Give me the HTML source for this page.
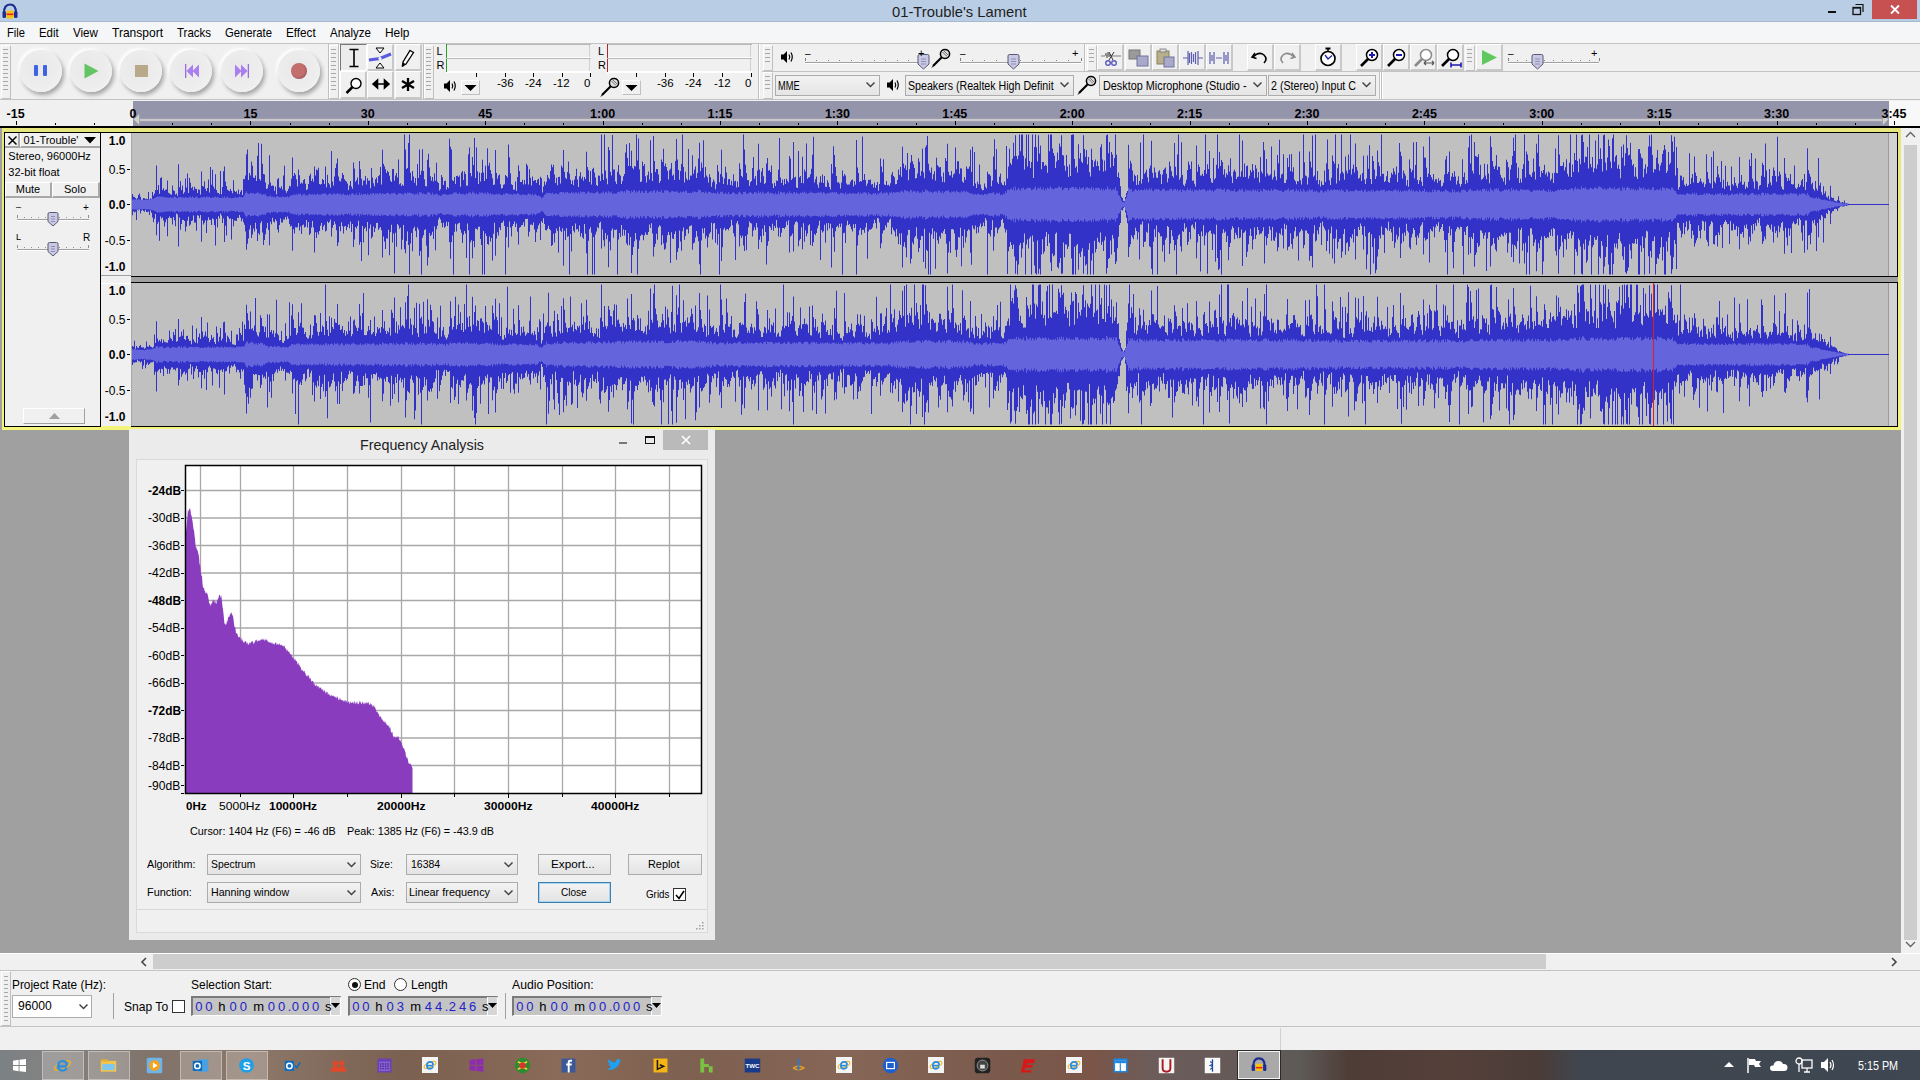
<!DOCTYPE html><html><head><meta charset="utf-8"><style>
html,body{margin:0;padding:0;width:1920px;height:1080px;overflow:hidden;background:#a0a0a0;}
body{position:relative;font-family:"Liberation Sans", sans-serif;}
.t{position:absolute;white-space:nowrap;line-height:1;}
.r{position:absolute;}
svg.r{overflow:visible}
</style></head><body>
<div class="r" style="left:0px;top:0px;width:1920px;height:22px;background:#b9cde4"></div>
<div class="r" style="left:0px;top:21px;width:1920px;height:1px;background:#a6b9cf"></div>
<div class="t" style="left:892.00px;top:4.00px;font-size:15px;color:#1e1e1e;font-weight:normal;transform:scaleX(0.9850);transform-origin:0 0;">01-Trouble's Lament</div>
<svg class="r" style="left:1px;top:2px" width="18" height="18" viewBox="0 0 18 18"><path d="M3 11 Q3 2.5 9 2.5 Q15 2.5 15 11" fill="none" stroke="#1c2c90" stroke-width="2.2"/><rect x="1.5" y="9" width="3.5" height="7" rx="1.5" fill="#1c2c90"/><rect x="13" y="9" width="3.5" height="7" rx="1.5" fill="#1c2c90"/><rect x="5.5" y="8.5" width="7" height="8" rx="1" fill="#f5c20c"/><rect x="5.5" y="11.5" width="7" height="1.6" fill="#e22"/></svg>
<div class="r" style="left:1828px;top:11px;width:8px;height:2px;background:#111"></div>
<svg class="r" style="left:1852px;top:3px" width="12" height="12" viewBox="0 0 12 12"><rect x="1" y="4.5" width="7.5" height="7" fill="none" stroke="#111" stroke-width="1.3"/><rect x="1" y="4" width="7.5" height="1.6" fill="#111"/><path d="M3.5 1.5 H11 V9" fill="none" stroke="#111" stroke-width="1.2"/></svg>
<div class="r" style="left:1872px;top:0px;width:45px;height:19px;background:#c75050"></div>
<svg class="r" style="left:1890px;top:5px" width="10" height="9" viewBox="0 0 10 9"><path d="M1 0.5 L9 8.5 M9 0.5 L1 8.5" stroke="#fff" stroke-width="1.8"/></svg>
<div class="r" style="left:0px;top:22px;width:1920px;height:21px;background:#f5f6f7"></div>
<div class="t" style="left:7.20px;top:26.30px;font-size:13px;color:#000;font-weight:normal;transform:scaleX(0.8595);transform-origin:0 0;">File</div>
<div class="t" style="left:39.00px;top:26.30px;font-size:13px;color:#000;font-weight:normal;transform:scaleX(0.8750);transform-origin:0 0;">Edit</div>
<div class="t" style="left:72.80px;top:26.30px;font-size:13px;color:#000;font-weight:normal;transform:scaleX(0.8936);transform-origin:0 0;">View</div>
<div class="t" style="left:112.00px;top:26.30px;font-size:13px;color:#000;font-weight:normal;transform:scaleX(0.9248);transform-origin:0 0;">Transport</div>
<div class="t" style="left:177.00px;top:26.30px;font-size:13px;color:#000;font-weight:normal;transform:scaleX(0.8827);transform-origin:0 0;">Tracks</div>
<div class="t" style="left:225.00px;top:26.30px;font-size:13px;color:#000;font-weight:normal;transform:scaleX(0.8672);transform-origin:0 0;">Generate</div>
<div class="t" style="left:286.00px;top:26.30px;font-size:13px;color:#000;font-weight:normal;transform:scaleX(0.8998);transform-origin:0 0;">Effect</div>
<div class="t" style="left:330.00px;top:26.30px;font-size:13px;color:#000;font-weight:normal;transform:scaleX(0.8864);transform-origin:0 0;">Analyze</div>
<div class="t" style="left:385.00px;top:26.30px;font-size:13px;color:#000;font-weight:normal;transform:scaleX(0.9162);transform-origin:0 0;">Help</div>
<div class="r" style="left:0px;top:43px;width:1920px;height:57px;background:#f0f0f0"></div>
<div class="r" style="left:0px;top:43px;width:1920px;height:1px;background:#c3c3c3"></div>
<div class="r" style="left:0px;top:99px;width:1920px;height:1px;background:#c3c3c3"></div>
<div class="r" style="left:0px;top:44px;width:329px;height:55px;background:#f0f0f0;border-right:1px solid #c0c0c0;box-sizing:border-box"></div>
<div class="r" style="left:1px;top:45px;width:10px;height:54px;background:#f0f0f0;border-left:1px solid #fff;border-top:1px solid #fff;box-sizing:border-box;border-right:1px solid #c0c0c0;border-bottom:1px solid #c0c0c0"></div>
<svg class="r" style="left:1px;top:45px" width="10" height="54" viewBox="0 0 10 54"><rect x="2" y="4" width="5" height="1" fill="#a8a8a8"/><rect x="2" y="8" width="5" height="1" fill="#a8a8a8"/><rect x="2" y="12" width="5" height="1" fill="#a8a8a8"/><rect x="2" y="16" width="5" height="1" fill="#a8a8a8"/><rect x="2" y="20" width="5" height="1" fill="#a8a8a8"/><rect x="2" y="24" width="5" height="1" fill="#a8a8a8"/><rect x="2" y="28" width="5" height="1" fill="#a8a8a8"/><rect x="2" y="32" width="5" height="1" fill="#a8a8a8"/><rect x="2" y="36" width="5" height="1" fill="#a8a8a8"/><rect x="2" y="40" width="5" height="1" fill="#a8a8a8"/><rect x="2" y="44" width="5" height="1" fill="#a8a8a8"/></svg>
<div class="r" style="left:329px;top:45px;width:10px;height:54px;background:#f0f0f0;border-left:1px solid #fff;border-top:1px solid #fff;box-sizing:border-box;border-right:1px solid #c0c0c0;border-bottom:1px solid #c0c0c0"></div>
<svg class="r" style="left:329px;top:45px" width="10" height="54" viewBox="0 0 10 54"><rect x="2" y="4" width="5" height="1" fill="#a8a8a8"/><rect x="2" y="8" width="5" height="1" fill="#a8a8a8"/><rect x="2" y="12" width="5" height="1" fill="#a8a8a8"/><rect x="2" y="16" width="5" height="1" fill="#a8a8a8"/><rect x="2" y="20" width="5" height="1" fill="#a8a8a8"/><rect x="2" y="24" width="5" height="1" fill="#a8a8a8"/><rect x="2" y="28" width="5" height="1" fill="#a8a8a8"/><rect x="2" y="32" width="5" height="1" fill="#a8a8a8"/><rect x="2" y="36" width="5" height="1" fill="#a8a8a8"/><rect x="2" y="40" width="5" height="1" fill="#a8a8a8"/><rect x="2" y="44" width="5" height="1" fill="#a8a8a8"/></svg>
<div class="r" style="left:20px;top:50px;width:42px;height:42px;border-radius:50%;background:radial-gradient(circle at 42% 42%, #e8e8e8 0%, #ededed 55%, #f4f4f4 100%);box-shadow:2px 3px 4px rgba(0,0,0,0.32), -2px -2px 3px rgba(255,255,255,0.95)"></div>
<div class="r" style="left:70px;top:50px;width:42px;height:42px;border-radius:50%;background:radial-gradient(circle at 42% 42%, #e8e8e8 0%, #ededed 55%, #f4f4f4 100%);box-shadow:2px 3px 4px rgba(0,0,0,0.32), -2px -2px 3px rgba(255,255,255,0.95)"></div>
<div class="r" style="left:120px;top:50px;width:42px;height:42px;border-radius:50%;background:radial-gradient(circle at 42% 42%, #e8e8e8 0%, #ededed 55%, #f4f4f4 100%);box-shadow:2px 3px 4px rgba(0,0,0,0.32), -2px -2px 3px rgba(255,255,255,0.95)"></div>
<div class="r" style="left:170px;top:50px;width:42px;height:42px;border-radius:50%;background:radial-gradient(circle at 42% 42%, #e8e8e8 0%, #ededed 55%, #f4f4f4 100%);box-shadow:2px 3px 4px rgba(0,0,0,0.32), -2px -2px 3px rgba(255,255,255,0.95)"></div>
<div class="r" style="left:221px;top:50px;width:42px;height:42px;border-radius:50%;background:radial-gradient(circle at 42% 42%, #e8e8e8 0%, #ededed 55%, #f4f4f4 100%);box-shadow:2px 3px 4px rgba(0,0,0,0.32), -2px -2px 3px rgba(255,255,255,0.95)"></div>
<div class="r" style="left:278px;top:50px;width:42px;height:42px;border-radius:50%;background:radial-gradient(circle at 42% 42%, #e8e8e8 0%, #ededed 55%, #f4f4f4 100%);box-shadow:2px 3px 4px rgba(0,0,0,0.32), -2px -2px 3px rgba(255,255,255,0.95)"></div>
<div class="r" style="left:34px;top:65px;width:4px;height:11px;background:#3e63e6;border-radius:1px"></div>
<div class="r" style="left:43px;top:65px;width:4px;height:11px;background:#3e63e6;border-radius:1px"></div>
<svg class="r" style="left:84px;top:63px" width="17" height="17" viewBox="0 0 17 17"><path d="M0.5 0.5 L14.5 8 L0.5 15.5 Z" fill="#62c462"/></svg>
<div class="r" style="left:135px;top:65px;width:13px;height:12px;background:#b8a98a"></div>
<svg class="r" style="left:184px;top:63px" width="16" height="16" viewBox="0 0 16 16"><rect x="1" y="1" width="1.3" height="14" fill="#9b6ce0"/><path d="M9 1.5 L2.5 8 L9 14.5Z M15 1.5 L8.5 8 L15 14.5Z" fill="#a97ef0"/></svg>
<svg class="r" style="left:234px;top:63px" width="16" height="16" viewBox="0 0 16 16"><rect x="13.7" y="1" width="1.3" height="14" fill="#9b6ce0"/><path d="M7 1.5 L13.5 8 L7 14.5Z M1 1.5 L7.5 8 L1 14.5Z" fill="#a97ef0"/></svg>
<div class="r" style="left:291px;top:63px;width:16px;height:16px;border-radius:50%;background:#c46e6e;box-shadow:inset -1px -1px 2px rgba(0,0,0,0.2)"></div>
<div class="r" style="left:338px;top:44px;width:1px;height:55px;background:#c0c0c0"></div>
<div class="r" style="left:339px;top:44px;width:1px;height:55px;background:#fff"></div>
<div class="r" style="left:340px;top:44px;width:27px;height:27px;background:#ececec;border-left:1px solid #777;border-top:1px solid #777;border-right:1px solid #fff;border-bottom:1px solid #fff;box-sizing:border-box"></div>
<div class="r" style="left:340px;top:71px;width:27px;height:28px;background:#f0f0f0;border-left:1px solid #fff;border-top:1px solid #fff;border-right:2px solid #c8c8c8;border-bottom:2px solid #c8c8c8;box-sizing:border-box"></div>
<div class="r" style="left:367px;top:44px;width:27px;height:27px;background:#f0f0f0;border-left:1px solid #fff;border-top:1px solid #fff;border-right:2px solid #c8c8c8;border-bottom:2px solid #c8c8c8;box-sizing:border-box"></div>
<div class="r" style="left:367px;top:71px;width:27px;height:28px;background:#f0f0f0;border-left:1px solid #fff;border-top:1px solid #fff;border-right:2px solid #c8c8c8;border-bottom:2px solid #c8c8c8;box-sizing:border-box"></div>
<div class="r" style="left:395px;top:44px;width:27px;height:27px;background:#f0f0f0;border-left:1px solid #fff;border-top:1px solid #fff;border-right:2px solid #c8c8c8;border-bottom:2px solid #c8c8c8;box-sizing:border-box"></div>
<div class="r" style="left:395px;top:71px;width:27px;height:28px;background:#f0f0f0;border-left:1px solid #fff;border-top:1px solid #fff;border-right:2px solid #c8c8c8;border-bottom:2px solid #c8c8c8;box-sizing:border-box"></div>
<svg class="r" style="left:346px;top:48px" width="16" height="20" viewBox="0 0 16 20"><path d="M3.5 1.5 H12.5 M8 1.5 V18.5 M3.5 18.5 H12.5" stroke="#000" stroke-width="1.6" fill="none"/></svg>
<svg class="r" style="left:368px;top:46px" width="26" height="24" viewBox="0 0 26 24"><path d="M8 2 H16 L12 7 Z M8 22 H16 L12 17Z" fill="#fff" stroke="#000" stroke-width="1"/><path d="M1 14 L12 12.5 L23 8" stroke="#5a5ae0" stroke-width="3" fill="none"/><circle cx="12" cy="12.5" r="1.5" fill="#fff"/></svg>
<svg class="r" style="left:401px;top:49px" width="14" height="18" viewBox="0 0 14 18"><path d="M9 1.5 L12.5 3.5 L5 15 L1.5 17 L2 13 Z" fill="#fff" stroke="#000" stroke-width="1.3"/><path d="M1.5 17 L3 14" stroke="#000" stroke-width="2"/></svg>
<svg class="r" style="left:345px;top:77px" width="18" height="18" viewBox="0 0 18 18"><circle cx="11" cy="6.5" r="5" fill="#fff" stroke="#000" stroke-width="1.4"/><path d="M7.5 10 L1.5 16" stroke="#000" stroke-width="2.5"/></svg>
<svg class="r" style="left:372px;top:79px" width="18" height="10" viewBox="0 0 18 10"><path d="M1 5 H17 M1 5 L5.5 1 V9 Z M17 5 L12.5 1 V9 Z" stroke="#000" stroke-width="1.6" fill="#000"/></svg>
<svg class="r" style="left:401px;top:77px" width="14" height="15" viewBox="0 0 14 15"><path d="M7 1 V14 M1 4 L13 11 M13 4 L1 11" stroke="#000" stroke-width="2.3"/></svg>
<div class="r" style="left:423px;top:44px;width:1px;height:55px;background:#c0c0c0"></div>
<div class="r" style="left:424px;top:44px;width:1px;height:55px;background:#fff"></div>
<div class="r" style="left:424px;top:45px;width:10px;height:54px;background:#f0f0f0;border-left:1px solid #fff;border-top:1px solid #fff;box-sizing:border-box;border-right:1px solid #c0c0c0;border-bottom:1px solid #c0c0c0"></div>
<svg class="r" style="left:424px;top:45px" width="10" height="54" viewBox="0 0 10 54"><rect x="2" y="4" width="5" height="1" fill="#a8a8a8"/><rect x="2" y="8" width="5" height="1" fill="#a8a8a8"/><rect x="2" y="12" width="5" height="1" fill="#a8a8a8"/><rect x="2" y="16" width="5" height="1" fill="#a8a8a8"/><rect x="2" y="20" width="5" height="1" fill="#a8a8a8"/><rect x="2" y="24" width="5" height="1" fill="#a8a8a8"/><rect x="2" y="28" width="5" height="1" fill="#a8a8a8"/><rect x="2" y="32" width="5" height="1" fill="#a8a8a8"/><rect x="2" y="36" width="5" height="1" fill="#a8a8a8"/><rect x="2" y="40" width="5" height="1" fill="#a8a8a8"/><rect x="2" y="44" width="5" height="1" fill="#a8a8a8"/></svg>
<div class="r" style="left:446px;top:45px;width:145px;height:13px;"></div>
<div class="r" style="left:446px;top:60px;width:145px;height:13px;"></div>
<div class="t" style="left:436.5px;top:45.89px;font-size:11px;color:#000;font-weight:normal;">L</div>
<div class="t" style="left:436.5px;top:59.69px;font-size:11px;color:#000;font-weight:normal;">R</div>
<div class="r" style="left:446px;top:44px;width:145px;height:1px;background:#b8b8b8"></div>
<div class="r" style="left:446px;top:57px;width:145px;height:2px;background:#fff"></div>
<div class="r" style="left:446px;top:58px;width:145px;height:1px;background:#b8b8b8"></div>
<div class="r" style="left:446px;top:71px;width:145px;height:2px;background:#fff"></div>
<div class="r" style="left:446px;top:44px;width:1px;height:14px;background:#2aa02a"></div>
<div class="r" style="left:446px;top:59px;width:1px;height:13px;background:#2aa02a"></div>
<div class="r" style="left:589px;top:45px;width:1px;height:12px;background:#d0d0d0"></div>
<div class="r" style="left:589px;top:59px;width:1px;height:12px;background:#d0d0d0"></div>
<div class="r" style="left:476px;top:73px;width:1px;height:4px;background:#000"></div>
<div class="r" style="left:505px;top:73px;width:1px;height:4px;background:#000"></div>
<div class="r" style="left:533px;top:73px;width:1px;height:4px;background:#000"></div>
<div class="r" style="left:562px;top:73px;width:1px;height:4px;background:#000"></div>
<div class="r" style="left:590px;top:73px;width:1px;height:4px;background:#000"></div>
<div class="t" style="left:497px;top:78.27px;font-size:11.5px;color:#000;font-weight:normal;">-36</div>
<div class="t" style="left:525px;top:78.27px;font-size:11.5px;color:#000;font-weight:normal;">-24</div>
<div class="t" style="left:553px;top:78.27px;font-size:11.5px;color:#000;font-weight:normal;">-12</div>
<div class="t" style="left:584px;top:78.27px;font-size:11.5px;color:#000;font-weight:normal;">0</div>
<div class="r" style="left:607px;top:45px;width:145px;height:13px;"></div>
<div class="r" style="left:607px;top:60px;width:145px;height:13px;"></div>
<div class="t" style="left:598px;top:45.89px;font-size:11px;color:#000;font-weight:normal;">L</div>
<div class="t" style="left:598px;top:59.69px;font-size:11px;color:#000;font-weight:normal;">R</div>
<div class="r" style="left:607px;top:44px;width:145px;height:1px;background:#b8b8b8"></div>
<div class="r" style="left:607px;top:57px;width:145px;height:2px;background:#fff"></div>
<div class="r" style="left:607px;top:58px;width:145px;height:1px;background:#b8b8b8"></div>
<div class="r" style="left:607px;top:71px;width:145px;height:2px;background:#fff"></div>
<div class="r" style="left:607px;top:44px;width:1px;height:14px;background:#b02a2a"></div>
<div class="r" style="left:607px;top:59px;width:1px;height:13px;background:#b02a2a"></div>
<div class="r" style="left:750px;top:45px;width:1px;height:12px;background:#d0d0d0"></div>
<div class="r" style="left:750px;top:59px;width:1px;height:12px;background:#d0d0d0"></div>
<div class="r" style="left:636px;top:73px;width:1px;height:4px;background:#000"></div>
<div class="r" style="left:665px;top:73px;width:1px;height:4px;background:#000"></div>
<div class="r" style="left:693px;top:73px;width:1px;height:4px;background:#000"></div>
<div class="r" style="left:722px;top:73px;width:1px;height:4px;background:#000"></div>
<div class="r" style="left:751px;top:73px;width:1px;height:4px;background:#000"></div>
<div class="t" style="left:657px;top:78.27px;font-size:11.5px;color:#000;font-weight:normal;">-36</div>
<div class="t" style="left:685px;top:78.27px;font-size:11.5px;color:#000;font-weight:normal;">-24</div>
<div class="t" style="left:714px;top:78.27px;font-size:11.5px;color:#000;font-weight:normal;">-12</div>
<div class="t" style="left:745px;top:78.27px;font-size:11.5px;color:#000;font-weight:normal;">0</div>
<svg class="r" style="left:443px;top:79px" width="14" height="14" viewBox="0 0 14 14"><path d="M1 4.5 H3.5 L7 1 V13 L3.5 9.5 H1 Z" fill="#000"/><path d="M9 4.5 Q10.5 7 9 9.5 M11 2.5 Q13.5 7 11 11.5" fill="none" stroke="#000" stroke-width="1.2"/></svg>
<div class="r" style="left:461px;top:80px;width:19px;height:15px;background:#f0f0f0;border-left:1px solid #fff;border-top:1px solid #fff;border-right:1px solid #c0c0c0;border-bottom:1px solid #c0c0c0;box-sizing:border-box"></div>
<svg class="r" style="left:464px;top:85px" width="13" height="6" viewBox="0 0 13 6"><path d="M0.5 0 H12.5 L6.5 6 Z" fill="#000"/></svg>
<svg class="r" style="left:600px;top:77px" width="20" height="20" viewBox="0 0 20 20"><ellipse cx="14" cy="6" rx="4.6" ry="4.4" fill="#ddd" stroke="#000" stroke-width="1.5"/><path d="M11.5 4 L16 8.5 M13 3 L17 7" stroke="#555" stroke-width="0.8"/><path d="M11 9 L2 18" stroke="#000" stroke-width="2.2"/><path d="M1 19.5 L3 17" stroke="#000" stroke-width="1"/></svg>
<div class="r" style="left:622px;top:80px;width:19px;height:15px;background:#f0f0f0;border-left:1px solid #fff;border-top:1px solid #fff;border-right:1px solid #c0c0c0;border-bottom:1px solid #c0c0c0;box-sizing:border-box"></div>
<svg class="r" style="left:625px;top:85px" width="13" height="6" viewBox="0 0 13 6"><path d="M0.5 0 H12.5 L6.5 6 Z" fill="#000"/></svg>
<div class="r" style="left:758px;top:44px;width:1px;height:55px;background:#c0c0c0"></div>
<div class="r" style="left:759px;top:44px;width:1px;height:55px;background:#fff"></div>
<div class="r" style="left:762px;top:71px;width:1158px;height:1px;background:#c3c3c3"></div>
<div class="r" style="left:763px;top:45px;width:10px;height:26px;background:#f0f0f0;border-left:1px solid #fff;border-top:1px solid #fff;box-sizing:border-box;border-right:1px solid #c0c0c0;border-bottom:1px solid #c0c0c0"></div>
<svg class="r" style="left:763px;top:45px" width="10" height="26" viewBox="0 0 10 26"><rect x="2" y="4" width="5" height="1" fill="#a8a8a8"/><rect x="2" y="8" width="5" height="1" fill="#a8a8a8"/><rect x="2" y="12" width="5" height="1" fill="#a8a8a8"/><rect x="2" y="16" width="5" height="1" fill="#a8a8a8"/></svg>
<div class="r" style="left:763px;top:72px;width:10px;height:27px;background:#f0f0f0;border-left:1px solid #fff;border-top:1px solid #fff;box-sizing:border-box;border-right:1px solid #c0c0c0;border-bottom:1px solid #c0c0c0"></div>
<svg class="r" style="left:763px;top:72px" width="10" height="27" viewBox="0 0 10 27"><rect x="2" y="4" width="5" height="1" fill="#a8a8a8"/><rect x="2" y="8" width="5" height="1" fill="#a8a8a8"/><rect x="2" y="12" width="5" height="1" fill="#a8a8a8"/><rect x="2" y="16" width="5" height="1" fill="#a8a8a8"/></svg>
<svg class="r" style="left:780px;top:50px" width="14" height="14" viewBox="0 0 14 14"><path d="M1 4.5 H3.5 L7 1 V13 L3.5 9.5 H1 Z" fill="#000"/><path d="M9 4.5 Q10.5 7 9 9.5 M11 2.5 Q13.5 7 11 11.5" fill="none" stroke="#000" stroke-width="1.2"/></svg>
<div class="r" style="left:805px;top:62px;width:115px;height:1px;background:#a0a0a0"></div>
<div class="r" style="left:805px;top:63px;width:115px;height:1px;background:#fff"></div>
<div class="r" style="left:805px;top:58px;width:1px;height:3px;background:#808080"></div>
<div class="r" style="left:816px;top:60px;width:1px;height:1px;background:#808080"></div>
<div class="r" style="left:828px;top:60px;width:1px;height:1px;background:#808080"></div>
<div class="r" style="left:839px;top:60px;width:1px;height:1px;background:#808080"></div>
<div class="r" style="left:851px;top:60px;width:1px;height:1px;background:#808080"></div>
<div class="r" style="left:862px;top:60px;width:1px;height:1px;background:#808080"></div>
<div class="r" style="left:874px;top:60px;width:1px;height:1px;background:#808080"></div>
<div class="r" style="left:885px;top:60px;width:1px;height:1px;background:#808080"></div>
<div class="r" style="left:897px;top:60px;width:1px;height:1px;background:#808080"></div>
<div class="r" style="left:908px;top:60px;width:1px;height:1px;background:#808080"></div>
<div class="r" style="left:920px;top:58px;width:1px;height:3px;background:#808080"></div>
<svg class="r" style="left:917px;top:54px" width="13" height="16" viewBox="0 0 13 16"><path d="M1 2 Q1 0.5 2.5 0.5 H10.5 Q12 0.5 12 2 V10 L6.5 15 L1 10 Z" fill="#c9c9e6" stroke="#585870" stroke-width="1"/><path d="M4 5 H9 M4 7.5 H9 M4 10 H9" stroke="#8080a0" stroke-width="0.8"/></svg>
<div class="t" style="left:805px;top:48.53px;font-size:10px;color:#000;font-weight:normal;">–</div>
<div class="t" style="left:918px;top:47.69px;font-size:11px;color:#000;font-weight:normal;">+</div>
<svg class="r" style="left:931px;top:48px" width="20" height="20" viewBox="0 0 20 20"><ellipse cx="14" cy="6" rx="4.6" ry="4.4" fill="#ddd" stroke="#000" stroke-width="1.5"/><path d="M11.5 4 L16 8.5 M13 3 L17 7" stroke="#555" stroke-width="0.8"/><path d="M11 9 L2 18" stroke="#000" stroke-width="2.2"/><path d="M1 19.5 L3 17" stroke="#000" stroke-width="1"/></svg>
<div class="r" style="left:960px;top:62px;width:121px;height:1px;background:#a0a0a0"></div>
<div class="r" style="left:960px;top:63px;width:121px;height:1px;background:#fff"></div>
<div class="r" style="left:960px;top:58px;width:1px;height:3px;background:#808080"></div>
<div class="r" style="left:972px;top:60px;width:1px;height:1px;background:#808080"></div>
<div class="r" style="left:984px;top:60px;width:1px;height:1px;background:#808080"></div>
<div class="r" style="left:996px;top:60px;width:1px;height:1px;background:#808080"></div>
<div class="r" style="left:1008px;top:60px;width:1px;height:1px;background:#808080"></div>
<div class="r" style="left:1020px;top:60px;width:1px;height:1px;background:#808080"></div>
<div class="r" style="left:1032px;top:60px;width:1px;height:1px;background:#808080"></div>
<div class="r" style="left:1044px;top:60px;width:1px;height:1px;background:#808080"></div>
<div class="r" style="left:1056px;top:60px;width:1px;height:1px;background:#808080"></div>
<div class="r" style="left:1068px;top:60px;width:1px;height:1px;background:#808080"></div>
<div class="r" style="left:1081px;top:58px;width:1px;height:3px;background:#808080"></div>
<svg class="r" style="left:1007px;top:54px" width="13" height="16" viewBox="0 0 13 16"><path d="M1 2 Q1 0.5 2.5 0.5 H10.5 Q12 0.5 12 2 V10 L6.5 15 L1 10 Z" fill="#c9c9e6" stroke="#585870" stroke-width="1"/><path d="M4 5 H9 M4 7.5 H9 M4 10 H9" stroke="#8080a0" stroke-width="0.8"/></svg>
<div class="t" style="left:960px;top:48.53px;font-size:10px;color:#000;font-weight:normal;">–</div>
<div class="t" style="left:1072px;top:47.69px;font-size:11px;color:#000;font-weight:normal;">+</div>
<div class="r" style="left:1084px;top:44px;width:1px;height:27px;background:#c0c0c0"></div>
<div class="r" style="left:1085px;top:44px;width:1px;height:27px;background:#fff"></div>
<div class="r" style="left:775px;top:75px;width:105px;height:21px;background:linear-gradient(#f2f2f2,#e5e5e5);border:1px solid #acacac;box-sizing:border-box"></div>
<div class="t" style="left:777.70px;top:80.42px;font-size:12.5px;color:#000;font-weight:normal;transform:scaleX(0.7407);transform-origin:0 0;">MME</div>
<svg class="r" style="left:866px;top:82px" width="9" height="6" viewBox="0 0 9 6"><path d="M0.5 0.5 L4.5 4.5 L8.5 0.5" fill="none" stroke="#444" stroke-width="1.5"/></svg>
<svg class="r" style="left:886px;top:78px" width="14" height="14" viewBox="0 0 14 14"><path d="M1 4.5 H3.5 L7 1 V13 L3.5 9.5 H1 Z" fill="#000"/><path d="M9 4.5 Q10.5 7 9 9.5 M11 2.5 Q13.5 7 11 11.5" fill="none" stroke="#000" stroke-width="1.2"/></svg>
<div class="r" style="left:905px;top:75px;width:169px;height:21px;background:linear-gradient(#f2f2f2,#e5e5e5);border:1px solid #acacac;box-sizing:border-box"></div>
<div class="t" style="left:908.40px;top:80.42px;font-size:12.5px;color:#000;font-weight:normal;transform:scaleX(0.8519);transform-origin:0 0;">Speakers (Realtek High Definit</div>
<svg class="r" style="left:1060px;top:82px" width="9" height="6" viewBox="0 0 9 6"><path d="M0.5 0.5 L4.5 4.5 L8.5 0.5" fill="none" stroke="#444" stroke-width="1.5"/></svg>
<svg class="r" style="left:1077px;top:75px" width="20" height="20" viewBox="0 0 20 20"><ellipse cx="14" cy="6" rx="4.6" ry="4.4" fill="#ddd" stroke="#000" stroke-width="1.5"/><path d="M11.5 4 L16 8.5 M13 3 L17 7" stroke="#555" stroke-width="0.8"/><path d="M11 9 L2 18" stroke="#000" stroke-width="2.2"/><path d="M1 19.5 L3 17" stroke="#000" stroke-width="1"/></svg>
<div class="r" style="left:1099px;top:75px;width:168px;height:21px;background:linear-gradient(#f2f2f2,#e5e5e5);border:1px solid #acacac;box-sizing:border-box"></div>
<div class="t" style="left:1102.50px;top:80.42px;font-size:12.5px;color:#000;font-weight:normal;transform:scaleX(0.8678);transform-origin:0 0;">Desktop Microphone (Studio -</div>
<svg class="r" style="left:1253px;top:82px" width="9" height="6" viewBox="0 0 9 6"><path d="M0.5 0.5 L4.5 4.5 L8.5 0.5" fill="none" stroke="#444" stroke-width="1.5"/></svg>
<div class="r" style="left:1268px;top:75px;width:108px;height:21px;background:linear-gradient(#f2f2f2,#e5e5e5);border:1px solid #acacac;box-sizing:border-box"></div>
<div class="t" style="left:1271.00px;top:80.42px;font-size:12.5px;color:#000;font-weight:normal;transform:scaleX(0.8556);transform-origin:0 0;">2 (Stereo) Input C</div>
<svg class="r" style="left:1362px;top:82px" width="9" height="6" viewBox="0 0 9 6"><path d="M0.5 0.5 L4.5 4.5 L8.5 0.5" fill="none" stroke="#444" stroke-width="1.5"/></svg>
<div class="r" style="left:1379px;top:72px;width:1px;height:27px;background:#c0c0c0"></div>
<div class="r" style="left:1380px;top:72px;width:1px;height:27px;background:#fff"></div>
<div class="r" style="left:1381px;top:72px;width:1px;height:27px;background:#c0c0c0"></div>
<div class="r" style="left:1382px;top:72px;width:1px;height:27px;background:#fff"></div>
<div class="r" style="left:1087px;top:45px;width:10px;height:26px;background:#f0f0f0;border-left:1px solid #fff;border-top:1px solid #fff;box-sizing:border-box;border-right:1px solid #c0c0c0;border-bottom:1px solid #c0c0c0"></div>
<svg class="r" style="left:1087px;top:45px" width="10" height="26" viewBox="0 0 10 26"><rect x="2" y="4" width="5" height="1" fill="#a8a8a8"/><rect x="2" y="8" width="5" height="1" fill="#a8a8a8"/><rect x="2" y="12" width="5" height="1" fill="#a8a8a8"/><rect x="2" y="16" width="5" height="1" fill="#a8a8a8"/></svg>
<div class="r" style="left:1097px;top:44px;width:27px;height:27px;background:#f0f0f0;border-left:1px solid #fff;border-top:1px solid #fff;border-right:2px solid #c8c8c8;border-bottom:2px solid #c8c8c8;box-sizing:border-box"></div>
<div class="r" style="left:1125px;top:44px;width:27px;height:27px;background:#f0f0f0;border-left:1px solid #fff;border-top:1px solid #fff;border-right:2px solid #c8c8c8;border-bottom:2px solid #c8c8c8;box-sizing:border-box"></div>
<div class="r" style="left:1152px;top:44px;width:27px;height:27px;background:#f0f0f0;border-left:1px solid #fff;border-top:1px solid #fff;border-right:2px solid #c8c8c8;border-bottom:2px solid #c8c8c8;box-sizing:border-box"></div>
<div class="r" style="left:1179px;top:44px;width:27px;height:27px;background:#f0f0f0;border-left:1px solid #fff;border-top:1px solid #fff;border-right:2px solid #c8c8c8;border-bottom:2px solid #c8c8c8;box-sizing:border-box"></div>
<div class="r" style="left:1206px;top:44px;width:27px;height:27px;background:#f0f0f0;border-left:1px solid #fff;border-top:1px solid #fff;border-right:2px solid #c8c8c8;border-bottom:2px solid #c8c8c8;box-sizing:border-box"></div>
<svg class="r" style="left:1100px;top:47px" width="22" height="22" viewBox="0 0 22 22"><path d="M1 9 H5 L6 6 L7 11 L8 5 L9 10 L10 7 L11 9 H21" fill="none" stroke="#707070" stroke-width="0.9"/><path d="M9 13 L14 5 M13 13 L9 5" stroke="#333" stroke-width="1"/><circle cx="8" cy="16" r="2.3" fill="none" stroke="#5c5cc0" stroke-width="1.4"/><circle cx="14" cy="16" r="2.3" fill="none" stroke="#5c5cc0" stroke-width="1.4"/></svg>
<svg class="r" style="left:1128px;top:48px" width="22" height="20" viewBox="0 0 22 20"><rect x="1" y="2" width="11" height="9" fill="#9a9a9a" stroke="#777" stroke-width="1"/><rect x="9" y="8" width="11" height="10" fill="#a9a9c9" stroke="#7070a0" stroke-width="1"/></svg>
<svg class="r" style="left:1155px;top:47px" width="22" height="22" viewBox="0 0 22 22"><rect x="2" y="4" width="12" height="13" fill="#b8b08a" stroke="#888060" stroke-width="1"/><rect x="5" y="2" width="6" height="3" fill="#ddd" stroke="#777" stroke-width="0.8"/><rect x="9" y="10" width="10" height="10" fill="#a9a9c9" stroke="#7070a0" stroke-width="1"/></svg>
<svg class="r" style="left:1182px;top:49px" width="22" height="18" viewBox="0 0 22 18"><path d="M1 9 H6 M16 9 H21" stroke="#5c5cb0" stroke-width="1.2"/><path d="M6 2 V16 M16 2 V16 M7.5 4 V14 M9.5 3 V15 M11.5 5 V13 M13.5 3 V15" stroke="#5c5cb0" stroke-width="1.2"/></svg>
<svg class="r" style="left:1208px;top:49px" width="22" height="18" viewBox="0 0 22 18"><path d="M2 3 V15 M4 6 V12 M6 3 V15 M8 9 H14 M16 3 V15 M18 6 V12 M20 3 V15" stroke="#5c5cb0" stroke-width="1.2"/></svg>
<div class="r" style="left:1247px;top:44px;width:27px;height:27px;background:#f0f0f0;border-left:1px solid #fff;border-top:1px solid #fff;border-right:2px solid #c8c8c8;border-bottom:2px solid #c8c8c8;box-sizing:border-box"></div>
<div class="r" style="left:1274px;top:44px;width:27px;height:27px;background:#f0f0f0;border-left:1px solid #fff;border-top:1px solid #fff;border-right:2px solid #c8c8c8;border-bottom:2px solid #c8c8c8;box-sizing:border-box"></div>
<svg class="r" style="left:1251px;top:50px" width="18" height="15" viewBox="0 0 18 15"><path d="M4 3 L1 7 L5.5 8.5" fill="none" stroke="#000" stroke-width="1.5"/><path d="M2 7 Q8 1 13 5 Q17 9 13 13" fill="none" stroke="#000" stroke-width="1.6"/></svg>
<svg class="r" style="left:1278px;top:50px" width="18" height="15" viewBox="0 0 18 15"><path d="M14 3 L17 7 L12.5 8.5" fill="none" stroke="#8a8a8a" stroke-width="1.5"/><path d="M16 7 Q10 1 5 5 Q1 9 5 13" fill="none" stroke="#8a8a8a" stroke-width="1.6"/></svg>
<div class="r" style="left:1315px;top:44px;width:27px;height:27px;background:#f0f0f0;border-left:1px solid #fff;border-top:1px solid #fff;border-right:2px solid #c8c8c8;border-bottom:2px solid #c8c8c8;box-sizing:border-box"></div>
<svg class="r" style="left:1318px;top:46px" width="20" height="22" viewBox="0 0 20 22"><circle cx="10" cy="12.5" r="7" fill="#fff" stroke="#000" stroke-width="1.7"/><rect x="7.5" y="1.5" width="5" height="2" fill="#000"/><path d="M10 3 V5.5" stroke="#000" stroke-width="1.5"/><path d="M7 9 L10 13 L14 9.5" stroke="#2020b0" stroke-width="1.3" fill="none"/></svg>
<div class="r" style="left:1356px;top:44px;width:27px;height:27px;background:#f0f0f0;border-left:1px solid #fff;border-top:1px solid #fff;border-right:2px solid #c8c8c8;border-bottom:2px solid #c8c8c8;box-sizing:border-box"></div>
<div class="r" style="left:1383px;top:44px;width:27px;height:27px;background:#f0f0f0;border-left:1px solid #fff;border-top:1px solid #fff;border-right:2px solid #c8c8c8;border-bottom:2px solid #c8c8c8;box-sizing:border-box"></div>
<div class="r" style="left:1410px;top:44px;width:27px;height:27px;background:#f0f0f0;border-left:1px solid #fff;border-top:1px solid #fff;border-right:2px solid #c8c8c8;border-bottom:2px solid #c8c8c8;box-sizing:border-box"></div>
<div class="r" style="left:1437px;top:44px;width:27px;height:27px;background:#f0f0f0;border-left:1px solid #fff;border-top:1px solid #fff;border-right:2px solid #c8c8c8;border-bottom:2px solid #c8c8c8;box-sizing:border-box"></div>
<svg class="r" style="left:1359px;top:47px" width="22" height="22" viewBox="0 0 22 22"><circle cx="13" cy="8" r="5.5" fill="#fff" stroke="#000" stroke-width="1.5"/><path d="M9 12 L2 19" stroke="#000" stroke-width="2.6"/><path d="M10 8 H16 M13 5 V11" stroke="#1a1ab0" stroke-width="2"/></svg>
<svg class="r" style="left:1386px;top:47px" width="22" height="22" viewBox="0 0 22 22"><circle cx="13" cy="8" r="5.5" fill="#fff" stroke="#000" stroke-width="1.5"/><path d="M9 12 L2 19" stroke="#000" stroke-width="2.6"/><path d="M10 8 H16" stroke="#1a1ab0" stroke-width="2"/></svg>
<svg class="r" style="left:1413px;top:47px" width="22" height="22" viewBox="0 0 22 22"><circle cx="13" cy="8" r="5.5" fill="#fff" stroke="#8a8a8a" stroke-width="1.5"/><path d="M9 12 L2 19" stroke="#8a8a8a" stroke-width="2.6"/><path d="M11 16 H21 M11 16 L13 14 M11 16 L13 18 M21 16 L19 14 M21 16 L19 18" stroke="#555" stroke-width="1.2" fill="none"/></svg>
<svg class="r" style="left:1440px;top:47px" width="22" height="22" viewBox="0 0 22 22"><circle cx="13" cy="8" r="5.5" fill="#fff" stroke="#000" stroke-width="1.5"/><path d="M9 12 L2 19" stroke="#000" stroke-width="2.6"/><path d="M11 18 H21 M11 15.5 V20.5 M21 15.5 V20.5" stroke="#1a1ab0" stroke-width="1.6"/></svg>
<div class="r" style="left:1465px;top:45px;width:10px;height:26px;background:#f0f0f0;border-left:1px solid #fff;border-top:1px solid #fff;box-sizing:border-box;border-right:1px solid #c0c0c0;border-bottom:1px solid #c0c0c0"></div>
<svg class="r" style="left:1465px;top:45px" width="10" height="26" viewBox="0 0 10 26"><rect x="2" y="4" width="5" height="1" fill="#a8a8a8"/><rect x="2" y="8" width="5" height="1" fill="#a8a8a8"/><rect x="2" y="12" width="5" height="1" fill="#a8a8a8"/><rect x="2" y="16" width="5" height="1" fill="#a8a8a8"/></svg>
<div class="r" style="left:1476px;top:44px;width:27px;height:27px;background:#f0f0f0;border-left:1px solid #fff;border-top:1px solid #fff;border-right:2px solid #c8c8c8;border-bottom:2px solid #c8c8c8;box-sizing:border-box"></div>
<svg class="r" style="left:1481px;top:49px" width="17" height="17" viewBox="0 0 17 17"><path d="M1 1 L16 8.5 L1 16 Z" fill="#5fc95f"/></svg>
<div class="r" style="left:1508px;top:62px;width:91px;height:1px;background:#a0a0a0"></div>
<div class="r" style="left:1508px;top:63px;width:91px;height:1px;background:#fff"></div>
<div class="r" style="left:1508px;top:58px;width:1px;height:3px;background:#808080"></div>
<div class="r" style="left:1517px;top:60px;width:1px;height:1px;background:#808080"></div>
<div class="r" style="left:1526px;top:60px;width:1px;height:1px;background:#808080"></div>
<div class="r" style="left:1535px;top:60px;width:1px;height:1px;background:#808080"></div>
<div class="r" style="left:1544px;top:60px;width:1px;height:1px;background:#808080"></div>
<div class="r" style="left:1553px;top:60px;width:1px;height:1px;background:#808080"></div>
<div class="r" style="left:1562px;top:60px;width:1px;height:1px;background:#808080"></div>
<div class="r" style="left:1571px;top:60px;width:1px;height:1px;background:#808080"></div>
<div class="r" style="left:1580px;top:60px;width:1px;height:1px;background:#808080"></div>
<div class="r" style="left:1589px;top:60px;width:1px;height:1px;background:#808080"></div>
<div class="r" style="left:1599px;top:58px;width:1px;height:3px;background:#808080"></div>
<svg class="r" style="left:1531px;top:54px" width="13" height="16" viewBox="0 0 13 16"><path d="M1 2 Q1 0.5 2.5 0.5 H10.5 Q12 0.5 12 2 V10 L6.5 15 L1 10 Z" fill="#c9c9e6" stroke="#585870" stroke-width="1"/><path d="M4 5 H9 M4 7.5 H9 M4 10 H9" stroke="#8080a0" stroke-width="0.8"/></svg>
<div class="t" style="left:1508px;top:48.53px;font-size:10px;color:#000;font-weight:normal;">–</div>
<div class="t" style="left:1591px;top:47.69px;font-size:11px;color:#000;font-weight:normal;">+</div>
<div class="r" style="left:0px;top:100px;width:1920px;height:27px;background:#f0f0f0"></div>
<div class="r" style="left:133px;top:101px;width:1756px;height:26px;background:#9494aa"></div>
<div class="r" style="left:1889px;top:101px;width:31px;height:26px;background:#f8f8f8"></div>
<div class="r" style="left:139px;top:119px;width:1745px;height:2px;background:#c9c9cc;box-shadow:0 -0.5px 0 #a6a6b0, 0 0.5px 0 #a6a6b0"></div>
<svg class="r" style="left:133px;top:113px" width="7" height="13" viewBox="0 0 7 13"><path d="M6.5 0.5 V12.5 L0.5 6.5 Z" fill="#d0d0d0" stroke="#a0a0a0" stroke-width="0.8"/></svg>
<svg class="r" style="left:1882px;top:113px" width="7" height="13" viewBox="0 0 7 13"><path d="M0.5 0.5 V12.5 L6.5 6.5 Z" fill="#d0d0d0" stroke="#a0a0a0" stroke-width="0.8"/></svg>
<div class="t" style="left:-284.4px;width:600px;text-align:center;top:108.42px;font-size:12.5px;color:#000;font-weight:bold;">-15</div>
<div class="r" style="left:16px;top:121px;width:1px;height:4px;background:#000"></div>
<div class="t" style="left:-167.0px;width:600px;text-align:center;top:108.42px;font-size:12.5px;color:#000;font-weight:bold;">0</div>
<div class="t" style="left:-49.599999999999994px;width:600px;text-align:center;top:108.42px;font-size:12.5px;color:#000;font-weight:bold;">15</div>
<div class="r" style="left:250px;top:121px;width:1px;height:4px;background:#000"></div>
<div class="t" style="left:67.80000000000001px;width:600px;text-align:center;top:108.42px;font-size:12.5px;color:#000;font-weight:bold;">30</div>
<div class="r" style="left:368px;top:121px;width:1px;height:4px;background:#000"></div>
<div class="t" style="left:185.20000000000005px;width:600px;text-align:center;top:108.42px;font-size:12.5px;color:#000;font-weight:bold;">45</div>
<div class="r" style="left:485px;top:121px;width:1px;height:4px;background:#000"></div>
<div class="t" style="left:302.6px;width:600px;text-align:center;top:108.42px;font-size:12.5px;color:#000;font-weight:bold;">1:00</div>
<div class="r" style="left:603px;top:121px;width:1px;height:4px;background:#000"></div>
<div class="t" style="left:420.0px;width:600px;text-align:center;top:108.42px;font-size:12.5px;color:#000;font-weight:bold;">1:15</div>
<div class="r" style="left:720px;top:121px;width:1px;height:4px;background:#000"></div>
<div class="t" style="left:537.4000000000001px;width:600px;text-align:center;top:108.42px;font-size:12.5px;color:#000;font-weight:bold;">1:30</div>
<div class="r" style="left:837px;top:121px;width:1px;height:4px;background:#000"></div>
<div class="t" style="left:654.8000000000001px;width:600px;text-align:center;top:108.42px;font-size:12.5px;color:#000;font-weight:bold;">1:45</div>
<div class="r" style="left:955px;top:121px;width:1px;height:4px;background:#000"></div>
<div class="t" style="left:772.2px;width:600px;text-align:center;top:108.42px;font-size:12.5px;color:#000;font-weight:bold;">2:00</div>
<div class="r" style="left:1072px;top:121px;width:1px;height:4px;background:#000"></div>
<div class="t" style="left:889.6000000000001px;width:600px;text-align:center;top:108.42px;font-size:12.5px;color:#000;font-weight:bold;">2:15</div>
<div class="r" style="left:1190px;top:121px;width:1px;height:4px;background:#000"></div>
<div class="t" style="left:1007.0px;width:600px;text-align:center;top:108.42px;font-size:12.5px;color:#000;font-weight:bold;">2:30</div>
<div class="r" style="left:1307px;top:121px;width:1px;height:4px;background:#000"></div>
<div class="t" style="left:1124.4px;width:600px;text-align:center;top:108.42px;font-size:12.5px;color:#000;font-weight:bold;">2:45</div>
<div class="r" style="left:1424px;top:121px;width:1px;height:4px;background:#000"></div>
<div class="t" style="left:1241.8000000000002px;width:600px;text-align:center;top:108.42px;font-size:12.5px;color:#000;font-weight:bold;">3:00</div>
<div class="r" style="left:1542px;top:121px;width:1px;height:4px;background:#000"></div>
<div class="t" style="left:1359.2px;width:600px;text-align:center;top:108.42px;font-size:12.5px;color:#000;font-weight:bold;">3:15</div>
<div class="r" style="left:1659px;top:121px;width:1px;height:4px;background:#000"></div>
<div class="t" style="left:1476.6000000000001px;width:600px;text-align:center;top:108.42px;font-size:12.5px;color:#000;font-weight:bold;">3:30</div>
<div class="r" style="left:1777px;top:121px;width:1px;height:4px;background:#000"></div>
<div class="t" style="left:1594.0px;width:600px;text-align:center;top:108.42px;font-size:12.5px;color:#000;font-weight:bold;">3:45</div>
<div class="r" style="left:1894px;top:121px;width:1px;height:4px;background:#000"></div>
<div class="r" style="left:55px;top:123px;width:1px;height:2px;background:#000"></div>
<div class="r" style="left:94px;top:123px;width:1px;height:2px;background:#000"></div>
<div class="r" style="left:172px;top:123px;width:1px;height:2px;background:#000"></div>
<div class="r" style="left:211px;top:123px;width:1px;height:2px;background:#000"></div>
<div class="r" style="left:290px;top:123px;width:1px;height:2px;background:#000"></div>
<div class="r" style="left:329px;top:123px;width:1px;height:2px;background:#000"></div>
<div class="r" style="left:407px;top:123px;width:1px;height:2px;background:#000"></div>
<div class="r" style="left:446px;top:123px;width:1px;height:2px;background:#000"></div>
<div class="r" style="left:524px;top:123px;width:1px;height:2px;background:#000"></div>
<div class="r" style="left:563px;top:123px;width:1px;height:2px;background:#000"></div>
<div class="r" style="left:642px;top:123px;width:1px;height:2px;background:#000"></div>
<div class="r" style="left:681px;top:123px;width:1px;height:2px;background:#000"></div>
<div class="r" style="left:759px;top:123px;width:1px;height:2px;background:#000"></div>
<div class="r" style="left:798px;top:123px;width:1px;height:2px;background:#000"></div>
<div class="r" style="left:877px;top:123px;width:1px;height:2px;background:#000"></div>
<div class="r" style="left:916px;top:123px;width:1px;height:2px;background:#000"></div>
<div class="r" style="left:994px;top:123px;width:1px;height:2px;background:#000"></div>
<div class="r" style="left:1033px;top:123px;width:1px;height:2px;background:#000"></div>
<div class="r" style="left:1111px;top:123px;width:1px;height:2px;background:#000"></div>
<div class="r" style="left:1150px;top:123px;width:1px;height:2px;background:#000"></div>
<div class="r" style="left:1229px;top:123px;width:1px;height:2px;background:#000"></div>
<div class="r" style="left:1268px;top:123px;width:1px;height:2px;background:#000"></div>
<div class="r" style="left:1346px;top:123px;width:1px;height:2px;background:#000"></div>
<div class="r" style="left:1385px;top:123px;width:1px;height:2px;background:#000"></div>
<div class="r" style="left:1464px;top:123px;width:1px;height:2px;background:#000"></div>
<div class="r" style="left:1503px;top:123px;width:1px;height:2px;background:#000"></div>
<div class="r" style="left:1581px;top:123px;width:1px;height:2px;background:#000"></div>
<div class="r" style="left:1620px;top:123px;width:1px;height:2px;background:#000"></div>
<div class="r" style="left:1698px;top:123px;width:1px;height:2px;background:#000"></div>
<div class="r" style="left:1737px;top:123px;width:1px;height:2px;background:#000"></div>
<div class="r" style="left:1816px;top:123px;width:1px;height:2px;background:#000"></div>
<div class="r" style="left:1855px;top:123px;width:1px;height:2px;background:#000"></div>
<div class="r" style="left:0px;top:126px;width:1920px;height:2px;background:#000"></div>
<div class="r" style="left:0px;top:128px;width:1920px;height:825px;background:#a0a0a0"></div>
<div class="r" style="left:2px;top:128px;width:1899px;height:302px;background:linear-gradient(#e6e67e,#f4f47a)"></div>
<div class="r" style="left:4px;top:132px;width:97px;height:295px;background:#f0f0f0;border:1px solid #000;border-right:none;box-sizing:border-box"></div>
<div class="r" style="left:100px;top:132px;width:1px;height:295px;background:#000"></div>
<div class="r" style="left:5px;top:133px;width:15px;height:15px;background:#f0f0f0;border-right:2px solid #a8a8a8;border-bottom:2px solid #a8a8a8;box-sizing:border-box;"></div>
<svg class="r" style="left:8px;top:136px" width="9" height="9" viewBox="0 0 9 9"><path d="M0.5 0.5 L8.5 8.5 M8.5 0.5 L0.5 8.5" stroke="#000" stroke-width="1.5"/></svg>
<div class="r" style="left:20px;top:133px;width:80px;height:15px;background:#f0f0f0;border-bottom:2px solid #a8a8a8;border-left:1px solid #fff;box-sizing:border-box"></div>
<div class="t" style="left:23.5px;top:135.49px;font-size:11px;color:#000;font-weight:normal;">01-Trouble'</div>
<svg class="r" style="left:84px;top:137px" width="12" height="7" viewBox="0 0 12 7"><path d="M0 0 H12 L6 6.5 Z" fill="#000"/></svg>
<div class="t" style="left:8.3px;top:151.49px;font-size:11px;color:#000;font-weight:normal;">Stereo, 96000Hz</div>
<div class="t" style="left:8.3px;top:167.39px;font-size:11px;color:#000;font-weight:normal;">32-bit float</div>
<div class="r" style="left:5px;top:182px;width:47px;height:16px;background:#f0f0f0;border-top:1px solid #fff;border-left:1px solid #fff;border-right:2px solid #a8a8a8;border-bottom:2px solid #a8a8a8;box-sizing:border-box"></div>
<div class="r" style="left:52px;top:182px;width:48px;height:16px;background:#f0f0f0;border-top:1px solid #fff;border-left:1px solid #fff;border-right:2px solid #a8a8a8;border-bottom:2px solid #a8a8a8;box-sizing:border-box"></div>
<div class="t" style="left:-272px;width:600px;text-align:center;top:184.09px;font-size:11px;color:#000;font-weight:normal;">Mute</div>
<div class="t" style="left:-225px;width:600px;text-align:center;top:184.09px;font-size:11px;color:#000;font-weight:normal;">Solo</div>
<div class="r" style="left:17px;top:219px;width:72px;height:1px;background:#a0a0a0"></div>
<div class="r" style="left:17px;top:220px;width:72px;height:1px;background:#fff"></div>
<div class="r" style="left:17px;top:215px;width:1px;height:3px;background:#909090"></div>
<div class="r" style="left:24px;top:217px;width:1px;height:1px;background:#909090"></div>
<div class="r" style="left:31px;top:217px;width:1px;height:1px;background:#909090"></div>
<div class="r" style="left:38px;top:217px;width:1px;height:1px;background:#909090"></div>
<div class="r" style="left:45px;top:217px;width:1px;height:1px;background:#909090"></div>
<div class="r" style="left:52px;top:217px;width:1px;height:1px;background:#909090"></div>
<div class="r" style="left:59px;top:217px;width:1px;height:1px;background:#909090"></div>
<div class="r" style="left:66px;top:217px;width:1px;height:1px;background:#909090"></div>
<div class="r" style="left:73px;top:217px;width:1px;height:1px;background:#909090"></div>
<div class="r" style="left:80px;top:217px;width:1px;height:1px;background:#909090"></div>
<div class="r" style="left:88px;top:215px;width:1px;height:3px;background:#909090"></div>
<svg class="r" style="left:47px;top:212px" width="12" height="15" viewBox="0 0 12 15"><path d="M1 2 Q1 0.5 2.5 0.5 H9.5 Q11 0.5 11 2 V9.5 L6 14 L1 9.5 Z" fill="#c9c9e6" stroke="#585870" stroke-width="1"/><path d="M4 4.5 H8 M4 7 H8 M4 9.5 H8" stroke="#8080a0" stroke-width="0.8"/></svg>
<div class="t" style="left:16px;top:203.38px;font-size:9px;color:#000;font-weight:normal;">–</div>
<div class="t" style="left:83px;top:202.53px;font-size:10px;color:#000;font-weight:normal;">+</div>
<div class="r" style="left:17px;top:249px;width:72px;height:1px;background:#a0a0a0"></div>
<div class="r" style="left:17px;top:250px;width:72px;height:1px;background:#fff"></div>
<div class="r" style="left:17px;top:245px;width:1px;height:3px;background:#909090"></div>
<div class="r" style="left:24px;top:247px;width:1px;height:1px;background:#909090"></div>
<div class="r" style="left:31px;top:247px;width:1px;height:1px;background:#909090"></div>
<div class="r" style="left:38px;top:247px;width:1px;height:1px;background:#909090"></div>
<div class="r" style="left:45px;top:247px;width:1px;height:1px;background:#909090"></div>
<div class="r" style="left:52px;top:247px;width:1px;height:1px;background:#909090"></div>
<div class="r" style="left:59px;top:247px;width:1px;height:1px;background:#909090"></div>
<div class="r" style="left:66px;top:247px;width:1px;height:1px;background:#909090"></div>
<div class="r" style="left:73px;top:247px;width:1px;height:1px;background:#909090"></div>
<div class="r" style="left:80px;top:247px;width:1px;height:1px;background:#909090"></div>
<div class="r" style="left:88px;top:245px;width:1px;height:3px;background:#909090"></div>
<svg class="r" style="left:47px;top:242px" width="12" height="15" viewBox="0 0 12 15"><path d="M1 2 Q1 0.5 2.5 0.5 H9.5 Q11 0.5 11 2 V9.5 L6 14 L1 9.5 Z" fill="#c9c9e6" stroke="#585870" stroke-width="1"/><path d="M4 4.5 H8 M4 7 H8 M4 9.5 H8" stroke="#8080a0" stroke-width="0.8"/></svg>
<div class="t" style="left:16px;top:233.38px;font-size:9px;color:#000;font-weight:normal;">L</div>
<div class="t" style="left:83px;top:232.53px;font-size:10px;color:#000;font-weight:normal;">R</div>
<div class="r" style="left:23px;top:408px;width:62px;height:16px;background:#f0f0f0;border-top:1px solid #fff;border-left:1px solid #fff;border-right:1px solid #a0a0a0;border-bottom:1px solid #a0a0a0;box-sizing:border-box"></div>
<svg class="r" style="left:49px;top:413px" width="11" height="6" viewBox="0 0 11 6"><path d="M0 6 H11 L5.5 0 Z" fill="#a0a0a0"/></svg>
<div class="r" style="left:101px;top:133px;width:30px;height:143px;background:#f0f0f0"></div>
<div class="t" style="left:-474.5px;width:600px;text-align:right;top:134.64px;font-size:12px;color:#000;font-weight:bold;">1.0</div>
<div class="t" style="left:-474.5px;width:600px;text-align:right;top:163.64px;font-size:12px;color:#000;font-weight:normal;">0.5</div>
<div class="r" style="left:127px;top:169px;width:3px;height:1px;background:#000"></div>
<div class="t" style="left:-474.5px;width:600px;text-align:right;top:198.84px;font-size:12px;color:#000;font-weight:bold;">0.0</div>
<div class="r" style="left:127px;top:204px;width:3px;height:1px;background:#000"></div>
<div class="t" style="left:-474.5px;width:600px;text-align:right;top:234.84px;font-size:12px;color:#000;font-weight:normal;">-0.5</div>
<div class="r" style="left:127px;top:240px;width:3px;height:1px;background:#000"></div>
<div class="t" style="left:-474.5px;width:600px;text-align:right;top:261.44px;font-size:12px;color:#000;font-weight:bold;">-1.0</div>
<div class="r" style="left:101px;top:283px;width:30px;height:143px;background:#f0f0f0"></div>
<div class="t" style="left:-474.5px;width:600px;text-align:right;top:284.64px;font-size:12px;color:#000;font-weight:bold;">1.0</div>
<div class="t" style="left:-474.5px;width:600px;text-align:right;top:313.64px;font-size:12px;color:#000;font-weight:normal;">0.5</div>
<div class="r" style="left:127px;top:319px;width:3px;height:1px;background:#000"></div>
<div class="t" style="left:-474.5px;width:600px;text-align:right;top:348.84px;font-size:12px;color:#000;font-weight:bold;">0.0</div>
<div class="r" style="left:127px;top:354px;width:3px;height:1px;background:#000"></div>
<div class="t" style="left:-474.5px;width:600px;text-align:right;top:384.84px;font-size:12px;color:#000;font-weight:normal;">-0.5</div>
<div class="r" style="left:127px;top:390px;width:3px;height:1px;background:#000"></div>
<div class="t" style="left:-474.5px;width:600px;text-align:right;top:411.44px;font-size:12px;color:#000;font-weight:bold;">-1.0</div>
<div class="r" style="left:101px;top:275px;width:30px;height:1px;background:#a0a0a0"></div>
<div class="r" style="left:101px;top:276px;width:30px;height:7px;background:#f0f0f0"></div>
<div class="r" style="left:101px;top:283px;width:30px;height:1px;background:#fff"></div>
<div class="r" style="left:131px;top:133px;width:1767px;height:143px;background:#c0c0c0"></div>
<div class="r" style="left:131px;top:133px;width:1px;height:143px;background:#a8a8a8"></div>
<div class="r" style="left:1888px;top:133px;width:1px;height:143px;background:#9a9a9a"></div>
<div class="r" style="left:1889px;top:133px;width:8px;height:143px;background:#d2d2d2"></div>
<div class="r" style="left:1897px;top:133px;width:1px;height:143px;background:#000"></div>
<div class="r" style="left:131px;top:283px;width:1767px;height:143px;background:#c0c0c0"></div>
<div class="r" style="left:131px;top:283px;width:1px;height:143px;background:#a8a8a8"></div>
<div class="r" style="left:1888px;top:283px;width:1px;height:143px;background:#9a9a9a"></div>
<div class="r" style="left:1889px;top:283px;width:8px;height:143px;background:#d2d2d2"></div>
<div class="r" style="left:1897px;top:283px;width:1px;height:143px;background:#000"></div>
<div class="r" style="left:131px;top:276px;width:1767px;height:1px;background:#000"></div>
<div class="r" style="left:131px;top:277px;width:1767px;height:5px;background:#a0a0a0"></div>
<div class="r" style="left:131px;top:282px;width:1767px;height:1px;background:#000"></div>
<div class="r" style="left:131px;top:426px;width:1767px;height:1px;background:#000"></div>
<div class="r" style="left:4px;top:132px;width:1894px;height:1px;background:#000"></div>
<svg class="r" style="left:0px;top:0px" width="1920" height="1080" viewBox="0 0 1920 1080"><path d="M132 194.0 133 194.0 133 196.5 134 196.5 134 197.0 135 197.0 135 197.9 136 197.9 136 199.5 137 199.5 137 198.1 138 198.1 138 194.9 139 194.9 139 193.5 140 193.5 140 196.7 141 196.7 141 200.1 142 200.1 142 199.7 143 199.7 143 198.0 144 198.0 144 198.3 145 198.3 145 198.9 146 198.9 146 198.7 147 198.7 147 199.1 148 199.1 148 192.0 149 192.0 149 199.8 150 199.8 150 198.6 151 198.6 151 198.8 152 198.8 152 191.9 153 191.9 153 195.4 154 195.4 154 193.4 155 193.4 155 190.0 156 190.0 156 165.5 157 165.5 157 190.0 158 190.0 158 184.9 159 184.9 159 193.7 160 193.7 160 177.9 161 177.9 161 177.2 162 177.2 162 190.0 163 190.0 163 188.3 164 188.3 164 190.8 165 190.8 165 189.7 166 189.7 166 189.6 167 189.6 167 180.6 168 180.6 168 192.7 169 192.7 169 193.4 170 193.4 170 194.3 171 194.3 171 194.8 172 194.8 172 185.4 173 185.4 173 190.3 174 190.3 174 191.1 175 191.1 175 194.6 176 194.6 176 193.6 177 193.6 177 195.7 178 195.7 178 164.3 179 164.3 179 187.3 180 187.3 180 181.1 181 181.1 181 189.9 182 189.9 182 185.6 183 185.6 183 193.8 184 193.8 184 192.3 185 192.3 185 178.4 186 178.4 186 187.6 187 187.6 187 173.6 188 173.6 188 193.0 189 193.0 189 177.9 190 177.9 190 182.7 191 182.7 191 187.9 192 187.9 192 186.8 193 186.8 193 190.2 194 190.2 194 186.8 195 186.8 195 188.8 196 188.8 196 188.9 197 188.9 197 192.9 198 192.9 198 189.4 199 189.4 199 189.8 200 189.8 200 194.5 201 194.5 201 171.4 202 171.4 202 186.0 203 186.0 203 186.4 204 186.4 204 181.3 205 181.3 205 188.7 206 188.7 206 191.1 207 191.1 207 188.0 208 188.0 208 179.4 209 179.4 209 192.6 210 192.6 210 167.0 211 167.0 211 184.8 212 184.8 212 169.8 213 169.8 213 186.4 214 186.4 214 188.7 215 188.7 215 174.2 216 174.2 216 190.0 217 190.0 217 192.8 218 192.8 218 193.1 219 193.1 219 194.3 220 194.3 220 170.9 221 170.9 221 194.2 222 194.2 222 187.1 223 187.1 223 171.2 224 171.2 224 166.5 225 166.5 225 181.5 226 181.5 226 186.1 227 186.1 227 189.8 228 189.8 228 190.6 229 190.6 229 191.2 230 191.2 230 189.0 231 189.0 231 191.0 232 191.0 232 193.2 233 193.2 233 180.2 234 180.2 234 190.7 235 190.7 235 191.9 236 191.9 236 191.3 237 191.3 237 193.7 238 193.7 238 189.6 239 189.6 239 194.3 240 194.3 240 191.7 241 191.7 241 190.0 242 190.0 242 195.1 243 195.1 243 179.0 244 179.0 244 179.2 245 179.2 245 175.5 246 175.5 246 154.3 247 154.3 247 149.4 248 149.4 248 180.0 249 180.0 249 173.0 250 173.0 250 175.6 251 175.6 251 161.6 252 161.6 252 165.8 253 165.8 253 177.4 254 177.4 254 177.9 255 177.9 255 175.6 256 175.6 256 180.9 257 180.9 257 155.8 258 155.8 258 143.1 259 143.1 259 178.9 260 178.9 260 180.6 261 180.6 261 143.8 262 143.8 262 163.8 263 163.8 263 174.0 264 174.0 264 174.4 265 174.4 265 182.5 266 182.5 266 189.1 267 189.1 267 188.2 268 188.2 268 184.6 269 184.6 269 155.3 270 155.3 270 182.4 271 182.4 271 186.1 272 186.1 272 185.4 273 185.4 273 185.8 274 185.8 274 190.7 275 190.7 275 186.4 276 186.4 276 194.2 277 194.2 277 179.2 278 179.2 278 177.9 279 177.9 279 187.4 280 187.4 280 188.2 281 188.2 281 186.2 282 186.2 282 189.4 283 189.4 283 175.6 284 175.6 284 165.8 285 165.8 285 190.6 286 190.6 286 192.8 287 192.8 287 191.0 288 191.0 288 188.7 289 188.7 289 185.7 290 185.7 290 186.6 291 186.6 291 178.8 292 178.8 292 157.4 293 157.4 293 176.0 294 176.0 294 173.1 295 173.1 295 174.7 296 174.7 296 179.2 297 179.2 297 186.5 298 186.5 298 169.5 299 169.5 299 175.2 300 175.2 300 183.8 301 183.8 301 182.4 302 182.4 302 183.6 303 183.6 303 180.0 304 180.0 304 179.1 305 179.1 305 183.8 306 183.8 306 190.0 307 190.0 307 189.3 308 189.3 308 183.9 309 183.9 309 175.8 310 175.8 310 173.8 311 173.8 311 181.1 312 181.1 312 178.7 313 178.7 313 181.7 314 181.7 314 166.4 315 166.4 315 175.6 316 175.6 316 169.6 317 169.6 317 170.2 318 170.2 318 167.7 319 167.7 319 184.0 320 184.0 320 184.4 321 184.4 321 183.9 322 183.9 322 178.9 323 178.9 323 179.9 324 179.9 324 184.0 325 184.0 325 166.5 326 166.5 326 187.3 327 187.3 327 174.8 328 174.8 328 183.1 329 183.1 329 184.4 330 184.4 330 187.8 331 187.8 331 151.1 332 151.1 332 181.6 333 181.6 333 185.6 334 185.6 334 176.5 335 176.5 335 168.0 336 168.0 336 163.5 337 163.5 337 158.4 338 158.4 338 176.4 339 176.4 339 180.7 340 180.7 340 181.4 341 181.4 341 178.5 342 178.5 342 173.0 343 173.0 343 174.9 344 174.9 344 179.3 345 179.3 345 180.8 346 180.8 346 181.5 347 181.5 347 183.4 348 183.4 348 190.0 349 190.0 349 185.6 350 185.6 350 181.0 351 181.0 351 186.6 352 186.6 352 188.7 353 188.7 353 162.5 354 162.5 354 168.6 355 168.6 355 181.8 356 181.8 356 180.3 357 180.3 357 177.4 358 177.4 358 184.5 359 184.5 359 161.0 360 161.0 360 169.3 361 169.3 361 178.7 362 178.7 362 185.4 363 185.4 363 180.4 364 180.4 364 180.5 365 180.5 365 175.9 366 175.9 366 184.4 367 184.4 367 178.2 368 178.2 368 180.8 369 180.8 369 180.6 370 180.6 370 188.3 371 188.3 371 168.1 372 168.1 372 177.6 373 177.6 373 183.3 374 183.3 374 186.3 375 186.3 375 179.3 376 179.3 376 177.6 377 177.6 377 183.1 378 183.1 378 176.0 379 176.0 379 175.0 380 175.0 380 167.0 381 167.0 381 184.6 382 184.6 382 149.7 383 149.7 383 163.7 384 163.7 384 166.3 385 166.3 385 169.3 386 169.3 386 173.0 387 173.0 387 170.8 388 170.8 388 171.9 389 171.9 389 175.8 390 175.8 390 180.8 391 180.8 391 182.0 392 182.0 392 168.9 393 168.9 393 168.9 394 168.9 394 180.8 395 180.8 395 175.5 396 175.5 396 173.1 397 173.1 397 177.5 398 177.5 398 159.5 399 159.5 399 184.2 400 184.2 400 183.3 401 183.3 401 186.0 402 186.0 402 184.5 403 184.5 403 185.7 404 185.7 404 134.6 405 134.6 405 149.5 406 149.5 406 168.9 407 168.9 407 167.9 408 167.9 408 143.1 409 143.1 409 134.6 410 134.6 410 172.8 411 172.8 411 180.6 412 180.6 412 171.1 413 171.1 413 176.6 414 176.6 414 182.8 415 182.8 415 178.0 416 178.0 416 185.4 417 185.4 417 164.0 418 164.0 418 178.1 419 178.1 419 149.5 420 149.5 420 174.8 421 174.8 421 170.7 422 170.7 422 149.2 423 149.2 423 171.1 424 171.1 424 179.3 425 179.3 425 185.9 426 185.9 426 186.6 427 186.6 427 159.8 428 159.8 428 153.8 429 153.8 429 167.4 430 167.4 430 176.3 431 176.3 431 180.8 432 180.8 432 176.9 433 176.9 433 181.4 434 181.4 434 173.3 435 173.3 435 180.7 436 180.7 436 162.7 437 162.7 437 181.7 438 181.7 438 183.0 439 183.0 439 190.4 440 190.4 440 189.2 441 189.2 441 175.1 442 175.1 442 177.3 443 177.3 443 185.0 444 185.0 444 181.1 445 181.1 445 180.7 446 180.7 446 189.4 447 189.4 447 186.9 448 186.9 448 188.2 449 188.2 449 138.7 450 138.7 450 146.7 451 146.7 451 149.6 452 149.6 452 180.3 453 180.3 453 181.1 454 181.1 454 177.0 455 177.0 455 184.0 456 184.0 456 176.0 457 176.0 457 175.7 458 175.7 458 176.9 459 176.9 459 175.6 460 175.6 460 186.7 461 186.7 461 172.6 462 172.6 462 170.9 463 170.9 463 180.0 464 180.0 464 171.6 465 171.6 465 174.0 466 174.0 466 185.5 467 185.5 467 185.8 468 185.8 468 154.3 469 154.3 469 147.4 470 147.4 470 173.0 471 173.0 471 176.3 472 176.3 472 157.0 473 157.0 473 164.9 474 164.9 474 138.1 475 138.1 475 178.0 476 178.0 476 147.6 477 147.6 477 171.2 478 171.2 478 184.0 479 184.0 479 172.6 480 172.6 480 181.4 481 181.4 481 173.0 482 173.0 482 159.7 483 159.7 483 172.4 484 172.4 484 181.0 485 181.0 485 165.8 486 165.8 486 179.0 487 179.0 487 148.3 488 148.3 488 165.7 489 165.7 489 162.7 490 162.7 490 170.1 491 170.1 491 173.7 492 173.7 492 178.3 493 178.3 493 185.1 494 185.1 494 184.5 495 184.5 495 150.1 496 150.1 496 173.1 497 173.1 497 178.7 498 178.7 498 175.6 499 175.6 499 174.4 500 174.4 500 184.2 501 184.2 501 188.4 502 188.4 502 188.0 503 188.0 503 184.8 504 184.8 504 184.3 505 184.3 505 175.0 506 175.0 506 176.0 507 176.0 507 177.6 508 177.6 508 144.6 509 144.6 509 157.3 510 157.3 510 173.3 511 173.3 511 184.3 512 184.3 512 185.1 513 185.1 513 189.7 514 189.7 514 189.4 515 189.4 515 181.6 516 181.6 516 190.8 517 190.8 517 177.1 518 177.1 518 165.2 519 165.2 519 170.9 520 170.9 520 182.1 521 182.1 521 181.9 522 181.9 522 179.8 523 179.8 523 184.5 524 184.5 524 180.1 525 180.1 525 184.3 526 184.3 526 163.7 527 163.7 527 165.6 528 165.6 528 184.5 529 184.5 529 169.2 530 169.2 530 177.7 531 177.7 531 185.5 532 185.5 532 176.5 533 176.5 533 180.9 534 180.9 534 180.2 535 180.2 535 179.9 536 179.9 536 183.0 537 183.0 537 179.8 538 179.8 538 178.7 539 178.7 539 185.0 540 185.0 540 176.8 541 176.8 541 178.2 542 178.2 542 192.6 543 192.6 543 186.6 544 186.6 544 181.4 545 181.4 545 184.8 546 184.8 546 181.8 547 181.8 547 174.9 548 174.9 548 177.7 549 177.7 549 179.2 550 179.2 550 171.1 551 171.1 551 164.4 552 164.4 552 167.2 553 167.2 553 164.7 554 164.7 554 174.4 555 174.4 555 183.0 556 183.0 556 177.8 557 177.8 557 185.3 558 185.3 558 176.9 559 176.9 559 176.7 560 176.7 560 183.5 561 183.5 561 165.5 562 165.5 562 167.6 563 167.6 563 150.1 564 150.1 564 171.7 565 171.7 565 177.8 566 177.8 566 178.9 567 178.9 567 172.1 568 172.1 568 161.4 569 161.4 569 173.7 570 173.7 570 179.8 571 179.8 571 184.0 572 184.0 572 180.6 573 180.6 573 185.2 574 185.2 574 179.6 575 179.6 575 176.0 576 176.0 576 168.7 577 168.7 577 179.4 578 179.4 578 187.0 579 187.0 579 176.2 580 176.2 580 172.3 581 172.3 581 178.7 582 178.7 582 176.7 583 176.7 583 180.8 584 180.8 584 177.0 585 177.0 585 179.0 586 179.0 586 151.7 587 151.7 587 167.0 588 167.0 588 170.2 589 170.2 589 182.1 590 182.1 590 170.9 591 170.9 591 184.6 592 184.6 592 169.0 593 169.0 593 167.7 594 167.7 594 172.6 595 172.6 595 177.4 596 177.4 596 185.0 597 185.0 597 185.9 598 185.9 598 175.5 599 175.5 599 175.7 600 175.7 600 181.0 601 181.0 601 134.6 602 134.6 602 173.7 603 173.7 603 179.9 604 179.9 604 134.6 605 134.6 605 170.5 606 170.5 606 178.4 607 178.4 607 184.2 608 184.2 608 146.9 609 146.9 609 150.2 610 150.2 610 171.8 611 171.8 611 175.5 612 175.5 612 134.9 613 134.9 613 169.4 614 169.4 614 169.5 615 169.5 615 181.4 616 181.4 616 183.9 617 183.9 617 171.8 618 171.8 618 165.1 619 165.1 619 174.3 620 174.3 620 175.7 621 175.7 621 184.1 622 184.1 622 181.1 623 181.1 623 176.2 624 176.2 624 174.1 625 174.1 625 152.4 626 152.4 626 144.2 627 144.2 627 157.9 628 157.9 628 165.9 629 165.9 629 142.9 630 142.9 630 166.1 631 166.1 631 150.8 632 150.8 632 167.8 633 167.8 633 169.3 634 169.3 634 166.0 635 166.0 635 166.6 636 166.6 636 134.6 637 134.6 637 160.4 638 160.4 638 138.5 639 138.5 639 169.5 640 169.5 640 181.9 641 181.9 641 181.6 642 181.6 642 161.4 643 161.4 643 166.0 644 166.0 644 164.0 645 164.0 645 176.2 646 176.2 646 182.4 647 182.4 647 175.2 648 175.2 648 171.6 649 171.6 649 179.6 650 179.6 650 140.2 651 140.2 651 173.0 652 173.0 652 181.0 653 181.0 653 135.9 654 135.9 654 160.9 655 160.9 655 171.9 656 171.9 656 169.1 657 169.1 657 169.1 658 169.1 658 174.5 659 174.5 659 182.9 660 182.9 660 181.0 661 181.0 661 159.6 662 159.6 662 161.9 663 161.9 663 148.8 664 148.8 664 166.2 665 166.2 665 163.5 666 163.5 666 167.1 667 167.1 667 170.8 668 170.8 668 179.5 669 179.5 669 170.2 670 170.2 670 168.7 671 168.7 671 163.1 672 163.1 672 175.7 673 175.7 673 174.5 674 174.5 674 179.9 675 179.9 675 160.9 676 160.9 676 139.0 677 139.0 677 159.4 678 159.4 678 170.1 679 170.1 679 179.7 680 179.7 680 171.0 681 171.0 681 164.1 682 164.1 682 134.6 683 134.6 683 166.9 684 166.9 684 182.4 685 182.4 685 171.7 686 171.7 686 178.5 687 178.5 687 180.2 688 180.2 688 149.0 689 149.0 689 179.8 690 179.8 690 175.5 691 175.5 691 175.8 692 175.8 692 155.2 693 155.2 693 173.7 694 173.7 694 169.6 695 169.6 695 166.6 696 166.6 696 177.9 697 177.9 697 173.1 698 173.1 698 158.6 699 158.6 699 142.8 700 142.8 700 171.2 701 171.2 701 162.4 702 162.4 702 167.7 703 167.7 703 140.3 704 140.3 704 177.4 705 177.4 705 167.1 706 167.1 706 175.4 707 175.4 707 177.2 708 177.2 708 182.4 709 182.4 709 174.2 710 174.2 710 177.2 711 177.2 711 186.8 712 186.8 712 182.3 713 182.3 713 179.6 714 179.6 714 181.6 715 181.6 715 189.2 716 189.2 716 184.3 717 184.3 717 165.0 718 165.0 718 171.4 719 171.4 719 182.2 720 182.2 720 174.1 721 174.1 721 149.7 722 149.7 722 176.8 723 176.8 723 184.1 724 184.1 724 178.5 725 178.5 725 166.7 726 166.7 726 172.5 727 172.5 727 184.7 728 184.7 728 179.2 729 179.2 729 178.9 730 178.9 730 185.0 731 185.0 731 180.8 732 180.8 732 185.6 733 185.6 733 174.3 734 174.3 734 181.4 735 181.4 735 180.8 736 180.8 736 187.4 737 187.4 737 181.5 738 181.5 738 187.0 739 187.0 739 163.2 740 163.2 740 169.1 741 169.1 741 175.9 742 175.9 742 177.2 743 177.2 743 134.6 744 134.6 744 149.4 745 149.4 745 164.7 746 164.7 746 173.0 747 173.0 747 180.1 748 180.1 748 180.3 749 180.3 749 186.0 750 186.0 750 182.3 751 182.3 751 181.1 752 181.1 752 168.1 753 168.1 753 156.9 754 156.9 754 178.8 755 178.8 755 175.9 756 175.9 756 185.2 757 185.2 757 170.4 758 170.4 758 143.7 759 143.7 759 169.6 760 169.6 760 182.4 761 182.4 761 171.5 762 171.5 762 168.1 763 168.1 763 176.3 764 176.3 764 183.9 765 183.9 765 183.0 766 183.0 766 163.4 767 163.4 767 158.1 768 158.1 768 170.8 769 170.8 769 170.1 770 170.1 770 171.9 771 171.9 771 165.5 772 165.5 772 183.6 773 183.6 773 188.1 774 188.1 774 183.1 775 183.1 775 186.1 776 186.1 776 180.4 777 180.4 777 181.0 778 181.0 778 169.8 779 169.8 779 137.9 780 137.9 780 177.5 781 177.5 781 183.0 782 183.0 782 179.6 783 179.6 783 185.2 784 185.2 784 179.1 785 179.1 785 184.1 786 184.1 786 178.7 787 178.7 787 180.7 788 180.7 788 182.6 789 182.6 789 156.1 790 156.1 790 158.5 791 158.5 791 180.1 792 180.1 792 178.6 793 178.6 793 141.9 794 141.9 794 177.5 795 177.5 795 176.7 796 176.7 796 187.5 797 187.5 797 187.9 798 187.9 798 151.1 799 151.1 799 177.3 800 177.3 800 176.0 801 176.0 801 182.9 802 182.9 802 156.8 803 156.8 803 183.2 804 183.2 804 169.5 805 169.5 805 171.5 806 171.5 806 143.5 807 143.5 807 178.7 808 178.7 808 177.4 809 177.4 809 177.1 810 177.1 810 174.2 811 174.2 811 168.7 812 168.7 812 154.7 813 154.7 813 136.8 814 136.8 814 182.6 815 182.6 815 179.2 816 179.2 816 176.4 817 176.4 817 184.4 818 184.4 818 187.8 819 187.8 819 182.4 820 182.4 820 176.3 821 176.3 821 182.5 822 182.5 822 174.5 823 174.5 823 183.0 824 183.0 824 176.0 825 176.0 825 186.8 826 186.8 826 187.1 827 187.1 827 180.2 828 180.2 828 182.8 829 182.8 829 187.0 830 187.0 830 189.5 831 189.5 831 164.1 832 164.1 832 173.5 833 173.5 833 146.3 834 146.3 834 155.1 835 155.1 835 166.9 836 166.9 836 175.9 837 175.9 837 182.5 838 182.5 838 182.0 839 182.0 839 183.4 840 183.4 840 188.4 841 188.4 841 182.6 842 182.6 842 170.6 843 170.6 843 176.2 844 176.2 844 174.0 845 174.0 845 175.4 846 175.4 846 183.5 847 183.5 847 184.7 848 184.7 848 184.4 849 184.4 849 184.6 850 184.6 850 181.7 851 181.7 851 180.0 852 180.0 852 179.5 853 179.5 853 186.6 854 186.6 854 181.2 855 181.2 855 184.7 856 184.7 856 139.9 857 139.9 857 167.4 858 167.4 858 172.9 859 172.9 859 182.0 860 182.0 860 181.1 861 181.1 861 181.6 862 181.6 862 136.5 863 136.5 863 180.0 864 180.0 864 174.0 865 174.0 865 179.9 866 179.9 866 185.7 867 185.7 867 183.5 868 183.5 868 179.7 869 179.7 869 180.0 870 180.0 870 179.6 871 179.6 871 184.6 872 184.6 872 184.0 873 184.0 873 187.4 874 187.4 874 182.6 875 182.6 875 187.8 876 187.8 876 184.9 877 184.9 877 181.9 878 181.9 878 190.7 879 190.7 879 184.1 880 184.1 880 158.6 881 158.6 881 166.5 882 166.5 882 172.3 883 172.3 883 159.3 884 159.3 884 184.4 885 184.4 885 184.9 886 184.9 886 181.1 887 181.1 887 185.2 888 185.2 888 184.7 889 184.7 889 185.9 890 185.9 890 183.2 891 183.2 891 174.5 892 174.5 892 172.1 893 172.1 893 176.1 894 176.1 894 177.2 895 177.2 895 184.3 896 184.3 896 184.1 897 184.1 897 179.9 898 179.9 898 169.5 899 169.5 899 174.9 900 174.9 900 167.1 901 167.1 901 176.7 902 176.7 902 146.7 903 146.7 903 163.4 904 163.4 904 168.3 905 168.3 905 165.3 906 165.3 906 170.1 907 170.1 907 153.0 908 153.0 908 180.3 909 180.3 909 169.3 910 169.3 910 162.4 911 162.4 911 154.9 912 154.9 912 161.2 913 161.2 913 164.3 914 164.3 914 167.9 915 167.9 915 178.6 916 178.6 916 178.0 917 178.0 917 173.5 918 173.5 918 158.2 919 158.2 919 161.8 920 161.8 920 175.8 921 175.8 921 171.1 922 171.1 922 148.8 923 148.8 923 172.2 924 172.2 924 178.3 925 178.3 925 147.2 926 147.2 926 145.2 927 145.2 927 136.1 928 136.1 928 163.7 929 163.7 929 170.4 930 170.4 930 172.7 931 172.7 931 167.6 932 167.6 932 179.2 933 179.2 933 174.3 934 174.3 934 171.3 935 171.3 935 180.4 936 180.4 936 157.7 937 157.7 937 165.2 938 165.2 938 166.4 939 166.4 939 167.5 940 167.5 940 166.9 941 166.9 941 176.6 942 176.6 942 182.0 943 182.0 943 172.4 944 172.4 944 182.2 945 182.2 945 157.9 946 157.9 946 161.0 947 161.0 947 143.7 948 143.7 948 171.7 949 171.7 949 175.3 950 175.3 950 175.5 951 175.5 951 171.0 952 171.0 952 177.6 953 177.6 953 174.6 954 174.6 954 173.3 955 173.3 955 147.4 956 147.4 956 169.3 957 169.3 957 161.2 958 161.2 958 161.2 959 161.2 959 173.7 960 173.7 960 168.2 961 168.2 961 168.6 962 168.6 962 181.5 963 181.5 963 182.8 964 182.8 964 176.9 965 176.9 965 179.8 966 179.8 966 166.4 967 166.4 967 168.8 968 168.8 968 168.7 969 168.7 969 166.6 970 166.6 970 149.7 971 149.7 971 171.9 972 171.9 972 146.7 973 146.7 973 186.0 974 186.0 974 152.0 975 152.0 975 183.6 976 183.6 976 188.1 977 188.1 977 181.8 978 181.8 978 184.3 979 184.3 979 164.4 980 164.4 980 184.4 981 184.4 981 188.7 982 188.7 982 190.3 983 190.3 983 189.9 984 189.9 984 183.4 985 183.4 985 186.8 986 186.8 986 188.4 987 188.4 987 171.7 988 171.7 988 174.2 989 174.2 989 174.3 990 174.3 990 175.7 991 175.7 991 186.3 992 186.3 992 180.5 993 180.5 993 156.6 994 156.6 994 139.3 995 139.3 995 169.6 996 169.6 996 148.9 997 148.9 997 182.3 998 182.3 998 184.0 999 184.0 999 176.7 1000 176.7 1000 173.6 1001 173.6 1001 182.7 1002 182.7 1002 184.8 1003 184.8 1003 185.2 1004 185.2 1004 181.6 1005 181.6 1005 185.3 1006 185.3 1006 145.9 1007 145.9 1007 178.5 1008 178.5 1008 166.6 1009 166.6 1009 148.7 1010 148.7 1010 163.1 1011 163.1 1011 164.7 1012 164.7 1012 158.8 1013 158.8 1013 142.7 1014 142.7 1014 156.0 1015 156.0 1015 135.3 1016 135.3 1016 156.0 1017 156.0 1017 159.2 1018 159.2 1018 155.6 1019 155.6 1019 134.6 1020 134.6 1020 151.2 1021 151.2 1021 134.6 1022 134.6 1022 134.6 1023 134.6 1023 155.8 1024 155.8 1024 169.5 1025 169.5 1025 158.2 1026 158.2 1026 134.6 1027 134.6 1027 166.5 1028 166.5 1028 134.6 1029 134.6 1029 160.9 1030 160.9 1030 168.0 1031 168.0 1031 162.0 1032 162.0 1032 134.6 1033 134.6 1033 177.9 1034 177.9 1034 147.1 1035 147.1 1035 134.6 1036 134.6 1036 147.2 1037 147.2 1037 161.6 1038 161.6 1038 135.3 1039 135.3 1039 153.6 1040 153.6 1040 145.6 1041 145.6 1041 169.3 1042 169.3 1042 161.9 1043 161.9 1043 162.1 1044 162.1 1044 165.9 1045 165.9 1045 164.8 1046 164.8 1046 165.8 1047 165.8 1047 172.7 1048 172.7 1048 134.6 1049 134.6 1049 151.2 1050 151.2 1050 134.6 1051 134.6 1051 134.6 1052 134.6 1052 148.6 1053 148.6 1053 153.1 1054 153.1 1054 155.8 1055 155.8 1055 168.0 1056 168.0 1056 161.4 1057 161.4 1057 152.5 1058 152.5 1058 159.9 1059 159.9 1059 143.4 1060 143.4 1060 146.7 1061 146.7 1061 135.3 1062 135.3 1062 154.9 1063 154.9 1063 155.5 1064 155.5 1064 165.4 1065 165.4 1065 170.8 1066 170.8 1066 155.0 1067 155.0 1067 166.5 1068 166.5 1068 177.0 1069 177.0 1069 164.6 1070 164.6 1070 176.0 1071 176.0 1071 135.0 1072 135.0 1072 134.6 1073 134.6 1073 134.6 1074 134.6 1074 159.0 1075 159.0 1075 167.8 1076 167.8 1076 166.2 1077 166.2 1077 172.6 1078 172.6 1078 144.2 1079 144.2 1079 158.5 1080 158.5 1080 153.0 1081 153.0 1081 161.6 1082 161.6 1082 163.1 1083 163.1 1083 135.3 1084 135.3 1084 149.1 1085 149.1 1085 156.7 1086 156.7 1086 149.9 1087 149.9 1087 164.5 1088 164.5 1088 157.1 1089 157.1 1089 172.3 1090 172.3 1090 176.4 1091 176.4 1091 148.8 1092 148.8 1092 159.9 1093 159.9 1093 167.0 1094 167.0 1094 161.6 1095 161.6 1095 159.4 1096 159.4 1096 165.9 1097 165.9 1097 161.3 1098 161.3 1098 166.0 1099 166.0 1099 170.5 1100 170.5 1100 147.2 1101 147.2 1101 144.3 1102 144.3 1102 159.6 1103 159.6 1103 171.4 1104 171.4 1104 160.4 1105 160.4 1105 170.8 1106 170.8 1106 135.3 1107 135.3 1107 134.6 1108 134.6 1108 153.3 1109 153.3 1109 141.9 1110 141.9 1110 167.6 1111 167.6 1111 152.0 1112 152.0 1112 154.6 1113 154.6 1113 166.0 1114 166.0 1114 157.9 1115 157.9 1115 134.6 1116 134.6 1116 154.7 1117 154.7 1117 177.1 1118 177.1 1118 172.4 1119 172.4 1119 178.1 1120 178.1 1120 186.2 1121 186.2 1121 196.8 1122 196.8 1122 198.0 1123 198.0 1123 200.8 1124 200.8 1124 201.2 1125 201.2 1125 197.1 1126 197.1 1126 193.0 1127 193.0 1127 190.9 1128 190.9 1128 144.8 1129 144.8 1129 168.6 1130 168.6 1130 160.8 1131 160.8 1131 163.4 1132 163.4 1132 170.6 1133 170.6 1133 181.2 1134 181.2 1134 174.6 1135 174.6 1135 175.9 1136 175.9 1136 185.1 1137 185.1 1137 175.1 1138 175.1 1138 184.7 1139 184.7 1139 180.9 1140 180.9 1140 142.4 1141 142.4 1141 183.4 1142 183.4 1142 179.1 1143 179.1 1143 134.6 1144 134.6 1144 173.8 1145 173.8 1145 172.2 1146 172.2 1146 169.7 1147 169.7 1147 177.3 1148 177.3 1148 182.2 1149 182.2 1149 168.4 1150 168.4 1150 165.4 1151 165.4 1151 140.8 1152 140.8 1152 172.7 1153 172.7 1153 177.7 1154 177.7 1154 167.6 1155 167.6 1155 172.4 1156 172.4 1156 177.6 1157 177.6 1157 178.0 1158 178.0 1158 171.4 1159 171.4 1159 170.3 1160 170.3 1160 174.3 1161 174.3 1161 183.9 1162 183.9 1162 174.5 1163 174.5 1163 170.1 1164 170.1 1164 168.8 1165 168.8 1165 167.5 1166 167.5 1166 173.7 1167 173.7 1167 182.2 1168 182.2 1168 178.2 1169 178.2 1169 161.6 1170 161.6 1170 166.3 1171 166.3 1171 171.3 1172 171.3 1172 176.1 1173 176.1 1173 177.5 1174 177.5 1174 142.9 1175 142.9 1175 166.8 1176 166.8 1176 175.2 1177 175.2 1177 154.6 1178 154.6 1178 134.6 1179 134.6 1179 179.8 1180 179.8 1180 177.6 1181 177.6 1181 142.2 1182 142.2 1182 175.1 1183 175.1 1183 184.8 1184 184.8 1184 186.2 1185 186.2 1185 183.5 1186 183.5 1186 179.8 1187 179.8 1187 170.0 1188 170.0 1188 161.4 1189 161.4 1189 164.8 1190 164.8 1190 169.1 1191 169.1 1191 161.6 1192 161.6 1192 180.7 1193 180.7 1193 180.4 1194 180.4 1194 183.8 1195 183.8 1195 186.5 1196 186.5 1196 145.6 1197 145.6 1197 171.7 1198 171.7 1198 164.4 1199 164.4 1199 167.1 1200 167.1 1200 175.5 1201 175.5 1201 175.6 1202 175.6 1202 173.7 1203 173.7 1203 176.1 1204 176.1 1204 170.0 1205 170.0 1205 134.6 1206 134.6 1206 173.7 1207 173.7 1207 164.2 1208 164.2 1208 169.0 1209 169.0 1209 151.0 1210 151.0 1210 178.2 1211 178.2 1211 182.3 1212 182.3 1212 182.9 1213 182.9 1213 157.9 1214 157.9 1214 179.6 1215 179.6 1215 178.0 1216 178.0 1216 164.7 1217 164.7 1217 134.6 1218 134.6 1218 168.6 1219 168.6 1219 151.9 1220 151.9 1220 166.0 1221 166.0 1221 159.9 1222 159.9 1222 161.9 1223 161.9 1223 174.5 1224 174.5 1224 169.2 1225 169.2 1225 177.6 1226 177.6 1226 173.3 1227 173.3 1227 175.0 1228 175.0 1228 165.3 1229 165.3 1229 171.4 1230 171.4 1230 158.2 1231 158.2 1231 176.6 1232 176.6 1232 183.1 1233 183.1 1233 171.4 1234 171.4 1234 169.5 1235 169.5 1235 171.8 1236 171.8 1236 179.0 1237 179.0 1237 176.9 1238 176.9 1238 176.4 1239 176.4 1239 134.6 1240 134.6 1240 176.8 1241 176.8 1241 171.3 1242 171.3 1242 140.4 1243 140.4 1243 177.0 1244 177.0 1244 163.6 1245 163.6 1245 177.0 1246 177.0 1246 166.3 1247 166.3 1247 165.4 1248 165.4 1248 178.4 1249 178.4 1249 175.8 1250 175.8 1250 170.0 1251 170.0 1251 172.2 1252 172.2 1252 164.1 1253 164.1 1253 170.6 1254 170.6 1254 178.3 1255 178.3 1255 165.0 1256 165.0 1256 168.4 1257 168.4 1257 177.6 1258 177.6 1258 171.9 1259 171.9 1259 182.5 1260 182.5 1260 157.1 1261 157.1 1261 171.4 1262 171.4 1262 173.4 1263 173.4 1263 142.1 1264 142.1 1264 150.2 1265 150.2 1265 176.6 1266 176.6 1266 159.1 1267 159.1 1267 173.5 1268 173.5 1268 175.4 1269 175.4 1269 175.6 1270 175.6 1270 174.2 1271 174.2 1271 146.6 1272 146.6 1272 179.5 1273 179.5 1273 177.2 1274 177.2 1274 170.3 1275 170.3 1275 176.5 1276 176.5 1276 180.3 1277 180.3 1277 154.9 1278 154.9 1278 163.3 1279 163.3 1279 139.8 1280 139.8 1280 178.3 1281 178.3 1281 174.5 1282 174.5 1282 173.7 1283 173.7 1283 154.3 1284 154.3 1284 182.9 1285 182.9 1285 182.9 1286 182.9 1286 179.7 1287 179.7 1287 157.9 1288 157.9 1288 166.9 1289 166.9 1289 154.5 1290 154.5 1290 171.2 1291 171.2 1291 154.1 1292 154.1 1292 171.7 1293 171.7 1293 167.2 1294 167.2 1294 179.7 1295 179.7 1295 181.3 1296 181.3 1296 184.3 1297 184.3 1297 181.0 1298 181.0 1298 181.6 1299 181.6 1299 151.6 1300 151.6 1300 180.3 1301 180.3 1301 184.6 1302 184.6 1302 178.3 1303 178.3 1303 134.6 1304 134.6 1304 162.3 1305 162.3 1305 175.4 1306 175.4 1306 176.3 1307 176.3 1307 184.5 1308 184.5 1308 177.4 1309 177.4 1309 151.5 1310 151.5 1310 161.5 1311 161.5 1311 167.5 1312 167.5 1312 135.6 1313 135.6 1313 176.7 1314 176.7 1314 175.5 1315 175.5 1315 134.6 1316 134.6 1316 180.3 1317 180.3 1317 171.1 1318 171.1 1318 184.2 1319 184.2 1319 180.1 1320 180.1 1320 186.4 1321 186.4 1321 181.3 1322 181.3 1322 184.7 1323 184.7 1323 185.1 1324 185.1 1324 170.4 1325 170.4 1325 182.1 1326 182.1 1326 163.3 1327 163.3 1327 139.4 1328 139.4 1328 169.3 1329 169.3 1329 180.2 1330 180.2 1330 184.9 1331 184.9 1331 177.8 1332 177.8 1332 155.6 1333 155.6 1333 161.2 1334 161.2 1334 163.4 1335 163.4 1335 134.6 1336 134.6 1336 183.5 1337 183.5 1337 168.2 1338 168.2 1338 164.0 1339 164.0 1339 180.7 1340 180.7 1340 173.6 1341 173.6 1341 134.6 1342 134.6 1342 171.8 1343 171.8 1343 173.5 1344 173.5 1344 179.7 1345 179.7 1345 156.5 1346 156.5 1346 170.5 1347 170.5 1347 173.3 1348 173.3 1348 154.5 1349 154.5 1349 169.7 1350 169.7 1350 134.6 1351 134.6 1351 174.4 1352 174.4 1352 168.8 1353 168.8 1353 164.6 1354 164.6 1354 172.5 1355 172.5 1355 143.5 1356 143.5 1356 167.1 1357 167.1 1357 170.5 1358 170.5 1358 178.8 1359 178.8 1359 177.8 1360 177.8 1360 174.8 1361 174.8 1361 181.0 1362 181.0 1362 173.0 1363 173.0 1363 155.8 1364 155.8 1364 179.5 1365 179.5 1365 183.9 1366 183.9 1366 178.6 1367 178.6 1367 155.4 1368 155.4 1368 168.7 1369 168.7 1369 145.2 1370 145.2 1370 179.0 1371 179.0 1371 184.0 1372 184.0 1372 156.1 1373 156.1 1373 161.0 1374 161.0 1374 169.5 1375 169.5 1375 178.9 1376 178.9 1376 176.2 1377 176.2 1377 150.5 1378 150.5 1378 162.2 1379 162.2 1379 166.3 1380 166.3 1380 176.3 1381 176.3 1381 134.6 1382 134.6 1382 174.1 1383 174.1 1383 173.7 1384 173.7 1384 182.1 1385 182.1 1385 180.9 1386 180.9 1386 176.3 1387 176.3 1387 170.9 1388 170.9 1388 181.9 1389 181.9 1389 182.8 1390 182.8 1390 177.7 1391 177.7 1391 172.7 1392 172.7 1392 174.5 1393 174.5 1393 168.3 1394 168.3 1394 171.4 1395 171.4 1395 174.6 1396 174.6 1396 166.6 1397 166.6 1397 182.1 1398 182.1 1398 172.7 1399 172.7 1399 143.1 1400 143.1 1400 151.7 1401 151.7 1401 155.9 1402 155.9 1402 178.5 1403 178.5 1403 170.6 1404 170.6 1404 173.3 1405 173.3 1405 175.4 1406 175.4 1406 185.4 1407 185.4 1407 179.9 1408 179.9 1408 186.7 1409 186.7 1409 159.4 1410 159.4 1410 168.4 1411 168.4 1411 172.3 1412 172.3 1412 170.0 1413 170.0 1413 142.2 1414 142.2 1414 178.3 1415 178.3 1415 164.9 1416 164.9 1416 141.9 1417 141.9 1417 180.0 1418 180.0 1418 183.9 1419 183.9 1419 180.3 1420 180.3 1420 177.1 1421 177.1 1421 181.7 1422 181.7 1422 186.1 1423 186.1 1423 146.6 1424 146.6 1424 157.6 1425 157.6 1425 157.7 1426 157.7 1426 167.7 1427 167.7 1427 177.1 1428 177.1 1428 173.6 1429 173.6 1429 136.5 1430 136.5 1430 175.1 1431 175.1 1431 177.2 1432 177.2 1432 179.5 1433 179.5 1433 174.1 1434 174.1 1434 181.6 1435 181.6 1435 179.3 1436 179.3 1436 179.3 1437 179.3 1437 183.1 1438 183.1 1438 178.2 1439 178.2 1439 181.0 1440 181.0 1440 179.9 1441 179.9 1441 186.4 1442 186.4 1442 185.8 1443 185.8 1443 182.7 1444 182.7 1444 174.4 1445 174.4 1445 159.5 1446 159.5 1446 156.1 1447 156.1 1447 173.9 1448 173.9 1448 172.1 1449 172.1 1449 151.5 1450 151.5 1450 180.5 1451 180.5 1451 176.5 1452 176.5 1452 173.0 1453 173.0 1453 177.1 1454 177.1 1454 171.2 1455 171.2 1455 176.6 1456 176.6 1456 184.5 1457 184.5 1457 180.7 1458 180.7 1458 176.3 1459 176.3 1459 183.7 1460 183.7 1460 186.5 1461 186.5 1461 183.9 1462 183.9 1462 159.2 1463 159.2 1463 177.1 1464 177.1 1464 172.6 1465 172.6 1465 184.0 1466 184.0 1466 179.9 1467 179.9 1467 182.7 1468 182.7 1468 147.6 1469 147.6 1469 135.7 1470 135.7 1470 163.6 1471 163.6 1471 134.6 1472 134.6 1472 170.7 1473 170.7 1473 173.4 1474 173.4 1474 141.9 1475 141.9 1475 156.1 1476 156.1 1476 156.6 1477 156.6 1477 157.0 1478 157.0 1478 154.2 1479 154.2 1479 174.7 1480 174.7 1480 164.8 1481 164.8 1481 179.8 1482 179.8 1482 179.1 1483 179.1 1483 177.4 1484 177.4 1484 163.7 1485 163.7 1485 175.6 1486 175.6 1486 179.2 1487 179.2 1487 164.2 1488 164.2 1488 173.6 1489 173.6 1489 183.3 1490 183.3 1490 136.2 1491 136.2 1491 147.1 1492 147.1 1492 160.9 1493 160.9 1493 166.4 1494 166.4 1494 169.1 1495 169.1 1495 165.7 1496 165.7 1496 155.1 1497 155.1 1497 169.9 1498 169.9 1498 166.5 1499 166.5 1499 166.9 1500 166.9 1500 174.8 1501 174.8 1501 177.5 1502 177.5 1502 178.6 1503 178.6 1503 181.5 1504 181.5 1504 177.6 1505 177.6 1505 184.8 1506 184.8 1506 159.8 1507 159.8 1507 161.9 1508 161.9 1508 167.2 1509 167.2 1509 180.2 1510 180.2 1510 169.5 1511 169.5 1511 164.9 1512 164.9 1512 156.0 1513 156.0 1513 137.8 1514 137.8 1514 151.0 1515 151.0 1515 134.6 1516 134.6 1516 163.0 1517 163.0 1517 178.1 1518 178.1 1518 167.5 1519 167.5 1519 182.9 1520 182.9 1520 178.8 1521 178.8 1521 182.6 1522 182.6 1522 168.9 1523 168.9 1523 164.3 1524 164.3 1524 134.6 1525 134.6 1525 177.4 1526 177.4 1526 151.6 1527 151.6 1527 154.6 1528 154.6 1528 160.7 1529 160.7 1529 174.2 1530 174.2 1530 175.2 1531 175.2 1531 176.9 1532 176.9 1532 172.5 1533 172.5 1533 158.5 1534 158.5 1534 171.4 1535 171.4 1535 179.5 1536 179.5 1536 143.7 1537 143.7 1537 152.8 1538 152.8 1538 134.6 1539 134.6 1539 166.6 1540 166.6 1540 177.1 1541 177.1 1541 170.9 1542 170.9 1542 173.0 1543 173.0 1543 170.0 1544 170.0 1544 164.8 1545 164.8 1545 174.4 1546 174.4 1546 172.5 1547 172.5 1547 176.5 1548 176.5 1548 171.4 1549 171.4 1549 172.8 1550 172.8 1550 180.6 1551 180.6 1551 178.8 1552 178.8 1552 173.2 1553 173.2 1553 183.1 1554 183.1 1554 172.8 1555 172.8 1555 148.5 1556 148.5 1556 173.0 1557 173.0 1557 173.3 1558 173.3 1558 135.3 1559 135.3 1559 154.6 1560 154.6 1560 165.9 1561 165.9 1561 166.0 1562 166.0 1562 165.7 1563 165.7 1563 162.2 1564 162.2 1564 170.6 1565 170.6 1565 167.3 1566 167.3 1566 159.2 1567 159.2 1567 173.7 1568 173.7 1568 176.4 1569 176.4 1569 162.8 1570 162.8 1570 134.6 1571 134.6 1571 177.1 1572 177.1 1572 164.6 1573 164.6 1573 172.1 1574 172.1 1574 153.0 1575 153.0 1575 159.9 1576 159.9 1576 134.6 1577 134.6 1577 161.1 1578 161.1 1578 172.3 1579 172.3 1579 158.8 1580 158.8 1580 164.2 1581 164.2 1581 135.3 1582 135.3 1582 134.6 1583 134.6 1583 141.9 1584 141.9 1584 162.6 1585 162.6 1585 156.6 1586 156.6 1586 157.1 1587 157.1 1587 147.1 1588 147.1 1588 168.5 1589 168.5 1589 134.6 1590 134.6 1590 164.1 1591 164.1 1591 167.3 1592 167.3 1592 157.1 1593 157.1 1593 172.2 1594 172.2 1594 168.3 1595 168.3 1595 140.5 1596 140.5 1596 168.8 1597 168.8 1597 164.4 1598 164.4 1598 134.6 1599 134.6 1599 159.0 1600 159.0 1600 148.2 1601 148.2 1601 158.9 1602 158.9 1602 171.6 1603 171.6 1603 135.3 1604 135.3 1604 134.6 1605 134.6 1605 162.6 1606 162.6 1606 170.3 1607 170.3 1607 157.5 1608 157.5 1608 139.6 1609 139.6 1609 146.1 1610 146.1 1610 161.4 1611 161.4 1611 168.3 1612 168.3 1612 138.3 1613 138.3 1613 134.6 1614 134.6 1614 161.8 1615 161.8 1615 156.5 1616 156.5 1616 155.1 1617 155.1 1617 168.5 1618 168.5 1618 164.7 1619 164.7 1619 168.9 1620 168.9 1620 178.3 1621 178.3 1621 146.5 1622 146.5 1622 157.7 1623 157.7 1623 144.6 1624 144.6 1624 165.7 1625 165.7 1625 153.2 1626 153.2 1626 135.3 1627 135.3 1627 148.0 1628 148.0 1628 155.5 1629 155.5 1629 154.8 1630 154.8 1630 142.7 1631 142.7 1631 159.4 1632 159.4 1632 165.4 1633 165.4 1633 164.1 1634 164.1 1634 176.5 1635 176.5 1635 167.2 1636 167.2 1636 176.7 1637 176.7 1637 178.9 1638 178.9 1638 149.2 1639 149.2 1639 149.0 1640 149.0 1640 153.6 1641 153.6 1641 157.6 1642 157.6 1642 158.4 1643 158.4 1643 177.3 1644 177.3 1644 168.8 1645 168.8 1645 164.3 1646 164.3 1646 173.4 1647 173.4 1647 166.7 1648 166.7 1648 146.6 1649 146.6 1649 135.3 1650 135.3 1650 146.6 1651 146.6 1651 134.6 1652 134.6 1652 155.0 1653 155.0 1653 172.5 1654 172.5 1654 169.0 1655 169.0 1655 169.5 1656 169.5 1656 157.7 1657 157.7 1657 149.9 1658 149.9 1658 163.8 1659 163.8 1659 170.8 1660 170.8 1660 165.5 1661 165.5 1661 162.6 1662 162.6 1662 154.1 1663 154.1 1663 150.2 1664 150.2 1664 145.1 1665 145.1 1665 149.5 1666 149.5 1666 173.0 1667 173.0 1667 170.8 1668 170.8 1668 152.0 1669 152.0 1669 164.4 1670 164.4 1670 162.8 1671 162.8 1671 135.3 1672 135.3 1672 141.6 1673 141.6 1673 151.7 1674 151.7 1674 136.7 1675 136.7 1675 175.6 1676 175.6 1676 147.1 1677 147.1 1677 168.1 1678 168.1 1678 189.4 1679 189.4 1679 186.9 1680 186.9 1680 175.6 1681 175.6 1681 175.7 1682 175.7 1682 180.2 1683 180.2 1683 177.3 1684 177.3 1684 184.7 1685 184.7 1685 186.3 1686 186.3 1686 183.7 1687 183.7 1687 186.0 1688 186.0 1688 185.3 1689 185.3 1689 153.3 1690 153.3 1690 184.0 1691 184.0 1691 178.0 1692 178.0 1692 173.9 1693 173.9 1693 182.6 1694 182.6 1694 156.6 1695 156.6 1695 172.6 1696 172.6 1696 176.0 1697 176.0 1697 183.0 1698 183.0 1698 182.9 1699 182.9 1699 181.6 1700 181.6 1700 178.6 1701 178.6 1701 181.6 1702 181.6 1702 183.6 1703 183.6 1703 182.3 1704 182.3 1704 187.1 1705 187.1 1705 184.3 1706 184.3 1706 154.3 1707 154.3 1707 171.9 1708 171.9 1708 178.8 1709 178.8 1709 182.7 1710 182.7 1710 183.4 1711 183.4 1711 157.0 1712 157.0 1712 188.2 1713 188.2 1713 151.2 1714 151.2 1714 181.4 1715 181.4 1715 183.3 1716 183.3 1716 177.3 1717 177.3 1717 165.9 1718 165.9 1718 174.2 1719 174.2 1719 177.6 1720 177.6 1720 182.1 1721 182.1 1721 161.0 1722 161.0 1722 187.8 1723 187.8 1723 179.7 1724 179.7 1724 189.1 1725 189.1 1725 165.8 1726 165.8 1726 186.2 1727 186.2 1727 181.7 1728 181.7 1728 185.4 1729 185.4 1729 185.5 1730 185.5 1730 190.5 1731 190.5 1731 166.4 1732 166.4 1732 184.2 1733 184.2 1733 185.4 1734 185.4 1734 177.2 1735 177.2 1735 183.1 1736 183.1 1736 185.8 1737 185.8 1737 187.9 1738 187.9 1738 183.5 1739 183.5 1739 157.0 1740 157.0 1740 181.8 1741 181.8 1741 175.0 1742 175.0 1742 184.7 1743 184.7 1743 184.6 1744 184.6 1744 181.8 1745 181.8 1745 189.0 1746 189.0 1746 186.4 1747 186.4 1747 187.7 1748 187.7 1748 181.7 1749 181.7 1749 159.5 1750 159.5 1750 166.0 1751 166.0 1751 153.0 1752 153.0 1752 178.7 1753 178.7 1753 181.4 1754 181.4 1754 188.5 1755 188.5 1755 158.4 1756 158.4 1756 180.8 1757 180.8 1757 181.7 1758 181.7 1758 189.4 1759 189.4 1759 185.8 1760 185.8 1760 185.0 1761 185.0 1761 175.8 1762 175.8 1762 162.7 1763 162.7 1763 164.9 1764 164.9 1764 177.1 1765 177.1 1765 143.4 1766 143.4 1766 170.5 1767 170.5 1767 187.3 1768 187.3 1768 183.8 1769 183.8 1769 169.0 1770 169.0 1770 182.3 1771 182.3 1771 185.3 1772 185.3 1772 176.1 1773 176.1 1773 167.4 1774 167.4 1774 170.5 1775 170.5 1775 176.0 1776 176.0 1776 181.7 1777 181.7 1777 136.8 1778 136.8 1778 176.3 1779 176.3 1779 171.6 1780 171.6 1780 174.5 1781 174.5 1781 186.6 1782 186.6 1782 188.9 1783 188.9 1783 189.8 1784 189.8 1784 158.0 1785 158.0 1785 173.5 1786 173.5 1786 177.5 1787 177.5 1787 181.0 1788 181.0 1788 178.0 1789 178.0 1789 180.6 1790 180.6 1790 174.0 1791 174.0 1791 184.0 1792 184.0 1792 184.6 1793 184.6 1793 184.2 1794 184.2 1794 165.6 1795 165.6 1795 187.7 1796 187.7 1796 188.9 1797 188.9 1797 187.4 1798 187.4 1798 183.7 1799 183.7 1799 187.0 1800 187.0 1800 185.3 1801 185.3 1801 180.6 1802 180.6 1802 178.9 1803 178.9 1803 186.7 1804 186.7 1804 173.9 1805 173.9 1805 190.0 1806 190.0 1806 182.0 1807 182.0 1807 148.2 1808 148.2 1808 170.2 1809 170.2 1809 173.8 1810 173.8 1810 176.7 1811 176.7 1811 184.2 1812 184.2 1812 182.5 1813 182.5 1813 188.9 1814 188.9 1814 190.7 1815 190.7 1815 180.9 1816 180.9 1816 188.6 1817 188.6 1817 190.4 1818 190.4 1818 157.9 1819 157.9 1819 185.4 1820 185.4 1820 182.7 1821 182.7 1821 192.2 1822 192.2 1822 195.1 1823 195.1 1823 186.3 1824 186.3 1824 193.5 1825 193.5 1825 191.2 1826 191.2 1826 196.8 1827 196.8 1827 197.7 1828 197.7 1828 195.8 1829 195.8 1829 199.6 1830 199.6 1830 185.8 1831 185.8 1831 197.2 1832 197.2 1832 198.0 1833 198.0 1833 197.7 1834 197.7 1834 200.4 1835 200.4 1835 201.0 1836 201.0 1836 201.4 1837 201.4 1837 200.0 1838 200.0 1838 196.3 1839 196.3 1839 200.8 1840 200.8 1840 202.4 1841 202.4 1841 202.4 1842 202.4 1842 202.1 1843 202.1 1843 202.7 1844 202.7 1844 200.4 1845 200.4 1845 203.3 1846 203.3 1846 203.3 1847 203.3 1847 203.4 1848 203.4 1848 203.7 1849 203.7 1849 203.9 1850 203.9 1850 203.9 1851 203.9 1851 203.9 1852 203.9 1852 203.9 1853 203.9 1853 203.9 1854 203.9 1854 203.9 1855 203.9 1855 203.9 1856 203.9 1856 203.9 1857 203.9 1857 203.9 1858 203.9 1858 203.9 1859 203.9 1859 203.9 1860 203.9 1860 203.9 1861 203.9 1861 203.9 1862 203.9 1862 203.9 1863 203.9 1863 203.9 1864 203.9 1864 203.9 1865 203.9 1865 203.9 1866 203.9 1866 203.9 1867 203.9 1867 203.9 1868 203.9 1868 203.9 1869 203.9 1869 203.9 1870 203.9 1870 203.9 1871 203.9 1871 203.9 1872 203.9 1872 203.9 1873 203.9 1873 203.9 1874 203.9 1874 203.9 1875 203.9 1875 203.9 1876 203.9 1876 203.9 1877 203.9 1877 203.9 1878 203.9 1878 203.9 1879 203.9 1879 203.9 1880 203.9 1880 203.9 1881 203.9 1881 203.9 1882 203.9 1882 203.9 1883 203.9 1883 203.9 1884 203.9 1884 203.9 1885 203.9 1885 203.9 1886 203.9 1886 203.9 1887 203.9 1887 203.9 1888 203.9 1888 203.9 1889 203.9 1889 205.1 1888 205.1 1888 205.1 1887 205.1 1887 205.1 1886 205.1 1886 205.1 1885 205.1 1885 205.1 1884 205.1 1884 205.1 1883 205.1 1883 205.1 1882 205.1 1882 205.1 1881 205.1 1881 205.1 1880 205.1 1880 205.1 1879 205.1 1879 205.1 1878 205.1 1878 205.1 1877 205.1 1877 205.1 1876 205.1 1876 205.1 1875 205.1 1875 205.1 1874 205.1 1874 205.1 1873 205.1 1873 205.1 1872 205.1 1872 205.1 1871 205.1 1871 205.1 1870 205.1 1870 205.1 1869 205.1 1869 205.1 1868 205.1 1868 205.1 1867 205.1 1867 205.1 1866 205.1 1866 205.1 1865 205.1 1865 205.1 1864 205.1 1864 205.1 1863 205.1 1863 205.1 1862 205.1 1862 205.1 1861 205.1 1861 205.1 1860 205.1 1860 205.1 1859 205.1 1859 205.1 1858 205.1 1858 205.1 1857 205.1 1857 205.1 1856 205.1 1856 205.1 1855 205.1 1855 205.1 1854 205.1 1854 205.1 1853 205.1 1853 205.1 1852 205.1 1852 205.1 1851 205.1 1851 205.1 1850 205.1 1850 205.1 1849 205.1 1849 205.3 1848 205.3 1848 205.4 1847 205.4 1847 206.0 1846 206.0 1846 205.5 1845 205.5 1845 206.2 1844 206.2 1844 206.6 1843 206.6 1843 206.4 1842 206.4 1842 206.3 1841 206.3 1841 206.6 1840 206.6 1840 207.6 1839 207.6 1839 208.3 1838 208.3 1838 211.0 1837 211.0 1837 209.1 1836 209.1 1836 208.8 1835 208.8 1835 208.9 1834 208.9 1834 211.0 1833 211.0 1833 211.3 1832 211.3 1832 213.2 1831 213.2 1831 224.1 1830 224.1 1830 210.9 1829 210.9 1829 210.1 1828 210.1 1828 214.0 1827 214.0 1827 212.9 1826 212.9 1826 218.3 1825 218.3 1825 218.3 1824 218.3 1824 242.5 1823 242.5 1823 216.6 1822 216.6 1822 214.9 1821 214.9 1821 220.2 1820 220.2 1820 218.9 1819 218.9 1819 237.3 1818 237.3 1818 222.9 1817 222.9 1817 251.1 1816 251.1 1816 225.5 1815 225.5 1815 219.7 1814 219.7 1814 223.2 1813 223.2 1813 220.7 1812 220.7 1812 232.7 1811 232.7 1811 244.3 1810 244.3 1810 234.9 1809 234.9 1809 235.6 1808 235.6 1808 249.8 1807 249.8 1807 220.5 1806 220.5 1806 220.4 1805 220.4 1805 252.7 1804 252.7 1804 225.4 1803 225.4 1803 240.8 1802 240.8 1802 232.5 1801 232.5 1801 220.0 1800 220.0 1800 218.1 1799 218.1 1799 225.3 1798 225.3 1798 219.0 1797 219.0 1797 223.2 1796 223.2 1796 224.2 1795 224.2 1795 223.8 1794 223.8 1794 221.4 1793 221.4 1793 223.5 1792 223.5 1792 253.1 1791 253.1 1791 228.5 1790 228.5 1790 235.8 1789 235.8 1789 228.2 1788 228.2 1788 245.5 1787 245.5 1787 237.5 1786 237.5 1786 227.8 1785 227.8 1785 253.7 1784 253.7 1784 230.8 1783 230.8 1783 221.8 1782 221.8 1782 222.9 1781 222.9 1781 227.6 1780 227.6 1780 232.2 1779 232.2 1779 225.7 1778 225.7 1778 237.5 1777 237.5 1777 230.8 1776 230.8 1776 232.9 1775 232.9 1775 226.5 1774 226.5 1774 242.5 1773 242.5 1773 231.7 1772 231.7 1772 224.5 1771 224.5 1771 229.6 1770 229.6 1770 227.5 1769 227.5 1769 224.9 1768 224.9 1768 224.5 1767 224.5 1767 225.9 1766 225.9 1766 239.2 1765 239.2 1765 236.4 1764 236.4 1764 241.3 1763 241.3 1763 244.1 1762 244.1 1762 231.5 1761 231.5 1761 225.7 1760 225.7 1760 218.1 1759 218.1 1759 222.8 1758 222.8 1758 219.8 1757 219.8 1757 226.0 1756 226.0 1756 223.2 1755 223.2 1755 230.6 1754 230.6 1754 223.9 1753 223.9 1753 233.7 1752 233.7 1752 225.6 1751 225.6 1751 241.5 1750 241.5 1750 236.7 1749 236.7 1749 244.6 1748 244.6 1748 229.1 1747 229.1 1747 224.6 1746 224.6 1746 228.1 1745 228.1 1745 225.5 1744 225.5 1744 237.5 1743 237.5 1743 231.9 1742 231.9 1742 234.1 1741 234.1 1741 233.7 1740 233.7 1740 249.2 1739 249.2 1739 227.3 1738 227.3 1738 236.3 1737 236.3 1737 226.1 1736 226.1 1736 229.7 1735 229.7 1735 229.8 1734 229.8 1734 223.8 1733 223.8 1733 230.5 1732 230.5 1732 230.6 1731 230.6 1731 221.3 1730 221.3 1730 244.1 1729 244.1 1729 224.0 1728 224.0 1728 224.2 1727 224.2 1727 222.0 1726 222.0 1726 220.2 1725 220.2 1725 221.9 1724 221.9 1724 224.1 1723 224.1 1723 248.0 1722 248.0 1722 227.2 1721 227.2 1721 224.9 1720 224.9 1720 234.9 1719 234.9 1719 232.5 1718 232.5 1718 246.4 1717 246.4 1717 235.1 1716 235.1 1716 235.8 1715 235.8 1715 244.5 1714 244.5 1714 244.0 1713 244.0 1713 222.5 1712 222.5 1712 221.2 1711 221.2 1711 224.3 1710 224.3 1710 226.2 1709 226.2 1709 246.3 1708 246.3 1708 242.0 1707 242.0 1707 239.8 1706 239.8 1706 221.7 1705 221.7 1705 230.8 1704 230.8 1704 221.4 1703 221.4 1703 220.7 1702 220.7 1702 229.8 1701 229.8 1701 238.5 1700 238.5 1700 231.1 1699 231.1 1699 225.4 1698 225.4 1698 238.0 1697 238.0 1697 240.2 1696 240.2 1696 243.2 1695 243.2 1695 246.5 1694 246.5 1694 234.9 1693 234.9 1693 230.8 1692 230.8 1692 238.4 1691 238.4 1691 224.0 1690 224.0 1690 220.8 1689 220.8 1689 229.3 1688 229.3 1688 230.7 1687 230.7 1687 221.4 1686 221.4 1686 227.1 1685 227.1 1685 234.3 1684 234.3 1684 223.0 1683 223.0 1683 233.8 1682 233.8 1682 237.5 1681 237.5 1681 230.5 1680 230.5 1680 227.8 1679 227.8 1679 223.0 1678 223.0 1678 222.8 1677 222.8 1677 269.1 1676 269.1 1676 244.0 1675 244.0 1675 240.0 1674 240.0 1674 257.2 1673 257.2 1673 269.2 1672 269.2 1672 273.7 1671 273.7 1671 255.6 1670 255.6 1670 232.0 1669 232.0 1669 237.2 1668 237.2 1668 251.4 1667 251.4 1667 241.4 1666 241.4 1666 274.4 1665 274.4 1665 274.4 1664 274.4 1664 246.9 1663 246.9 1663 260.6 1662 260.6 1662 237.1 1661 237.1 1661 247.6 1660 247.6 1660 254.1 1659 254.1 1659 258.9 1658 258.9 1658 257.7 1657 257.7 1657 264.0 1656 264.0 1656 274.4 1655 274.4 1655 236.5 1654 236.5 1654 241.0 1653 241.0 1653 241.2 1652 241.2 1652 257.5 1651 257.5 1651 251.0 1650 251.0 1650 273.7 1649 273.7 1649 256.2 1648 256.2 1648 231.4 1647 231.4 1647 230.8 1646 230.8 1646 237.8 1645 237.8 1645 274.4 1644 274.4 1644 248.0 1643 248.0 1643 236.4 1642 236.4 1642 251.8 1641 251.8 1641 245.6 1640 245.6 1640 274.4 1639 274.4 1639 274.4 1638 274.4 1638 238.7 1637 238.7 1637 243.9 1636 243.9 1636 238.9 1635 238.9 1635 243.2 1634 243.2 1634 243.7 1633 243.7 1633 243.3 1632 243.3 1632 258.8 1631 258.8 1631 250.3 1630 250.3 1630 244.2 1629 244.2 1629 267.5 1628 267.5 1628 270.9 1627 270.9 1627 273.7 1626 273.7 1626 272.2 1625 272.2 1625 246.7 1624 246.7 1624 259.7 1623 259.7 1623 256.3 1622 256.3 1622 243.6 1621 243.6 1621 241.3 1620 241.3 1620 232.9 1619 232.9 1619 238.9 1618 238.9 1618 248.7 1617 248.7 1617 243.4 1616 243.4 1616 247.4 1615 247.4 1615 243.5 1614 243.5 1614 264.0 1613 264.0 1613 274.4 1612 274.4 1612 253.0 1611 253.0 1611 274.4 1610 274.4 1610 274.4 1609 274.4 1609 264.6 1608 264.6 1608 234.9 1607 234.9 1607 246.9 1606 246.9 1606 257.0 1605 257.0 1605 266.5 1604 266.5 1604 273.7 1603 273.7 1603 245.7 1602 245.7 1602 241.0 1601 241.0 1601 258.2 1600 258.2 1600 256.6 1599 256.6 1599 274.4 1598 274.4 1598 236.0 1597 236.0 1597 239.8 1596 239.8 1596 239.8 1595 239.8 1595 237.2 1594 237.2 1594 245.0 1593 245.0 1593 247.2 1592 247.2 1592 274.4 1591 274.4 1591 234.9 1590 234.9 1590 240.8 1589 240.8 1589 245.4 1588 245.4 1588 260.5 1587 260.5 1587 262.8 1586 262.8 1586 239.5 1585 239.5 1585 249.4 1584 249.4 1584 243.8 1583 243.8 1583 274.4 1582 274.4 1582 273.7 1581 273.7 1581 246.5 1580 246.5 1580 240.3 1579 240.3 1579 238.6 1578 238.6 1578 255.8 1577 255.8 1577 251.7 1576 251.7 1576 248.9 1575 248.9 1575 274.4 1574 274.4 1574 231.7 1573 231.7 1573 235.3 1572 235.3 1572 238.6 1571 238.6 1571 231.0 1570 231.0 1570 233.0 1569 233.0 1569 238.8 1568 238.8 1568 233.6 1567 233.6 1567 249.5 1566 249.5 1566 239.4 1565 239.4 1565 239.0 1564 239.0 1564 257.2 1563 257.2 1563 242.3 1562 242.3 1562 235.5 1561 235.5 1561 246.5 1560 246.5 1560 249.3 1559 249.3 1559 273.7 1558 273.7 1558 235.2 1557 235.2 1557 255.5 1556 255.5 1556 251.0 1555 251.0 1555 229.1 1554 229.1 1554 227.9 1553 227.9 1553 236.2 1552 236.2 1552 229.2 1551 229.2 1551 235.8 1550 235.8 1550 232.3 1549 232.3 1549 237.8 1548 237.8 1548 236.9 1547 236.9 1547 238.2 1546 238.2 1546 237.9 1545 237.9 1545 236.1 1544 236.1 1544 261.5 1543 261.5 1543 274.4 1542 274.4 1542 236.4 1541 236.4 1541 239.9 1540 239.9 1540 248.3 1539 248.3 1539 243.3 1538 243.3 1538 251.7 1537 251.7 1537 271.2 1536 271.2 1536 239.6 1535 239.6 1535 242.5 1534 242.5 1534 245.9 1533 245.9 1533 234.4 1532 234.4 1532 228.5 1531 228.5 1531 228.2 1530 228.2 1530 274.4 1529 274.4 1529 235.7 1528 235.7 1528 252.6 1527 252.6 1527 274.4 1526 274.4 1526 242.8 1525 242.8 1525 263.6 1524 263.6 1524 243.4 1523 243.4 1523 250.7 1522 250.7 1522 227.8 1521 227.8 1521 230.1 1520 230.1 1520 263.6 1519 263.6 1519 228.6 1518 228.6 1518 241.3 1517 241.3 1517 249.1 1516 249.1 1516 246.5 1515 246.5 1515 244.9 1514 244.9 1514 262.1 1513 262.1 1513 244.5 1512 244.5 1512 256.9 1511 256.9 1511 232.8 1510 232.8 1510 232.6 1509 232.6 1509 243.3 1508 243.3 1508 252.5 1507 252.5 1507 232.9 1506 232.9 1506 234.7 1505 234.7 1505 232.5 1504 232.5 1504 236.5 1503 236.5 1503 235.6 1502 235.6 1502 234.1 1501 234.1 1501 236.7 1500 236.7 1500 236.1 1499 236.1 1499 239.9 1498 239.9 1498 237.5 1497 237.5 1497 251.6 1496 251.6 1496 249.4 1495 249.4 1495 243.4 1494 243.4 1494 238.1 1493 238.1 1493 244.5 1492 244.5 1492 246.0 1491 246.0 1491 266.4 1490 266.4 1490 232.0 1489 232.0 1489 232.4 1488 232.4 1488 238.5 1487 238.5 1487 270.9 1486 270.9 1486 232.5 1485 232.5 1485 235.5 1484 235.5 1484 238.8 1483 238.8 1483 233.0 1482 233.0 1482 230.7 1481 230.7 1481 230.3 1480 230.3 1480 245.4 1479 245.4 1479 247.1 1478 247.1 1478 243.1 1477 243.1 1477 252.6 1476 252.6 1476 254.9 1475 254.9 1475 266.8 1474 266.8 1474 232.9 1473 232.9 1473 239.1 1472 239.1 1472 236.9 1471 236.9 1471 253.3 1470 253.3 1470 237.2 1469 237.2 1469 254.7 1468 254.7 1468 226.1 1467 226.1 1467 227.0 1466 227.0 1466 234.9 1465 234.9 1465 231.7 1464 231.7 1464 274.4 1463 274.4 1463 245.9 1462 245.9 1462 227.0 1461 227.0 1461 226.8 1460 226.8 1460 229.6 1459 229.6 1459 227.5 1458 227.5 1458 227.1 1457 227.1 1457 229.0 1456 229.0 1456 231.6 1455 231.6 1455 242.0 1454 242.0 1454 268.3 1453 268.3 1453 252.1 1452 252.1 1452 229.0 1451 229.0 1451 235.4 1450 235.4 1450 226.3 1449 226.3 1449 232.9 1448 232.9 1448 274.4 1447 274.4 1447 239.9 1446 239.9 1446 252.2 1445 252.2 1445 240.1 1444 240.1 1444 230.9 1443 230.9 1443 223.9 1442 223.9 1442 226.9 1441 226.9 1441 228.9 1440 228.9 1440 231.8 1439 231.8 1439 222.2 1438 222.2 1438 225.9 1437 225.9 1437 224.2 1436 224.2 1436 227.2 1435 227.2 1435 237.3 1434 237.3 1434 226.4 1433 226.4 1433 231.6 1432 231.6 1432 230.8 1431 230.8 1431 229.1 1430 229.1 1430 262.4 1429 262.4 1429 232.6 1428 232.6 1428 239.1 1427 239.1 1427 239.5 1426 239.5 1426 240.5 1425 240.5 1425 237.7 1424 237.7 1424 254.6 1423 254.6 1423 222.3 1422 222.3 1422 224.7 1421 224.7 1421 226.5 1420 226.5 1420 233.3 1419 233.3 1419 237.8 1418 237.8 1418 235.5 1417 235.5 1417 245.0 1416 245.0 1416 237.2 1415 237.2 1415 230.0 1414 230.0 1414 228.1 1413 228.1 1413 233.8 1412 233.8 1412 237.4 1411 237.4 1411 249.3 1410 249.3 1410 247.5 1409 247.5 1409 232.6 1408 232.6 1408 230.8 1407 230.8 1407 223.8 1406 223.8 1406 235.7 1405 235.7 1405 232.4 1404 232.4 1404 241.6 1403 241.6 1403 233.5 1402 233.5 1402 243.5 1401 243.5 1401 257.9 1400 257.9 1400 227.6 1399 227.6 1399 236.6 1398 236.6 1398 239.4 1397 239.4 1397 234.8 1396 234.8 1396 242.6 1395 242.6 1395 247.7 1394 247.7 1394 226.7 1393 226.7 1393 240.9 1392 240.9 1392 232.6 1391 232.6 1391 229.0 1390 229.0 1390 230.9 1389 230.9 1389 221.7 1388 221.7 1388 230.6 1387 230.6 1387 228.5 1386 228.5 1386 227.8 1385 227.8 1385 253.0 1384 253.0 1384 234.9 1383 234.9 1383 234.5 1382 234.5 1382 226.4 1381 226.4 1381 238.6 1380 238.6 1380 235.5 1379 235.5 1379 249.3 1378 249.3 1378 256.5 1377 256.5 1377 269.8 1376 269.8 1376 273.3 1375 273.3 1375 238.2 1374 238.2 1374 263.6 1373 263.6 1373 247.0 1372 247.0 1372 234.3 1371 234.3 1371 274.4 1370 274.4 1370 231.9 1369 231.9 1369 232.9 1368 232.9 1368 254.5 1367 254.5 1367 269.2 1366 269.2 1366 236.5 1365 236.5 1365 226.6 1364 226.6 1364 249.5 1363 249.5 1363 234.7 1362 234.7 1362 226.1 1361 226.1 1361 223.6 1360 223.6 1360 230.1 1359 230.1 1359 226.9 1358 226.9 1358 236.2 1357 236.2 1357 235.9 1356 235.9 1356 259.5 1355 259.5 1355 229.0 1354 229.0 1354 242.5 1353 242.5 1353 234.2 1352 234.2 1352 238.4 1351 238.4 1351 237.0 1350 237.0 1350 246.7 1349 246.7 1349 250.9 1348 250.9 1348 242.3 1347 242.3 1347 243.2 1346 243.2 1346 254.7 1345 254.7 1345 229.0 1344 229.0 1344 234.0 1343 234.0 1343 251.4 1342 251.4 1342 257.7 1341 257.7 1341 238.6 1340 238.6 1340 238.9 1339 238.9 1339 241.9 1338 241.9 1338 248.8 1337 248.8 1337 229.6 1336 229.6 1336 238.6 1335 238.6 1335 263.5 1334 263.5 1334 238.8 1333 238.8 1333 258.5 1332 258.5 1332 226.4 1331 226.4 1331 233.2 1330 233.2 1330 253.7 1329 253.7 1329 229.6 1328 229.6 1328 241.0 1327 241.0 1327 250.9 1326 250.9 1326 230.6 1325 230.6 1325 228.4 1324 228.4 1324 226.2 1323 226.2 1323 221.6 1322 221.6 1322 245.1 1321 245.1 1321 222.9 1320 222.9 1320 227.1 1319 227.1 1319 234.3 1318 234.3 1318 230.5 1317 230.5 1317 240.4 1316 240.4 1316 241.4 1315 241.4 1315 225.2 1314 225.2 1314 233.5 1313 233.5 1313 267.4 1312 267.4 1312 256.1 1311 256.1 1311 256.1 1310 256.1 1310 260.8 1309 260.8 1309 234.1 1308 234.1 1308 233.1 1307 233.1 1307 230.5 1306 230.5 1306 230.6 1305 230.6 1305 245.0 1304 245.0 1304 248.2 1303 248.2 1303 230.8 1302 230.8 1302 229.0 1301 229.0 1301 231.2 1300 231.2 1300 232.4 1299 232.4 1299 260.6 1298 260.6 1298 235.8 1297 235.8 1297 236.7 1296 236.7 1296 226.9 1295 226.9 1295 231.3 1294 231.3 1294 238.8 1293 238.8 1293 248.7 1292 248.7 1292 244.1 1291 244.1 1291 233.2 1290 233.2 1290 246.3 1289 246.3 1289 246.9 1288 246.9 1288 250.3 1287 250.3 1287 225.1 1286 225.1 1286 229.1 1285 229.1 1285 223.8 1284 223.8 1284 248.4 1283 248.4 1283 235.4 1282 235.4 1282 228.6 1281 228.6 1281 234.5 1280 234.5 1280 233.3 1279 233.3 1279 247.2 1278 247.2 1278 251.3 1277 251.3 1277 232.6 1276 232.6 1276 237.6 1275 237.6 1275 240.9 1274 240.9 1274 240.3 1273 240.3 1273 227.0 1272 227.0 1272 240.7 1271 240.7 1271 229.9 1270 229.9 1270 226.2 1269 226.2 1269 234.0 1268 234.0 1268 237.9 1267 237.9 1267 245.2 1266 245.2 1266 236.2 1265 236.2 1265 263.5 1264 263.5 1264 227.2 1263 227.2 1263 231.3 1262 231.3 1262 233.6 1261 233.6 1261 233.6 1260 233.6 1260 234.5 1259 234.5 1259 229.9 1258 229.9 1258 227.1 1257 227.1 1257 234.9 1256 234.9 1256 239.1 1255 239.1 1255 227.6 1254 227.6 1254 239.5 1253 239.5 1253 249.3 1252 249.3 1252 236.0 1251 236.0 1251 228.7 1250 228.7 1250 235.8 1249 235.8 1249 244.2 1248 244.2 1248 251.8 1247 251.8 1247 257.0 1246 257.0 1246 230.6 1245 230.6 1245 232.2 1244 232.2 1244 233.0 1243 233.0 1243 265.9 1242 265.9 1242 229.6 1241 229.6 1241 237.5 1240 237.5 1240 238.3 1239 238.3 1239 227.2 1238 227.2 1238 238.3 1237 238.3 1237 234.9 1236 234.9 1236 232.8 1235 232.8 1235 239.3 1234 239.3 1234 228.1 1233 228.1 1233 226.3 1232 226.3 1232 229.6 1231 229.6 1231 243.0 1230 243.0 1230 246.9 1229 246.9 1229 260.2 1228 260.2 1228 235.9 1227 235.9 1227 242.1 1226 242.1 1226 231.4 1225 231.4 1225 232.8 1224 232.8 1224 229.3 1223 229.3 1223 233.2 1222 233.2 1222 274.4 1221 274.4 1221 249.9 1220 249.9 1220 268.8 1219 268.8 1219 270.1 1218 270.1 1218 257.9 1217 257.9 1217 224.8 1216 224.8 1216 261.8 1215 261.8 1215 234.5 1214 234.5 1214 233.5 1213 233.5 1213 250.0 1212 250.0 1212 233.7 1211 233.7 1211 230.6 1210 230.6 1210 231.0 1209 231.0 1209 232.2 1208 232.2 1208 273.7 1207 273.7 1207 232.7 1206 232.7 1206 235.4 1205 235.4 1205 245.3 1204 245.3 1204 225.3 1203 225.3 1203 236.2 1202 236.2 1202 231.5 1201 231.5 1201 271.4 1200 271.4 1200 235.9 1199 235.9 1199 234.0 1198 234.0 1198 242.3 1197 242.3 1197 258.2 1196 258.2 1196 222.0 1195 222.0 1195 229.2 1194 229.2 1194 227.4 1193 227.4 1193 224.4 1192 224.4 1192 225.5 1191 225.5 1191 239.2 1190 239.2 1190 232.1 1189 232.1 1189 241.8 1188 241.8 1188 245.1 1187 245.1 1187 227.2 1186 227.2 1186 228.7 1185 228.7 1185 223.3 1184 223.3 1184 231.9 1183 231.9 1183 231.0 1182 231.0 1182 251.5 1181 251.5 1181 246.2 1180 246.2 1180 234.2 1179 234.2 1179 235.6 1178 235.6 1178 239.2 1177 239.2 1177 274.4 1176 274.4 1176 244.9 1175 244.9 1175 250.6 1174 250.6 1174 239.9 1173 239.9 1173 236.2 1172 236.2 1172 229.9 1171 229.9 1171 243.5 1170 243.5 1170 254.0 1169 254.0 1169 226.9 1168 226.9 1168 226.0 1167 226.0 1167 237.8 1166 237.8 1166 239.7 1165 239.7 1165 261.7 1164 261.7 1164 244.9 1163 244.9 1163 251.4 1162 251.4 1162 236.3 1161 236.3 1161 236.6 1160 236.6 1160 233.3 1159 233.3 1159 232.0 1158 232.0 1158 274.4 1157 274.4 1157 225.6 1156 225.6 1156 237.1 1155 237.1 1155 229.3 1154 229.3 1154 241.8 1153 241.8 1153 274.4 1152 274.4 1152 268.8 1151 268.8 1151 247.3 1150 247.3 1150 246.3 1149 246.3 1149 223.5 1148 223.5 1148 232.7 1147 232.7 1147 231.7 1146 231.7 1146 241.6 1145 241.6 1145 241.9 1144 241.9 1144 247.1 1143 247.1 1143 221.4 1142 221.4 1142 224.6 1141 224.6 1141 224.4 1140 224.4 1140 259.6 1139 259.6 1139 232.3 1138 232.3 1138 239.4 1137 239.4 1137 230.9 1136 230.9 1136 227.8 1135 227.8 1135 234.9 1134 234.9 1134 239.2 1133 239.2 1133 237.4 1132 237.4 1132 235.3 1131 235.3 1131 244.2 1130 244.2 1130 246.9 1129 246.9 1129 256.9 1128 256.9 1128 223.2 1127 223.2 1127 217.7 1126 217.7 1126 212.6 1125 212.6 1125 207.1 1124 207.1 1124 208.3 1123 208.3 1123 210.6 1122 210.6 1122 210.0 1121 210.0 1121 223.0 1120 223.0 1120 225.1 1119 225.1 1119 236.8 1118 236.8 1118 248.2 1117 248.2 1117 261.6 1116 261.6 1116 264.1 1115 264.1 1115 251.9 1114 251.9 1114 238.6 1113 238.6 1113 234.9 1112 234.9 1112 254.5 1111 254.5 1111 240.4 1110 240.4 1110 258.1 1109 258.1 1109 259.1 1108 259.1 1108 268.1 1107 268.1 1107 273.7 1106 273.7 1106 236.5 1105 236.5 1105 240.6 1104 240.6 1104 251.1 1103 251.1 1103 241.8 1102 241.8 1102 244.9 1101 244.9 1101 232.6 1100 232.6 1100 242.7 1099 242.7 1099 241.8 1098 241.8 1098 237.7 1097 237.7 1097 249.1 1096 249.1 1096 252.5 1095 252.5 1095 240.7 1094 240.7 1094 274.4 1093 274.4 1093 253.6 1092 253.6 1092 260.6 1091 260.6 1091 274.4 1090 274.4 1090 243.2 1089 243.2 1089 249.8 1088 249.8 1088 274.4 1087 274.4 1087 264.2 1086 264.2 1086 265.6 1085 265.6 1085 256.2 1084 256.2 1084 273.7 1083 273.7 1083 248.2 1082 248.2 1082 251.4 1081 251.4 1081 257.1 1080 257.1 1080 253.6 1079 253.6 1079 269.7 1078 269.7 1078 243.9 1077 243.9 1077 245.4 1076 245.4 1076 274.4 1075 274.4 1075 246.8 1074 246.8 1074 274.4 1073 274.4 1073 274.4 1072 274.4 1072 258.5 1071 258.5 1071 234.0 1070 234.0 1070 233.5 1069 233.5 1069 246.6 1068 246.6 1068 249.0 1067 249.0 1067 244.6 1066 244.6 1066 244.5 1065 244.5 1065 257.2 1064 257.2 1064 242.6 1063 242.6 1063 273.4 1062 273.4 1062 273.7 1061 273.7 1061 257.9 1060 257.9 1060 262.7 1059 262.7 1059 268.5 1058 268.5 1058 267.0 1057 267.0 1057 232.6 1056 232.6 1056 233.8 1055 233.8 1055 255.3 1054 255.3 1054 256.2 1053 256.2 1053 253.4 1052 253.4 1052 271.0 1051 271.0 1051 262.4 1050 262.4 1050 242.9 1049 242.9 1049 234.2 1048 234.2 1048 245.9 1047 245.9 1047 232.1 1046 232.1 1046 236.8 1045 236.8 1045 251.4 1044 251.4 1044 253.7 1043 253.7 1043 239.3 1042 239.3 1042 254.4 1041 254.4 1041 274.4 1040 274.4 1040 268.7 1039 268.7 1039 273.7 1038 273.7 1038 240.5 1037 240.5 1037 274.4 1036 274.4 1036 273.3 1035 273.3 1035 265.4 1034 265.4 1034 241.7 1033 241.7 1033 235.6 1032 235.6 1032 274.4 1031 274.4 1031 236.4 1030 236.4 1030 238.2 1029 238.2 1029 248.5 1028 248.5 1028 239.4 1027 239.4 1027 244.6 1026 244.6 1026 274.4 1025 274.4 1025 233.6 1024 233.6 1024 242.4 1023 242.4 1023 248.4 1022 248.4 1022 257.4 1021 257.4 1021 243.1 1020 243.1 1020 245.3 1019 245.3 1019 264.5 1018 264.5 1018 274.4 1017 274.4 1017 260.8 1016 260.8 1016 273.7 1015 273.7 1015 256.6 1014 256.6 1014 244.5 1013 244.5 1013 249.0 1012 249.0 1012 245.0 1011 245.0 1011 241.9 1010 241.9 1010 246.7 1009 246.7 1009 251.2 1008 251.2 1008 274.1 1007 274.1 1007 229.8 1006 229.8 1006 232.4 1005 232.4 1005 228.4 1004 228.4 1004 223.0 1003 223.0 1003 218.7 1002 218.7 1002 219.9 1001 219.9 1001 226.6 1000 226.6 1000 227.7 999 227.7 999 229.6 998 229.6 998 233.2 997 233.2 997 227.6 996 227.6 996 227.5 995 227.5 995 236.4 994 236.4 994 250.7 993 250.7 993 220.2 992 220.2 992 229.9 991 229.9 991 236.4 990 236.4 990 233.9 989 233.9 989 233.2 988 233.2 988 274.4 987 274.4 987 220.2 986 220.2 986 218.0 985 218.0 985 226.2 984 226.2 984 222.4 983 222.4 983 226.1 982 226.1 982 227.2 981 227.2 981 223.4 980 223.4 980 226.2 979 226.2 979 232.8 978 232.8 978 227.3 977 227.3 977 233.5 976 233.5 976 225.6 975 225.6 975 229.4 974 229.4 974 228.4 973 228.4 973 225.4 972 225.4 972 264.7 971 264.7 971 252.7 970 252.7 970 230.2 969 230.2 969 229.2 968 229.2 968 231.1 967 231.1 967 237.3 966 237.3 966 242.6 965 242.6 965 229.6 964 229.6 964 247.7 963 247.7 963 236.1 962 236.1 962 266.2 961 266.2 961 227.7 960 227.7 960 237.4 959 237.4 959 236.9 958 236.9 958 249.5 957 249.5 957 257.1 956 257.1 956 250.1 955 250.1 955 233.5 954 233.5 954 229.8 953 229.8 953 229.1 952 229.1 952 229.2 951 229.2 951 252.9 950 252.9 950 241.5 949 241.5 949 252.6 948 252.6 948 273.4 947 273.4 947 243.8 946 243.8 946 234.0 945 234.0 945 228.9 944 228.9 944 231.3 943 231.3 943 233.5 942 233.5 942 232.7 941 232.7 941 238.4 940 238.4 940 236.2 939 236.2 939 243.8 938 243.8 938 240.3 937 240.3 937 232.6 936 232.6 936 268.8 935 268.8 935 231.2 934 231.2 934 238.8 933 238.8 933 228.3 932 228.3 932 234.5 931 234.5 931 274.4 930 274.4 930 232.8 929 232.8 929 274.4 928 274.4 928 251.1 927 251.1 927 249.7 926 249.7 926 268.6 925 268.6 925 228.7 924 228.7 924 261.9 923 261.9 923 236.2 922 236.2 922 235.7 921 235.7 921 240.0 920 240.0 920 248.0 919 248.0 919 252.1 918 252.1 918 238.7 917 238.7 917 227.2 916 227.2 916 236.1 915 236.1 915 237.8 914 237.8 914 244.4 913 244.4 913 242.6 912 242.6 912 258.7 911 258.7 911 263.4 910 263.4 910 229.7 909 229.7 909 230.0 908 230.0 908 235.2 907 235.2 907 257.2 906 257.2 906 247.5 905 247.5 905 242.2 904 242.2 904 246.5 903 246.5 903 267.5 902 267.5 902 233.3 901 233.3 901 244.7 900 244.7 900 233.5 899 233.5 899 243.9 898 243.9 898 236.4 897 236.4 897 229.0 896 229.0 896 236.5 895 236.5 895 231.6 894 231.6 894 230.0 893 230.0 893 227.5 892 227.5 892 234.2 891 234.2 891 218.5 890 218.5 890 219.8 889 219.8 889 222.4 888 222.4 888 222.4 887 222.4 887 227.5 886 227.5 886 225.4 885 225.4 885 230.1 884 230.1 884 230.5 883 230.5 883 233.5 882 233.5 882 243.2 881 243.2 881 248.3 880 248.3 880 222.5 879 222.5 879 218.5 878 218.5 878 218.1 877 218.1 877 228.6 876 228.6 876 223.0 875 223.0 875 219.7 874 219.7 874 223.4 873 223.4 873 227.4 872 227.4 872 229.0 871 229.0 871 229.7 870 229.7 870 229.5 869 229.5 869 231.5 868 231.5 868 258.7 867 258.7 867 223.0 866 223.0 866 227.5 865 227.5 865 232.7 864 232.7 864 229.8 863 229.8 863 229.9 862 229.9 862 234.7 861 234.7 861 228.0 860 228.0 860 230.2 859 230.2 859 235.2 858 235.2 858 245.6 857 245.6 857 274.4 856 274.4 856 224.0 855 224.0 855 227.9 854 227.9 854 224.3 853 224.3 853 231.5 852 231.5 852 229.2 851 229.2 851 226.5 850 226.5 850 223.9 849 223.9 849 225.1 848 225.1 848 220.8 847 220.8 847 225.6 846 225.6 846 243.1 845 243.1 845 232.7 844 232.7 844 233.2 843 233.2 843 274.4 842 274.4 842 223.6 841 223.6 841 227.1 840 227.1 840 223.8 839 223.8 839 227.6 838 227.6 838 225.7 837 225.7 837 226.9 836 226.9 836 231.2 835 231.2 835 251.8 834 251.8 834 237.1 833 237.1 833 228.3 832 228.3 832 267.4 831 267.4 831 223.7 830 223.7 830 228.4 829 228.4 829 223.0 828 223.0 828 230.4 827 230.4 827 223.3 826 223.3 826 242.8 825 242.8 825 224.7 824 224.7 824 231.3 823 231.3 823 232.5 822 232.5 822 230.0 821 230.0 821 260.1 820 260.1 820 220.7 819 220.7 819 225.5 818 225.5 818 228.2 817 228.2 817 233.1 816 233.1 816 235.3 815 235.3 815 233.9 814 233.9 814 242.2 813 242.2 813 245.9 812 245.9 812 230.8 811 230.8 811 244.9 810 244.9 810 224.3 809 224.3 809 225.5 808 225.5 808 233.6 807 233.6 807 236.3 806 236.3 806 230.4 805 230.4 805 241.7 804 241.7 804 223.3 803 223.3 803 249.3 802 249.3 802 227.2 801 227.2 801 239.0 800 239.0 800 240.6 799 240.6 799 246.3 798 246.3 798 222.4 797 222.4 797 221.2 796 221.2 796 222.0 795 222.0 795 224.4 794 224.4 794 251.4 793 251.4 793 233.6 792 233.6 792 235.4 791 235.4 791 236.6 790 236.6 790 252.6 789 252.6 789 220.2 788 220.2 788 224.9 787 224.9 787 221.6 786 221.6 786 227.1 785 227.1 785 228.7 784 228.7 784 227.9 783 227.9 783 228.0 782 228.0 782 232.7 781 232.7 781 237.1 780 237.1 780 227.8 779 227.8 779 236.5 778 236.5 778 227.4 777 227.4 777 220.1 776 220.1 776 228.0 775 228.0 775 226.0 774 226.0 774 230.8 773 230.8 773 223.7 772 223.7 772 229.9 771 229.9 771 227.5 770 227.5 770 225.9 769 225.9 769 241.2 768 241.2 768 245.8 767 245.8 767 264.6 766 264.6 766 232.0 765 232.0 765 225.2 764 225.2 764 235.7 763 235.7 763 228.8 762 228.8 762 242.3 761 242.3 761 236.2 760 236.2 760 239.7 759 239.7 759 248.9 758 248.9 758 227.6 757 227.6 757 222.9 756 222.9 756 230.1 755 230.1 755 227.3 754 227.3 754 230.4 753 230.4 753 236.5 752 236.5 752 223.4 751 223.4 751 222.9 750 222.9 750 221.6 749 221.6 749 227.2 748 227.2 748 234.6 747 234.6 747 250.2 746 250.2 746 236.0 745 236.0 745 251.1 744 251.1 744 245.6 743 245.6 743 235.7 742 235.7 742 238.0 741 238.0 741 235.6 740 235.6 740 246.5 739 246.5 739 224.6 738 224.6 738 221.1 737 221.1 737 223.3 736 223.3 736 260.0 735 260.0 735 236.4 734 236.4 734 233.3 733 233.3 733 225.2 732 225.2 732 219.8 731 219.8 731 226.5 730 226.5 730 228.1 729 228.1 729 230.3 728 230.3 728 229.1 727 229.1 727 229.4 726 229.4 726 230.5 725 230.5 725 227.8 724 227.8 724 229.6 723 229.6 723 247.2 722 247.2 722 260.9 721 260.9 721 228.2 720 228.2 720 274.4 719 274.4 719 234.0 718 234.0 718 244.8 717 244.8 717 229.0 716 229.0 716 242.8 715 242.8 715 222.9 714 222.9 714 223.5 713 223.5 713 239.5 712 239.5 712 222.8 711 222.8 711 232.3 710 232.3 710 233.8 709 233.8 709 237.2 708 237.2 708 247.4 707 247.4 707 235.7 706 235.7 706 238.4 705 238.4 705 228.0 704 228.0 704 233.2 703 233.2 703 228.6 702 228.6 702 240.5 701 240.5 701 274.4 700 274.4 700 264.3 699 264.3 699 241.3 698 241.3 698 236.5 697 236.5 697 230.9 696 230.9 696 237.4 695 237.4 695 242.4 694 242.4 694 243.5 693 243.5 693 249.8 692 249.8 692 225.2 691 225.2 691 225.8 690 225.8 690 226.3 689 226.3 689 233.4 688 233.4 688 229.3 687 229.3 687 229.4 686 229.4 686 236.1 685 236.1 685 239.7 684 239.7 684 227.6 683 227.6 683 231.3 682 231.3 682 250.7 681 250.7 681 241.5 680 241.5 680 230.4 679 230.4 679 248.2 678 248.2 678 252.0 677 252.0 677 259.8 676 259.8 676 231.2 675 231.2 675 234.0 674 234.0 674 239.1 673 239.1 673 238.6 672 238.6 672 232.2 671 232.2 671 263.1 670 263.1 670 235.1 669 235.1 669 232.1 668 232.1 668 235.2 667 235.2 667 242.6 666 242.6 666 248.8 665 248.8 665 249.8 664 249.8 664 243.6 663 243.6 663 235.3 662 235.3 662 245.1 661 245.1 661 226.3 660 226.3 660 225.2 659 225.2 659 227.2 658 227.2 658 239.8 657 239.8 657 233.8 656 233.8 656 243.7 655 243.7 655 247.1 654 247.1 654 256.4 653 256.4 653 233.5 652 233.5 652 223.2 651 223.2 651 228.0 650 228.0 650 224.5 649 224.5 649 232.0 648 232.0 648 234.7 647 234.7 647 234.7 646 234.7 646 232.6 645 232.6 645 235.2 644 235.2 644 240.3 643 240.3 643 235.1 642 235.1 642 234.6 641 234.6 641 236.1 640 236.1 640 240.5 639 240.5 639 248.8 638 248.8 638 274.4 637 274.4 637 239.5 636 239.5 636 233.0 635 233.0 635 241.3 634 241.3 634 247.0 633 247.0 633 255.0 632 255.0 632 272.9 631 272.9 631 237.0 630 237.0 630 245.3 629 245.3 629 233.0 628 233.0 628 245.3 627 245.3 627 243.6 626 243.6 626 230.0 625 230.0 625 235.4 624 235.4 624 229.6 623 229.6 623 235.8 622 235.8 622 225.1 621 225.1 621 237.1 620 237.1 620 233.0 619 233.0 619 239.4 618 239.4 618 274.4 617 274.4 617 229.4 616 229.4 616 230.1 615 230.1 615 229.8 614 229.8 614 237.8 613 237.8 613 228.6 612 228.6 612 230.4 611 230.4 611 250.2 610 250.2 610 241.7 609 241.7 609 267.2 608 267.2 608 235.3 607 235.3 607 239.2 606 239.2 606 233.1 605 233.1 605 246.4 604 246.4 604 240.3 603 240.3 603 229.6 602 229.6 602 248.6 601 248.6 601 221.7 600 221.7 600 222.9 599 222.9 599 228.3 598 228.3 598 227.2 597 227.2 597 231.4 596 231.4 596 234.4 595 234.4 595 274.4 594 274.4 594 237.1 593 237.1 593 274.4 592 274.4 592 232.8 591 232.8 591 227.3 590 227.3 590 229.2 589 229.2 589 240.8 588 240.8 588 274.4 587 274.4 587 253.2 586 253.2 586 233.7 585 233.7 585 223.9 584 223.9 584 238.7 583 238.7 583 237.6 582 237.6 582 232.9 581 232.9 581 236.6 580 236.6 580 225.6 579 225.6 579 231.5 578 231.5 578 228.9 577 228.9 577 229.4 576 229.4 576 223.6 575 223.6 575 232.6 574 232.6 574 230.8 573 230.8 573 226.1 572 226.1 572 251.5 571 251.5 571 234.0 570 234.0 570 274.4 569 274.4 569 236.3 568 236.3 568 236.7 567 236.7 567 228.3 566 228.3 566 240.0 565 240.0 565 230.8 564 230.8 564 265.7 563 265.7 563 228.3 562 228.3 562 231.9 561 231.9 561 230.8 560 230.8 560 226.7 559 226.7 559 252.6 558 252.6 558 231.1 557 231.1 557 228.6 556 228.6 556 233.0 555 233.0 555 242.5 554 242.5 554 233.8 553 233.8 553 245.0 552 245.0 552 246.0 551 246.0 551 230.3 550 230.3 550 229.0 549 229.0 549 225.8 548 225.8 548 228.7 547 228.7 547 230.4 546 230.4 546 230.1 545 230.1 545 224.0 544 224.0 544 218.2 543 218.2 543 222.8 542 222.8 542 221.2 541 221.2 541 240.1 540 240.1 540 223.6 539 223.6 539 225.5 538 225.5 538 229.0 537 229.0 537 232.3 536 232.3 536 242.1 535 242.1 535 229.5 534 229.5 534 222.4 533 222.4 533 225.3 532 225.3 532 224.5 531 224.5 531 224.8 530 224.8 530 231.8 529 231.8 529 236.6 528 236.6 528 218.8 527 218.8 527 218.9 526 218.9 526 219.1 525 219.1 525 226.4 524 226.4 524 222.3 523 222.3 523 225.0 522 225.0 522 225.2 521 225.2 521 227.1 520 227.1 520 227.7 519 227.7 519 244.4 518 244.4 518 231.7 517 231.7 517 223.6 516 223.6 516 226.9 515 226.9 515 221.5 514 221.5 514 224.0 513 224.0 513 225.9 512 225.9 512 236.6 511 236.6 511 227.4 510 227.4 510 221.6 509 221.6 509 247.5 508 247.5 508 226.9 507 226.9 507 237.2 506 237.2 506 274.4 505 274.4 505 225.9 504 225.9 504 220.7 503 220.7 503 222.5 502 222.5 502 223.1 501 223.1 501 229.9 500 229.9 500 227.4 499 227.4 499 235.6 498 235.6 498 232.3 497 232.3 497 238.4 496 238.4 496 255.7 495 255.7 495 222.7 494 222.7 494 233.8 493 233.8 493 260.4 492 260.4 492 238.0 491 238.0 491 241.4 490 241.4 490 236.6 489 236.6 489 244.8 488 244.8 488 244.0 487 244.0 487 235.9 486 235.9 486 233.5 485 233.5 485 274.4 484 274.4 484 231.0 483 231.0 483 274.4 482 274.4 482 245.1 481 245.1 481 239.0 480 239.0 480 226.7 479 226.7 479 226.7 478 226.7 478 229.8 477 229.8 477 229.0 476 229.0 476 228.5 475 228.5 475 247.2 474 247.2 474 241.0 473 241.0 473 258.3 472 258.3 472 240.2 471 240.2 471 242.2 470 242.2 470 274.4 469 274.4 469 230.3 468 230.3 468 223.6 467 223.6 467 257.9 466 257.9 466 233.6 465 233.6 465 231.0 464 231.0 464 234.7 463 234.7 463 243.1 462 243.1 462 232.7 461 232.7 461 229.4 460 229.4 460 222.8 459 222.8 459 223.3 458 223.3 458 224.3 457 224.3 457 231.4 456 231.4 456 223.7 455 223.7 455 231.7 454 231.7 454 274.4 453 274.4 453 235.5 452 235.5 452 241.9 451 241.9 451 258.7 450 258.7 450 242.2 449 242.2 449 222.0 448 222.0 448 226.0 447 226.0 447 221.8 446 221.8 446 226.4 445 226.4 445 227.8 444 227.8 444 222.8 443 222.8 443 227.3 442 227.3 442 223.1 441 223.1 441 219.5 440 219.5 440 217.5 439 217.5 439 219.4 438 219.4 438 225.7 437 225.7 437 229.3 436 229.3 436 250.3 435 250.3 435 226.4 434 226.4 434 239.0 433 239.0 433 231.8 432 231.8 432 234.7 431 234.7 431 236.1 430 236.1 430 233.1 429 233.1 429 257.3 428 257.3 428 265.6 427 265.6 427 245.7 426 245.7 426 229.2 425 229.2 425 230.1 424 230.1 424 235.3 423 235.3 423 237.7 422 237.7 422 274.4 421 274.4 421 251.0 420 251.0 420 255.8 419 255.8 419 229.5 418 229.5 418 227.4 417 227.4 417 237.2 416 237.2 416 231.1 415 231.1 415 226.8 414 226.8 414 228.5 413 228.5 413 251.2 412 251.2 412 233.0 411 233.0 411 243.6 410 243.6 410 274.4 409 274.4 409 244.9 408 244.9 408 231.6 407 231.6 407 240.9 406 240.9 406 253.2 405 253.2 405 249.2 404 249.2 404 224.9 403 224.9 403 239.7 402 239.7 402 249.4 401 249.4 401 227.6 400 227.6 400 228.8 399 228.8 399 225.6 398 225.6 398 223.9 397 223.9 397 246.8 396 246.8 396 232.7 395 232.7 395 273.6 394 273.6 394 233.4 393 233.4 393 242.6 392 242.6 392 224.7 391 224.7 391 232.0 390 232.0 390 255.2 389 255.2 389 229.8 388 229.8 388 238.7 387 238.7 387 238.3 386 238.3 386 249.1 385 249.1 385 241.5 384 241.5 384 236.4 383 236.4 383 257.5 382 257.5 382 230.3 381 230.3 381 226.9 380 226.9 380 228.2 379 228.2 379 230.0 378 230.0 378 222.8 377 222.8 377 222.9 376 222.9 376 228.3 375 228.3 375 231.9 374 231.9 374 226.4 373 226.4 373 236.7 372 236.7 372 238.5 371 238.5 371 224.6 370 224.6 370 228.5 369 228.5 369 255.3 368 255.3 368 222.0 367 222.0 367 231.3 366 231.3 366 227.3 365 227.3 365 228.7 364 228.7 364 242.4 363 242.4 363 226.0 362 226.0 362 261.1 361 261.1 361 242.0 360 242.0 360 244.8 359 244.8 359 220.7 358 220.7 358 225.9 357 225.9 357 228.4 356 228.4 356 226.9 355 226.9 355 239.5 354 239.5 354 246.9 353 246.9 353 223.9 352 223.9 352 231.9 351 231.9 351 221.4 350 221.4 350 228.3 349 228.3 349 224.3 348 224.3 348 227.1 347 227.1 347 230.3 346 230.3 346 225.9 345 225.9 345 226.4 344 226.4 344 233.6 343 233.6 343 226.2 342 226.2 342 222.2 341 222.2 341 231.3 340 231.3 340 226.2 339 226.2 339 242.4 338 242.4 338 246.1 337 246.1 337 230.3 336 230.3 336 224.2 335 224.2 335 221.6 334 221.6 334 225.0 333 225.0 333 227.7 332 227.7 332 236.5 331 236.5 331 219.4 330 219.4 330 221.7 329 221.7 329 222.9 328 222.9 328 221.6 327 221.6 327 230.5 326 230.5 326 231.6 325 231.6 325 224.8 324 224.8 324 226.6 323 226.6 323 229.9 322 229.9 322 223.1 321 223.1 321 225.7 320 225.7 320 230.9 319 230.9 319 234.5 318 234.5 318 232.3 317 232.3 317 238.0 316 238.0 316 232.2 315 232.2 315 252.5 314 252.5 314 227.5 313 227.5 313 220.9 312 220.9 312 227.4 311 227.4 311 233.4 310 233.4 310 235.1 309 235.1 309 222.1 308 222.1 308 227.5 307 227.5 307 219.9 306 219.9 306 226.7 305 226.7 305 227.4 304 227.4 304 224.6 303 224.6 303 225.3 302 225.3 302 234.1 301 234.1 301 226.6 300 226.6 300 230.5 299 230.5 299 223.1 298 223.1 298 227.3 297 227.3 297 227.4 296 227.4 296 227.3 295 227.3 295 233.4 294 233.4 294 229.2 293 229.2 293 250.8 292 250.8 292 225.8 291 225.8 291 226.6 290 226.6 290 224.1 289 224.1 289 218.8 288 218.8 288 216.5 287 216.5 287 219.4 286 219.4 286 217.0 285 217.0 285 219.4 284 219.4 284 219.6 283 219.6 283 222.5 282 222.5 282 222.6 281 222.6 281 218.6 280 218.6 280 224.9 279 224.9 279 232.6 278 232.6 278 229.5 277 229.5 277 220.9 276 220.9 276 219.2 275 219.2 275 222.6 274 222.6 274 221.6 273 221.6 273 217.7 272 217.7 272 224.3 271 224.3 271 221.7 270 221.7 270 245.3 269 245.3 269 229.9 268 229.9 268 222.9 267 222.9 267 228.2 266 228.2 266 234.2 265 234.2 265 240.1 264 240.1 264 244.9 263 244.9 263 232.5 262 232.5 262 221.2 261 221.2 261 223.2 260 223.2 260 234.7 259 234.7 259 233.3 258 233.3 258 241.0 257 241.0 257 229.1 256 229.1 256 222.7 255 222.7 255 231.4 254 231.4 254 228.6 253 228.6 253 234.4 252 234.4 252 238.1 251 238.1 251 225.3 250 225.3 250 229.5 249 229.5 249 238.5 248 238.5 248 243.7 247 243.7 247 249.8 246 249.8 246 231.4 245 231.4 245 224.8 244 224.8 244 222.2 243 222.2 243 218.8 242 218.8 242 221.2 241 221.2 241 217.5 240 217.5 240 215.1 239 215.1 239 217.9 238 217.9 238 217.8 237 217.8 237 221.0 236 221.0 236 220.8 235 220.8 235 220.5 234 220.5 234 226.2 233 226.2 233 219.0 232 219.0 232 239.6 231 239.6 231 218.5 230 218.5 230 218.9 229 218.9 229 217.2 228 217.2 228 215.9 227 215.9 227 235.5 226 235.5 226 225.7 225 225.7 225 242.0 224 242.0 224 218.5 223 218.5 223 222.9 222 222.9 222 215.4 221 215.4 221 213.5 220 213.5 220 218.4 219 218.4 219 216.2 218 216.2 218 227.6 217 227.6 217 219.1 216 219.1 216 245.4 215 245.4 215 225.2 214 225.2 214 219.3 213 219.3 213 218.3 212 218.3 212 225.0 211 225.0 211 220.1 210 220.1 210 219.7 209 219.7 209 217.3 208 217.3 208 220.4 207 220.4 207 233.0 206 233.0 206 220.3 205 220.3 205 222.7 204 222.7 204 224.5 203 224.5 203 220.4 202 220.4 202 241.8 201 241.8 201 215.1 200 215.1 200 218.3 199 218.3 199 215.8 198 215.8 198 215.2 197 215.2 197 230.7 196 230.7 196 222.4 195 222.4 195 222.8 194 222.8 194 215.5 193 215.5 193 220.4 192 220.4 192 221.1 191 221.1 191 224.5 190 224.5 190 225.8 189 225.8 189 216.8 188 216.8 188 220.8 187 220.8 187 226.5 186 226.5 186 231.5 185 231.5 185 221.1 184 221.1 184 219.9 183 219.9 183 219.8 182 219.8 182 224.0 181 224.0 181 229.7 180 229.7 180 217.5 179 217.5 179 246.6 178 246.6 178 214.6 177 214.6 177 213.6 176 213.6 176 226.3 175 226.3 175 220.3 174 220.3 174 217.0 173 217.0 173 224.4 172 224.4 172 218.3 171 218.3 171 218.0 170 218.0 170 216.6 169 216.6 169 217.9 168 217.9 168 236.3 167 236.3 167 219.2 166 219.2 166 222.3 165 222.3 165 226.5 164 226.5 164 220.5 163 220.5 163 217.6 162 217.6 162 218.5 161 218.5 161 216.5 160 216.5 160 240.8 159 240.8 159 221.8 158 221.8 158 223.7 157 223.7 157 235.2 156 235.2 156 214.1 155 214.1 155 218.7 154 218.7 154 222.3 153 222.3 153 217.4 152 217.4 152 212.7 151 212.7 151 210.5 150 210.5 150 214.9 149 214.9 149 211.6 148 211.6 148 212.0 147 212.0 147 212.1 146 212.1 146 210.0 145 210.0 145 211.7 144 211.7 144 210.9 143 210.9 143 209.7 142 209.7 142 210.8 141 210.8 141 213.5 140 213.5 140 208.9 139 208.9 139 210.6 138 210.6 138 209.8 137 209.8 137 219.9 136 219.9 136 211.8 135 211.8 135 212.4 134 212.4 134 211.3 133 211.3 133 215.3 132 215.3Z" fill="#3232c8"/><path d="M132 199.7 133 199.7 133 199.5 134 199.5 134 199.4 135 199.4 135 199.4 136 199.4 136 199.2 137 199.2 137 199.8 138 199.8 138 199.1 139 199.1 139 199.5 140 199.5 140 199.9 141 199.9 141 199.7 142 199.7 142 199.8 143 199.8 143 200.0 144 200.0 144 199.9 145 199.9 145 199.6 146 199.6 146 199.8 147 199.8 147 199.4 148 199.4 148 199.8 149 199.8 149 199.5 150 199.5 150 199.5 151 199.5 151 198.9 152 198.9 152 198.8 153 198.8 153 198.7 154 198.7 154 198.1 155 198.1 155 197.8 156 197.8 156 197.1 157 197.1 157 196.2 158 196.2 158 197.1 159 197.1 159 196.5 160 196.5 160 196.5 161 196.5 161 197.1 162 197.1 162 196.8 163 196.8 163 196.7 164 196.7 164 197.5 165 197.5 165 197.3 166 197.3 166 197.6 167 197.6 167 197.4 168 197.4 168 197.4 169 197.4 169 197.9 170 197.9 170 197.1 171 197.1 171 198.0 172 198.0 172 197.6 173 197.6 173 197.5 174 197.5 174 196.6 175 196.6 175 197.1 176 197.1 176 198.1 177 198.1 177 198.1 178 198.1 178 196.7 179 196.7 179 197.2 180 197.2 180 197.0 181 197.0 181 197.6 182 197.6 182 197.8 183 197.8 183 197.3 184 197.3 184 198.1 185 198.1 185 196.9 186 196.9 186 197.4 187 197.4 187 198.1 188 198.1 188 197.6 189 197.6 189 196.7 190 196.7 190 196.7 191 196.7 191 197.8 192 197.8 192 196.6 193 196.6 193 197.3 194 197.3 194 198.0 195 198.0 195 197.2 196 197.2 196 196.6 197 196.6 197 197.5 198 197.5 198 198.0 199 198.0 199 198.3 200 198.3 200 197.7 201 197.7 201 197.0 202 197.0 202 197.6 203 197.6 203 197.0 204 197.0 204 196.8 205 196.8 205 197.8 206 197.8 206 196.5 207 196.5 207 196.8 208 196.8 208 197.0 209 197.0 209 196.9 210 196.9 210 197.7 211 197.7 211 197.9 212 197.9 212 197.4 213 197.4 213 197.6 214 197.6 214 197.0 215 197.0 215 196.6 216 196.6 216 197.6 217 197.6 217 196.7 218 196.7 218 197.6 219 197.6 219 197.8 220 197.8 220 197.9 221 197.9 221 198.0 222 198.0 222 196.4 223 196.4 223 198.1 224 198.1 224 196.2 225 196.2 225 197.9 226 197.9 226 197.3 227 197.3 227 196.6 228 196.6 228 197.8 229 197.8 229 197.8 230 197.8 230 197.7 231 197.7 231 198.2 232 198.2 232 197.9 233 197.9 233 197.9 234 197.9 234 197.8 235 197.8 235 197.1 236 197.1 236 198.0 237 198.0 237 197.7 238 197.7 238 197.1 239 197.1 239 196.7 240 196.7 240 197.3 241 197.3 241 197.1 242 197.1 242 197.5 243 197.5 243 196.8 244 196.8 244 195.3 245 195.3 245 192.9 246 192.9 246 191.4 247 191.4 247 193.3 248 193.3 248 194.1 249 194.1 249 194.1 250 194.1 250 192.7 251 192.7 251 193.1 252 193.1 252 193.5 253 193.5 253 193.1 254 193.1 254 194.3 255 194.3 255 193.5 256 193.5 256 192.9 257 192.9 257 192.7 258 192.7 258 192.4 259 192.4 259 194.1 260 194.1 260 193.5 261 193.5 261 194.2 262 194.2 262 194.9 263 194.9 263 194.1 264 194.1 264 194.5 265 194.5 265 194.1 266 194.1 266 196.0 267 196.0 267 196.2 268 196.2 268 196.7 269 196.7 269 196.1 270 196.1 270 195.5 271 195.5 271 196.9 272 196.9 272 196.6 273 196.6 273 197.3 274 197.3 274 196.7 275 196.7 275 197.4 276 197.4 276 196.2 277 196.2 277 196.0 278 196.0 278 197.1 279 197.1 279 197.1 280 197.1 280 196.9 281 196.9 281 197.4 282 197.4 282 196.4 283 196.4 283 196.8 284 196.8 284 197.2 285 197.2 285 197.0 286 197.0 286 197.1 287 197.1 287 196.2 288 196.2 288 197.4 289 197.4 289 196.6 290 196.6 290 195.4 291 195.4 291 195.4 292 195.4 292 195.2 293 195.2 293 194.5 294 194.5 294 195.2 295 195.2 295 194.4 296 194.4 296 194.0 297 194.0 297 195.3 298 195.3 298 193.6 299 193.6 299 194.0 300 194.0 300 193.7 301 193.7 301 195.6 302 195.6 302 195.3 303 195.3 303 193.9 304 193.9 304 193.8 305 193.8 305 195.4 306 195.4 306 194.9 307 194.9 307 195.7 308 195.7 308 194.7 309 194.7 309 193.7 310 193.7 310 194.6 311 194.6 311 194.4 312 194.4 312 194.0 313 194.0 313 195.0 314 195.0 314 193.7 315 193.7 315 195.1 316 195.1 316 194.4 317 194.4 317 193.8 318 193.8 318 194.6 319 194.6 319 194.4 320 194.4 320 194.8 321 194.8 321 193.8 322 193.8 322 194.0 323 194.0 323 193.3 324 193.3 324 193.4 325 193.4 325 193.5 326 193.5 326 194.6 327 194.6 327 195.3 328 195.3 328 194.2 329 194.2 329 193.5 330 193.5 330 193.4 331 193.4 331 194.2 332 194.2 332 195.0 333 195.0 333 193.3 334 193.3 334 193.4 335 193.4 335 194.5 336 194.5 336 193.9 337 193.9 337 193.1 338 193.1 338 193.7 339 193.7 339 194.2 340 194.2 340 193.5 341 193.5 341 195.3 342 195.3 342 194.3 343 194.3 343 193.6 344 193.6 344 194.9 345 194.9 345 194.8 346 194.8 346 195.3 347 195.3 347 194.4 348 194.4 348 195.5 349 195.5 349 194.1 350 194.1 350 195.4 351 195.4 351 193.4 352 193.4 352 193.3 353 193.3 353 193.8 354 193.8 354 194.7 355 194.7 355 194.8 356 194.8 356 193.0 357 193.0 357 195.3 358 195.3 358 195.1 359 195.1 359 192.6 360 192.6 360 195.1 361 195.1 361 193.4 362 193.4 362 195.3 363 195.3 363 194.1 364 194.1 364 193.9 365 193.9 365 194.0 366 194.0 366 195.0 367 195.0 367 193.6 368 193.6 368 194.6 369 194.6 369 194.9 370 194.9 370 193.3 371 193.3 371 194.3 372 194.3 372 193.3 373 193.3 373 193.1 374 193.1 374 194.8 375 194.8 375 193.3 376 193.3 376 193.5 377 193.5 377 193.4 378 193.4 378 194.2 379 194.2 379 193.1 380 193.1 380 192.9 381 192.9 381 194.8 382 194.8 382 193.1 383 193.1 383 194.0 384 194.0 384 194.0 385 194.0 385 194.0 386 194.0 386 193.2 387 193.2 387 192.8 388 192.8 388 192.9 389 192.9 389 193.9 390 193.9 390 194.6 391 194.6 391 193.1 392 193.1 392 193.2 393 193.2 393 193.3 394 193.3 394 192.6 395 192.6 395 194.1 396 194.1 396 195.1 397 195.1 397 194.4 398 194.4 398 193.2 399 193.2 399 193.3 400 193.3 400 193.3 401 193.3 401 194.1 402 194.1 402 193.7 403 193.7 403 194.7 404 194.7 404 192.9 405 192.9 405 192.7 406 192.7 406 194.0 407 194.0 407 192.6 408 192.6 408 193.1 409 193.1 409 192.6 410 192.6 410 192.9 411 192.9 411 193.2 412 193.2 412 194.1 413 194.1 413 193.5 414 193.5 414 195.0 415 195.0 415 193.9 416 193.9 416 194.2 417 194.2 417 192.9 418 192.9 418 195.0 419 195.0 419 192.1 420 192.1 420 192.4 421 192.4 421 192.5 422 192.5 422 193.9 423 193.9 423 193.2 424 193.2 424 194.2 425 194.2 425 194.1 426 194.1 426 194.4 427 194.4 427 192.6 428 192.6 428 192.3 429 192.3 429 192.4 430 192.4 430 193.5 431 193.5 431 194.9 432 194.9 432 192.6 433 192.6 433 194.7 434 194.7 434 194.6 435 194.6 435 194.3 436 194.3 436 193.4 437 193.4 437 194.2 438 194.2 438 195.4 439 195.4 439 195.2 440 195.2 440 195.9 441 195.9 441 195.4 442 195.4 442 194.4 443 194.4 443 194.3 444 194.3 444 194.1 445 194.1 445 194.2 446 194.2 446 194.5 447 194.5 447 194.9 448 194.9 448 194.4 449 194.4 449 194.8 450 194.8 450 194.1 451 194.1 451 194.5 452 194.5 452 194.0 453 194.0 453 192.7 454 192.7 454 192.6 455 192.6 455 192.4 456 192.4 456 192.4 457 192.4 457 194.0 458 194.0 458 193.9 459 193.9 459 192.4 460 192.4 460 193.7 461 193.7 461 193.9 462 193.9 462 194.4 463 194.4 463 193.7 464 193.7 464 194.8 465 194.8 465 194.5 466 194.5 466 193.2 467 193.2 467 194.3 468 194.3 468 192.7 469 192.7 469 192.5 470 192.5 470 192.6 471 192.6 471 194.1 472 194.1 472 191.6 473 191.6 473 192.8 474 192.8 474 192.7 475 192.7 475 194.2 476 194.2 476 193.2 477 193.2 477 194.6 478 194.6 478 194.2 479 194.2 479 192.3 480 192.3 480 193.1 481 193.1 481 192.5 482 192.5 482 192.5 483 192.5 483 193.8 484 193.8 484 193.3 485 193.3 485 192.4 486 192.4 486 194.6 487 194.6 487 192.2 488 192.2 488 193.1 489 193.1 489 194.6 490 194.6 490 192.9 491 192.9 491 194.4 492 194.4 492 193.9 493 193.9 493 194.4 494 194.4 494 194.8 495 194.8 495 194.3 496 194.3 496 193.8 497 193.8 497 194.7 498 194.7 498 194.1 499 194.1 499 193.4 500 193.4 500 195.1 501 195.1 501 195.1 502 195.1 502 195.2 503 195.2 503 193.8 504 193.8 504 194.6 505 194.6 505 193.3 506 193.3 506 193.2 507 193.2 507 193.3 508 193.3 508 194.3 509 194.3 509 194.2 510 194.2 510 193.8 511 193.8 511 194.6 512 194.6 512 194.9 513 194.9 513 193.6 514 193.6 514 194.2 515 194.2 515 193.9 516 193.9 516 194.3 517 194.3 517 193.0 518 193.0 518 193.8 519 193.8 519 194.6 520 194.6 520 194.7 521 194.7 521 195.6 522 195.6 522 194.2 523 194.2 523 194.7 524 194.7 524 194.4 525 194.4 525 195.1 526 195.1 526 195.3 527 195.3 527 194.6 528 194.6 528 193.6 529 193.6 529 194.0 530 194.0 530 194.3 531 194.3 531 195.2 532 195.2 532 193.5 533 193.5 533 195.5 534 195.5 534 194.8 535 194.8 535 193.7 536 193.7 536 194.9 537 194.9 537 195.9 538 195.9 538 195.4 539 195.4 539 196.2 540 196.2 540 196.6 541 196.6 541 198.2 542 198.2 542 197.5 543 197.5 543 196.8 544 196.8 544 194.7 545 194.7 545 194.4 546 194.4 546 192.7 547 192.7 547 193.0 548 193.0 548 193.1 549 193.1 549 192.9 550 192.9 550 192.9 551 192.9 551 193.8 552 193.8 552 192.6 553 192.6 553 194.1 554 194.1 554 194.2 555 194.2 555 193.0 556 193.0 556 193.7 557 193.7 557 193.8 558 193.8 558 194.4 559 194.4 559 192.8 560 192.8 560 191.9 561 191.9 561 192.2 562 192.2 562 192.2 563 192.2 563 192.0 564 192.0 564 193.6 565 193.6 565 192.2 566 192.2 566 192.5 567 192.5 567 191.8 568 191.8 568 193.2 569 193.2 569 192.8 570 192.8 570 193.6 571 193.6 571 191.7 572 191.7 572 193.0 573 193.0 573 192.3 574 192.3 574 193.7 575 193.7 575 192.3 576 192.3 576 192.4 577 192.4 577 193.2 578 193.2 578 192.0 579 192.0 579 194.1 580 194.1 580 191.3 581 191.3 581 192.3 582 192.3 582 192.3 583 192.3 583 191.7 584 191.7 584 191.9 585 191.9 585 193.7 586 193.7 586 193.6 587 193.6 587 192.2 588 192.2 588 191.3 589 191.3 589 192.3 590 192.3 590 193.3 591 193.3 591 192.6 592 192.6 592 192.8 593 192.8 593 193.7 594 193.7 594 193.0 595 193.0 595 192.9 596 192.9 596 191.8 597 191.8 597 191.5 598 191.5 598 192.8 599 192.8 599 194.1 600 194.1 600 193.4 601 193.4 601 192.5 602 192.5 602 192.7 603 192.7 603 191.2 604 191.2 604 193.5 605 193.5 605 192.0 606 192.0 606 191.5 607 191.5 607 193.2 608 193.2 608 190.9 609 190.9 609 192.2 610 192.2 610 192.8 611 192.8 611 191.6 612 191.6 612 193.7 613 193.7 613 193.7 614 193.7 614 193.2 615 193.2 615 193.7 616 193.7 616 193.8 617 193.8 617 192.0 618 192.0 618 191.7 619 191.7 619 192.2 620 192.2 620 191.1 621 191.1 621 191.3 622 191.3 622 191.1 623 191.1 623 192.4 624 192.4 624 191.0 625 191.0 625 192.5 626 192.5 626 189.7 627 189.7 627 189.7 628 189.7 628 190.8 629 190.8 629 191.1 630 191.1 630 193.2 631 193.2 631 190.7 632 190.7 632 192.0 633 192.0 633 190.5 634 190.5 634 190.0 635 190.0 635 192.8 636 192.8 636 191.3 637 191.3 637 192.2 638 192.2 638 190.9 639 190.9 639 190.3 640 190.3 640 192.9 641 192.9 641 191.6 642 191.6 642 190.8 643 190.8 643 192.9 644 192.9 644 192.5 645 192.5 645 190.6 646 190.6 646 190.6 647 190.6 647 192.9 648 192.9 648 192.7 649 192.7 649 191.8 650 191.8 650 191.2 651 191.2 651 191.0 652 191.0 652 192.6 653 192.6 653 190.5 654 190.5 654 190.0 655 190.0 655 192.7 656 192.7 656 191.3 657 191.3 657 190.2 658 190.2 658 192.1 659 192.1 659 191.5 660 191.5 660 192.0 661 192.0 661 189.8 662 189.8 662 192.8 663 192.8 663 192.8 664 192.8 664 190.5 665 190.5 665 190.4 666 190.4 666 190.1 667 190.1 667 190.6 668 190.6 668 191.3 669 191.3 669 192.5 670 192.5 670 192.2 671 192.2 671 191.2 672 191.2 672 190.9 673 190.9 673 191.2 674 191.2 674 191.9 675 191.9 675 191.8 676 191.8 676 191.2 677 191.2 677 191.4 678 191.4 678 192.9 679 192.9 679 192.7 680 192.7 680 191.6 681 191.6 681 192.5 682 192.5 682 192.1 683 192.1 683 191.1 684 191.1 684 192.3 685 192.3 685 190.6 686 190.6 686 191.0 687 191.0 687 192.9 688 192.9 688 192.7 689 192.7 689 192.9 690 192.9 690 192.7 691 192.7 691 193.3 692 193.3 692 191.6 693 191.6 693 192.6 694 192.6 694 191.2 695 191.2 695 192.1 696 192.1 696 192.2 697 192.2 697 192.2 698 192.2 698 189.8 699 189.8 699 189.9 700 189.9 700 190.2 701 190.2 701 192.4 702 192.4 702 192.0 703 192.0 703 192.1 704 192.1 704 193.3 705 193.3 705 191.2 706 191.2 706 192.6 707 192.6 707 193.4 708 193.4 708 191.7 709 191.7 709 192.1 710 192.1 710 191.7 711 191.7 711 192.9 712 192.9 712 193.3 713 193.3 713 192.9 714 192.9 714 192.9 715 192.9 715 193.1 716 193.1 716 194.1 717 194.1 717 191.5 718 191.5 718 193.0 719 193.0 719 194.1 720 194.1 720 191.8 721 191.8 721 192.0 722 192.0 722 191.6 723 191.6 723 193.5 724 193.5 724 194.0 725 194.0 725 192.4 726 192.4 726 193.8 727 193.8 727 193.9 728 193.9 728 192.1 729 192.1 729 194.3 730 194.3 730 194.1 731 194.1 731 193.9 732 193.9 732 192.5 733 192.5 733 192.2 734 192.2 734 192.9 735 192.9 735 194.2 736 194.2 736 193.9 737 193.9 737 194.6 738 194.6 738 192.4 739 192.4 739 191.6 740 191.6 740 192.7 741 192.7 741 194.2 742 194.2 742 194.3 743 194.3 743 191.9 744 191.9 744 192.0 745 192.0 745 191.6 746 191.6 746 193.8 747 193.8 747 194.1 748 194.1 748 193.1 749 193.1 749 192.6 750 192.6 750 192.1 751 192.1 751 192.9 752 192.9 752 194.0 753 194.0 753 193.6 754 193.6 754 192.0 755 192.0 755 192.5 756 192.5 756 192.6 757 192.6 757 193.7 758 193.7 758 191.1 759 191.1 759 193.1 760 193.1 760 192.1 761 192.1 761 193.7 762 193.7 762 191.6 763 191.6 763 192.5 764 192.5 764 194.3 765 194.3 765 193.0 766 193.0 766 193.3 767 193.3 767 191.9 768 191.9 768 191.4 769 191.4 769 193.4 770 193.4 770 192.5 771 192.5 771 193.4 772 193.4 772 193.1 773 193.1 773 193.8 774 193.8 774 194.5 775 194.5 775 192.8 776 192.8 776 194.3 777 194.3 777 194.3 778 194.3 778 191.3 779 191.3 779 194.0 780 194.0 780 191.7 781 191.7 781 192.0 782 192.0 782 193.1 783 193.1 783 192.3 784 192.3 784 192.3 785 192.3 785 194.6 786 194.6 786 193.5 787 193.5 787 192.4 788 192.4 788 193.6 789 193.6 789 191.3 790 191.3 790 193.3 791 193.3 791 193.1 792 193.1 792 194.0 793 194.0 793 192.5 794 192.5 794 191.9 795 191.9 795 193.6 796 193.6 796 192.2 797 192.2 797 193.5 798 193.5 798 193.3 799 193.3 799 194.2 800 194.2 800 192.4 801 192.4 801 192.9 802 192.9 802 192.2 803 192.2 803 192.6 804 192.6 804 191.4 805 191.4 805 193.3 806 193.3 806 192.6 807 192.6 807 193.9 808 193.9 808 193.1 809 193.1 809 193.3 810 193.3 810 191.4 811 191.4 811 192.5 812 192.5 812 192.7 813 192.7 813 192.9 814 192.9 814 193.2 815 193.2 815 193.3 816 193.3 816 193.0 817 193.0 817 192.8 818 192.8 818 192.3 819 192.3 819 193.1 820 193.1 820 191.7 821 191.7 821 192.6 822 192.6 822 193.6 823 193.6 823 192.1 824 192.1 824 192.8 825 192.8 825 194.3 826 194.3 826 193.6 827 193.6 827 193.0 828 193.0 828 193.6 829 193.6 829 192.7 830 192.7 830 192.4 831 192.4 831 192.4 832 192.4 832 191.7 833 191.7 833 192.8 834 192.8 834 192.0 835 192.0 835 192.8 836 192.8 836 191.9 837 191.9 837 193.8 838 193.8 838 193.8 839 193.8 839 194.4 840 194.4 840 192.7 841 192.7 841 192.7 842 192.7 842 193.1 843 193.1 843 193.5 844 193.5 844 194.2 845 194.2 845 192.1 846 192.1 846 194.4 847 194.4 847 193.5 848 193.5 848 194.1 849 194.1 849 192.7 850 192.7 850 193.5 851 193.5 851 193.5 852 193.5 852 193.4 853 193.4 853 193.1 854 193.1 854 193.8 855 193.8 855 193.5 856 193.5 856 194.1 857 194.1 857 192.9 858 192.9 858 192.0 859 192.0 859 194.3 860 194.3 860 192.6 861 192.6 861 193.5 862 193.5 862 193.6 863 193.6 863 192.5 864 192.5 864 192.2 865 192.2 865 192.5 866 192.5 866 192.8 867 192.8 867 194.7 868 194.7 868 192.3 869 192.3 869 193.6 870 193.6 870 193.9 871 193.9 871 194.8 872 194.8 872 194.2 873 194.2 873 193.1 874 193.1 874 193.7 875 193.7 875 193.0 876 193.0 876 194.9 877 194.9 877 193.1 878 193.1 878 194.4 879 194.4 879 192.9 880 192.9 880 192.4 881 192.4 881 191.6 882 191.6 882 193.9 883 193.9 883 193.1 884 193.1 884 192.4 885 192.4 885 193.2 886 193.2 886 192.3 887 192.3 887 192.8 888 192.8 888 194.9 889 194.9 889 192.6 890 192.6 890 192.7 891 192.7 891 191.8 892 191.8 892 193.4 893 193.4 893 192.1 894 192.1 894 192.7 895 192.7 895 192.4 896 192.4 896 192.3 897 192.3 897 192.1 898 192.1 898 191.9 899 191.9 899 193.1 900 193.1 900 191.4 901 191.4 901 190.7 902 190.7 902 191.4 903 191.4 903 192.6 904 192.6 904 190.0 905 190.0 905 190.3 906 190.3 906 191.3 907 191.3 907 190.7 908 190.7 908 191.5 909 191.5 909 192.5 910 192.5 910 189.5 911 189.5 911 190.5 912 190.5 912 192.2 913 192.2 913 190.8 914 190.8 914 191.6 915 191.6 915 191.2 916 191.2 916 192.8 917 192.8 917 191.2 918 191.2 918 191.3 919 191.3 919 192.9 920 192.9 920 192.2 921 192.2 921 193.2 922 193.2 922 190.4 923 190.4 923 192.1 924 192.1 924 191.9 925 191.9 925 189.3 926 189.3 926 190.3 927 190.3 927 190.2 928 190.2 928 191.2 929 191.2 929 192.6 930 192.6 930 191.3 931 191.3 931 191.9 932 191.9 932 193.2 933 193.2 933 192.1 934 192.1 934 191.2 935 191.2 935 191.6 936 191.6 936 191.5 937 191.5 937 192.7 938 192.7 938 190.5 939 190.5 939 190.7 940 190.7 940 192.2 941 192.2 941 193.1 942 193.1 942 191.1 943 191.1 943 193.4 944 193.4 944 192.1 945 192.1 945 191.1 946 191.1 946 190.8 947 190.8 947 190.8 948 190.8 948 190.2 949 190.2 949 192.1 950 192.1 950 193.1 951 193.1 951 191.5 952 191.5 952 191.8 953 191.8 953 191.5 954 191.5 954 191.2 955 191.2 955 192.6 956 192.6 956 190.7 957 190.7 957 191.5 958 191.5 958 192.1 959 192.1 959 192.6 960 192.6 960 192.4 961 192.4 961 191.1 962 191.1 962 192.3 963 192.3 963 190.8 964 190.8 964 191.3 965 191.3 965 192.2 966 192.2 966 190.7 967 190.7 967 192.1 968 192.1 968 192.5 969 192.5 969 192.7 970 192.7 970 193.4 971 193.4 971 193.4 972 193.4 972 193.5 973 193.5 973 194.4 974 194.4 974 194.6 975 194.6 975 193.8 976 193.8 976 195.0 977 195.0 977 193.7 978 193.7 978 193.7 979 193.7 979 194.6 980 194.6 980 194.9 981 194.9 981 194.1 982 194.1 982 195.1 983 195.1 983 195.2 984 195.2 984 194.1 985 194.1 985 193.8 986 193.8 986 194.8 987 194.8 987 194.3 988 194.3 988 193.4 989 193.4 989 193.2 990 193.2 990 192.9 991 192.9 991 193.3 992 193.3 992 192.7 993 192.7 993 191.9 994 191.9 994 194.0 995 194.0 995 194.5 996 194.5 996 192.5 997 192.5 997 193.2 998 193.2 998 193.6 999 193.6 999 192.5 1000 192.5 1000 194.9 1001 194.9 1001 194.7 1002 194.7 1002 195.0 1003 195.0 1003 193.5 1004 193.5 1004 194.2 1005 194.2 1005 191.3 1006 191.3 1006 193.1 1007 193.1 1007 189.7 1008 189.7 1008 189.6 1009 189.6 1009 190.3 1010 190.3 1010 189.0 1011 189.0 1011 188.6 1012 188.6 1012 189.9 1013 189.9 1013 187.3 1014 187.3 1014 190.6 1015 190.6 1015 186.4 1016 186.4 1016 190.3 1017 190.3 1017 189.4 1018 189.4 1018 187.8 1019 187.8 1019 189.3 1020 189.3 1020 190.7 1021 190.7 1021 188.0 1022 188.0 1022 188.8 1023 188.8 1023 187.6 1024 187.6 1024 189.4 1025 189.4 1025 189.4 1026 189.4 1026 188.6 1027 188.6 1027 188.0 1028 188.0 1028 187.6 1029 187.6 1029 188.0 1030 188.0 1030 187.9 1031 187.9 1031 190.2 1032 190.2 1032 189.4 1033 189.4 1033 189.3 1034 189.3 1034 187.8 1035 187.8 1035 186.4 1036 186.4 1036 190.0 1037 190.0 1037 188.5 1038 188.5 1038 187.5 1039 187.5 1039 188.4 1040 188.4 1040 187.1 1041 187.1 1041 189.7 1042 189.7 1042 189.3 1043 189.3 1043 187.4 1044 187.4 1044 190.5 1045 190.5 1045 188.6 1046 188.6 1046 189.5 1047 189.5 1047 187.4 1048 187.4 1048 188.6 1049 188.6 1049 188.6 1050 188.6 1050 186.2 1051 186.2 1051 188.2 1052 188.2 1052 189.1 1053 189.1 1053 189.4 1054 189.4 1054 188.5 1055 188.5 1055 187.9 1056 187.9 1056 188.2 1057 188.2 1057 188.1 1058 188.1 1058 186.4 1059 186.4 1059 186.8 1060 186.8 1060 187.9 1061 187.9 1061 187.1 1062 187.1 1062 190.2 1063 190.2 1063 189.2 1064 189.2 1064 188.1 1065 188.1 1065 187.7 1066 187.7 1066 188.0 1067 188.0 1067 187.8 1068 187.8 1068 190.2 1069 190.2 1069 188.5 1070 188.5 1070 187.9 1071 187.9 1071 187.3 1072 187.3 1072 186.9 1073 186.9 1073 187.0 1074 187.0 1074 188.8 1075 188.8 1075 187.3 1076 187.3 1076 187.8 1077 187.8 1077 189.0 1078 189.0 1078 189.4 1079 189.4 1079 187.0 1080 187.0 1080 188.7 1081 188.7 1081 188.3 1082 188.3 1082 187.9 1083 187.9 1083 186.9 1084 186.9 1084 189.9 1085 189.9 1085 188.5 1086 188.5 1086 186.9 1087 186.9 1087 187.4 1088 187.4 1088 188.2 1089 188.2 1089 188.2 1090 188.2 1090 188.7 1091 188.7 1091 186.7 1092 186.7 1092 189.5 1093 189.5 1093 187.4 1094 187.4 1094 190.2 1095 190.2 1095 187.9 1096 187.9 1096 187.8 1097 187.8 1097 188.2 1098 188.2 1098 187.6 1099 187.6 1099 188.5 1100 188.5 1100 189.9 1101 189.9 1101 188.3 1102 188.3 1102 190.5 1103 190.5 1103 188.7 1104 188.7 1104 190.5 1105 190.5 1105 189.1 1106 189.1 1106 189.4 1107 189.4 1107 186.2 1108 186.2 1108 188.8 1109 188.8 1109 189.5 1110 189.5 1110 188.6 1111 188.6 1111 190.6 1112 190.6 1112 189.8 1113 189.8 1113 189.1 1114 189.1 1114 189.7 1115 189.7 1115 186.9 1116 186.9 1116 190.4 1117 190.4 1117 191.0 1118 191.0 1118 195.0 1119 195.0 1119 196.1 1120 196.1 1120 198.1 1121 198.1 1121 200.6 1122 200.6 1122 201.8 1123 201.8 1123 201.9 1124 201.9 1124 202.5 1125 202.5 1125 199.1 1126 199.1 1126 197.4 1127 197.4 1127 193.8 1128 193.8 1128 187.8 1129 187.8 1129 188.5 1130 188.5 1130 189.6 1131 189.6 1131 189.0 1132 189.0 1132 191.8 1133 191.8 1133 191.2 1134 191.2 1134 190.4 1135 190.4 1135 189.1 1136 189.1 1136 189.9 1137 189.9 1137 191.0 1138 191.0 1138 189.3 1139 189.3 1139 190.6 1140 190.6 1140 190.0 1141 190.0 1141 189.4 1142 189.4 1142 190.6 1143 190.6 1143 190.2 1144 190.2 1144 188.7 1145 188.7 1145 190.2 1146 190.2 1146 188.6 1147 188.6 1147 190.3 1148 190.3 1148 189.7 1149 189.7 1149 187.9 1150 187.9 1150 190.0 1151 190.0 1151 188.3 1152 188.3 1152 190.7 1153 190.7 1153 191.3 1154 191.3 1154 189.6 1155 189.6 1155 189.2 1156 189.2 1156 189.0 1157 189.0 1157 189.8 1158 189.8 1158 188.8 1159 188.8 1159 190.0 1160 190.0 1160 191.0 1161 191.0 1161 190.6 1162 190.6 1162 189.3 1163 189.3 1163 188.5 1164 188.5 1164 188.9 1165 188.9 1165 191.2 1166 191.2 1166 190.3 1167 190.3 1167 190.4 1168 190.4 1168 190.7 1169 190.7 1169 189.4 1170 189.4 1170 188.8 1171 188.8 1171 188.7 1172 188.7 1172 190.9 1173 190.9 1173 189.5 1174 189.5 1174 189.2 1175 189.2 1175 189.1 1176 189.1 1176 190.4 1177 190.4 1177 189.0 1178 189.0 1178 191.2 1179 191.2 1179 190.0 1180 190.0 1180 189.6 1181 189.6 1181 191.9 1182 191.9 1182 189.2 1183 189.2 1183 189.9 1184 189.9 1184 190.2 1185 190.2 1185 191.3 1186 191.3 1186 190.0 1187 190.0 1187 188.3 1188 188.3 1188 190.3 1189 190.3 1189 189.9 1190 189.9 1190 188.5 1191 188.5 1191 191.1 1192 191.1 1192 189.8 1193 189.8 1193 191.9 1194 191.9 1194 189.6 1195 189.6 1195 190.3 1196 190.3 1196 189.7 1197 189.7 1197 190.6 1198 190.6 1198 190.6 1199 190.6 1199 189.1 1200 189.1 1200 190.0 1201 190.0 1201 189.9 1202 189.9 1202 189.3 1203 189.3 1203 189.3 1204 189.3 1204 189.3 1205 189.3 1205 190.5 1206 190.5 1206 191.4 1207 191.4 1207 190.0 1208 190.0 1208 190.7 1209 190.7 1209 189.2 1210 189.2 1210 190.0 1211 190.0 1211 191.1 1212 191.1 1212 190.3 1213 190.3 1213 192.1 1214 192.1 1214 190.3 1215 190.3 1215 190.0 1216 190.0 1216 189.1 1217 189.1 1217 188.3 1218 188.3 1218 188.9 1219 188.9 1219 188.7 1220 188.7 1220 188.4 1221 188.4 1221 189.5 1222 189.5 1222 190.1 1223 190.1 1223 189.5 1224 189.5 1224 188.5 1225 188.5 1225 191.9 1226 191.9 1226 189.7 1227 189.7 1227 189.2 1228 189.2 1228 189.2 1229 189.2 1229 189.7 1230 189.7 1230 191.3 1231 191.3 1231 190.4 1232 190.4 1232 190.9 1233 190.9 1233 190.9 1234 190.9 1234 188.9 1235 188.9 1235 191.5 1236 191.5 1236 191.9 1237 191.9 1237 191.2 1238 191.2 1238 190.6 1239 190.6 1239 188.9 1240 188.9 1240 190.3 1241 190.3 1241 189.6 1242 189.6 1242 188.8 1243 188.8 1243 191.4 1244 191.4 1244 191.7 1245 191.7 1245 188.9 1246 188.9 1246 191.0 1247 191.0 1247 189.8 1248 189.8 1248 190.4 1249 190.4 1249 190.2 1250 190.2 1250 190.3 1251 190.3 1251 191.4 1252 191.4 1252 189.8 1253 189.8 1253 189.2 1254 189.2 1254 191.1 1255 191.1 1255 189.6 1256 189.6 1256 191.2 1257 191.2 1257 189.3 1258 189.3 1258 191.7 1259 191.7 1259 192.0 1260 192.0 1260 189.3 1261 189.3 1261 191.1 1262 191.1 1262 191.5 1263 191.5 1263 188.6 1264 188.6 1264 189.3 1265 189.3 1265 189.9 1266 189.9 1266 190.0 1267 190.0 1267 190.7 1268 190.7 1268 189.6 1269 189.6 1269 191.1 1270 191.1 1270 190.4 1271 190.4 1271 188.8 1272 188.8 1272 190.7 1273 190.7 1273 189.9 1274 189.9 1274 188.7 1275 188.7 1275 189.1 1276 189.1 1276 189.8 1277 189.8 1277 190.0 1278 190.0 1278 189.9 1279 189.9 1279 190.9 1280 190.9 1280 190.7 1281 190.7 1281 190.6 1282 190.6 1282 191.9 1283 191.9 1283 191.9 1284 191.9 1284 190.7 1285 190.7 1285 190.2 1286 190.2 1286 190.3 1287 190.3 1287 189.4 1288 189.4 1288 188.3 1289 188.3 1289 191.3 1290 191.3 1290 190.1 1291 190.1 1291 189.8 1292 189.8 1292 190.0 1293 190.0 1293 189.0 1294 189.0 1294 191.8 1295 191.8 1295 190.7 1296 190.7 1296 188.7 1297 188.7 1297 191.1 1298 191.1 1298 190.3 1299 190.3 1299 192.1 1300 192.1 1300 189.0 1301 189.0 1301 191.0 1302 191.0 1302 191.7 1303 191.7 1303 189.1 1304 189.1 1304 190.6 1305 190.6 1305 192.3 1306 192.3 1306 191.4 1307 191.4 1307 190.3 1308 190.3 1308 191.6 1309 191.6 1309 188.8 1310 188.8 1310 190.6 1311 190.6 1311 190.0 1312 190.0 1312 189.5 1313 189.5 1313 192.1 1314 192.1 1314 190.9 1315 190.9 1315 191.8 1316 191.8 1316 190.6 1317 190.6 1317 191.7 1318 191.7 1318 192.6 1319 192.6 1319 192.6 1320 192.6 1320 190.5 1321 190.5 1321 189.9 1322 189.9 1322 191.3 1323 191.3 1323 192.7 1324 192.7 1324 191.5 1325 191.5 1325 191.1 1326 191.1 1326 191.8 1327 191.8 1327 189.5 1328 189.5 1328 189.5 1329 189.5 1329 191.2 1330 191.2 1330 189.9 1331 189.9 1331 189.6 1332 189.6 1332 190.6 1333 190.6 1333 189.7 1334 189.7 1334 189.2 1335 189.2 1335 190.1 1336 190.1 1336 190.1 1337 190.1 1337 189.4 1338 189.4 1338 190.4 1339 190.4 1339 189.4 1340 189.4 1340 191.2 1341 191.2 1341 189.1 1342 189.1 1342 190.2 1343 190.2 1343 190.8 1344 190.8 1344 192.0 1345 192.0 1345 191.8 1346 191.8 1346 189.3 1347 189.3 1347 189.7 1348 189.7 1348 191.6 1349 191.6 1349 191.6 1350 191.6 1350 191.1 1351 191.1 1351 191.3 1352 191.3 1352 190.9 1353 190.9 1353 191.4 1354 191.4 1354 191.0 1355 191.0 1355 189.6 1356 189.6 1356 189.9 1357 189.9 1357 190.7 1358 190.7 1358 191.0 1359 191.0 1359 190.8 1360 190.8 1360 190.9 1361 190.9 1361 189.6 1362 189.6 1362 191.0 1363 191.0 1363 192.1 1364 192.1 1364 189.9 1365 189.9 1365 189.6 1366 189.6 1366 191.9 1367 191.9 1367 191.4 1368 191.4 1368 190.8 1369 190.8 1369 191.3 1370 191.3 1370 191.4 1371 191.4 1371 189.4 1372 189.4 1372 191.4 1373 191.4 1373 190.0 1374 190.0 1374 191.9 1375 191.9 1375 191.0 1376 191.0 1376 190.5 1377 190.5 1377 190.1 1378 190.1 1378 191.1 1379 191.1 1379 191.2 1380 191.2 1380 189.9 1381 189.9 1381 190.6 1382 190.6 1382 189.8 1383 189.8 1383 189.8 1384 189.8 1384 189.7 1385 189.7 1385 191.7 1386 191.7 1386 190.8 1387 190.8 1387 191.1 1388 191.1 1388 190.2 1389 190.2 1389 190.5 1390 190.5 1390 190.9 1391 190.9 1391 191.0 1392 191.0 1392 191.6 1393 191.6 1393 189.9 1394 189.9 1394 190.3 1395 190.3 1395 189.2 1396 189.2 1396 190.6 1397 190.6 1397 191.3 1398 191.3 1398 189.5 1399 189.5 1399 192.2 1400 192.2 1400 190.2 1401 190.2 1401 191.7 1402 191.7 1402 191.0 1403 191.0 1403 191.4 1404 191.4 1404 190.0 1405 190.0 1405 191.3 1406 191.3 1406 190.4 1407 190.4 1407 191.3 1408 191.3 1408 189.6 1409 189.6 1409 189.1 1410 189.1 1410 191.3 1411 191.3 1411 189.2 1412 189.2 1412 191.3 1413 191.3 1413 189.9 1414 189.9 1414 191.7 1415 191.7 1415 191.2 1416 191.2 1416 190.5 1417 190.5 1417 191.3 1418 191.3 1418 192.0 1419 192.0 1419 189.7 1420 189.7 1420 191.0 1421 191.0 1421 191.9 1422 191.9 1422 190.8 1423 190.8 1423 191.1 1424 191.1 1424 188.7 1425 188.7 1425 191.9 1426 191.9 1426 191.2 1427 191.2 1427 192.1 1428 192.1 1428 192.6 1429 192.6 1429 191.6 1430 191.6 1430 192.1 1431 192.1 1431 192.5 1432 192.5 1432 189.7 1433 189.7 1433 192.1 1434 192.1 1434 189.5 1435 189.5 1435 189.9 1436 189.9 1436 191.9 1437 191.9 1437 190.0 1438 190.0 1438 190.4 1439 190.4 1439 190.1 1440 190.1 1440 192.0 1441 192.0 1441 191.0 1442 191.0 1442 192.3 1443 192.3 1443 190.9 1444 190.9 1444 191.5 1445 191.5 1445 189.2 1446 189.2 1446 190.3 1447 190.3 1447 191.0 1448 191.0 1448 191.5 1449 191.5 1449 192.5 1450 192.5 1450 191.7 1451 191.7 1451 192.7 1452 192.7 1452 188.9 1453 188.9 1453 192.1 1454 192.1 1454 190.1 1455 190.1 1455 192.4 1456 192.4 1456 191.7 1457 191.7 1457 192.2 1458 192.2 1458 190.9 1459 190.9 1459 192.4 1460 192.4 1460 192.4 1461 192.4 1461 190.2 1462 190.2 1462 190.3 1463 190.3 1463 189.5 1464 189.5 1464 189.9 1465 189.9 1465 190.3 1466 190.3 1466 192.0 1467 192.0 1467 191.8 1468 191.8 1468 190.6 1469 190.6 1469 189.3 1470 189.3 1470 188.7 1471 188.7 1471 190.5 1472 190.5 1472 190.5 1473 190.5 1473 191.3 1474 191.3 1474 190.9 1475 190.9 1475 190.7 1476 190.7 1476 190.4 1477 190.4 1477 189.3 1478 189.3 1478 190.9 1479 190.9 1479 190.5 1480 190.5 1480 189.7 1481 189.7 1481 191.4 1482 191.4 1482 188.9 1483 188.9 1483 189.0 1484 189.0 1484 188.6 1485 188.6 1485 191.1 1486 191.1 1486 188.9 1487 188.9 1487 191.6 1488 191.6 1488 190.3 1489 190.3 1489 191.7 1490 191.7 1490 187.7 1491 187.7 1491 189.8 1492 189.8 1492 190.3 1493 190.3 1493 191.4 1494 191.4 1494 188.7 1495 188.7 1495 189.3 1496 189.3 1496 188.1 1497 188.1 1497 189.7 1498 189.7 1498 188.6 1499 188.6 1499 191.0 1500 191.0 1500 191.7 1501 191.7 1501 191.5 1502 191.5 1502 190.7 1503 190.7 1503 190.8 1504 190.8 1504 189.6 1505 189.6 1505 189.8 1506 189.8 1506 189.4 1507 189.4 1507 190.4 1508 190.4 1508 188.9 1509 188.9 1509 189.6 1510 189.6 1510 191.5 1511 191.5 1511 187.7 1512 187.7 1512 190.3 1513 190.3 1513 188.7 1514 188.7 1514 190.5 1515 190.5 1515 190.2 1516 190.2 1516 189.1 1517 189.1 1517 190.4 1518 190.4 1518 190.4 1519 190.4 1519 191.2 1520 191.2 1520 189.3 1521 189.3 1521 189.1 1522 189.1 1522 190.0 1523 190.0 1523 189.7 1524 189.7 1524 189.6 1525 189.6 1525 190.3 1526 190.3 1526 189.7 1527 189.7 1527 189.6 1528 189.6 1528 189.7 1529 189.7 1529 190.5 1530 190.5 1530 191.4 1531 191.4 1531 191.9 1532 191.9 1532 191.5 1533 191.5 1533 190.2 1534 190.2 1534 189.7 1535 189.7 1535 190.7 1536 190.7 1536 190.2 1537 190.2 1537 189.9 1538 189.9 1538 190.4 1539 190.4 1539 189.4 1540 189.4 1540 191.1 1541 191.1 1541 190.3 1542 190.3 1542 190.5 1543 190.5 1543 188.7 1544 188.7 1544 190.4 1545 190.4 1545 191.3 1546 191.3 1546 191.2 1547 191.2 1547 192.0 1548 192.0 1548 189.2 1549 189.2 1549 191.8 1550 191.8 1550 190.0 1551 190.0 1551 192.1 1552 192.1 1552 190.9 1553 190.9 1553 191.9 1554 191.9 1554 191.4 1555 191.4 1555 191.0 1556 191.0 1556 191.0 1557 191.0 1557 189.6 1558 189.6 1558 190.0 1559 190.0 1559 190.2 1560 190.2 1560 189.0 1561 189.0 1561 190.1 1562 190.1 1562 189.8 1563 189.8 1563 190.1 1564 190.1 1564 189.6 1565 189.6 1565 189.1 1566 189.1 1566 189.9 1567 189.9 1567 190.0 1568 190.0 1568 190.1 1569 190.1 1569 188.9 1570 188.9 1570 189.2 1571 189.2 1571 188.0 1572 188.0 1572 188.6 1573 188.6 1573 190.6 1574 190.6 1574 188.7 1575 188.7 1575 186.7 1576 186.7 1576 189.6 1577 189.6 1577 188.2 1578 188.2 1578 188.9 1579 188.9 1579 189.3 1580 189.3 1580 189.6 1581 189.6 1581 186.2 1582 186.2 1582 188.6 1583 188.6 1583 188.0 1584 188.0 1584 188.5 1585 188.5 1585 187.1 1586 187.1 1586 189.2 1587 189.2 1587 189.6 1588 189.6 1588 189.7 1589 189.7 1589 188.6 1590 188.6 1590 187.7 1591 187.7 1591 188.2 1592 188.2 1592 188.9 1593 188.9 1593 189.2 1594 189.2 1594 187.4 1595 187.4 1595 187.5 1596 187.5 1596 188.3 1597 188.3 1597 188.9 1598 188.9 1598 186.5 1599 186.5 1599 186.5 1600 186.5 1600 187.2 1601 187.2 1601 187.4 1602 187.4 1602 189.0 1603 189.0 1603 189.6 1604 189.6 1604 187.7 1605 187.7 1605 189.5 1606 189.5 1606 189.8 1607 189.8 1607 188.6 1608 188.6 1608 188.8 1609 188.8 1609 187.2 1610 187.2 1610 188.0 1611 188.0 1611 188.4 1612 188.4 1612 188.5 1613 188.5 1613 189.5 1614 189.5 1614 186.9 1615 186.9 1615 189.6 1616 189.6 1616 189.1 1617 189.1 1617 188.5 1618 188.5 1618 188.3 1619 188.3 1619 187.5 1620 187.5 1620 190.4 1621 190.4 1621 190.8 1622 190.8 1622 186.4 1623 186.4 1623 188.4 1624 188.4 1624 187.5 1625 187.5 1625 190.1 1626 190.1 1626 188.1 1627 188.1 1627 186.5 1628 186.5 1628 187.9 1629 187.9 1629 187.8 1630 187.8 1630 190.1 1631 190.1 1631 188.4 1632 188.4 1632 189.6 1633 189.6 1633 188.5 1634 188.5 1634 190.6 1635 190.6 1635 189.3 1636 189.3 1636 190.8 1637 190.8 1637 189.3 1638 189.3 1638 190.0 1639 190.0 1639 186.7 1640 186.7 1640 188.0 1641 188.0 1641 187.9 1642 187.9 1642 189.6 1643 189.6 1643 187.3 1644 187.3 1644 189.8 1645 189.8 1645 188.3 1646 188.3 1646 190.1 1647 190.1 1647 189.1 1648 189.1 1648 188.4 1649 188.4 1649 189.5 1650 189.5 1650 190.1 1651 190.1 1651 189.7 1652 189.7 1652 187.3 1653 187.3 1653 187.6 1654 187.6 1654 190.6 1655 190.6 1655 190.3 1656 190.3 1656 189.5 1657 189.5 1657 189.2 1658 189.2 1658 190.0 1659 190.0 1659 189.6 1660 189.6 1660 188.3 1661 188.3 1661 190.7 1662 190.7 1662 186.7 1663 186.7 1663 188.0 1664 188.0 1664 188.1 1665 188.1 1665 189.7 1666 189.7 1666 187.8 1667 187.8 1667 187.9 1668 187.9 1668 188.9 1669 188.9 1669 189.1 1670 189.1 1670 190.1 1671 190.1 1671 187.7 1672 187.7 1672 187.7 1673 187.7 1673 189.5 1674 189.5 1674 190.8 1675 190.8 1675 190.8 1676 190.8 1676 193.2 1677 193.2 1677 194.3 1678 194.3 1678 194.7 1679 194.7 1679 194.2 1680 194.2 1680 194.0 1681 194.0 1681 194.9 1682 194.9 1682 194.3 1683 194.3 1683 194.6 1684 194.6 1684 194.9 1685 194.9 1685 194.7 1686 194.7 1686 193.5 1687 193.5 1687 193.1 1688 193.1 1688 193.8 1689 193.8 1689 193.9 1690 193.9 1690 194.5 1691 194.5 1691 193.8 1692 193.8 1692 192.8 1693 192.8 1693 194.3 1694 194.3 1694 192.5 1695 192.5 1695 194.5 1696 194.5 1696 192.7 1697 192.7 1697 195.0 1698 195.0 1698 195.2 1699 195.2 1699 194.9 1700 194.9 1700 194.5 1701 194.5 1701 195.0 1702 195.0 1702 194.7 1703 194.7 1703 194.2 1704 194.2 1704 193.3 1705 193.3 1705 195.1 1706 195.1 1706 193.1 1707 193.1 1707 193.5 1708 193.5 1708 193.7 1709 193.7 1709 193.3 1710 193.3 1710 194.4 1711 194.4 1711 194.5 1712 194.5 1712 194.0 1713 194.0 1713 195.5 1714 195.5 1714 194.9 1715 194.9 1715 193.6 1716 193.6 1716 194.7 1717 194.7 1717 193.6 1718 193.6 1718 194.0 1719 194.0 1719 193.5 1720 193.5 1720 192.9 1721 192.9 1721 195.2 1722 195.2 1722 193.1 1723 193.1 1723 195.0 1724 195.0 1724 194.4 1725 194.4 1725 194.7 1726 194.7 1726 194.4 1727 194.4 1727 193.7 1728 193.7 1728 195.5 1729 195.5 1729 194.8 1730 194.8 1730 194.9 1731 194.9 1731 193.7 1732 193.7 1732 193.6 1733 193.6 1733 195.1 1734 195.1 1734 193.9 1735 193.9 1735 194.3 1736 194.3 1736 193.8 1737 193.8 1737 193.5 1738 193.5 1738 195.0 1739 195.0 1739 192.7 1740 192.7 1740 193.7 1741 193.7 1741 193.1 1742 193.1 1742 193.2 1743 193.2 1743 195.0 1744 195.0 1744 194.8 1745 194.8 1745 193.5 1746 193.5 1746 193.7 1747 193.7 1747 195.2 1748 195.2 1748 195.4 1749 195.4 1749 194.6 1750 194.6 1750 193.9 1751 193.9 1751 193.1 1752 193.1 1752 193.1 1753 193.1 1753 193.3 1754 193.3 1754 194.7 1755 194.7 1755 194.9 1756 194.9 1756 194.0 1757 194.0 1757 195.4 1758 195.4 1758 194.3 1759 194.3 1759 194.3 1760 194.3 1760 195.5 1761 195.5 1761 193.0 1762 193.0 1762 192.6 1763 192.6 1763 192.7 1764 192.7 1764 195.1 1765 195.1 1765 192.9 1766 192.9 1766 194.6 1767 194.6 1767 193.0 1768 193.0 1768 193.6 1769 193.6 1769 194.9 1770 194.9 1770 194.6 1771 194.6 1771 194.5 1772 194.5 1772 194.3 1773 194.3 1773 193.3 1774 193.3 1774 192.9 1775 192.9 1775 193.6 1776 193.6 1776 194.6 1777 194.6 1777 194.5 1778 194.5 1778 194.7 1779 194.7 1779 194.8 1780 194.8 1780 194.5 1781 194.5 1781 194.4 1782 194.4 1782 195.5 1783 195.5 1783 194.6 1784 194.6 1784 193.8 1785 193.8 1785 193.4 1786 193.4 1786 194.4 1787 194.4 1787 194.6 1788 194.6 1788 193.8 1789 193.8 1789 194.4 1790 194.4 1790 192.8 1791 192.8 1791 193.3 1792 193.3 1792 193.7 1793 193.7 1793 193.3 1794 193.3 1794 193.6 1795 193.6 1795 193.7 1796 193.7 1796 193.5 1797 193.5 1797 195.4 1798 195.4 1798 195.6 1799 195.6 1799 193.6 1800 193.6 1800 194.5 1801 194.5 1801 193.8 1802 193.8 1802 193.2 1803 193.2 1803 193.6 1804 193.6 1804 193.4 1805 193.4 1805 194.4 1806 194.4 1806 195.6 1807 195.6 1807 192.9 1808 192.9 1808 194.7 1809 194.7 1809 196.2 1810 196.2 1810 197.0 1811 197.0 1811 197.9 1812 197.9 1812 197.4 1813 197.4 1813 198.3 1814 198.3 1814 198.6 1815 198.6 1815 197.9 1816 197.9 1816 197.2 1817 197.2 1817 198.8 1818 198.8 1818 197.6 1819 197.6 1819 198.6 1820 198.6 1820 198.9 1821 198.9 1821 199.7 1822 199.7 1822 200.0 1823 200.0 1823 199.8 1824 199.8 1824 199.4 1825 199.4 1825 200.2 1826 200.2 1826 200.3 1827 200.3 1827 200.4 1828 200.4 1828 201.1 1829 201.1 1829 201.1 1830 201.1 1830 200.6 1831 200.6 1831 201.6 1832 201.6 1832 201.5 1833 201.5 1833 201.6 1834 201.6 1834 202.3 1835 202.3 1835 202.4 1836 202.4 1836 202.4 1837 202.4 1837 202.4 1838 202.4 1838 202.9 1839 202.9 1839 203.1 1840 203.1 1840 202.9 1841 202.9 1841 203.2 1842 203.2 1842 203.2 1843 203.2 1843 203.5 1844 203.5 1844 203.6 1845 203.6 1845 203.7 1846 203.7 1846 203.8 1847 203.8 1847 203.9 1848 203.9 1848 204.1 1849 204.1 1849 204.2 1850 204.2 1850 204.2 1851 204.2 1851 204.2 1852 204.2 1852 204.2 1853 204.2 1853 204.2 1854 204.2 1854 204.3 1855 204.3 1855 204.3 1856 204.3 1856 204.3 1857 204.3 1857 204.3 1858 204.3 1858 204.3 1859 204.3 1859 204.3 1860 204.3 1860 204.3 1861 204.3 1861 204.3 1862 204.3 1862 204.3 1863 204.3 1863 204.3 1864 204.3 1864 204.3 1865 204.3 1865 204.3 1866 204.3 1866 204.3 1867 204.3 1867 204.3 1868 204.3 1868 204.4 1869 204.4 1869 204.4 1870 204.4 1870 204.4 1871 204.4 1871 204.4 1872 204.4 1872 204.4 1873 204.4 1873 204.4 1874 204.4 1874 204.4 1875 204.4 1875 204.4 1876 204.4 1876 204.4 1877 204.4 1877 204.4 1878 204.4 1878 204.4 1879 204.4 1879 204.4 1880 204.4 1880 204.4 1881 204.4 1881 204.4 1882 204.4 1882 204.5 1883 204.5 1883 204.5 1884 204.5 1884 204.5 1885 204.5 1885 204.5 1886 204.5 1886 204.5 1887 204.5 1887 204.5 1888 204.5 1888 204.5 1889 204.5 1889 204.5 1888 204.5 1888 204.5 1887 204.5 1887 204.5 1886 204.5 1886 204.5 1885 204.5 1885 204.5 1884 204.5 1884 204.5 1883 204.5 1883 204.5 1882 204.5 1882 204.6 1881 204.6 1881 204.6 1880 204.6 1880 204.6 1879 204.6 1879 204.6 1878 204.6 1878 204.6 1877 204.6 1877 204.6 1876 204.6 1876 204.6 1875 204.6 1875 204.6 1874 204.6 1874 204.6 1873 204.6 1873 204.6 1872 204.6 1872 204.6 1871 204.6 1871 204.6 1870 204.6 1870 204.6 1869 204.6 1869 204.6 1868 204.6 1868 204.7 1867 204.7 1867 204.7 1866 204.7 1866 204.7 1865 204.7 1865 204.7 1864 204.7 1864 204.7 1863 204.7 1863 204.7 1862 204.7 1862 204.7 1861 204.7 1861 204.7 1860 204.7 1860 204.7 1859 204.7 1859 204.7 1858 204.7 1858 204.7 1857 204.7 1857 204.7 1856 204.7 1856 204.7 1855 204.7 1855 204.7 1854 204.7 1854 204.8 1853 204.8 1853 204.8 1852 204.8 1852 204.8 1851 204.8 1851 204.8 1850 204.8 1850 204.8 1849 204.8 1849 204.9 1848 204.9 1848 205.1 1847 205.1 1847 205.2 1846 205.2 1846 205.3 1845 205.3 1845 205.4 1844 205.4 1844 205.5 1843 205.5 1843 205.8 1842 205.8 1842 205.8 1841 205.8 1841 206.1 1840 206.1 1840 205.9 1839 205.9 1839 206.1 1838 206.1 1838 206.6 1837 206.6 1837 206.6 1836 206.6 1836 206.6 1835 206.6 1835 206.7 1834 206.7 1834 207.4 1833 207.4 1833 207.5 1832 207.5 1832 207.4 1831 207.4 1831 208.4 1830 208.4 1830 207.9 1829 207.9 1829 207.9 1828 207.9 1828 208.6 1827 208.6 1827 208.7 1826 208.7 1826 208.8 1825 208.8 1825 209.6 1824 209.6 1824 209.2 1823 209.2 1823 209.0 1822 209.0 1822 209.3 1821 209.3 1821 210.1 1820 210.1 1820 210.4 1819 210.4 1819 211.4 1818 211.4 1818 210.2 1817 210.2 1817 211.8 1816 211.8 1816 211.1 1815 211.1 1815 210.4 1814 210.4 1814 210.7 1813 210.7 1813 211.6 1812 211.6 1812 211.1 1811 211.1 1811 212.0 1810 212.0 1810 212.8 1809 212.8 1809 214.3 1808 214.3 1808 216.1 1807 216.1 1807 213.4 1806 213.4 1806 214.6 1805 214.6 1805 215.6 1804 215.6 1804 215.4 1803 215.4 1803 215.8 1802 215.8 1802 215.2 1801 215.2 1801 214.5 1800 214.5 1800 215.4 1799 215.4 1799 213.4 1798 213.4 1798 213.6 1797 213.6 1797 215.5 1796 215.5 1796 215.3 1795 215.3 1795 215.4 1794 215.4 1794 215.7 1793 215.7 1793 215.3 1792 215.3 1792 215.7 1791 215.7 1791 216.2 1790 216.2 1790 214.6 1789 214.6 1789 215.2 1788 215.2 1788 214.4 1787 214.4 1787 214.6 1786 214.6 1786 215.6 1785 215.6 1785 215.2 1784 215.2 1784 214.4 1783 214.4 1783 213.5 1782 213.5 1782 214.6 1781 214.6 1781 214.5 1780 214.5 1780 214.2 1779 214.2 1779 214.3 1778 214.3 1778 214.5 1777 214.5 1777 214.4 1776 214.4 1776 215.4 1775 215.4 1775 216.1 1774 216.1 1774 215.7 1773 215.7 1773 214.7 1772 214.7 1772 214.5 1771 214.5 1771 214.4 1770 214.4 1770 214.1 1769 214.1 1769 215.4 1768 215.4 1768 216.0 1767 216.0 1767 214.4 1766 214.4 1766 216.1 1765 216.1 1765 213.9 1764 213.9 1764 216.3 1763 216.3 1763 216.4 1762 216.4 1762 216.0 1761 216.0 1761 213.5 1760 213.5 1760 214.7 1759 214.7 1759 214.7 1758 214.7 1758 213.6 1757 213.6 1757 215.0 1756 215.0 1756 214.1 1755 214.1 1755 214.3 1754 214.3 1754 215.7 1753 215.7 1753 215.9 1752 215.9 1752 215.9 1751 215.9 1751 215.1 1750 215.1 1750 214.4 1749 214.4 1749 213.6 1748 213.6 1748 213.8 1747 213.8 1747 215.3 1746 215.3 1746 215.5 1745 215.5 1745 214.2 1744 214.2 1744 214.0 1743 214.0 1743 215.8 1742 215.8 1742 215.9 1741 215.9 1741 215.3 1740 215.3 1740 216.3 1739 216.3 1739 214.0 1738 214.0 1738 215.5 1737 215.5 1737 215.2 1736 215.2 1736 214.7 1735 214.7 1735 215.1 1734 215.1 1734 213.9 1733 213.9 1733 215.4 1732 215.4 1732 215.3 1731 215.3 1731 214.1 1730 214.1 1730 214.2 1729 214.2 1729 213.5 1728 213.5 1728 215.3 1727 215.3 1727 214.6 1726 214.6 1726 214.3 1725 214.3 1725 214.6 1724 214.6 1724 214.0 1723 214.0 1723 215.9 1722 215.9 1722 213.8 1721 213.8 1721 216.1 1720 216.1 1720 215.5 1719 215.5 1719 215.0 1718 215.0 1718 215.4 1717 215.4 1717 214.3 1716 214.3 1716 215.4 1715 215.4 1715 214.1 1714 214.1 1714 213.5 1713 213.5 1713 215.0 1712 215.0 1712 214.5 1711 214.5 1711 214.6 1710 214.6 1710 215.7 1709 215.7 1709 215.3 1708 215.3 1708 215.5 1707 215.5 1707 215.9 1706 215.9 1706 213.9 1705 213.9 1705 215.7 1704 215.7 1704 214.8 1703 214.8 1703 214.3 1702 214.3 1702 214.0 1701 214.0 1701 214.5 1700 214.5 1700 214.1 1699 214.1 1699 213.8 1698 213.8 1698 214.0 1697 214.0 1697 216.3 1696 216.3 1696 214.5 1695 214.5 1695 216.5 1694 216.5 1694 214.7 1693 214.7 1693 216.2 1692 216.2 1692 215.2 1691 215.2 1691 214.5 1690 214.5 1690 215.1 1689 215.1 1689 215.2 1688 215.2 1688 215.9 1687 215.9 1687 215.5 1686 215.5 1686 214.3 1685 214.3 1685 214.1 1684 214.1 1684 214.4 1683 214.4 1683 214.7 1682 214.7 1682 214.1 1681 214.1 1681 215.0 1680 215.0 1680 214.8 1679 214.8 1679 214.3 1678 214.3 1678 214.7 1677 214.7 1677 215.8 1676 215.8 1676 218.2 1675 218.2 1675 218.2 1674 218.2 1674 219.5 1673 219.5 1673 221.3 1672 221.3 1672 221.3 1671 221.3 1671 218.9 1670 218.9 1670 219.9 1669 219.9 1669 220.1 1668 220.1 1668 221.1 1667 221.1 1667 221.2 1666 221.2 1666 219.3 1665 219.3 1665 220.9 1664 220.9 1664 221.0 1663 221.0 1663 222.3 1662 222.3 1662 218.3 1661 218.3 1661 220.7 1660 220.7 1660 219.4 1659 219.4 1659 219.0 1658 219.0 1658 219.8 1657 219.8 1657 219.5 1656 219.5 1656 218.7 1655 218.7 1655 218.4 1654 218.4 1654 221.4 1653 221.4 1653 221.7 1652 221.7 1652 219.3 1651 219.3 1651 218.9 1650 218.9 1650 219.5 1649 219.5 1649 220.6 1648 220.6 1648 219.9 1647 219.9 1647 218.9 1646 218.9 1646 220.7 1645 220.7 1645 219.2 1644 219.2 1644 221.7 1643 221.7 1643 219.4 1642 219.4 1642 221.1 1641 221.1 1641 221.0 1640 221.0 1640 222.3 1639 222.3 1639 219.0 1638 219.0 1638 219.7 1637 219.7 1637 218.2 1636 218.2 1636 219.7 1635 219.7 1635 218.4 1634 218.4 1634 220.5 1633 220.5 1633 219.4 1632 219.4 1632 220.6 1631 220.6 1631 218.9 1630 218.9 1630 221.2 1629 221.2 1629 221.1 1628 221.1 1628 222.5 1627 222.5 1627 220.9 1626 220.9 1626 218.9 1625 218.9 1625 221.5 1624 221.5 1624 220.6 1623 220.6 1623 222.6 1622 222.6 1622 218.2 1621 218.2 1621 218.6 1620 218.6 1620 221.5 1619 221.5 1619 220.7 1618 220.7 1618 220.5 1617 220.5 1617 219.9 1616 219.9 1616 219.4 1615 219.4 1615 222.1 1614 222.1 1614 219.5 1613 219.5 1613 220.5 1612 220.5 1612 220.6 1611 220.6 1611 221.0 1610 221.0 1610 221.8 1609 221.8 1609 220.2 1608 220.2 1608 220.4 1607 220.4 1607 219.2 1606 219.2 1606 219.5 1605 219.5 1605 221.3 1604 221.3 1604 219.4 1603 219.4 1603 220.0 1602 220.0 1602 221.6 1601 221.6 1601 221.8 1600 221.8 1600 222.5 1599 222.5 1599 222.5 1598 222.5 1598 220.1 1597 220.1 1597 220.7 1596 220.7 1596 221.5 1595 221.5 1595 221.6 1594 221.6 1594 219.8 1593 219.8 1593 220.1 1592 220.1 1592 220.8 1591 220.8 1591 221.3 1590 221.3 1590 220.4 1589 220.4 1589 219.3 1588 219.3 1588 219.4 1587 219.4 1587 219.8 1586 219.8 1586 221.9 1585 221.9 1585 220.5 1584 220.5 1584 221.0 1583 221.0 1583 220.4 1582 220.4 1582 222.8 1581 222.8 1581 219.4 1580 219.4 1580 219.7 1579 219.7 1579 220.1 1578 220.1 1578 220.8 1577 220.8 1577 219.4 1576 219.4 1576 222.3 1575 222.3 1575 220.3 1574 220.3 1574 218.4 1573 218.4 1573 220.4 1572 220.4 1572 221.0 1571 221.0 1571 219.8 1570 219.8 1570 220.1 1569 220.1 1569 218.9 1568 218.9 1568 219.0 1567 219.0 1567 219.1 1566 219.1 1566 219.9 1565 219.9 1565 219.4 1564 219.4 1564 218.9 1563 218.9 1563 219.2 1562 219.2 1562 218.9 1561 218.9 1561 220.0 1560 220.0 1560 218.8 1559 218.8 1559 219.0 1558 219.0 1558 219.4 1557 219.4 1557 218.0 1556 218.0 1556 218.0 1555 218.0 1555 217.6 1554 217.6 1554 217.1 1553 217.1 1553 218.1 1552 218.1 1552 216.9 1551 216.9 1551 219.0 1550 219.0 1550 217.2 1549 217.2 1549 219.8 1548 219.8 1548 217.0 1547 217.0 1547 217.8 1546 217.8 1546 217.7 1545 217.7 1545 218.6 1544 218.6 1544 220.3 1543 220.3 1543 218.5 1542 218.5 1542 218.7 1541 218.7 1541 217.9 1540 217.9 1540 219.6 1539 219.6 1539 218.6 1538 218.6 1538 219.1 1537 219.1 1537 218.8 1536 218.8 1536 218.3 1535 218.3 1535 219.3 1534 219.3 1534 218.8 1533 218.8 1533 217.5 1532 217.5 1532 217.1 1531 217.1 1531 217.6 1530 217.6 1530 218.5 1529 218.5 1529 219.3 1528 219.3 1528 219.4 1527 219.4 1527 219.3 1526 219.3 1526 218.7 1525 218.7 1525 219.4 1524 219.4 1524 219.3 1523 219.3 1523 219.0 1522 219.0 1522 219.9 1521 219.9 1521 219.7 1520 219.7 1520 217.8 1519 217.8 1519 218.6 1518 218.6 1518 218.6 1517 218.6 1517 219.9 1516 219.9 1516 218.8 1515 218.8 1515 218.5 1514 218.5 1514 220.3 1513 220.3 1513 218.7 1512 218.7 1512 221.3 1511 221.3 1511 217.5 1510 217.5 1510 219.4 1509 219.4 1509 220.1 1508 220.1 1508 218.6 1507 218.6 1507 219.6 1506 219.6 1506 219.2 1505 219.2 1505 219.4 1504 219.4 1504 218.2 1503 218.2 1503 218.3 1502 218.3 1502 217.5 1501 217.5 1501 217.3 1500 217.3 1500 218.0 1499 218.0 1499 220.4 1498 220.4 1498 219.3 1497 219.3 1497 220.9 1496 220.9 1496 219.7 1495 219.7 1495 220.3 1494 220.3 1494 217.6 1493 217.6 1493 218.7 1492 218.7 1492 219.2 1491 219.2 1491 221.3 1490 221.3 1490 217.3 1489 217.3 1489 218.7 1488 218.7 1488 217.4 1487 217.4 1487 220.1 1486 220.1 1486 217.9 1485 217.9 1485 220.4 1484 220.4 1484 220.0 1483 220.0 1483 220.1 1482 220.1 1482 217.6 1481 217.6 1481 219.3 1480 219.3 1480 218.5 1479 218.5 1479 218.1 1478 218.1 1478 219.7 1477 219.7 1477 218.6 1476 218.6 1476 218.3 1475 218.3 1475 218.1 1474 218.1 1474 217.7 1473 217.7 1473 218.5 1472 218.5 1472 218.5 1471 218.5 1471 220.3 1470 220.3 1470 219.7 1469 219.7 1469 218.4 1468 218.4 1468 217.2 1467 217.2 1467 217.0 1466 217.0 1466 218.7 1465 218.7 1465 219.1 1464 219.1 1464 219.5 1463 219.5 1463 218.7 1462 218.7 1462 218.8 1461 218.8 1461 216.6 1460 216.6 1460 216.6 1459 216.6 1459 218.1 1458 218.1 1458 216.8 1457 216.8 1457 217.3 1456 217.3 1456 216.6 1455 216.6 1455 218.9 1454 218.9 1454 216.9 1453 216.9 1453 220.1 1452 220.1 1452 216.3 1451 216.3 1451 217.3 1450 217.3 1450 216.5 1449 216.5 1449 217.5 1448 217.5 1448 218.0 1447 218.0 1447 218.7 1446 218.7 1446 219.8 1445 219.8 1445 217.5 1444 217.5 1444 218.1 1443 218.1 1443 216.7 1442 216.7 1442 218.0 1441 218.0 1441 217.0 1440 217.0 1440 218.9 1439 218.9 1439 218.6 1438 218.6 1438 219.0 1437 219.0 1437 217.1 1436 217.1 1436 219.1 1435 219.1 1435 219.5 1434 219.5 1434 216.9 1433 216.9 1433 219.3 1432 219.3 1432 216.5 1431 216.5 1431 216.9 1430 216.9 1430 217.4 1429 217.4 1429 216.4 1428 216.4 1428 216.9 1427 216.9 1427 217.8 1426 217.8 1426 217.1 1425 217.1 1425 220.3 1424 220.3 1424 217.9 1423 217.9 1423 218.2 1422 218.2 1422 217.1 1421 217.1 1421 218.0 1420 218.0 1420 219.3 1419 219.3 1419 217.0 1418 217.0 1418 217.7 1417 217.7 1417 218.5 1416 218.5 1416 217.8 1415 217.8 1415 217.3 1414 217.3 1414 219.1 1413 219.1 1413 217.7 1412 217.7 1412 219.8 1411 219.8 1411 217.7 1410 217.7 1410 219.9 1409 219.9 1409 219.4 1408 219.4 1408 217.7 1407 217.7 1407 218.6 1406 218.6 1406 217.7 1405 217.7 1405 219.0 1404 219.0 1404 217.6 1403 217.6 1403 218.0 1402 218.0 1402 217.3 1401 217.3 1401 218.8 1400 218.8 1400 216.8 1399 216.8 1399 219.5 1398 219.5 1398 217.7 1397 217.7 1397 218.4 1396 218.4 1396 219.8 1395 219.8 1395 218.7 1394 218.7 1394 219.1 1393 219.1 1393 217.4 1392 217.4 1392 218.0 1391 218.0 1391 218.1 1390 218.1 1390 218.5 1389 218.5 1389 218.8 1388 218.8 1388 217.9 1387 217.9 1387 218.2 1386 218.2 1386 217.3 1385 217.3 1385 219.3 1384 219.3 1384 219.2 1383 219.2 1383 219.2 1382 219.2 1382 218.4 1381 218.4 1381 219.1 1380 219.1 1380 217.8 1379 217.8 1379 217.9 1378 217.9 1378 218.9 1377 218.9 1377 218.5 1376 218.5 1376 218.0 1375 218.0 1375 217.1 1374 217.1 1374 219.0 1373 219.0 1373 217.6 1372 217.6 1372 219.6 1371 219.6 1371 217.6 1370 217.6 1370 217.7 1369 217.7 1369 218.2 1368 218.2 1368 217.6 1367 217.6 1367 217.1 1366 217.1 1366 219.4 1365 219.4 1365 219.1 1364 219.1 1364 216.9 1363 216.9 1363 218.0 1362 218.0 1362 219.4 1361 219.4 1361 218.1 1360 218.1 1360 218.2 1359 218.2 1359 218.0 1358 218.0 1358 218.3 1357 218.3 1357 219.1 1356 219.1 1356 219.4 1355 219.4 1355 218.0 1354 218.0 1354 217.6 1353 217.6 1353 218.1 1352 218.1 1352 217.7 1351 217.7 1351 217.9 1350 217.9 1350 217.4 1349 217.4 1349 217.4 1348 217.4 1348 219.3 1347 219.3 1347 219.7 1346 219.7 1346 217.2 1345 217.2 1345 217.0 1344 217.0 1344 218.2 1343 218.2 1343 218.8 1342 218.8 1342 219.9 1341 219.9 1341 217.8 1340 217.8 1340 219.6 1339 219.6 1339 218.6 1338 218.6 1338 219.6 1337 219.6 1337 218.9 1336 218.9 1336 218.9 1335 218.9 1335 219.8 1334 219.8 1334 219.3 1333 219.3 1333 218.4 1332 218.4 1332 219.4 1331 219.4 1331 219.1 1330 219.1 1330 217.8 1329 217.8 1329 219.5 1328 219.5 1328 219.5 1327 219.5 1327 217.2 1326 217.2 1326 217.9 1325 217.9 1325 217.5 1324 217.5 1324 216.3 1323 216.3 1323 217.7 1322 217.7 1322 219.1 1321 219.1 1321 218.5 1320 218.5 1320 216.4 1319 216.4 1319 216.4 1318 216.4 1318 217.3 1317 217.3 1317 218.4 1316 218.4 1316 217.2 1315 217.2 1315 218.1 1314 218.1 1314 216.9 1313 216.9 1313 219.5 1312 219.5 1312 219.0 1311 219.0 1311 218.4 1310 218.4 1310 220.2 1309 220.2 1309 217.4 1308 217.4 1308 218.7 1307 218.7 1307 217.6 1306 217.6 1306 216.7 1305 216.7 1305 218.4 1304 218.4 1304 219.9 1303 219.9 1303 217.3 1302 217.3 1302 218.0 1301 218.0 1301 220.0 1300 220.0 1300 216.9 1299 216.9 1299 218.7 1298 218.7 1298 217.9 1297 217.9 1297 220.3 1296 220.3 1296 218.3 1295 218.3 1295 217.2 1294 217.2 1294 220.0 1293 220.0 1293 219.0 1292 219.0 1292 219.2 1291 219.2 1291 218.9 1290 218.9 1290 217.7 1289 217.7 1289 220.7 1288 220.7 1288 219.6 1287 219.6 1287 218.7 1286 218.7 1286 218.8 1285 218.8 1285 218.3 1284 218.3 1284 217.1 1283 217.1 1283 217.1 1282 217.1 1282 218.4 1281 218.4 1281 218.3 1280 218.3 1280 218.1 1279 218.1 1279 219.1 1278 219.1 1278 219.0 1277 219.0 1277 219.2 1276 219.2 1276 219.9 1275 219.9 1275 220.3 1274 220.3 1274 219.1 1273 219.1 1273 218.3 1272 218.3 1272 220.2 1271 220.2 1271 218.6 1270 218.6 1270 217.9 1269 217.9 1269 219.4 1268 219.4 1268 218.3 1267 218.3 1267 219.0 1266 219.0 1266 219.1 1265 219.1 1265 219.7 1264 219.7 1264 220.4 1263 220.4 1263 217.5 1262 217.5 1262 217.9 1261 217.9 1261 219.7 1260 219.7 1260 217.0 1259 217.0 1259 217.3 1258 217.3 1258 219.7 1257 219.7 1257 217.8 1256 217.8 1256 219.4 1255 219.4 1255 217.9 1254 217.9 1254 219.8 1253 219.8 1253 219.2 1252 219.2 1252 217.6 1251 217.6 1251 218.7 1250 218.7 1250 218.8 1249 218.8 1249 218.6 1248 218.6 1248 219.2 1247 219.2 1247 218.0 1246 218.0 1246 220.1 1245 220.1 1245 217.3 1244 217.3 1244 217.6 1243 217.6 1243 220.2 1242 220.2 1242 219.4 1241 219.4 1241 218.7 1240 218.7 1240 220.1 1239 220.1 1239 218.4 1238 218.4 1238 217.8 1237 217.8 1237 217.1 1236 217.1 1236 217.5 1235 217.5 1235 220.1 1234 220.1 1234 218.1 1233 218.1 1233 218.1 1232 218.1 1232 218.6 1231 218.6 1231 217.7 1230 217.7 1230 219.3 1229 219.3 1229 219.8 1228 219.8 1228 219.8 1227 219.8 1227 219.3 1226 219.3 1226 217.1 1225 217.1 1225 220.5 1224 220.5 1224 219.5 1223 219.5 1223 218.9 1222 218.9 1222 219.5 1221 219.5 1221 220.6 1220 220.6 1220 220.3 1219 220.3 1219 220.1 1218 220.1 1218 220.7 1217 220.7 1217 219.9 1216 219.9 1216 219.0 1215 219.0 1215 218.7 1214 218.7 1214 216.9 1213 216.9 1213 218.7 1212 218.7 1212 217.9 1211 217.9 1211 219.0 1210 219.0 1210 219.8 1209 219.8 1209 218.3 1208 218.3 1208 219.0 1207 219.0 1207 217.6 1206 217.6 1206 218.5 1205 218.5 1205 219.7 1204 219.7 1204 219.7 1203 219.7 1203 219.7 1202 219.7 1202 219.1 1201 219.1 1201 219.0 1200 219.0 1200 219.9 1199 219.9 1199 218.4 1198 218.4 1198 218.4 1197 218.4 1197 219.3 1196 219.3 1196 218.7 1195 218.7 1195 219.4 1194 219.4 1194 217.1 1193 217.1 1193 219.2 1192 219.2 1192 217.9 1191 217.9 1191 220.5 1190 220.5 1190 219.1 1189 219.1 1189 218.7 1188 218.7 1188 220.7 1187 220.7 1187 219.0 1186 219.0 1186 217.7 1185 217.7 1185 218.8 1184 218.8 1184 219.1 1183 219.1 1183 219.8 1182 219.8 1182 217.1 1181 217.1 1181 219.4 1180 219.4 1180 219.0 1179 219.0 1179 217.8 1178 217.8 1178 220.0 1177 220.0 1177 218.6 1176 218.6 1176 219.9 1175 219.9 1175 219.8 1174 219.8 1174 219.5 1173 219.5 1173 218.1 1172 218.1 1172 220.3 1171 220.3 1171 220.2 1170 220.2 1170 219.6 1169 219.6 1169 218.3 1168 218.3 1168 218.6 1167 218.6 1167 218.7 1166 218.7 1166 217.8 1165 217.8 1165 220.1 1164 220.1 1164 220.5 1163 220.5 1163 219.7 1162 219.7 1162 218.4 1161 218.4 1161 218.0 1160 218.0 1160 219.0 1159 219.0 1159 220.2 1158 220.2 1158 219.2 1157 219.2 1157 220.0 1156 220.0 1156 219.8 1155 219.8 1155 219.4 1154 219.4 1154 217.7 1153 217.7 1153 218.3 1152 218.3 1152 220.7 1151 220.7 1151 219.0 1150 219.0 1150 221.1 1149 221.1 1149 219.3 1148 219.3 1148 218.7 1147 218.7 1147 220.4 1146 220.4 1146 218.8 1145 218.8 1145 220.3 1144 220.3 1144 218.8 1143 218.8 1143 218.4 1142 218.4 1142 219.6 1141 219.6 1141 219.0 1140 219.0 1140 218.4 1139 218.4 1139 219.7 1138 219.7 1138 218.0 1137 218.0 1137 219.1 1136 219.1 1136 219.9 1135 219.9 1135 218.6 1134 218.6 1134 217.8 1133 217.8 1133 217.2 1132 217.2 1132 220.0 1131 220.0 1131 219.4 1130 219.4 1130 220.5 1129 220.5 1129 221.2 1128 221.2 1128 215.2 1127 215.2 1127 211.6 1126 211.6 1126 209.9 1125 209.9 1125 206.5 1124 206.5 1124 207.1 1123 207.1 1123 207.2 1122 207.2 1122 208.4 1121 208.4 1121 210.9 1120 210.9 1120 212.9 1119 212.9 1119 214.0 1118 214.0 1118 218.0 1117 218.0 1117 218.6 1116 218.6 1116 222.1 1115 222.1 1115 219.3 1114 219.3 1114 219.9 1113 219.9 1113 219.2 1112 219.2 1112 218.4 1111 218.4 1111 220.4 1110 220.4 1110 219.5 1109 219.5 1109 220.2 1108 220.2 1108 222.8 1107 222.8 1107 219.6 1106 219.6 1106 219.9 1105 219.9 1105 218.5 1104 218.5 1104 220.3 1103 220.3 1103 218.5 1102 218.5 1102 220.7 1101 220.7 1101 219.1 1100 219.1 1100 220.5 1099 220.5 1099 221.4 1098 221.4 1098 220.8 1097 220.8 1097 221.2 1096 221.2 1096 221.1 1095 221.1 1095 218.8 1094 218.8 1094 221.6 1093 221.6 1093 219.5 1092 219.5 1092 222.3 1091 222.3 1091 220.3 1090 220.3 1090 220.8 1089 220.8 1089 220.8 1088 220.8 1088 221.6 1087 221.6 1087 222.1 1086 222.1 1086 220.5 1085 220.5 1085 219.1 1084 219.1 1084 222.1 1083 222.1 1083 221.1 1082 221.1 1082 220.7 1081 220.7 1081 220.3 1080 220.3 1080 222.0 1079 222.0 1079 219.6 1078 219.6 1078 220.0 1077 220.0 1077 221.2 1076 221.2 1076 221.7 1075 221.7 1075 220.2 1074 220.2 1074 222.0 1073 222.0 1073 222.1 1072 222.1 1072 221.7 1071 221.7 1071 221.1 1070 221.1 1070 220.5 1069 220.5 1069 218.8 1068 218.8 1068 221.2 1067 221.2 1067 221.0 1066 221.0 1066 221.3 1065 221.3 1065 220.9 1064 220.9 1064 219.8 1063 219.8 1063 218.8 1062 218.8 1062 221.9 1061 221.9 1061 221.1 1060 221.1 1060 222.2 1059 222.2 1059 222.6 1058 222.6 1058 220.9 1057 220.9 1057 220.8 1056 220.8 1056 221.1 1055 221.1 1055 220.5 1054 220.5 1054 219.6 1053 219.6 1053 219.9 1052 219.9 1052 220.8 1051 220.8 1051 222.8 1050 222.8 1050 220.4 1049 220.4 1049 220.4 1048 220.4 1048 221.6 1047 221.6 1047 219.5 1046 219.5 1046 220.4 1045 220.4 1045 218.5 1044 218.5 1044 221.6 1043 221.6 1043 219.7 1042 219.7 1042 219.3 1041 219.3 1041 221.9 1040 221.9 1040 220.6 1039 220.6 1039 221.5 1038 221.5 1038 220.5 1037 220.5 1037 219.0 1036 219.0 1036 222.6 1035 222.6 1035 221.2 1034 221.2 1034 219.7 1033 219.7 1033 219.6 1032 219.6 1032 218.8 1031 218.8 1031 221.1 1030 221.1 1030 221.0 1029 221.0 1029 221.4 1028 221.4 1028 221.0 1027 221.0 1027 220.4 1026 220.4 1026 219.6 1025 219.6 1025 219.6 1024 219.6 1024 221.4 1023 221.4 1023 220.2 1022 220.2 1022 221.0 1021 221.0 1021 218.3 1020 218.3 1020 219.7 1019 219.7 1019 221.2 1018 221.2 1018 219.6 1017 219.6 1017 218.7 1016 218.7 1016 222.6 1015 222.6 1015 218.4 1014 218.4 1014 221.7 1013 221.7 1013 219.1 1012 219.1 1012 220.4 1011 220.4 1011 220.0 1010 220.0 1010 218.7 1009 218.7 1009 219.4 1008 219.4 1008 219.3 1007 219.3 1007 215.9 1006 215.9 1006 217.7 1005 217.7 1005 214.8 1004 214.8 1004 215.5 1003 215.5 1003 214.0 1002 214.0 1002 214.3 1001 214.3 1001 214.1 1000 214.1 1000 216.5 999 216.5 999 215.4 998 215.4 998 215.8 997 215.8 997 216.5 996 216.5 996 214.5 995 214.5 995 215.0 994 215.0 994 217.1 993 217.1 993 216.3 992 216.3 992 215.7 991 215.7 991 216.1 990 216.1 990 215.8 989 215.8 989 215.6 988 215.6 988 214.7 987 214.7 987 214.2 986 214.2 986 215.2 985 215.2 985 214.9 984 214.9 984 213.8 983 213.8 983 213.9 982 213.9 982 214.9 981 214.9 981 214.1 980 214.1 980 214.4 979 214.4 979 215.3 978 215.3 978 215.3 977 215.3 977 214.0 976 214.0 976 215.2 975 215.2 975 214.4 974 214.4 974 214.6 973 214.6 973 215.5 972 215.5 972 215.6 971 215.6 971 215.6 970 215.6 970 216.3 969 216.3 969 216.5 968 216.5 968 216.9 967 216.9 967 218.3 966 218.3 966 216.8 965 216.8 965 217.7 964 217.7 964 218.2 963 218.2 963 216.7 962 216.7 962 217.9 961 217.9 961 216.6 960 216.6 960 216.4 959 216.4 959 216.9 958 216.9 958 217.5 957 217.5 957 218.3 956 218.3 956 216.4 955 216.4 955 217.8 954 217.8 954 217.5 953 217.5 953 217.2 952 217.2 952 217.5 951 217.5 951 215.9 950 215.9 950 216.9 949 216.9 949 218.8 948 218.8 948 218.2 947 218.2 947 218.2 946 218.2 946 217.9 945 217.9 945 216.9 944 216.9 944 215.6 943 215.6 943 217.9 942 217.9 942 215.9 941 215.9 941 216.8 940 216.8 940 218.3 939 218.3 939 218.5 938 218.5 938 216.3 937 216.3 937 217.5 936 217.5 936 217.4 935 217.4 935 217.8 934 217.8 934 216.9 933 216.9 933 215.8 932 215.8 932 217.1 931 217.1 931 217.7 930 217.7 930 216.4 929 216.4 929 217.8 928 217.8 928 218.8 927 218.8 927 218.7 926 218.7 926 219.7 925 219.7 925 217.1 924 217.1 924 216.9 923 216.9 923 218.6 922 218.6 922 215.8 921 215.8 921 216.8 920 216.8 920 216.1 919 216.1 919 217.7 918 217.7 918 217.8 917 217.8 917 216.2 916 216.2 916 217.8 915 217.8 915 217.4 914 217.4 914 218.2 913 218.2 913 216.8 912 216.8 912 218.5 911 218.5 911 219.5 910 219.5 910 216.5 909 216.5 909 217.5 908 217.5 908 218.3 907 218.3 907 217.7 906 217.7 906 218.7 905 218.7 905 219.0 904 219.0 904 216.4 903 216.4 903 217.6 902 217.6 902 218.3 901 218.3 901 217.6 900 217.6 900 215.9 899 215.9 899 217.1 898 217.1 898 216.9 897 216.9 897 216.7 896 216.7 896 216.6 895 216.6 895 216.3 894 216.3 894 216.9 893 216.9 893 215.6 892 215.6 892 217.2 891 217.2 891 216.3 890 216.3 890 216.4 889 216.4 889 214.1 888 214.1 888 216.2 887 216.2 887 216.7 886 216.7 886 215.8 885 215.8 885 216.6 884 216.6 884 215.9 883 215.9 883 215.1 882 215.1 882 217.4 881 217.4 881 216.6 880 216.6 880 216.1 879 216.1 879 214.6 878 214.6 878 215.9 877 215.9 877 214.1 876 214.1 876 216.0 875 216.0 875 215.3 874 215.3 874 215.9 873 215.9 873 214.8 872 214.8 872 214.2 871 214.2 871 215.1 870 215.1 870 215.4 869 215.4 869 216.7 868 216.7 868 214.3 867 214.3 867 216.2 866 216.2 866 216.5 865 216.5 865 216.8 864 216.8 864 216.5 863 216.5 863 215.4 862 215.4 862 215.5 861 215.5 861 216.4 860 216.4 860 214.7 859 214.7 859 217.0 858 217.0 858 216.1 857 216.1 857 214.9 856 214.9 856 215.5 855 215.5 855 215.2 854 215.2 854 215.9 853 215.9 853 215.6 852 215.6 852 215.5 851 215.5 851 215.5 850 215.5 850 216.3 849 216.3 849 214.9 848 214.9 848 215.5 847 215.5 847 214.6 846 214.6 846 216.9 845 216.9 845 214.8 844 214.8 844 215.5 843 215.5 843 215.9 842 215.9 842 216.3 841 216.3 841 216.3 840 216.3 840 214.6 839 214.6 839 215.2 838 215.2 838 215.2 837 215.2 837 217.1 836 217.1 836 216.2 835 216.2 835 217.0 834 217.0 834 216.2 833 216.2 833 217.3 832 217.3 832 216.6 831 216.6 831 216.6 830 216.6 830 216.3 829 216.3 829 215.4 828 215.4 828 216.0 827 216.0 827 215.4 826 215.4 826 214.7 825 214.7 825 216.2 824 216.2 824 216.9 823 216.9 823 215.4 822 215.4 822 216.4 821 216.4 821 217.3 820 217.3 820 215.9 819 215.9 819 216.7 818 216.7 818 216.2 817 216.2 817 216.0 816 216.0 816 215.7 815 215.7 815 215.8 814 215.8 814 216.1 813 216.1 813 216.3 812 216.3 812 216.5 811 216.5 811 217.6 810 217.6 810 215.7 809 215.7 809 215.9 808 215.9 808 215.1 807 215.1 807 216.4 806 216.4 806 215.7 805 215.7 805 217.6 804 217.6 804 216.4 803 216.4 803 216.8 802 216.8 802 216.1 801 216.1 801 216.6 800 216.6 800 214.8 799 214.8 799 215.7 798 215.7 798 215.5 797 215.5 797 216.8 796 216.8 796 215.4 795 215.4 795 217.1 794 217.1 794 216.5 793 216.5 793 215.0 792 215.0 792 215.9 791 215.9 791 215.7 790 215.7 790 217.7 789 217.7 789 215.4 788 215.4 788 216.6 787 216.6 787 215.5 786 215.5 786 214.4 785 214.4 785 216.7 784 216.7 784 216.7 783 216.7 783 215.9 782 215.9 782 217.0 781 217.0 781 217.3 780 217.3 780 215.0 779 215.0 779 217.7 778 217.7 778 214.7 777 214.7 777 214.7 776 214.7 776 216.2 775 216.2 775 214.5 774 214.5 774 215.2 773 215.2 773 215.9 772 215.9 772 215.6 771 215.6 771 216.5 770 216.5 770 215.6 769 215.6 769 217.6 768 217.6 768 217.1 767 217.1 767 215.7 766 215.7 766 216.0 765 216.0 765 214.7 764 214.7 764 216.5 763 216.5 763 217.4 762 217.4 762 215.3 761 215.3 761 216.9 760 216.9 760 215.9 759 215.9 759 217.9 758 217.9 758 215.3 757 215.3 757 216.4 756 216.4 756 216.5 755 216.5 755 217.0 754 217.0 754 215.4 753 215.4 753 215.0 752 215.0 752 216.1 751 216.1 751 216.9 750 216.9 750 216.4 749 216.4 749 215.9 748 215.9 748 214.9 747 214.9 747 215.2 746 215.2 746 217.4 745 217.4 745 217.0 744 217.0 744 217.1 743 217.1 743 214.7 742 214.7 742 214.8 741 214.8 741 216.3 740 216.3 740 217.4 739 217.4 739 216.6 738 216.6 738 214.4 737 214.4 737 215.1 736 215.1 736 214.8 735 214.8 735 216.1 734 216.1 734 216.8 733 216.8 733 216.5 732 216.5 732 215.1 731 215.1 731 214.9 730 214.9 730 214.7 729 214.7 729 216.9 728 216.9 728 215.1 727 215.1 727 215.2 726 215.2 726 216.6 725 216.6 725 215.0 724 215.0 724 215.5 723 215.5 723 217.4 722 217.4 722 217.0 721 217.0 721 217.2 720 217.2 720 214.9 719 214.9 719 216.0 718 216.0 718 217.5 717 217.5 717 214.9 716 214.9 716 215.9 715 215.9 715 216.1 714 216.1 714 216.1 713 216.1 713 215.7 712 215.7 712 216.1 711 216.1 711 217.3 710 217.3 710 216.9 709 216.9 709 217.3 708 217.3 708 215.6 707 215.6 707 216.4 706 216.4 706 217.8 705 217.8 705 215.7 704 215.7 704 216.9 703 216.9 703 217.0 702 217.0 702 216.6 701 216.6 701 218.8 700 218.8 700 219.1 699 219.1 699 219.2 698 219.2 698 216.8 697 216.8 697 216.8 696 216.8 696 216.9 695 216.9 695 217.8 694 217.8 694 216.4 693 216.4 693 217.4 692 217.4 692 215.7 691 215.7 691 216.3 690 216.3 690 216.1 689 216.1 689 216.3 688 216.3 688 216.1 687 216.1 687 218.0 686 218.0 686 218.4 685 218.4 685 216.7 684 216.7 684 217.9 683 217.9 683 216.9 682 216.9 682 216.5 681 216.5 681 217.4 680 217.4 680 216.3 679 216.3 679 216.1 678 216.1 678 217.6 677 217.6 677 217.8 676 217.8 676 217.2 675 217.2 675 217.1 674 217.1 674 217.8 673 217.8 673 218.1 672 218.1 672 217.8 671 217.8 671 216.8 670 216.8 670 216.5 669 216.5 669 217.7 668 217.7 668 218.4 667 218.4 667 218.9 666 218.9 666 218.6 665 218.6 665 218.5 664 218.5 664 216.2 663 216.2 663 216.2 662 216.2 662 219.2 661 219.2 661 217.0 660 217.0 660 217.5 659 217.5 659 216.9 658 216.9 658 218.8 657 218.8 657 217.7 656 217.7 656 216.3 655 216.3 655 219.0 654 219.0 654 218.5 653 218.5 653 216.4 652 216.4 652 218.0 651 218.0 651 217.8 650 217.8 650 217.2 649 217.2 649 216.3 648 216.3 648 216.1 647 216.1 647 218.4 646 218.4 646 218.4 645 218.4 645 216.5 644 216.5 644 216.1 643 216.1 643 218.2 642 218.2 642 217.4 641 217.4 641 216.1 640 216.1 640 218.7 639 218.7 639 218.1 638 218.1 638 216.8 637 216.8 637 217.7 636 217.7 636 216.2 635 216.2 635 219.0 634 219.0 634 218.5 633 218.5 633 217.0 632 217.0 632 218.3 631 218.3 631 215.8 630 215.8 630 217.9 629 217.9 629 218.2 628 218.2 628 219.3 627 219.3 627 219.3 626 219.3 626 216.5 625 216.5 625 218.0 624 218.0 624 216.6 623 216.6 623 217.9 622 217.9 622 217.7 621 217.7 621 217.9 620 217.9 620 216.8 619 216.8 619 217.3 618 217.3 618 217.0 617 217.0 617 215.2 616 215.2 616 215.3 615 215.3 615 215.8 614 215.8 614 215.3 613 215.3 613 215.3 612 215.3 612 217.4 611 217.4 611 216.2 610 216.2 610 216.8 609 216.8 609 218.1 608 218.1 608 215.8 607 215.8 607 217.5 606 217.5 606 217.0 605 217.0 605 215.5 604 215.5 604 217.8 603 217.8 603 216.3 602 216.3 602 216.5 601 216.5 601 215.6 600 215.6 600 214.9 599 214.9 599 216.2 598 216.2 598 217.5 597 217.5 597 217.2 596 217.2 596 216.1 595 216.1 595 216.0 594 216.0 594 215.3 593 215.3 593 216.2 592 216.2 592 216.4 591 216.4 591 215.7 590 215.7 590 216.7 589 216.7 589 217.7 588 217.7 588 216.8 587 216.8 587 215.4 586 215.4 586 215.3 585 215.3 585 217.1 584 217.1 584 217.3 583 217.3 583 216.7 582 216.7 582 216.7 581 216.7 581 217.7 580 217.7 580 214.9 579 214.9 579 217.0 578 217.0 578 215.8 577 215.8 577 216.6 576 216.6 576 216.7 575 216.7 575 215.3 574 215.3 574 216.7 573 216.7 573 216.0 572 216.0 572 217.3 571 217.3 571 215.4 570 215.4 570 216.2 569 216.2 569 215.8 568 215.8 568 217.2 567 217.2 567 216.5 566 216.5 566 216.8 565 216.8 565 215.4 564 215.4 564 217.0 563 217.0 563 216.8 562 216.8 562 216.8 561 216.8 561 217.1 560 217.1 560 216.2 559 216.2 559 214.6 558 214.6 558 215.2 557 215.2 557 215.3 556 215.3 556 216.0 555 216.0 555 214.8 554 214.8 554 214.9 553 214.9 553 216.4 552 216.4 552 215.2 551 215.2 551 216.1 550 216.1 550 216.1 549 216.1 549 215.9 548 215.9 548 216.0 547 216.0 547 216.3 546 216.3 546 214.6 545 214.6 545 214.3 544 214.3 544 212.2 543 212.2 543 211.5 542 211.5 542 210.8 541 210.8 541 212.4 540 212.4 540 212.8 539 212.8 539 213.6 538 213.6 538 213.1 537 213.1 537 214.1 536 214.1 536 215.3 535 215.3 535 214.2 534 214.2 534 213.5 533 213.5 533 215.5 532 215.5 532 213.8 531 213.8 531 214.7 530 214.7 530 215.0 529 215.0 529 215.4 528 215.4 528 214.4 527 214.4 527 213.7 526 213.7 526 213.9 525 213.9 525 214.6 524 214.6 524 214.3 523 214.3 523 214.8 522 214.8 522 213.4 521 213.4 521 214.3 520 214.3 520 214.4 519 214.4 519 215.2 518 215.2 518 216.0 517 216.0 517 214.7 516 214.7 516 215.1 515 215.1 515 214.8 514 214.8 514 215.4 513 215.4 513 214.1 512 214.1 512 214.4 511 214.4 511 215.2 510 215.2 510 214.8 509 214.8 509 214.7 508 214.7 508 215.7 507 215.7 507 215.8 506 215.8 506 215.7 505 215.7 505 214.4 504 214.4 504 215.2 503 215.2 503 213.8 502 213.8 502 213.9 501 213.9 501 213.9 500 213.9 500 215.6 499 215.6 499 214.9 498 214.9 498 214.3 497 214.3 497 215.2 496 215.2 496 214.7 495 214.7 495 214.2 494 214.2 494 214.6 493 214.6 493 215.1 492 215.1 492 214.6 491 214.6 491 216.1 490 216.1 490 214.4 489 214.4 489 215.9 488 215.9 488 216.8 487 216.8 487 214.4 486 214.4 486 216.6 485 216.6 485 215.7 484 215.7 484 215.2 483 215.2 483 216.5 482 216.5 482 216.5 481 216.5 481 215.9 480 215.9 480 216.7 479 216.7 479 214.8 478 214.8 478 214.4 477 214.4 477 215.8 476 215.8 476 214.8 475 214.8 475 216.3 474 216.3 474 216.2 473 216.2 473 217.4 472 217.4 472 214.9 471 214.9 471 216.4 470 216.4 470 216.5 469 216.5 469 216.3 468 216.3 468 214.7 467 214.7 467 215.8 466 215.8 466 214.5 465 214.5 465 214.2 464 214.2 464 215.3 463 215.3 463 214.6 462 214.6 462 215.1 461 215.1 461 215.3 460 215.3 460 216.6 459 216.6 459 215.1 458 215.1 458 215.0 457 215.0 457 216.6 456 216.6 456 216.6 455 216.6 455 216.4 454 216.4 454 216.3 453 216.3 453 215.0 452 215.0 452 214.5 451 214.5 451 214.9 450 214.9 450 214.2 449 214.2 449 214.6 448 214.6 448 214.1 447 214.1 447 214.5 446 214.5 446 214.8 445 214.8 445 214.9 444 214.9 444 214.7 443 214.7 443 214.6 442 214.6 442 213.6 441 213.6 441 213.1 440 213.1 440 213.8 439 213.8 439 213.6 438 213.6 438 214.8 437 214.8 437 215.6 436 215.6 436 214.7 435 214.7 435 214.4 434 214.4 434 214.3 433 214.3 433 216.4 432 216.4 432 214.1 431 214.1 431 215.5 430 215.5 430 216.6 429 216.6 429 216.7 428 216.7 428 216.4 427 216.4 427 214.6 426 214.6 426 214.9 425 214.9 425 214.8 424 214.8 424 215.8 423 215.8 423 215.1 422 215.1 422 216.5 421 216.5 421 216.6 420 216.6 420 216.9 419 216.9 419 214.0 418 214.0 418 216.1 417 216.1 417 214.8 416 214.8 416 215.1 415 215.1 415 214.0 414 214.0 414 215.5 413 215.5 413 214.9 412 214.9 412 215.8 411 215.8 411 216.1 410 216.1 410 216.4 409 216.4 409 215.9 408 215.9 408 216.4 407 216.4 407 215.0 406 215.0 406 216.3 405 216.3 405 216.1 404 216.1 404 214.3 403 214.3 403 215.3 402 215.3 402 214.9 401 214.9 401 215.7 400 215.7 400 215.7 399 215.7 399 215.8 398 215.8 398 214.6 397 214.6 397 213.9 396 213.9 396 214.9 395 214.9 395 216.4 394 216.4 394 215.7 393 215.7 393 215.8 392 215.8 392 215.9 391 215.9 391 214.4 390 214.4 390 215.1 389 215.1 389 216.1 388 216.1 388 216.2 387 216.2 387 215.8 386 215.8 386 215.0 385 215.0 385 215.0 384 215.0 384 215.0 383 215.0 383 215.9 382 215.9 382 214.2 381 214.2 381 216.1 380 216.1 380 215.9 379 215.9 379 214.8 378 214.8 378 215.6 377 215.6 377 215.5 376 215.5 376 215.7 375 215.7 375 214.2 374 214.2 374 215.9 373 215.9 373 215.7 372 215.7 372 214.7 371 214.7 371 215.7 370 215.7 370 214.1 369 214.1 369 214.4 368 214.4 368 215.4 367 215.4 367 214.0 366 214.0 366 215.0 365 215.0 365 215.1 364 215.1 364 214.9 363 214.9 363 213.7 362 213.7 362 215.6 361 215.6 361 213.9 360 213.9 360 216.4 359 216.4 359 213.9 358 213.9 358 213.7 357 213.7 357 216.0 356 216.0 356 214.2 355 214.2 355 214.3 354 214.3 354 215.2 353 215.2 353 215.7 352 215.7 352 215.6 351 215.6 351 213.6 350 213.6 350 214.9 349 214.9 349 213.5 348 213.5 348 214.6 347 214.6 347 213.7 346 213.7 346 214.2 345 214.2 345 214.1 344 214.1 344 215.4 343 215.4 343 214.7 342 214.7 342 213.7 341 213.7 341 215.5 340 215.5 340 214.8 339 214.8 339 215.3 338 215.3 338 215.9 337 215.9 337 215.1 336 215.1 336 214.5 335 214.5 335 215.6 334 215.6 334 215.7 333 215.7 333 214.0 332 214.0 332 214.8 331 214.8 331 215.6 330 215.6 330 215.5 329 215.5 329 214.8 328 214.8 328 213.7 327 213.7 327 214.4 326 214.4 326 215.5 325 215.5 325 215.6 324 215.6 324 215.7 323 215.7 323 215.0 322 215.0 322 215.2 321 215.2 321 214.2 320 214.2 320 214.6 319 214.6 319 214.4 318 214.4 318 215.2 317 215.2 317 214.6 316 214.6 316 213.9 315 213.9 315 215.3 314 215.3 314 214.0 313 214.0 313 215.0 312 215.0 312 214.6 311 214.6 311 214.4 310 214.4 310 215.3 309 215.3 309 214.3 308 214.3 308 213.3 307 213.3 307 214.1 306 214.1 306 213.6 305 213.6 305 215.2 304 215.2 304 215.1 303 215.1 303 213.7 302 213.7 302 213.4 301 213.4 301 215.3 300 215.3 300 215.0 299 215.0 299 215.4 298 215.4 298 213.7 297 213.7 297 215.0 296 215.0 296 214.6 295 214.6 295 213.8 294 213.8 294 214.5 293 214.5 293 213.8 292 213.8 292 213.6 291 213.6 291 213.6 290 213.6 290 212.4 289 212.4 289 211.6 288 211.6 288 212.8 287 212.8 287 211.9 286 211.9 286 212.0 285 212.0 285 211.8 284 211.8 284 212.2 283 212.2 283 212.6 282 212.6 282 211.6 281 211.6 281 212.1 280 212.1 280 211.9 279 211.9 279 211.9 278 211.9 278 213.0 277 213.0 277 212.8 276 212.8 276 211.6 275 211.6 275 212.3 274 212.3 274 211.7 273 211.7 273 212.4 272 212.4 272 212.1 271 212.1 271 213.5 270 213.5 270 212.9 269 212.9 269 212.3 268 212.3 268 212.8 267 212.8 267 213.0 266 213.0 266 214.9 265 214.9 265 214.5 264 214.5 264 214.9 263 214.9 263 214.1 262 214.1 262 214.8 261 214.8 261 215.5 260 215.5 260 214.9 259 214.9 259 216.6 258 216.6 258 216.3 257 216.3 257 216.1 256 216.1 256 215.5 255 215.5 255 214.7 254 214.7 254 215.9 253 215.9 253 215.5 252 215.5 252 215.9 251 215.9 251 216.3 250 216.3 250 214.9 249 214.9 249 214.9 248 214.9 248 215.7 247 215.7 247 217.6 246 217.6 246 216.1 245 216.1 245 213.7 244 213.7 244 212.2 243 212.2 243 211.5 242 211.5 242 211.9 241 211.9 241 211.7 240 211.7 240 212.3 239 212.3 239 211.9 238 211.9 238 211.3 237 211.3 237 211.0 236 211.0 236 211.9 235 211.9 235 211.2 234 211.2 234 211.1 233 211.1 233 211.1 232 211.1 232 210.8 231 210.8 231 211.3 230 211.3 230 211.2 229 211.2 229 211.2 228 211.2 228 212.4 227 212.4 227 211.7 226 211.7 226 211.1 225 211.1 225 212.8 224 212.8 224 210.9 223 210.9 223 212.6 222 212.6 222 211.0 221 211.0 221 211.1 220 211.1 220 211.2 219 211.2 219 211.4 218 211.4 218 212.3 217 212.3 217 211.4 216 211.4 216 212.4 215 212.4 215 212.0 214 212.0 214 211.4 213 211.4 213 211.6 212 211.6 212 211.1 211 211.1 211 211.3 210 211.3 210 212.1 209 212.1 209 212.0 208 212.0 208 212.2 207 212.2 207 212.5 206 212.5 206 211.2 205 211.2 205 212.2 204 212.2 204 212.0 203 212.0 203 211.4 202 211.4 202 212.0 201 212.0 201 211.3 200 211.3 200 210.7 199 210.7 199 211.0 198 211.0 198 211.5 197 211.5 197 212.4 196 212.4 196 211.8 195 211.8 195 211.0 194 211.0 194 211.7 193 211.7 193 212.4 192 212.4 192 211.2 191 211.2 191 212.3 190 212.3 190 212.3 189 212.3 189 211.4 188 211.4 188 210.9 187 210.9 187 211.6 186 211.6 186 212.1 185 212.1 185 210.9 184 210.9 184 211.7 183 211.7 183 211.2 182 211.2 182 211.4 181 211.4 181 212.0 180 212.0 180 211.8 179 211.8 179 212.3 178 212.3 178 210.9 177 210.9 177 210.9 176 210.9 176 211.9 175 211.9 175 212.4 174 212.4 174 211.5 173 211.5 173 211.4 172 211.4 172 211.0 171 211.0 171 211.9 170 211.9 170 211.1 169 211.1 169 211.6 168 211.6 168 211.6 167 211.6 167 211.4 166 211.4 166 211.7 165 211.7 165 211.5 164 211.5 164 212.3 163 212.3 163 212.2 162 212.2 162 211.9 161 211.9 161 212.5 160 212.5 160 212.5 159 212.5 159 211.9 158 211.9 158 212.8 157 212.8 157 211.9 156 211.9 156 211.2 155 211.2 155 210.9 154 210.9 154 210.3 153 210.3 153 210.2 152 210.2 152 210.1 151 210.1 151 209.5 150 209.5 150 209.5 149 209.5 149 209.2 148 209.2 148 209.6 147 209.6 147 209.2 146 209.2 146 209.4 145 209.4 145 209.1 144 209.1 144 209.0 143 209.0 143 209.2 142 209.2 142 209.3 141 209.3 141 209.1 140 209.1 140 209.5 139 209.5 139 209.9 138 209.9 138 209.2 137 209.2 137 209.8 136 209.8 136 209.6 135 209.6 135 209.6 134 209.6 134 209.5 133 209.5 133 209.3 132 209.3Z" fill="#6464dc"/></svg>
<div class="r" style="left:1848px;top:204px;width:41px;height:1px;background:#3232c8"></div>
<svg class="r" style="left:0px;top:0px" width="1920" height="1080" viewBox="0 0 1920 1080"><path d="M132 346.0 133 346.0 133 346.7 134 346.7 134 340.8 135 340.8 135 348.7 136 348.7 136 345.9 137 345.9 137 347.5 138 347.5 138 348.0 139 348.0 139 345.9 140 345.9 140 345.1 141 345.1 141 347.3 142 347.3 142 347.4 143 347.4 143 347.3 144 347.3 144 348.7 145 348.7 145 347.7 146 347.7 146 341.6 147 341.6 147 346.6 148 346.6 148 346.8 149 346.8 149 344.9 150 344.9 150 346.4 151 346.4 151 347.0 152 347.0 152 347.8 153 347.8 153 346.7 154 346.7 154 334.6 155 334.6 155 342.9 156 342.9 156 321.3 157 321.3 157 338.4 158 338.4 158 341.5 159 341.5 159 340.1 160 340.1 160 341.5 161 341.5 161 339.0 162 339.0 162 343.1 163 343.1 163 339.7 164 339.7 164 341.8 165 341.8 165 342.3 166 342.3 166 342.4 167 342.4 167 342.7 168 342.7 168 340.1 169 340.1 169 330.4 170 330.4 170 337.8 171 337.8 171 339.0 172 339.0 172 340.9 173 340.9 173 331.9 174 331.9 174 335.0 175 335.0 175 329.0 176 329.0 176 341.8 177 341.8 177 340.9 178 340.9 178 319.0 179 319.0 179 337.1 180 337.1 180 336.4 181 336.4 181 331.7 182 331.7 182 335.7 183 335.7 183 329.6 184 329.6 184 339.0 185 339.0 185 340.0 186 340.0 186 336.0 187 336.0 187 335.7 188 335.7 188 339.0 189 339.0 189 341.0 190 341.0 190 340.7 191 340.7 191 344.3 192 344.3 192 325.6 193 325.6 193 339.5 194 339.5 194 341.5 195 341.5 195 342.7 196 342.7 196 328.5 197 328.5 197 343.3 198 343.3 198 337.0 199 337.0 199 333.5 200 333.5 200 339.0 201 339.0 201 317.0 202 317.0 202 331.6 203 331.6 203 337.2 204 337.2 204 335.6 205 335.6 205 331.4 206 331.4 206 336.5 207 336.5 207 322.6 208 322.6 208 338.1 209 338.1 209 342.1 210 342.1 210 340.1 211 340.1 211 335.0 212 335.0 212 338.5 213 338.5 213 337.3 214 337.3 214 342.1 215 342.1 215 343.9 216 343.9 216 326.4 217 326.4 217 333.0 218 333.0 218 341.5 219 341.5 219 336.7 220 336.7 220 328.1 221 328.1 221 340.6 222 340.6 222 338.4 223 338.4 223 322.3 224 322.3 224 321.7 225 321.7 225 332.8 226 332.8 226 342.2 227 342.2 227 335.7 228 335.7 228 337.2 229 337.2 229 339.3 230 339.3 230 342.1 231 342.1 231 330.7 232 330.7 232 344.3 233 344.3 233 344.5 234 344.5 234 344.8 235 344.8 235 345.1 236 345.1 236 334.4 237 334.4 237 334.5 238 334.5 238 340.4 239 340.4 239 328.0 240 328.0 240 333.0 241 333.0 241 334.9 242 334.9 242 321.6 243 321.6 243 340.8 244 340.8 244 324.6 245 324.6 245 328.9 246 328.9 246 304.8 247 304.8 247 313.2 248 313.2 248 320.6 249 320.6 249 329.1 250 329.1 250 311.5 251 311.5 251 329.3 252 329.3 252 328.2 253 328.2 253 330.7 254 330.7 254 325.4 255 325.4 255 298.0 256 298.0 256 332.3 257 332.3 257 335.2 258 335.2 258 336.4 259 336.4 259 332.2 260 332.2 260 315.2 261 315.2 261 318.1 262 318.1 262 326.0 263 326.0 263 326.6 264 326.6 264 332.1 265 332.1 265 326.7 266 326.7 266 337.6 267 337.6 267 314.3 268 314.3 268 337.4 269 337.4 269 314.6 270 314.6 270 332.0 271 332.0 271 329.9 272 329.9 272 333.7 273 333.7 273 330.4 274 330.4 274 337.0 275 337.0 275 333.3 276 333.3 276 299.8 277 299.8 277 333.8 278 333.8 278 335.3 279 335.3 279 340.4 280 340.4 280 339.9 281 339.9 281 331.1 282 331.1 282 342.6 283 342.6 283 343.1 284 343.1 284 341.1 285 341.1 285 323.3 286 323.3 286 335.9 287 335.9 287 339.3 288 339.3 288 338.6 289 338.6 289 302.2 290 302.2 290 335.7 291 335.7 291 315.4 292 315.4 292 304.2 293 304.2 293 319.5 294 319.5 294 328.1 295 328.1 295 328.1 296 328.1 296 334.9 297 334.9 297 333.1 298 333.1 298 312.2 299 312.2 299 326.2 300 326.2 300 322.7 301 322.7 301 303.2 302 303.2 302 327.6 303 327.6 303 327.7 304 327.7 304 334.1 305 334.1 305 331.9 306 331.9 306 337.0 307 337.0 307 338.5 308 338.5 308 338.6 309 338.6 309 335.2 310 335.2 310 324.6 311 324.6 311 338.3 312 338.3 312 334.9 313 334.9 313 326.1 314 326.1 314 315.1 315 315.1 315 315.5 316 315.5 316 323.0 317 323.0 317 331.7 318 331.7 318 335.8 319 335.8 319 331.9 320 331.9 320 312.9 321 312.9 321 331.8 322 331.8 322 325.4 323 325.4 323 326.9 324 326.9 324 334.9 325 334.9 325 284.6 326 284.6 326 320.9 327 320.9 327 329.8 328 329.8 328 335.9 329 335.9 329 316.3 330 316.3 330 332.7 331 332.7 331 317.8 332 317.8 332 327.1 333 327.1 333 328.9 334 328.9 334 319.0 335 319.0 335 322.4 336 322.4 336 323.1 337 323.1 337 304.1 338 304.1 338 324.9 339 324.9 339 324.5 340 324.5 340 330.1 341 330.1 341 329.2 342 329.2 342 326.0 343 326.0 343 333.0 344 333.0 344 330.1 345 330.1 345 335.7 346 335.7 346 331.3 347 331.3 347 334.3 348 334.3 348 321.4 349 321.4 349 330.8 350 330.8 350 316.6 351 316.6 351 336.2 352 336.2 352 333.9 353 333.9 353 320.6 354 320.6 354 319.5 355 319.5 355 325.4 356 325.4 356 327.7 357 327.7 357 331.1 358 331.1 358 327.8 359 327.8 359 304.1 360 304.1 360 315.8 361 315.8 361 329.8 362 329.8 362 312.9 363 312.9 363 293.0 364 293.0 364 335.1 365 335.1 365 335.2 366 335.2 366 335.1 367 335.1 367 331.3 368 331.3 368 325.9 369 325.9 369 330.1 370 330.1 370 319.9 371 319.9 371 334.6 372 334.6 372 333.4 373 333.4 373 331.9 374 331.9 374 316.6 375 316.6 375 336.1 376 336.1 376 333.2 377 333.2 377 327.0 378 327.0 378 329.3 379 329.3 379 327.9 380 327.9 380 332.8 381 332.8 381 327.0 382 327.0 382 310.0 383 310.0 383 328.4 384 328.4 384 321.2 385 321.2 385 330.8 386 330.8 386 333.9 387 333.9 387 330.9 388 330.9 388 332.5 389 332.5 389 327.8 390 327.8 390 335.5 391 335.5 391 309.7 392 309.7 392 312.7 393 312.7 393 318.1 394 318.1 394 297.6 395 297.6 395 332.8 396 332.8 396 321.4 397 321.4 397 333.6 398 333.6 398 325.3 399 325.3 399 329.6 400 329.6 400 307.2 401 307.2 401 326.4 402 326.4 402 325.1 403 325.1 403 326.2 404 326.2 404 328.2 405 328.2 405 302.2 406 302.2 406 319.5 407 319.5 407 295.9 408 295.9 408 284.6 409 284.6 409 328.8 410 328.8 410 318.5 411 318.5 411 324.6 412 324.6 412 334.8 413 334.8 413 325.2 414 325.2 414 307.8 415 307.8 415 327.9 416 327.9 416 302.8 417 302.8 417 333.1 418 333.1 418 337.0 419 337.0 419 303.7 420 303.7 420 318.6 421 318.6 421 316.8 422 316.8 422 323.7 423 323.7 423 301.7 424 301.7 424 333.4 425 333.4 425 326.6 426 326.6 426 333.2 427 333.2 427 299.2 428 299.2 428 319.7 429 319.7 429 326.4 430 326.4 430 304.8 431 304.8 431 310.1 432 310.1 432 321.0 433 321.0 433 322.3 434 322.3 434 332.2 435 332.2 435 333.6 436 333.6 436 333.5 437 333.5 437 317.4 438 317.4 438 339.1 439 339.1 439 327.5 440 327.5 440 305.7 441 305.7 441 336.6 442 336.6 442 330.6 443 330.6 443 326.9 444 326.9 444 335.3 445 335.3 445 337.4 446 337.4 446 339.5 447 339.5 447 337.4 448 337.4 448 334.3 449 334.3 449 326.6 450 326.6 450 301.2 451 301.2 451 318.3 452 318.3 452 329.5 453 329.5 453 326.9 454 326.9 454 316.0 455 316.0 455 296.7 456 296.7 456 329.2 457 329.2 457 325.1 458 325.1 458 304.6 459 304.6 459 323.7 460 323.7 460 312.2 461 312.2 461 329.9 462 329.9 462 323.0 463 323.0 463 332.0 464 332.0 464 303.9 465 303.9 465 329.6 466 329.6 466 284.6 467 284.6 467 317.6 468 317.6 468 327.1 469 327.1 469 316.1 470 316.1 470 326.2 471 326.2 471 331.5 472 331.5 472 296.8 473 296.8 473 324.6 474 324.6 474 312.0 475 312.0 475 305.6 476 305.6 476 326.3 477 326.3 477 320.2 478 320.2 478 320.9 479 320.9 479 330.8 480 330.8 480 318.6 481 318.6 481 318.2 482 318.2 482 321.4 483 321.4 483 322.7 484 322.7 484 332.7 485 332.7 485 305.9 486 305.9 486 322.1 487 322.1 487 324.8 488 324.8 488 330.5 489 330.5 489 325.6 490 325.6 490 328.7 491 328.7 491 329.7 492 329.7 492 305.4 493 305.4 493 313.2 494 313.2 494 319.5 495 319.5 495 298.8 496 298.8 496 316.8 497 316.8 497 320.3 498 320.3 498 334.1 499 334.1 499 303.3 500 303.3 500 336.1 501 336.1 501 317.2 502 317.2 502 339.5 503 339.5 503 339.7 504 339.7 504 335.1 505 335.1 505 337.7 506 337.7 506 327.7 507 327.7 507 286.8 508 286.8 508 333.4 509 333.4 509 329.4 510 329.4 510 334.9 511 334.9 511 329.8 512 329.8 512 335.7 513 335.7 513 308.8 514 308.8 514 324.3 515 324.3 515 332.9 516 332.9 516 335.0 517 335.0 517 333.7 518 333.7 518 305.3 519 305.3 519 320.0 520 320.0 520 335.4 521 335.4 521 326.9 522 326.9 522 332.7 523 332.7 523 326.5 524 326.5 524 331.8 525 331.8 525 335.8 526 335.8 526 334.2 527 334.2 527 332.4 528 332.4 528 333.0 529 333.0 529 320.8 530 320.8 530 296.4 531 296.4 531 334.3 532 334.3 532 332.8 533 332.8 533 335.3 534 335.3 534 331.1 535 331.1 535 334.5 536 334.5 536 340.3 537 340.3 537 327.3 538 327.3 538 332.1 539 332.1 539 319.3 540 319.3 540 321.5 541 321.5 541 343.6 542 343.6 542 340.3 543 340.3 543 313.5 544 313.5 544 332.9 545 332.9 545 327.0 546 327.0 546 325.4 547 325.4 547 322.6 548 322.6 548 292.8 549 292.8 549 326.5 550 326.5 550 325.7 551 325.7 551 333.4 552 333.4 552 336.8 553 336.8 553 320.9 554 320.9 554 310.7 555 310.7 555 332.4 556 332.4 556 336.6 557 336.6 557 313.9 558 313.9 558 320.1 559 320.1 559 330.9 560 330.9 560 333.4 561 333.4 561 306.1 562 306.1 562 333.1 563 333.1 563 298.2 564 298.2 564 309.7 565 309.7 565 322.7 566 322.7 566 327.4 567 327.4 567 332.3 568 332.3 568 328.1 569 328.1 569 327.7 570 327.7 570 296.4 571 296.4 571 327.1 572 327.1 572 324.7 573 324.7 573 331.4 574 331.4 574 321.8 575 321.8 575 329.1 576 329.1 576 330.2 577 330.2 577 326.0 578 326.0 578 327.4 579 327.4 579 325.7 580 325.7 580 332.7 581 332.7 581 303.3 582 303.3 582 324.5 583 324.5 583 316.5 584 316.5 584 330.1 585 330.1 585 322.4 586 322.4 586 299.7 587 299.7 587 315.6 588 315.6 588 329.0 589 329.0 589 321.0 590 321.0 590 332.7 591 332.7 591 327.4 592 327.4 592 333.1 593 333.1 593 336.2 594 336.2 594 333.1 595 333.1 595 333.9 596 333.9 596 328.3 597 328.3 597 336.7 598 336.7 598 328.8 599 328.8 599 337.9 600 337.9 600 317.7 601 317.7 601 284.6 602 284.6 602 321.4 603 321.4 603 327.0 604 327.0 604 305.9 605 305.9 605 325.8 606 325.8 606 328.8 607 328.8 607 326.2 608 326.2 608 305.9 609 305.9 609 309.8 610 309.8 610 315.9 611 315.9 611 316.5 612 316.5 612 324.7 613 324.7 613 310.6 614 310.6 614 304.3 615 304.3 615 326.8 616 326.8 616 304.8 617 304.8 617 320.3 618 320.3 618 319.4 619 319.4 619 323.7 620 323.7 620 327.0 621 327.0 621 326.6 622 326.6 622 331.5 623 331.5 623 323.1 624 323.1 624 327.2 625 327.2 625 324.9 626 324.9 626 329.1 627 329.1 627 298.5 628 298.5 628 316.9 629 316.9 629 324.9 630 324.9 630 328.9 631 328.9 631 294.1 632 294.1 632 320.0 633 320.0 633 317.9 634 317.9 634 320.6 635 320.6 635 331.0 636 331.0 636 330.1 637 330.1 637 315.1 638 315.1 638 318.6 639 318.6 639 329.7 640 329.7 640 318.2 641 318.2 641 331.0 642 331.0 642 331.0 643 331.0 643 333.3 644 333.3 644 331.7 645 331.7 645 326.4 646 326.4 646 334.5 647 334.5 647 325.2 648 325.2 648 310.7 649 310.7 649 329.8 650 329.8 650 288.4 651 288.4 651 319.7 652 319.7 652 322.8 653 322.8 653 293.5 654 293.5 654 284.6 655 284.6 655 308.5 656 308.5 656 314.3 657 314.3 657 320.5 658 320.5 658 327.4 659 327.4 659 326.5 660 326.5 660 327.1 661 327.1 661 322.4 662 322.4 662 314.0 663 314.0 663 320.2 664 320.2 664 327.6 665 327.6 665 306.4 666 306.4 666 324.6 667 324.6 667 309.3 668 309.3 668 317.2 669 317.2 669 327.6 670 327.6 670 333.2 671 333.2 671 312.0 672 312.0 672 285.8 673 285.8 673 331.0 674 331.0 674 324.4 675 324.4 675 332.3 676 332.3 676 295.2 677 295.2 677 314.8 678 314.8 678 307.4 679 307.4 679 284.6 680 284.6 680 323.1 681 323.1 681 332.6 682 332.6 682 322.6 683 322.6 683 300.2 684 300.2 684 322.0 685 322.0 685 320.6 686 320.6 686 326.6 687 326.6 687 317.6 688 317.6 688 323.2 689 323.2 689 322.4 690 322.4 690 316.4 691 316.4 691 308.6 692 308.6 692 314.0 693 314.0 693 322.4 694 322.4 694 329.4 695 329.4 695 305.5 696 305.5 696 332.1 697 332.1 697 330.6 698 330.6 698 327.2 699 327.2 699 293.1 700 293.1 700 310.1 701 310.1 701 319.1 702 319.1 702 327.6 703 327.6 703 331.9 704 331.9 704 324.3 705 324.3 705 326.0 706 326.0 706 336.7 707 336.7 707 295.5 708 295.5 708 335.1 709 335.1 709 309.6 710 309.6 710 325.8 711 325.8 711 327.8 712 327.8 712 327.0 713 327.0 713 325.5 714 325.5 714 334.0 715 334.0 715 331.6 716 331.6 716 328.3 717 328.3 717 332.1 718 332.1 718 336.2 719 336.2 719 325.6 720 325.6 720 284.6 721 284.6 721 299.4 722 299.4 722 315.1 723 315.1 723 330.1 724 330.1 724 332.6 725 332.6 725 323.9 726 323.9 726 298.6 727 298.6 727 312.5 728 312.5 728 326.6 729 326.6 729 326.9 730 326.9 730 323.9 731 323.9 731 316.1 732 316.1 732 337.3 733 337.3 733 329.9 734 329.9 734 329.6 735 329.6 735 336.7 736 336.7 736 338.0 737 338.0 737 336.6 738 336.6 738 334.2 739 334.2 739 323.1 740 323.1 740 322.6 741 322.6 741 325.2 742 325.2 742 323.7 743 323.7 743 325.0 744 325.0 744 302.1 745 302.1 745 293.6 746 293.6 746 327.6 747 327.6 747 332.7 748 332.7 748 330.4 749 330.4 749 333.0 750 333.0 750 326.9 751 326.9 751 323.7 752 323.7 752 327.6 753 327.6 753 333.5 754 333.5 754 327.2 755 327.2 755 330.5 756 330.5 756 301.2 757 301.2 757 309.1 758 309.1 758 314.4 759 314.4 759 329.4 760 329.4 760 331.2 761 331.2 761 336.9 762 336.9 762 337.1 763 337.1 763 332.8 764 332.8 764 326.8 765 326.8 765 327.7 766 327.7 766 333.2 767 333.2 767 310.1 768 310.1 768 329.7 769 329.7 769 318.2 770 318.2 770 332.3 771 332.3 771 324.4 772 324.4 772 325.8 773 325.8 773 322.4 774 322.4 774 332.8 775 332.8 775 308.5 776 308.5 776 336.8 777 336.8 777 334.0 778 334.0 778 332.6 779 332.6 779 336.4 780 336.4 780 336.4 781 336.4 781 330.6 782 330.6 782 326.3 783 326.3 783 284.6 784 284.6 784 328.2 785 328.2 785 325.8 786 325.8 786 326.0 787 326.0 787 312.2 788 312.2 788 327.0 789 327.0 789 312.5 790 312.5 790 324.0 791 324.0 791 320.7 792 320.7 792 316.0 793 316.0 793 296.6 794 296.6 794 321.5 795 321.5 795 331.0 796 331.0 796 334.8 797 334.8 797 336.0 798 336.0 798 328.1 799 328.1 799 325.2 800 325.2 800 307.5 801 307.5 801 328.7 802 328.7 802 324.3 803 324.3 803 323.9 804 323.9 804 318.4 805 318.4 805 324.2 806 324.2 806 323.5 807 323.5 807 324.7 808 324.7 808 332.7 809 332.7 809 306.6 810 306.6 810 335.3 811 335.3 811 335.5 812 335.5 812 305.4 813 305.4 813 317.2 814 317.2 814 327.4 815 327.4 815 318.9 816 318.9 816 330.8 817 330.8 817 326.7 818 326.7 818 333.4 819 333.4 819 332.3 820 332.3 820 338.0 821 338.0 821 322.0 822 322.0 822 313.7 823 313.7 823 322.4 824 322.4 824 325.1 825 325.1 825 320.4 826 320.4 826 332.1 827 332.1 827 329.9 828 329.9 828 334.9 829 334.9 829 334.8 830 334.8 830 329.1 831 329.1 831 335.2 832 335.2 832 325.1 833 325.1 833 339.8 834 339.8 834 308.1 835 308.1 835 318.6 836 318.6 836 290.7 837 290.7 837 332.2 838 332.2 838 333.9 839 333.9 839 333.4 840 333.4 840 338.1 841 338.1 841 338.2 842 338.2 842 340.4 843 340.4 843 336.2 844 336.2 844 293.0 845 293.0 845 321.3 846 321.3 846 332.9 847 332.9 847 333.3 848 333.3 848 327.1 849 327.1 849 332.3 850 332.3 850 329.3 851 329.3 851 323.6 852 323.6 852 330.4 853 330.4 853 336.2 854 336.2 854 337.6 855 337.6 855 331.4 856 331.4 856 325.1 857 325.1 857 314.2 858 314.2 858 323.8 859 323.8 859 325.6 860 325.6 860 314.6 861 314.6 861 324.4 862 324.4 862 332.2 863 332.2 863 325.9 864 325.9 864 315.7 865 315.7 865 336.7 866 336.7 866 332.5 867 332.5 867 337.5 868 337.5 868 336.0 869 336.0 869 333.7 870 333.7 870 339.2 871 339.2 871 319.2 872 319.2 872 322.1 873 322.1 873 331.4 874 331.4 874 328.4 875 328.4 875 332.3 876 332.3 876 296.8 877 296.8 877 326.3 878 326.3 878 330.0 879 330.0 879 334.8 880 334.8 880 313.4 881 313.4 881 313.2 882 313.2 882 331.8 883 331.8 883 325.9 884 325.9 884 324.1 885 324.1 885 316.5 886 316.5 886 307.9 887 307.9 887 333.0 888 333.0 888 330.0 889 330.0 889 332.3 890 332.3 890 284.6 891 284.6 891 314.0 892 314.0 892 322.2 893 322.2 893 318.2 894 318.2 894 309.3 895 309.3 895 327.3 896 327.3 896 331.8 897 331.8 897 324.7 898 324.7 898 319.7 899 319.7 899 310.8 900 310.8 900 315.0 901 315.0 901 317.9 902 317.9 902 290.7 903 290.7 903 316.0 904 316.0 904 285.9 905 285.9 905 326.8 906 326.8 906 284.6 907 284.6 907 314.9 908 314.9 908 323.0 909 323.0 909 312.9 910 312.9 910 315.7 911 315.7 911 307.8 912 307.8 912 322.6 913 322.6 913 324.9 914 324.9 914 284.6 915 284.6 915 315.5 916 315.5 916 303.1 917 303.1 917 312.3 918 312.3 918 319.3 919 319.3 919 328.8 920 328.8 920 304.9 921 304.9 921 324.8 922 324.8 922 284.6 923 284.6 923 284.6 924 284.6 924 314.4 925 314.4 925 285.3 926 285.3 926 304.2 927 304.2 927 310.8 928 310.8 928 323.0 929 323.0 929 312.2 930 312.2 930 329.7 931 329.7 931 319.3 932 319.3 932 318.6 933 318.6 933 320.2 934 320.2 934 322.9 935 322.9 935 322.4 936 322.4 936 331.7 937 331.7 937 330.7 938 330.7 938 322.6 939 322.6 939 313.8 940 313.8 940 313.7 941 313.7 941 319.3 942 319.3 942 324.8 943 324.8 943 320.1 944 320.1 944 318.9 945 318.9 945 329.1 946 329.1 946 332.8 947 332.8 947 286.7 948 286.7 948 310.6 949 310.6 949 319.5 950 319.5 950 322.4 951 322.4 951 312.9 952 312.9 952 284.6 953 284.6 953 308.3 954 308.3 954 328.2 955 328.2 955 322.4 956 322.4 956 324.4 957 324.4 957 332.4 958 332.4 958 324.9 959 324.9 959 330.6 960 330.6 960 322.9 961 322.9 961 334.4 962 334.4 962 290.2 963 290.2 963 317.9 964 317.9 964 315.7 965 315.7 965 320.0 966 320.0 966 330.6 967 330.6 967 328.8 968 328.8 968 328.3 969 328.3 969 337.8 970 337.8 970 300.9 971 300.9 971 331.8 972 331.8 972 327.7 973 327.7 973 334.5 974 334.5 974 338.3 975 338.3 975 316.1 976 316.1 976 326.6 977 326.6 977 335.9 978 335.9 978 327.9 979 327.9 979 338.7 980 338.7 980 337.9 981 337.9 981 314.0 982 314.0 982 335.3 983 335.3 983 330.9 984 330.9 984 332.5 985 332.5 985 322.4 986 322.4 986 326.4 987 326.4 987 337.2 988 337.2 988 325.7 989 325.7 989 327.4 990 327.4 990 338.6 991 338.6 991 326.8 992 326.8 992 331.8 993 331.8 993 316.3 994 316.3 994 330.6 995 330.6 995 329.7 996 329.7 996 320.2 997 320.2 997 305.1 998 305.1 998 330.2 999 330.2 999 327.3 1000 327.3 1000 301.8 1001 301.8 1001 336.5 1002 336.5 1002 338.3 1003 338.3 1003 338.2 1004 338.2 1004 332.6 1005 332.6 1005 326.0 1006 326.0 1006 325.8 1007 325.8 1007 321.3 1008 321.3 1008 318.4 1009 318.4 1009 325.6 1010 325.6 1010 284.6 1011 284.6 1011 301.3 1012 301.3 1012 298.0 1013 298.0 1013 303.6 1014 303.6 1014 290.3 1015 290.3 1015 285.3 1016 285.3 1016 288.6 1017 288.6 1017 297.3 1018 297.3 1018 308.6 1019 308.6 1019 320.9 1020 320.9 1020 315.7 1021 315.7 1021 323.0 1022 323.0 1022 323.7 1023 323.7 1023 327.8 1024 327.8 1024 327.5 1025 327.5 1025 327.5 1026 327.5 1026 296.9 1027 296.9 1027 305.4 1028 305.4 1028 308.8 1029 308.8 1029 316.8 1030 316.8 1030 304.7 1031 304.7 1031 314.6 1032 314.6 1032 284.6 1033 284.6 1033 284.6 1034 284.6 1034 303.4 1035 303.4 1035 318.8 1036 318.8 1036 304.5 1037 304.5 1037 306.8 1038 306.8 1038 285.3 1039 285.3 1039 284.6 1040 284.6 1040 284.6 1041 284.6 1041 314.6 1042 314.6 1042 301.5 1043 301.5 1043 318.3 1044 318.3 1044 314.9 1045 314.9 1045 325.4 1046 325.4 1046 291.3 1047 291.3 1047 286.1 1048 286.1 1048 318.3 1049 318.3 1049 284.6 1050 284.6 1050 316.7 1051 316.7 1051 318.0 1052 318.0 1052 284.6 1053 284.6 1053 312.5 1054 312.5 1054 312.3 1055 312.3 1055 312.4 1056 312.4 1056 310.7 1057 310.7 1057 314.0 1058 314.0 1058 288.7 1059 288.7 1059 292.4 1060 292.4 1060 297.6 1061 297.6 1061 285.3 1062 285.3 1062 294.7 1063 294.7 1063 292.7 1064 292.7 1064 313.8 1065 313.8 1065 306.8 1066 306.8 1066 310.0 1067 310.0 1067 318.0 1068 318.0 1068 311.2 1069 311.2 1069 326.2 1070 326.2 1070 304.7 1071 304.7 1071 292.5 1072 292.5 1072 301.4 1073 301.4 1073 300.8 1074 300.8 1074 324.7 1075 324.7 1075 292.1 1076 292.1 1076 294.1 1077 294.1 1077 318.6 1078 318.6 1078 302.8 1079 302.8 1079 311.9 1080 311.9 1080 315.4 1081 315.4 1081 309.7 1082 309.7 1082 294.5 1083 294.5 1083 285.3 1084 285.3 1084 307.2 1085 307.2 1085 300.2 1086 300.2 1086 317.3 1087 317.3 1087 303.5 1088 303.5 1088 306.3 1089 306.3 1089 307.9 1090 307.9 1090 303.7 1091 303.7 1091 284.6 1092 284.6 1092 296.2 1093 296.2 1093 317.0 1094 317.0 1094 312.8 1095 312.8 1095 284.6 1096 284.6 1096 310.8 1097 310.8 1097 309.4 1098 309.4 1098 324.0 1099 324.0 1099 284.6 1100 284.6 1100 304.6 1101 304.6 1101 298.0 1102 298.0 1102 318.8 1103 318.8 1103 319.1 1104 319.1 1104 284.6 1105 284.6 1105 322.1 1106 322.1 1106 285.3 1107 285.3 1107 313.3 1108 313.3 1108 305.9 1109 305.9 1109 284.6 1110 284.6 1110 317.1 1111 317.1 1111 299.6 1112 299.6 1112 323.2 1113 323.2 1113 306.6 1114 306.6 1114 320.7 1115 320.7 1115 317.6 1116 317.6 1116 302.2 1117 302.2 1117 324.0 1118 324.0 1118 323.3 1119 323.3 1119 339.1 1120 339.1 1120 342.9 1121 342.9 1121 347.7 1122 347.7 1122 349.5 1123 349.5 1123 351.7 1124 351.7 1124 350.3 1125 350.3 1125 348.2 1126 348.2 1126 330.8 1127 330.8 1127 322.6 1128 322.6 1128 303.6 1129 303.6 1129 284.6 1130 284.6 1130 317.9 1131 317.9 1131 307.3 1132 307.3 1132 313.2 1133 313.2 1133 294.0 1134 294.0 1134 333.0 1135 333.0 1135 317.2 1136 317.2 1136 334.5 1137 334.5 1137 330.4 1138 330.4 1138 325.2 1139 325.2 1139 308.2 1140 308.2 1140 315.3 1141 315.3 1141 328.6 1142 328.6 1142 325.5 1143 325.5 1143 309.7 1144 309.7 1144 321.8 1145 321.8 1145 330.0 1146 330.0 1146 325.0 1147 325.0 1147 333.6 1148 333.6 1148 325.4 1149 325.4 1149 320.0 1150 320.0 1150 325.0 1151 325.0 1151 290.6 1152 290.6 1152 314.0 1153 314.0 1153 314.6 1154 314.6 1154 321.6 1155 321.6 1155 323.1 1156 323.1 1156 320.1 1157 320.1 1157 286.0 1158 286.0 1158 324.6 1159 324.6 1159 327.6 1160 327.6 1160 328.5 1161 328.5 1161 326.8 1162 326.8 1162 325.7 1163 325.7 1163 326.3 1164 326.3 1164 315.4 1165 315.4 1165 332.0 1166 332.0 1166 332.8 1167 332.8 1167 335.3 1168 335.3 1168 318.3 1169 318.3 1169 321.4 1170 321.4 1170 318.9 1171 318.9 1171 322.7 1172 322.7 1172 332.7 1173 332.7 1173 329.3 1174 329.3 1174 305.2 1175 305.2 1175 311.6 1176 311.6 1176 316.3 1177 316.3 1177 328.8 1178 328.8 1178 325.9 1179 325.9 1179 325.5 1180 325.5 1180 325.9 1181 325.9 1181 335.7 1182 335.7 1182 308.1 1183 308.1 1183 321.0 1184 321.0 1184 322.5 1185 322.5 1185 328.8 1186 328.8 1186 332.0 1187 332.0 1187 303.3 1188 303.3 1188 323.2 1189 323.2 1189 321.7 1190 321.7 1190 330.0 1191 330.0 1191 322.9 1192 322.9 1192 324.6 1193 324.6 1193 330.4 1194 330.4 1194 336.2 1195 336.2 1195 333.4 1196 333.4 1196 300.9 1197 300.9 1197 316.6 1198 316.6 1198 328.6 1199 328.6 1199 328.0 1200 328.0 1200 330.0 1201 330.0 1201 334.6 1202 334.6 1202 336.0 1203 336.0 1203 314.4 1204 314.4 1204 311.9 1205 311.9 1205 323.9 1206 323.9 1206 322.9 1207 322.9 1207 326.0 1208 326.0 1208 332.8 1209 332.8 1209 301.6 1210 301.6 1210 321.2 1211 321.2 1211 327.5 1212 327.5 1212 324.3 1213 324.3 1213 327.0 1214 327.0 1214 310.7 1215 310.7 1215 309.8 1216 309.8 1216 318.0 1217 318.0 1217 327.0 1218 327.0 1218 333.9 1219 333.9 1219 294.6 1220 294.6 1220 316.9 1221 316.9 1221 284.6 1222 284.6 1222 323.2 1223 323.2 1223 320.6 1224 320.6 1224 333.9 1225 333.9 1225 335.8 1226 335.8 1226 325.8 1227 325.8 1227 284.6 1228 284.6 1228 284.6 1229 284.6 1229 322.6 1230 322.6 1230 318.0 1231 318.0 1231 326.4 1232 326.4 1232 315.3 1233 315.3 1233 313.1 1234 313.1 1234 316.6 1235 316.6 1235 329.4 1236 329.4 1236 319.3 1237 319.3 1237 317.5 1238 317.5 1238 323.5 1239 323.5 1239 319.7 1240 319.7 1240 325.6 1241 325.6 1241 325.3 1242 325.3 1242 301.0 1243 301.0 1243 324.6 1244 324.6 1244 327.3 1245 327.3 1245 318.9 1246 318.9 1246 320.2 1247 320.2 1247 287.9 1248 287.9 1248 325.2 1249 325.2 1249 333.3 1250 333.3 1250 336.8 1251 336.8 1251 306.8 1252 306.8 1252 322.1 1253 322.1 1253 326.6 1254 326.6 1254 325.4 1255 325.4 1255 298.5 1256 298.5 1256 328.2 1257 328.2 1257 326.5 1258 326.5 1258 335.6 1259 335.6 1259 328.2 1260 328.2 1260 311.5 1261 311.5 1261 335.3 1262 335.3 1262 331.4 1263 331.4 1263 316.2 1264 316.2 1264 294.0 1265 294.0 1265 316.2 1266 316.2 1266 284.6 1267 284.6 1267 320.0 1268 320.0 1268 319.8 1269 319.8 1269 321.8 1270 321.8 1270 330.4 1271 330.4 1271 318.4 1272 318.4 1272 323.2 1273 323.2 1273 322.5 1274 322.5 1274 332.6 1275 332.6 1275 330.0 1276 330.0 1276 333.6 1277 333.6 1277 319.5 1278 319.5 1278 320.0 1279 320.0 1279 329.9 1280 329.9 1280 329.4 1281 329.4 1281 331.3 1282 331.3 1282 332.5 1283 332.5 1283 330.2 1284 330.2 1284 328.8 1285 328.8 1285 330.6 1286 330.6 1286 314.4 1287 314.4 1287 299.0 1288 299.0 1288 325.2 1289 325.2 1289 328.5 1290 328.5 1290 324.1 1291 324.1 1291 323.0 1292 323.0 1292 323.0 1293 323.0 1293 315.2 1294 315.2 1294 315.1 1295 315.1 1295 319.8 1296 319.8 1296 327.3 1297 327.3 1297 323.5 1298 323.5 1298 327.3 1299 327.3 1299 326.7 1300 326.7 1300 325.0 1301 325.0 1301 335.2 1302 335.2 1302 334.3 1303 334.3 1303 336.2 1304 336.2 1304 336.2 1305 336.2 1305 300.2 1306 300.2 1306 324.7 1307 324.7 1307 316.5 1308 316.5 1308 326.0 1309 326.0 1309 299.7 1310 299.7 1310 315.3 1311 315.3 1311 314.6 1312 314.6 1312 319.2 1313 319.2 1313 331.5 1314 331.5 1314 334.3 1315 334.3 1315 324.6 1316 324.6 1316 284.6 1317 284.6 1317 296.2 1318 296.2 1318 332.0 1319 332.0 1319 326.8 1320 326.8 1320 325.4 1321 325.4 1321 333.9 1322 333.9 1322 329.3 1323 329.3 1323 333.0 1324 333.0 1324 284.6 1325 284.6 1325 309.2 1326 309.2 1326 330.6 1327 330.6 1327 332.4 1328 332.4 1328 332.4 1329 332.4 1329 332.7 1330 332.7 1330 334.2 1331 334.2 1331 333.3 1332 333.3 1332 301.6 1333 301.6 1333 311.3 1334 311.3 1334 319.8 1335 319.8 1335 317.1 1336 317.1 1336 318.1 1337 318.1 1337 328.6 1338 328.6 1338 329.6 1339 329.6 1339 321.7 1340 321.7 1340 297.0 1341 297.0 1341 328.3 1342 328.3 1342 307.1 1343 307.1 1343 337.6 1344 337.6 1344 337.9 1345 337.9 1345 306.9 1346 306.9 1346 322.0 1347 322.0 1347 313.3 1348 313.3 1348 292.2 1349 292.2 1349 334.0 1350 334.0 1350 328.2 1351 328.2 1351 332.9 1352 332.9 1352 336.9 1353 336.9 1353 333.8 1354 333.8 1354 327.6 1355 327.6 1355 297.6 1356 297.6 1356 317.3 1357 317.3 1357 319.2 1358 319.2 1358 298.4 1359 298.4 1359 322.6 1360 322.6 1360 320.2 1361 320.2 1361 312.0 1362 312.0 1362 329.2 1363 329.2 1363 296.0 1364 296.0 1364 331.7 1365 331.7 1365 315.6 1366 315.6 1366 311.3 1367 311.3 1367 330.3 1368 330.3 1368 317.4 1369 317.4 1369 330.8 1370 330.8 1370 330.9 1371 330.9 1371 327.3 1372 327.3 1372 332.0 1373 332.0 1373 322.8 1374 322.8 1374 316.5 1375 316.5 1375 329.8 1376 329.8 1376 326.4 1377 326.4 1377 296.7 1378 296.7 1378 317.5 1379 317.5 1379 326.3 1380 326.3 1380 329.8 1381 329.8 1381 320.7 1382 320.7 1382 324.9 1383 324.9 1383 329.2 1384 329.2 1384 328.8 1385 328.8 1385 326.5 1386 326.5 1386 329.2 1387 329.2 1387 307.1 1388 307.1 1388 336.4 1389 336.4 1389 328.4 1390 328.4 1390 334.9 1391 334.9 1391 333.1 1392 333.1 1392 317.1 1393 317.1 1393 304.9 1394 304.9 1394 327.0 1395 327.0 1395 325.2 1396 325.2 1396 330.2 1397 330.2 1397 332.6 1398 332.6 1398 333.1 1399 333.1 1399 337.5 1400 337.5 1400 293.1 1401 293.1 1401 324.4 1402 324.4 1402 319.0 1403 319.0 1403 305.2 1404 305.2 1404 325.9 1405 325.9 1405 318.0 1406 318.0 1406 327.8 1407 327.8 1407 328.9 1408 328.9 1408 329.8 1409 329.8 1409 327.0 1410 327.0 1410 325.8 1411 325.8 1411 315.0 1412 315.0 1412 314.3 1413 314.3 1413 322.5 1414 322.5 1414 333.7 1415 333.7 1415 330.8 1416 330.8 1416 327.1 1417 327.1 1417 317.1 1418 317.1 1418 310.9 1419 310.9 1419 314.8 1420 314.8 1420 324.4 1421 324.4 1421 330.1 1422 330.1 1422 334.7 1423 334.7 1423 299.6 1424 299.6 1424 315.2 1425 315.2 1425 330.4 1426 330.4 1426 326.3 1427 326.3 1427 313.2 1428 313.2 1428 328.5 1429 328.5 1429 304.8 1430 304.8 1430 309.3 1431 309.3 1431 311.0 1432 311.0 1432 329.7 1433 329.7 1433 328.0 1434 328.0 1434 310.4 1435 310.4 1435 311.6 1436 311.6 1436 284.6 1437 284.6 1437 310.3 1438 310.3 1438 325.9 1439 325.9 1439 330.4 1440 330.4 1440 335.9 1441 335.9 1441 325.9 1442 325.9 1442 327.7 1443 327.7 1443 304.5 1444 304.5 1444 327.4 1445 327.4 1445 305.8 1446 305.8 1446 320.5 1447 320.5 1447 315.3 1448 315.3 1448 322.8 1449 322.8 1449 322.5 1450 322.5 1450 329.3 1451 329.3 1451 322.1 1452 322.1 1452 321.4 1453 321.4 1453 284.6 1454 284.6 1454 328.8 1455 328.8 1455 333.5 1456 333.5 1456 331.9 1457 331.9 1457 320.2 1458 320.2 1458 337.9 1459 337.9 1459 325.6 1460 325.6 1460 325.4 1461 325.4 1461 319.7 1462 319.7 1462 329.5 1463 329.5 1463 323.9 1464 323.9 1464 329.3 1465 329.3 1465 330.2 1466 330.2 1466 302.4 1467 302.4 1467 284.6 1468 284.6 1468 286.9 1469 286.9 1469 321.0 1470 321.0 1470 290.9 1471 290.9 1471 302.4 1472 302.4 1472 319.6 1473 319.6 1473 316.2 1474 316.2 1474 327.9 1475 327.9 1475 321.2 1476 321.2 1476 290.1 1477 290.1 1477 319.1 1478 319.1 1478 288.6 1479 288.6 1479 333.4 1480 333.4 1480 329.2 1481 329.2 1481 329.4 1482 329.4 1482 315.2 1483 315.2 1483 318.2 1484 318.2 1484 318.8 1485 318.8 1485 323.1 1486 323.1 1486 318.5 1487 318.5 1487 332.2 1488 332.2 1488 324.8 1489 324.8 1489 334.4 1490 334.4 1490 285.3 1491 285.3 1491 284.6 1492 284.6 1492 308.9 1493 308.9 1493 309.7 1494 309.7 1494 317.5 1495 317.5 1495 323.2 1496 323.2 1496 287.1 1497 287.1 1497 307.1 1498 307.1 1498 310.7 1499 310.7 1499 312.2 1500 312.2 1500 314.7 1501 314.7 1501 329.4 1502 329.4 1502 325.8 1503 325.8 1503 322.6 1504 322.6 1504 329.2 1505 329.2 1505 317.8 1506 317.8 1506 323.3 1507 323.3 1507 326.7 1508 326.7 1508 299.6 1509 299.6 1509 316.4 1510 316.4 1510 313.8 1511 313.8 1511 322.1 1512 322.1 1512 326.7 1513 326.7 1513 288.1 1514 288.1 1514 306.6 1515 306.6 1515 314.6 1516 314.6 1516 328.3 1517 328.3 1517 325.2 1518 325.2 1518 332.8 1519 332.8 1519 324.6 1520 324.6 1520 322.2 1521 322.2 1521 321.5 1522 321.5 1522 314.4 1523 314.4 1523 318.0 1524 318.0 1524 325.6 1525 325.6 1525 324.2 1526 324.2 1526 329.7 1527 329.7 1527 321.0 1528 321.0 1528 315.6 1529 315.6 1529 328.4 1530 328.4 1530 285.7 1531 285.7 1531 307.7 1532 307.7 1532 321.8 1533 321.8 1533 329.2 1534 329.2 1534 321.1 1535 321.1 1535 326.0 1536 326.0 1536 296.2 1537 296.2 1537 311.8 1538 311.8 1538 324.8 1539 324.8 1539 324.6 1540 324.6 1540 325.6 1541 325.6 1541 321.0 1542 321.0 1542 326.7 1543 326.7 1543 319.4 1544 319.4 1544 304.3 1545 304.3 1545 310.1 1546 310.1 1546 324.0 1547 324.0 1547 327.9 1548 327.9 1548 328.0 1549 328.0 1549 319.2 1550 319.2 1550 312.4 1551 312.4 1551 321.7 1552 321.7 1552 316.9 1553 316.9 1553 316.0 1554 316.0 1554 319.5 1555 319.5 1555 320.8 1556 320.8 1556 295.4 1557 295.4 1557 316.4 1558 316.4 1558 297.5 1559 297.5 1559 312.0 1560 312.0 1560 306.8 1561 306.8 1561 325.2 1562 325.2 1562 318.6 1563 318.6 1563 316.1 1564 316.1 1564 316.3 1565 316.3 1565 317.4 1566 317.4 1566 309.2 1567 309.2 1567 320.1 1568 320.1 1568 310.7 1569 310.7 1569 317.4 1570 317.4 1570 315.2 1571 315.2 1571 310.6 1572 310.6 1572 324.1 1573 324.1 1573 327.7 1574 327.7 1574 304.0 1575 304.0 1575 315.5 1576 315.5 1576 328.0 1577 328.0 1577 285.3 1578 285.3 1578 292.8 1579 292.8 1579 312.2 1580 312.2 1580 286.3 1581 286.3 1581 285.3 1582 285.3 1582 284.6 1583 284.6 1583 284.6 1584 284.6 1584 301.6 1585 301.6 1585 321.2 1586 321.2 1586 309.1 1587 309.1 1587 311.5 1588 311.5 1588 311.2 1589 311.2 1589 323.9 1590 323.9 1590 284.6 1591 284.6 1591 298.6 1592 298.6 1592 316.6 1593 316.6 1593 323.0 1594 323.0 1594 310.8 1595 310.8 1595 284.8 1596 284.8 1596 328.1 1597 328.1 1597 318.3 1598 318.3 1598 328.1 1599 328.1 1599 284.6 1600 284.6 1600 302.2 1601 302.2 1601 304.6 1602 304.6 1602 321.2 1603 321.2 1603 285.3 1604 285.3 1604 303.6 1605 303.6 1605 284.6 1606 284.6 1606 319.1 1607 319.1 1607 307.0 1608 307.0 1608 289.2 1609 289.2 1609 302.6 1610 302.6 1610 310.7 1611 310.7 1611 315.6 1612 315.6 1612 317.7 1613 317.7 1613 322.3 1614 322.3 1614 311.1 1615 311.1 1615 328.3 1616 328.3 1616 301.6 1617 301.6 1617 303.1 1618 303.1 1618 300.6 1619 300.6 1619 286.7 1620 286.7 1620 314.3 1621 314.3 1621 305.4 1622 305.4 1622 285.0 1623 285.0 1623 308.6 1624 308.6 1624 284.6 1625 284.6 1625 303.0 1626 303.0 1626 285.3 1627 285.3 1627 284.6 1628 284.6 1628 297.3 1629 297.3 1629 308.0 1630 308.0 1630 284.6 1631 284.6 1631 284.6 1632 284.6 1632 322.0 1633 322.0 1633 320.9 1634 320.9 1634 314.9 1635 314.9 1635 312.3 1636 312.3 1636 284.6 1637 284.6 1637 284.8 1638 284.8 1638 314.2 1639 314.2 1639 312.4 1640 312.4 1640 304.9 1641 304.9 1641 323.8 1642 323.8 1642 325.2 1643 325.2 1643 288.0 1644 288.0 1644 316.1 1645 316.1 1645 293.8 1646 293.8 1646 313.3 1647 313.3 1647 315.6 1648 315.6 1648 317.6 1649 317.6 1649 285.3 1650 285.3 1650 310.6 1651 310.6 1651 293.8 1652 293.8 1652 316.7 1653 316.7 1653 310.1 1654 310.1 1654 284.6 1655 284.6 1655 313.0 1656 313.0 1656 311.9 1657 311.9 1657 284.6 1658 284.6 1658 309.2 1659 309.2 1659 315.6 1660 315.6 1660 309.6 1661 309.6 1661 311.7 1662 311.7 1662 309.3 1663 309.3 1663 315.0 1664 315.0 1664 314.7 1665 314.7 1665 305.7 1666 305.7 1666 323.0 1667 323.0 1667 324.1 1668 324.1 1668 292.2 1669 292.2 1669 298.3 1670 298.3 1670 301.4 1671 301.4 1671 285.3 1672 285.3 1672 308.1 1673 308.1 1673 320.3 1674 320.3 1674 314.8 1675 314.8 1675 323.3 1676 323.3 1676 322.8 1677 322.8 1677 314.7 1678 314.7 1678 335.6 1679 335.6 1679 320.5 1680 320.5 1680 284.6 1681 284.6 1681 332.0 1682 332.0 1682 333.8 1683 333.8 1683 329.9 1684 329.9 1684 314.4 1685 314.4 1685 319.5 1686 319.5 1686 321.6 1687 321.6 1687 329.1 1688 329.1 1688 332.9 1689 332.9 1689 317.4 1690 317.4 1690 332.4 1691 332.4 1691 330.2 1692 330.2 1692 317.8 1693 317.8 1693 325.4 1694 325.4 1694 313.2 1695 313.2 1695 318.2 1696 318.2 1696 327.3 1697 327.3 1697 333.5 1698 333.5 1698 326.8 1699 326.8 1699 337.0 1700 337.0 1700 331.2 1701 331.2 1701 329.5 1702 329.5 1702 336.8 1703 336.8 1703 318.7 1704 318.7 1704 325.8 1705 325.8 1705 326.6 1706 326.6 1706 334.2 1707 334.2 1707 338.7 1708 338.7 1708 328.8 1709 328.8 1709 331.8 1710 331.8 1710 337.2 1711 337.2 1711 328.0 1712 328.0 1712 333.5 1713 333.5 1713 324.6 1714 324.6 1714 335.7 1715 335.7 1715 337.8 1716 337.8 1716 317.3 1717 317.3 1717 317.2 1718 317.2 1718 324.8 1719 324.8 1719 301.1 1720 301.1 1720 329.2 1721 329.2 1721 334.0 1722 334.0 1722 317.8 1723 317.8 1723 332.2 1724 332.2 1724 327.9 1725 327.9 1725 325.9 1726 325.9 1726 336.4 1727 336.4 1727 314.5 1728 314.5 1728 334.5 1729 334.5 1729 336.9 1730 336.9 1730 334.6 1731 334.6 1731 338.2 1732 338.2 1732 332.2 1733 332.2 1733 341.0 1734 341.0 1734 297.6 1735 297.6 1735 328.3 1736 328.3 1736 331.1 1737 331.1 1737 338.0 1738 338.0 1738 332.8 1739 332.8 1739 303.7 1740 303.7 1740 322.8 1741 322.8 1741 331.2 1742 331.2 1742 333.6 1743 333.6 1743 334.7 1744 334.7 1744 333.9 1745 333.9 1745 336.2 1746 336.2 1746 332.0 1747 332.0 1747 299.3 1748 299.3 1748 334.2 1749 334.2 1749 330.1 1750 330.1 1750 328.1 1751 328.1 1751 335.4 1752 335.4 1752 338.2 1753 338.2 1753 330.4 1754 330.4 1754 330.5 1755 330.5 1755 331.3 1756 331.3 1756 328.9 1757 328.9 1757 325.1 1758 325.1 1758 332.6 1759 332.6 1759 333.8 1760 333.8 1760 338.0 1761 338.0 1761 299.5 1762 299.5 1762 305.0 1763 305.0 1763 326.0 1764 326.0 1764 332.6 1765 332.6 1765 331.9 1766 331.9 1766 334.5 1767 334.5 1767 338.6 1768 338.6 1768 336.6 1769 336.6 1769 332.2 1770 332.2 1770 331.5 1771 331.5 1771 334.7 1772 334.7 1772 331.9 1773 331.9 1773 323.0 1774 323.0 1774 295.2 1775 295.2 1775 324.3 1776 324.3 1776 326.4 1777 326.4 1777 335.0 1778 335.0 1778 333.5 1779 333.5 1779 311.1 1780 311.1 1780 335.6 1781 335.6 1781 332.9 1782 332.9 1782 332.2 1783 332.2 1783 333.1 1784 333.1 1784 313.4 1785 313.4 1785 292.9 1786 292.9 1786 331.7 1787 331.7 1787 326.0 1788 326.0 1788 334.9 1789 334.9 1789 338.0 1790 338.0 1790 335.3 1791 335.3 1791 335.6 1792 335.6 1792 319.3 1793 319.3 1793 340.4 1794 340.4 1794 334.6 1795 334.6 1795 333.1 1796 333.1 1796 341.2 1797 341.2 1797 320.6 1798 320.6 1798 325.1 1799 325.1 1799 331.9 1800 331.9 1800 329.7 1801 329.7 1801 337.5 1802 337.5 1802 340.3 1803 340.3 1803 339.8 1804 339.8 1804 324.6 1805 324.6 1805 338.6 1806 338.6 1806 334.0 1807 334.0 1807 292.4 1808 292.4 1808 327.6 1809 327.6 1809 289.1 1810 289.1 1810 329.2 1811 329.2 1811 332.8 1812 332.8 1812 339.4 1813 339.4 1813 338.2 1814 338.2 1814 338.6 1815 338.6 1815 333.3 1816 333.3 1816 339.9 1817 339.9 1817 340.1 1818 340.1 1818 341.6 1819 341.6 1819 333.4 1820 333.4 1820 341.2 1821 341.2 1821 334.3 1822 334.3 1822 339.1 1823 339.1 1823 342.1 1824 342.1 1824 339.0 1825 339.0 1825 341.9 1826 341.9 1826 345.4 1827 345.4 1827 344.0 1828 344.0 1828 341.8 1829 341.8 1829 347.4 1830 347.4 1830 336.7 1831 336.7 1831 345.4 1832 345.4 1832 346.4 1833 346.4 1833 347.1 1834 347.1 1834 346.8 1835 346.8 1835 347.5 1836 347.5 1836 348.2 1837 348.2 1837 350.4 1838 350.4 1838 351.7 1839 351.7 1839 351.1 1840 351.1 1840 351.5 1841 351.5 1841 352.1 1842 352.1 1842 352.5 1843 352.5 1843 352.4 1844 352.4 1844 353.1 1845 353.1 1845 353.3 1846 353.3 1846 353.5 1847 353.5 1847 353.7 1848 353.7 1848 353.7 1849 353.7 1849 353.9 1850 353.9 1850 353.9 1851 353.9 1851 353.9 1852 353.9 1852 353.9 1853 353.9 1853 353.9 1854 353.9 1854 353.9 1855 353.9 1855 353.9 1856 353.9 1856 353.9 1857 353.9 1857 353.9 1858 353.9 1858 353.9 1859 353.9 1859 353.9 1860 353.9 1860 353.9 1861 353.9 1861 353.9 1862 353.9 1862 353.9 1863 353.9 1863 353.9 1864 353.9 1864 353.9 1865 353.9 1865 353.9 1866 353.9 1866 353.9 1867 353.9 1867 353.9 1868 353.9 1868 353.9 1869 353.9 1869 353.9 1870 353.9 1870 353.9 1871 353.9 1871 353.9 1872 353.9 1872 353.9 1873 353.9 1873 353.9 1874 353.9 1874 353.9 1875 353.9 1875 353.9 1876 353.9 1876 353.9 1877 353.9 1877 353.9 1878 353.9 1878 353.9 1879 353.9 1879 353.9 1880 353.9 1880 353.9 1881 353.9 1881 353.9 1882 353.9 1882 353.9 1883 353.9 1883 353.9 1884 353.9 1884 353.9 1885 353.9 1885 353.9 1886 353.9 1886 353.9 1887 353.9 1887 353.9 1888 353.9 1888 353.9 1889 353.9 1889 355.1 1888 355.1 1888 355.1 1887 355.1 1887 355.1 1886 355.1 1886 355.1 1885 355.1 1885 355.1 1884 355.1 1884 355.1 1883 355.1 1883 355.1 1882 355.1 1882 355.1 1881 355.1 1881 355.1 1880 355.1 1880 355.1 1879 355.1 1879 355.1 1878 355.1 1878 355.1 1877 355.1 1877 355.1 1876 355.1 1876 355.1 1875 355.1 1875 355.1 1874 355.1 1874 355.1 1873 355.1 1873 355.1 1872 355.1 1872 355.1 1871 355.1 1871 355.1 1870 355.1 1870 355.1 1869 355.1 1869 355.1 1868 355.1 1868 355.1 1867 355.1 1867 355.1 1866 355.1 1866 355.1 1865 355.1 1865 355.1 1864 355.1 1864 355.1 1863 355.1 1863 355.1 1862 355.1 1862 355.1 1861 355.1 1861 355.1 1860 355.1 1860 355.1 1859 355.1 1859 355.1 1858 355.1 1858 355.1 1857 355.1 1857 355.1 1856 355.1 1856 355.1 1855 355.1 1855 355.1 1854 355.1 1854 355.1 1853 355.1 1853 355.1 1852 355.1 1852 355.1 1851 355.1 1851 355.1 1850 355.1 1850 355.1 1849 355.1 1849 355.3 1848 355.3 1848 355.3 1847 355.3 1847 355.5 1846 355.5 1846 356.2 1845 356.2 1845 355.9 1844 355.9 1844 356.3 1843 356.3 1843 356.7 1842 356.7 1842 357.0 1841 357.0 1841 356.9 1840 356.9 1840 357.3 1839 357.3 1839 362.3 1838 362.3 1838 364.2 1837 364.2 1837 358.4 1836 358.4 1836 361.2 1835 361.2 1835 364.6 1834 364.6 1834 359.2 1833 359.2 1833 362.1 1832 362.1 1832 363.8 1831 363.8 1831 373.9 1830 373.9 1830 363.7 1829 363.7 1829 363.8 1828 363.8 1828 370.9 1827 370.9 1827 365.8 1826 365.8 1826 369.2 1825 369.2 1825 370.6 1824 370.6 1824 364.5 1823 364.5 1823 363.6 1822 363.6 1822 368.7 1821 368.7 1821 368.8 1820 368.8 1820 399.6 1819 399.6 1819 369.9 1818 369.9 1818 371.3 1817 371.3 1817 370.1 1816 370.1 1816 371.8 1815 371.8 1815 370.7 1814 370.7 1814 367.5 1813 367.5 1813 374.1 1812 374.1 1812 375.2 1811 375.2 1811 374.4 1810 374.4 1810 376.7 1809 376.7 1809 390.5 1808 390.5 1808 402.2 1807 402.2 1807 397.7 1806 397.7 1806 367.9 1805 367.9 1805 374.2 1804 374.2 1804 372.3 1803 372.3 1803 374.8 1802 374.8 1802 376.7 1801 376.7 1801 371.1 1800 371.1 1800 381.0 1799 381.0 1799 376.1 1798 376.1 1798 376.5 1797 376.5 1797 375.9 1796 375.9 1796 368.5 1795 368.5 1795 370.0 1794 370.0 1794 368.8 1793 368.8 1793 369.0 1792 369.0 1792 376.0 1791 376.0 1791 376.5 1790 376.5 1790 381.2 1789 381.2 1789 379.5 1788 379.5 1788 378.2 1787 378.2 1787 388.2 1786 388.2 1786 393.0 1785 393.0 1785 391.7 1784 391.7 1784 369.7 1783 369.7 1783 374.0 1782 374.0 1782 373.2 1781 373.2 1781 368.9 1780 368.9 1780 372.4 1779 372.4 1779 370.2 1778 370.2 1778 373.3 1777 373.3 1777 372.4 1776 372.4 1776 376.3 1775 376.3 1775 383.0 1774 383.0 1774 385.7 1773 385.7 1773 373.9 1772 373.9 1772 376.5 1771 376.5 1771 388.4 1770 388.4 1770 376.5 1769 376.5 1769 377.9 1768 377.9 1768 374.7 1767 374.7 1767 391.1 1766 391.1 1766 374.8 1765 374.8 1765 374.8 1764 374.8 1764 391.0 1763 391.0 1763 397.1 1762 397.1 1762 392.0 1761 392.0 1761 373.5 1760 373.5 1760 375.1 1759 375.1 1759 385.0 1758 385.0 1758 382.3 1757 382.3 1757 382.6 1756 382.6 1756 378.3 1755 378.3 1755 375.8 1754 375.8 1754 382.1 1753 382.1 1753 373.1 1752 373.1 1752 374.6 1751 374.6 1751 377.4 1750 377.4 1750 406.3 1749 406.3 1749 384.7 1748 384.7 1748 388.4 1747 388.4 1747 375.6 1746 375.6 1746 373.6 1745 373.6 1745 377.3 1744 377.3 1744 372.5 1743 372.5 1743 376.5 1742 376.5 1742 378.8 1741 378.8 1741 387.0 1740 387.0 1740 401.3 1739 401.3 1739 371.6 1738 371.6 1738 370.2 1737 370.2 1737 378.7 1736 378.7 1736 377.3 1735 377.3 1735 385.9 1734 385.9 1734 369.7 1733 369.7 1733 376.8 1732 376.8 1732 370.0 1731 370.0 1731 376.2 1730 376.2 1730 376.6 1729 376.6 1729 378.0 1728 378.0 1728 370.9 1727 370.9 1727 378.9 1726 378.9 1726 378.0 1725 378.0 1725 379.2 1724 379.2 1724 413.0 1723 413.0 1723 383.7 1722 383.7 1722 380.9 1721 380.9 1721 378.4 1720 378.4 1720 380.2 1719 380.2 1719 377.0 1718 377.0 1718 392.3 1717 392.3 1717 391.5 1716 391.5 1716 370.5 1715 370.5 1715 376.5 1714 376.5 1714 377.8 1713 377.8 1713 382.1 1712 382.1 1712 390.6 1711 390.6 1711 374.7 1710 374.7 1710 385.3 1709 385.3 1709 378.6 1708 378.6 1708 411.4 1707 411.4 1707 377.5 1706 377.5 1706 381.4 1705 381.4 1705 379.3 1704 379.3 1704 382.9 1703 382.9 1703 379.1 1702 379.1 1702 376.6 1701 376.6 1701 380.2 1700 380.2 1700 407.8 1699 407.8 1699 378.5 1698 378.5 1698 377.9 1697 377.9 1697 388.4 1696 388.4 1696 391.4 1695 391.4 1695 394.4 1694 394.4 1694 400.1 1693 400.1 1693 387.0 1692 387.0 1692 372.9 1691 372.9 1691 370.7 1690 370.7 1690 375.5 1689 375.5 1689 373.7 1688 373.7 1688 380.8 1687 380.8 1687 379.2 1686 379.2 1686 381.0 1685 381.0 1685 396.7 1684 396.7 1684 381.1 1683 381.1 1683 381.2 1682 381.2 1682 385.6 1681 385.6 1681 382.9 1680 382.9 1680 393.4 1679 393.4 1679 374.3 1678 374.3 1678 375.0 1677 375.0 1677 382.5 1676 382.5 1676 386.4 1675 386.4 1675 381.2 1674 381.2 1674 424.4 1673 424.4 1673 389.8 1672 389.8 1672 423.7 1671 423.7 1671 418.7 1670 418.7 1670 402.7 1669 402.7 1669 382.8 1668 382.8 1668 421.5 1667 421.5 1667 405.2 1666 405.2 1666 392.6 1665 392.6 1665 393.3 1664 393.3 1664 424.4 1663 424.4 1663 388.7 1662 388.7 1662 398.9 1661 398.9 1661 391.2 1660 391.2 1660 392.8 1659 392.8 1659 405.1 1658 405.1 1658 424.4 1657 424.4 1657 391.7 1656 391.7 1656 390.2 1655 390.2 1655 399.8 1654 399.8 1654 397.6 1653 397.6 1653 402.7 1652 402.7 1652 407.7 1651 407.7 1651 424.4 1650 424.4 1650 423.7 1649 423.7 1649 403.9 1648 403.9 1648 392.7 1647 392.7 1647 416.0 1646 416.0 1646 398.5 1645 398.5 1645 382.1 1644 382.1 1644 386.1 1643 386.1 1643 424.4 1642 424.4 1642 393.2 1641 393.2 1641 394.4 1640 394.4 1640 424.4 1639 424.4 1639 416.9 1638 416.9 1638 407.3 1637 407.3 1637 406.3 1636 406.3 1636 388.0 1635 388.0 1635 392.2 1634 392.2 1634 389.4 1633 389.4 1633 388.4 1632 388.4 1632 404.4 1631 404.4 1631 393.1 1630 393.1 1630 424.4 1629 424.4 1629 397.9 1628 397.9 1628 424.4 1627 424.4 1627 423.7 1626 423.7 1626 410.1 1625 410.1 1625 392.9 1624 392.9 1624 424.4 1623 424.4 1623 416.6 1622 416.6 1622 424.4 1621 424.4 1621 398.9 1620 398.9 1620 396.7 1619 396.7 1619 393.7 1618 393.7 1618 424.4 1617 424.4 1617 388.0 1616 388.0 1616 424.4 1615 424.4 1615 391.4 1614 391.4 1614 400.9 1613 400.9 1613 424.4 1612 424.4 1612 388.7 1611 388.7 1611 394.7 1610 394.7 1610 408.3 1609 408.3 1609 424.4 1608 424.4 1608 402.6 1607 402.6 1607 396.8 1606 396.8 1606 401.5 1605 401.5 1605 424.4 1604 424.4 1604 423.7 1603 423.7 1603 408.8 1602 408.8 1602 411.7 1601 411.7 1601 410.9 1600 410.9 1600 394.7 1599 394.7 1599 396.6 1598 396.6 1598 380.6 1597 380.6 1597 384.6 1596 384.6 1596 394.7 1595 394.7 1595 392.7 1594 392.7 1594 388.7 1593 388.7 1593 396.3 1592 396.3 1592 396.4 1591 396.4 1591 418.4 1590 418.4 1590 381.3 1589 381.3 1589 397.0 1588 397.0 1588 397.0 1587 397.0 1587 391.8 1586 391.8 1586 387.0 1585 387.0 1585 410.6 1584 410.6 1584 407.8 1583 407.8 1583 413.9 1582 413.9 1582 423.7 1581 423.7 1581 424.4 1580 424.4 1580 404.1 1579 404.1 1579 409.5 1578 409.5 1578 424.4 1577 424.4 1577 395.9 1576 395.9 1576 384.5 1575 384.5 1575 391.1 1574 391.1 1574 405.1 1573 405.1 1573 381.3 1572 381.3 1572 396.6 1571 396.6 1571 387.8 1570 387.8 1570 402.4 1569 402.4 1569 388.4 1568 388.4 1568 392.5 1567 392.5 1567 402.3 1566 402.3 1566 387.4 1565 387.4 1565 381.0 1564 381.0 1564 382.3 1563 382.3 1563 393.3 1562 393.3 1562 393.6 1561 393.6 1561 397.4 1560 397.4 1560 390.6 1559 390.6 1559 414.4 1558 414.4 1558 386.3 1557 386.3 1557 404.1 1556 404.1 1556 386.2 1555 386.2 1555 382.1 1554 382.1 1554 384.3 1553 384.3 1553 424.4 1552 424.4 1552 397.8 1551 397.8 1551 404.7 1550 404.7 1550 384.9 1549 384.9 1549 380.3 1548 380.3 1548 394.0 1547 394.0 1547 391.7 1546 391.7 1546 424.4 1545 424.4 1545 404.9 1544 404.9 1544 424.4 1543 424.4 1543 377.6 1542 377.6 1542 391.0 1541 391.0 1541 389.8 1540 389.8 1540 383.8 1539 383.8 1539 386.0 1538 386.0 1538 397.7 1537 397.7 1537 411.0 1536 411.0 1536 383.9 1535 383.9 1535 380.0 1534 380.0 1534 382.7 1533 382.7 1533 389.2 1532 389.2 1532 399.2 1531 399.2 1531 389.1 1530 389.1 1530 388.4 1529 388.4 1529 398.8 1528 398.8 1528 391.8 1527 391.8 1527 381.3 1526 381.3 1526 382.6 1525 382.6 1525 387.8 1524 387.8 1524 380.0 1523 380.0 1523 389.3 1522 389.3 1522 383.3 1521 383.3 1521 395.3 1520 395.3 1520 394.5 1519 394.5 1519 389.9 1518 389.9 1518 389.2 1517 389.2 1517 390.5 1516 390.5 1516 394.4 1515 394.4 1515 414.7 1514 414.7 1514 419.9 1513 419.9 1513 382.9 1512 382.9 1512 395.2 1511 395.2 1511 391.9 1510 391.9 1510 424.4 1509 424.4 1509 410.7 1508 410.7 1508 375.6 1507 375.6 1507 408.5 1506 408.5 1506 383.5 1505 383.5 1505 388.3 1504 388.3 1504 388.3 1503 388.3 1503 383.3 1502 383.3 1502 383.2 1501 383.2 1501 389.8 1500 389.8 1500 410.6 1499 410.6 1499 391.8 1498 391.8 1498 376.2 1497 376.2 1497 384.0 1496 384.0 1496 390.8 1495 390.8 1495 382.5 1494 382.5 1494 397.0 1493 397.0 1493 404.0 1492 404.0 1492 415.5 1491 415.5 1491 419.3 1490 419.3 1490 377.3 1489 377.3 1489 381.5 1488 381.5 1488 381.6 1487 381.6 1487 389.7 1486 389.7 1486 391.1 1485 391.1 1485 393.3 1484 393.3 1484 422.2 1483 422.2 1483 386.6 1482 386.6 1482 385.7 1481 385.7 1481 380.5 1480 380.5 1480 375.8 1479 375.8 1479 379.8 1478 379.8 1478 383.1 1477 383.1 1477 384.3 1476 384.3 1476 381.1 1475 381.1 1475 386.9 1474 386.9 1474 386.6 1473 386.6 1473 406.2 1472 406.2 1472 407.2 1471 407.2 1471 390.3 1470 390.3 1470 390.4 1469 390.4 1469 414.1 1468 414.1 1468 385.1 1467 385.1 1467 389.2 1466 389.2 1466 375.1 1465 375.1 1465 377.5 1464 377.5 1464 376.7 1463 376.7 1463 382.5 1462 382.5 1462 385.2 1461 385.2 1461 386.4 1460 386.4 1460 424.4 1459 424.4 1459 371.3 1458 371.3 1458 376.8 1457 376.8 1457 378.3 1456 378.3 1456 382.8 1455 382.8 1455 373.9 1454 373.9 1454 379.6 1453 379.6 1453 381.4 1452 381.4 1452 391.3 1451 391.3 1451 405.1 1450 405.1 1450 422.0 1449 422.0 1449 405.2 1448 405.2 1448 384.8 1447 384.8 1447 392.0 1446 392.0 1446 398.9 1445 398.9 1445 386.7 1444 386.7 1444 386.2 1443 386.2 1443 378.0 1442 378.0 1442 378.8 1441 378.8 1441 377.6 1440 377.6 1440 378.6 1439 378.6 1439 398.1 1438 398.1 1438 377.6 1437 377.6 1437 383.5 1436 383.5 1436 393.3 1435 393.3 1435 408.2 1434 408.2 1434 390.1 1433 390.1 1433 384.6 1432 384.6 1432 383.6 1431 383.6 1431 388.8 1430 388.8 1430 374.4 1429 374.4 1429 384.7 1428 384.7 1428 374.5 1427 374.5 1427 381.7 1426 381.7 1426 391.0 1425 391.0 1425 398.9 1424 398.9 1424 405.4 1423 405.4 1423 380.1 1422 380.1 1422 377.9 1421 377.9 1421 385.9 1420 385.9 1420 386.7 1419 386.7 1419 406.0 1418 406.0 1418 372.5 1417 372.5 1417 377.9 1416 377.9 1416 385.7 1415 385.7 1415 382.1 1414 382.1 1414 388.9 1413 388.9 1413 382.8 1412 382.8 1412 393.9 1411 393.9 1411 376.2 1410 376.2 1410 392.7 1409 392.7 1409 382.7 1408 382.7 1408 375.7 1407 375.7 1407 409.8 1406 409.8 1406 380.4 1405 380.4 1405 384.9 1404 384.9 1404 406.9 1403 406.9 1403 386.9 1402 386.9 1402 423.7 1401 423.7 1401 399.0 1400 399.0 1400 381.5 1399 381.5 1399 381.1 1398 381.1 1398 409.1 1397 409.1 1397 383.1 1396 383.1 1396 374.9 1395 374.9 1395 375.0 1394 375.0 1394 381.1 1393 381.1 1393 380.7 1392 380.7 1392 379.1 1391 379.1 1391 375.4 1390 375.4 1390 393.0 1389 393.0 1389 377.2 1388 377.2 1388 377.9 1387 377.9 1387 383.2 1386 383.2 1386 382.1 1385 382.1 1385 374.0 1384 374.0 1384 384.9 1383 384.9 1383 376.1 1382 376.1 1382 386.4 1381 386.4 1381 390.1 1380 390.1 1380 380.4 1379 380.4 1379 386.6 1378 386.6 1378 403.1 1377 403.1 1377 382.1 1376 382.1 1376 382.3 1375 382.3 1375 389.1 1374 389.1 1374 394.1 1373 394.1 1373 382.5 1372 382.5 1372 385.3 1371 385.3 1371 383.0 1370 383.0 1370 389.2 1369 389.2 1369 381.1 1368 381.1 1368 376.1 1367 376.1 1367 376.0 1366 376.0 1366 424.4 1365 424.4 1365 400.9 1364 400.9 1364 383.4 1363 383.4 1363 403.2 1362 403.2 1362 375.3 1361 375.3 1361 382.6 1360 382.6 1360 384.3 1359 384.3 1359 386.4 1358 386.4 1358 393.5 1357 393.5 1357 401.6 1356 401.6 1356 401.2 1355 401.2 1355 410.2 1354 410.2 1354 381.9 1353 381.9 1353 377.8 1352 377.8 1352 375.2 1351 375.2 1351 374.6 1350 374.6 1350 381.9 1349 381.9 1349 416.5 1348 416.5 1348 389.2 1347 389.2 1347 390.8 1346 390.8 1346 392.3 1345 392.3 1345 375.2 1344 375.2 1344 373.4 1343 373.4 1343 379.4 1342 379.4 1342 397.1 1341 397.1 1341 377.0 1340 377.0 1340 389.2 1339 389.2 1339 381.7 1338 381.7 1338 390.6 1337 390.6 1337 393.5 1336 393.5 1336 386.8 1335 386.8 1335 394.1 1334 394.1 1334 387.2 1333 387.2 1333 406.8 1332 406.8 1332 372.6 1331 372.6 1331 384.2 1330 384.2 1330 374.1 1329 374.1 1329 375.2 1328 375.2 1328 378.1 1327 378.1 1327 389.8 1326 389.8 1326 394.8 1325 394.8 1325 424.4 1324 424.4 1324 371.4 1323 371.4 1323 385.8 1322 385.8 1322 382.7 1321 382.7 1321 373.6 1320 373.6 1320 379.7 1319 379.7 1319 385.7 1318 385.7 1318 393.7 1317 393.7 1317 382.9 1316 382.9 1316 381.4 1315 381.4 1315 376.6 1314 376.6 1314 378.7 1313 378.7 1313 383.7 1312 383.7 1312 390.8 1311 390.8 1311 400.0 1310 400.0 1310 415.1 1309 415.1 1309 388.0 1308 388.0 1308 388.2 1307 388.2 1307 396.2 1306 396.2 1306 397.8 1305 397.8 1305 380.5 1304 380.5 1304 370.9 1303 370.9 1303 378.9 1302 378.9 1302 375.9 1301 375.9 1301 378.3 1300 378.3 1300 383.7 1299 383.7 1299 385.3 1298 385.3 1298 409.3 1297 409.3 1297 384.7 1296 384.7 1296 377.7 1295 377.7 1295 385.9 1294 385.9 1294 394.1 1293 394.1 1293 375.7 1292 375.7 1292 375.9 1291 375.9 1291 379.7 1290 379.7 1290 382.9 1289 382.9 1289 397.2 1288 397.2 1288 411.0 1287 411.0 1287 399.1 1286 399.1 1286 373.3 1285 373.3 1285 380.4 1284 380.4 1284 395.3 1283 395.3 1283 384.4 1282 384.4 1282 377.4 1281 377.4 1281 385.2 1280 385.2 1280 380.1 1279 380.1 1279 377.0 1278 377.0 1278 384.5 1277 384.5 1277 377.7 1276 377.7 1276 375.8 1275 375.8 1275 375.5 1274 375.5 1274 388.1 1273 388.1 1273 380.1 1272 380.1 1272 386.1 1271 386.1 1271 379.1 1270 379.1 1270 386.2 1269 386.2 1269 401.3 1268 401.3 1268 381.8 1267 381.8 1267 424.4 1266 424.4 1266 391.8 1265 391.8 1265 409.3 1264 409.3 1264 407.5 1263 407.5 1263 385.8 1262 385.8 1262 381.1 1261 381.1 1261 408.4 1260 408.4 1260 377.1 1259 377.1 1259 380.6 1258 380.6 1258 384.9 1257 384.9 1257 380.1 1256 380.1 1256 386.3 1255 386.3 1255 378.6 1254 378.6 1254 388.8 1253 388.8 1253 389.0 1252 389.0 1252 383.7 1251 383.7 1251 374.8 1250 374.8 1250 383.8 1249 383.8 1249 381.2 1248 381.2 1248 387.3 1247 387.3 1247 402.0 1246 402.0 1246 390.4 1245 390.4 1245 390.1 1244 390.1 1244 387.7 1243 387.7 1243 407.1 1242 407.1 1242 394.1 1241 394.1 1241 393.2 1240 393.2 1240 403.3 1239 403.3 1239 386.9 1238 386.9 1238 398.6 1237 398.6 1237 395.8 1236 395.8 1236 381.8 1235 381.8 1235 388.9 1234 388.9 1234 398.6 1233 398.6 1233 387.3 1232 387.3 1232 384.5 1231 384.5 1231 387.9 1230 387.9 1230 423.5 1229 423.5 1229 390.9 1228 390.9 1228 400.0 1227 400.0 1227 384.3 1226 384.3 1226 378.2 1225 378.2 1225 377.3 1224 377.3 1224 376.9 1223 376.9 1223 386.9 1222 386.9 1222 386.3 1221 386.3 1221 396.2 1220 396.2 1220 411.9 1219 411.9 1219 378.2 1218 378.2 1218 402.1 1217 402.1 1217 387.5 1216 387.5 1216 389.3 1215 389.3 1215 390.3 1214 390.3 1214 375.7 1213 375.7 1213 387.0 1212 387.0 1212 395.9 1211 395.9 1211 392.0 1210 392.0 1210 412.4 1209 412.4 1209 374.1 1208 374.1 1208 377.4 1207 377.4 1207 386.0 1206 386.0 1206 379.4 1205 379.4 1205 389.9 1204 389.9 1204 424.4 1203 424.4 1203 376.6 1202 376.6 1202 377.0 1201 377.0 1201 382.4 1200 382.4 1200 388.6 1199 388.6 1199 406.4 1198 406.4 1198 396.7 1197 396.7 1197 401.2 1196 401.2 1196 378.7 1195 378.7 1195 378.5 1194 378.5 1194 382.1 1193 382.1 1193 405.4 1192 405.4 1192 383.4 1191 383.4 1191 378.2 1190 378.2 1190 381.7 1189 381.7 1189 394.5 1188 394.5 1188 387.5 1187 387.5 1187 380.1 1186 380.1 1186 384.4 1185 384.4 1185 394.0 1184 394.0 1184 392.7 1183 392.7 1183 392.9 1182 392.9 1182 383.9 1181 383.9 1181 380.3 1180 380.3 1180 386.5 1179 386.5 1179 381.6 1178 381.6 1178 391.1 1177 391.1 1177 392.0 1176 392.0 1176 396.2 1175 396.2 1175 402.3 1174 402.3 1174 379.8 1173 379.8 1173 417.6 1172 417.6 1172 386.9 1171 386.9 1171 379.6 1170 379.6 1170 397.7 1169 397.7 1169 397.9 1168 397.9 1168 381.0 1167 381.0 1167 384.1 1166 384.1 1166 389.6 1165 389.6 1165 384.0 1164 384.0 1164 373.3 1163 373.3 1163 383.6 1162 383.6 1162 380.7 1161 380.7 1161 377.0 1160 377.0 1160 391.4 1159 391.4 1159 376.8 1158 376.8 1158 385.5 1157 385.5 1157 388.5 1156 388.5 1156 388.2 1155 388.2 1155 389.7 1154 389.7 1154 383.6 1153 383.6 1153 383.9 1152 383.9 1152 403.1 1151 403.1 1151 406.0 1150 406.0 1150 385.5 1149 385.5 1149 380.9 1148 380.9 1148 388.3 1147 388.3 1147 382.0 1146 382.0 1146 389.9 1145 389.9 1145 395.5 1144 395.5 1144 391.7 1143 391.7 1143 391.0 1142 391.0 1142 424.4 1141 424.4 1141 400.2 1140 400.2 1140 402.4 1139 402.4 1139 373.2 1138 373.2 1138 395.4 1137 395.4 1137 381.9 1136 381.9 1136 386.0 1135 386.0 1135 383.4 1134 383.4 1134 388.4 1133 388.4 1133 397.9 1132 397.9 1132 387.1 1131 387.1 1131 383.3 1130 383.3 1130 393.2 1129 393.2 1129 413.2 1128 413.2 1128 386.8 1127 386.8 1127 390.9 1126 390.9 1126 363.7 1125 363.7 1125 356.5 1124 356.5 1124 357.9 1123 357.9 1123 359.6 1122 359.6 1122 360.8 1121 360.8 1121 365.4 1120 365.4 1120 376.2 1119 376.2 1119 376.0 1118 376.0 1118 384.2 1117 384.2 1117 388.6 1116 388.6 1116 390.5 1115 390.5 1115 401.1 1114 401.1 1114 402.9 1113 402.9 1113 396.8 1112 396.8 1112 398.3 1111 398.3 1111 424.4 1110 424.4 1110 403.4 1109 403.4 1109 405.0 1108 405.0 1108 402.5 1107 402.5 1107 423.7 1106 423.7 1106 390.1 1105 390.1 1105 385.4 1104 385.4 1104 403.5 1103 403.5 1103 424.4 1102 424.4 1102 395.7 1101 395.7 1101 413.8 1100 413.8 1100 394.6 1099 394.6 1099 386.6 1098 386.6 1098 389.4 1097 389.4 1097 424.4 1096 424.4 1096 398.8 1095 398.8 1095 403.5 1094 403.5 1094 398.5 1093 398.5 1093 405.1 1092 405.1 1092 424.4 1091 424.4 1091 424.4 1090 424.4 1090 383.9 1089 383.9 1089 424.4 1088 424.4 1088 402.9 1087 402.9 1087 391.7 1086 391.7 1086 391.5 1085 391.5 1085 420.1 1084 420.1 1084 423.7 1083 423.7 1083 424.4 1082 424.4 1082 390.4 1081 390.4 1081 420.8 1080 420.8 1080 389.5 1079 389.5 1079 390.1 1078 390.1 1078 390.5 1077 390.5 1077 405.3 1076 405.3 1076 415.5 1075 415.5 1075 390.3 1074 390.3 1074 407.7 1073 407.7 1073 408.7 1072 408.7 1072 406.9 1071 406.9 1071 418.5 1070 418.5 1070 389.3 1069 389.3 1069 382.7 1068 382.7 1068 382.9 1067 382.9 1067 392.4 1066 392.4 1066 400.6 1065 400.6 1065 408.1 1064 408.1 1064 394.3 1063 394.3 1063 406.3 1062 406.3 1062 423.7 1061 423.7 1061 399.9 1060 399.9 1060 424.4 1059 424.4 1059 412.2 1058 412.2 1058 388.9 1057 388.9 1057 387.2 1056 387.2 1056 398.1 1055 398.1 1055 403.3 1054 403.3 1054 393.3 1053 393.3 1053 413.8 1052 413.8 1052 424.4 1051 424.4 1051 424.4 1050 424.4 1050 400.4 1049 400.4 1049 413.5 1048 413.5 1048 407.5 1047 407.5 1047 407.2 1046 407.2 1046 424.4 1045 424.4 1045 401.1 1044 401.1 1044 390.6 1043 390.6 1043 406.7 1042 406.7 1042 404.3 1041 404.3 1041 392.0 1040 392.0 1040 399.1 1039 399.1 1039 423.7 1038 423.7 1038 391.7 1037 391.7 1037 385.5 1036 385.5 1036 424.4 1035 424.4 1035 411.6 1034 411.6 1034 413.4 1033 413.4 1033 424.4 1032 424.4 1032 399.6 1031 399.6 1031 406.7 1030 406.7 1030 424.4 1029 424.4 1029 424.4 1028 424.4 1028 409.9 1027 409.9 1027 413.8 1026 413.8 1026 395.7 1025 395.7 1025 395.0 1024 395.0 1024 385.3 1023 385.3 1023 399.2 1022 399.2 1022 397.9 1021 397.9 1021 396.3 1020 396.3 1020 412.0 1019 412.0 1019 387.6 1018 387.6 1018 406.9 1017 406.9 1017 411.0 1016 411.0 1016 423.7 1015 423.7 1015 410.7 1014 410.7 1014 388.4 1013 388.4 1013 392.2 1012 392.2 1012 421.5 1011 421.5 1011 423.5 1010 423.5 1010 390.9 1009 390.9 1009 402.9 1008 402.9 1008 410.1 1007 410.1 1007 377.3 1006 377.3 1006 373.4 1005 373.4 1005 372.0 1004 372.0 1004 374.8 1003 374.8 1003 377.3 1002 377.3 1002 374.3 1001 374.3 1001 382.8 1000 382.8 1000 375.5 999 375.5 999 390.7 998 390.7 998 381.2 997 381.2 997 386.0 996 386.0 996 390.9 995 390.9 995 389.8 994 389.8 994 398.5 993 398.5 993 372.9 992 372.9 992 377.3 991 377.3 991 372.5 990 372.5 990 407.6 989 407.6 989 374.0 988 374.0 988 372.6 987 372.6 987 372.9 986 372.9 986 387.5 985 387.5 985 373.9 984 373.9 984 374.1 983 374.1 983 376.9 982 376.9 982 372.8 981 372.8 981 376.8 980 376.8 980 374.0 979 374.0 979 381.5 978 381.5 978 375.1 977 375.1 977 385.0 976 385.0 976 385.5 975 385.5 975 376.4 974 376.4 974 414.2 973 414.2 973 378.0 972 378.0 972 408.5 971 408.5 971 411.7 970 411.7 970 380.4 969 380.4 969 402.3 968 402.3 968 383.3 967 383.3 967 392.0 966 392.0 966 379.0 965 379.0 965 395.1 964 395.1 964 400.6 963 400.6 963 384.5 962 384.5 962 380.5 961 380.5 961 374.9 960 374.9 960 378.0 959 378.0 959 381.6 958 381.6 958 385.0 957 385.0 957 380.8 956 380.8 956 391.8 955 391.8 955 381.6 954 381.6 954 389.4 953 389.4 953 406.6 952 406.6 952 399.4 951 399.4 951 397.2 950 397.2 950 396.7 949 396.7 949 390.7 948 390.7 948 412.2 947 412.2 947 384.0 946 384.0 946 384.3 945 384.3 945 375.8 944 375.8 944 382.7 943 382.7 943 384.7 942 384.7 942 385.7 941 385.7 941 399.7 940 399.7 940 395.7 939 395.7 939 407.5 938 407.5 938 387.3 937 387.3 937 377.8 936 377.8 936 381.4 935 381.4 935 379.9 934 379.9 934 375.9 933 375.9 933 386.1 932 386.1 932 382.2 931 382.2 931 385.3 930 385.3 930 383.0 929 383.0 929 412.4 928 412.4 928 400.2 927 400.2 927 402.8 926 402.8 926 412.1 925 412.1 925 424.4 924 424.4 924 395.3 923 395.3 923 417.1 922 417.1 922 378.7 921 378.7 921 391.7 920 391.7 920 396.8 919 396.8 919 390.9 918 390.9 918 388.7 917 388.7 917 414.1 916 414.1 916 382.6 915 382.6 915 392.0 914 392.0 914 392.4 913 392.4 913 386.9 912 386.9 912 405.8 911 405.8 911 424.4 910 424.4 910 387.5 909 387.5 909 390.7 908 390.7 908 400.2 907 400.2 907 401.5 906 401.5 906 393.5 905 393.5 905 403.7 904 403.7 904 402.2 903 402.2 903 411.9 902 411.9 902 384.8 901 384.8 901 378.8 900 378.8 900 382.2 899 382.2 899 401.4 898 401.4 898 380.1 897 380.1 897 378.7 896 378.7 896 388.9 895 388.9 895 380.9 894 380.9 894 385.5 893 385.5 893 393.2 892 393.2 892 383.1 891 383.1 891 392.6 890 392.6 890 373.1 889 373.1 889 374.3 888 374.3 888 374.2 887 374.2 887 376.7 886 376.7 886 378.1 885 378.1 885 378.4 884 378.4 884 381.8 883 381.8 883 384.5 882 384.5 882 380.4 881 380.4 881 395.7 880 395.7 880 372.7 879 372.7 879 373.3 878 373.3 878 381.9 877 381.9 877 386.5 876 386.5 876 377.1 875 377.1 875 379.0 874 379.0 874 379.3 873 379.3 873 386.0 872 386.0 872 413.9 871 413.9 871 370.5 870 370.5 870 373.8 869 373.8 869 371.0 868 371.0 868 372.5 867 372.5 867 373.9 866 373.9 866 370.5 865 370.5 865 376.7 864 376.7 864 377.2 863 377.2 863 381.1 862 381.1 862 383.3 861 383.3 861 391.0 860 391.0 860 386.6 859 386.6 859 391.7 858 391.7 858 399.0 857 399.0 857 376.3 856 376.3 856 373.5 855 373.5 855 381.4 854 381.4 854 399.4 853 399.4 853 384.1 852 384.1 852 385.4 851 385.4 851 385.3 850 385.3 850 375.6 849 375.6 849 374.8 848 374.8 848 375.1 847 375.1 847 387.2 846 387.2 846 386.9 845 386.9 845 393.6 844 393.6 844 368.7 843 368.7 843 387.4 842 387.4 842 372.5 841 372.5 841 369.6 840 369.6 840 381.4 839 381.4 839 375.7 838 375.7 838 381.6 837 381.6 837 399.2 836 399.2 836 392.2 835 392.2 835 400.2 834 400.2 834 372.4 833 372.4 833 379.4 832 379.4 832 379.2 831 379.2 831 373.7 830 373.7 830 373.6 829 373.6 829 374.8 828 374.8 828 386.1 827 386.1 827 378.8 826 378.8 826 413.5 825 413.5 825 379.9 824 379.9 824 389.6 823 389.6 823 396.4 822 396.4 822 399.5 821 399.5 821 374.7 820 374.7 820 372.3 819 372.3 819 380.4 818 380.4 818 375.6 817 375.6 817 413.9 816 413.9 816 381.8 815 381.8 815 392.7 814 392.7 814 385.7 813 385.7 813 410.3 812 410.3 812 374.1 811 374.1 811 379.0 810 379.0 810 371.0 809 371.0 809 382.3 808 382.3 808 380.9 807 380.9 807 381.8 806 381.8 806 385.4 805 385.4 805 384.0 804 384.0 804 411.9 803 411.9 803 396.2 802 396.2 802 382.9 801 382.9 801 391.1 800 391.1 800 395.9 799 395.9 799 377.2 798 377.2 798 378.0 797 378.0 797 374.2 796 374.2 796 388.4 795 388.4 795 380.2 794 380.2 794 424.4 793 424.4 793 401.9 792 401.9 792 379.5 791 379.5 791 390.2 790 390.2 790 411.3 789 411.3 789 381.1 788 381.1 788 390.6 787 390.6 787 374.2 786 374.2 786 375.2 785 375.2 785 396.3 784 396.3 784 383.7 783 383.7 783 373.1 782 373.1 782 409.3 781 409.3 781 369.7 780 369.7 780 376.9 779 376.9 779 372.8 778 372.8 778 381.1 777 381.1 777 372.1 776 372.1 776 388.5 775 388.5 775 385.5 774 385.5 774 378.3 773 378.3 773 381.4 772 381.4 772 396.4 771 396.4 771 387.3 770 387.3 770 389.1 769 389.1 769 381.2 768 381.2 768 410.3 767 410.3 767 384.2 766 384.2 766 378.4 765 378.4 765 387.4 764 387.4 764 389.8 763 389.8 763 374.2 762 374.2 762 371.2 761 371.2 761 371.4 760 371.4 760 374.5 759 374.5 759 410.6 758 410.6 758 374.4 757 374.4 757 375.7 756 375.7 756 383.4 755 383.4 755 386.3 754 386.3 754 380.1 753 380.1 753 383.9 752 383.9 752 389.6 751 389.6 751 377.0 750 377.0 750 381.2 749 381.2 749 378.7 748 378.7 748 376.1 747 376.1 747 377.0 746 377.0 746 387.7 745 387.7 745 408.3 744 408.3 744 376.5 743 376.5 743 404.5 742 404.5 742 414.8 741 414.8 741 379.9 740 379.9 740 386.4 739 386.4 739 377.2 738 377.2 738 369.7 737 369.7 737 371.1 736 371.1 736 401.8 735 401.8 735 377.9 734 377.9 734 376.5 733 376.5 733 372.1 732 372.1 732 377.8 731 377.8 731 381.0 730 381.0 730 386.7 729 386.7 729 384.0 728 384.0 728 387.0 727 387.0 727 379.7 726 379.7 726 379.0 725 379.0 725 376.9 724 376.9 724 386.1 723 386.1 723 381.2 722 381.2 722 408.0 721 408.0 721 392.3 720 392.3 720 395.2 719 395.2 719 371.4 718 371.4 718 378.0 717 378.0 717 387.0 716 387.0 716 373.7 715 373.7 715 373.6 714 373.6 714 378.4 713 378.4 713 375.9 712 375.9 712 382.3 711 382.3 711 394.5 710 394.5 710 402.7 709 402.7 709 375.4 708 375.4 708 373.7 707 373.7 707 382.9 706 382.9 706 384.0 705 384.0 705 386.7 704 386.7 704 388.0 703 388.0 703 390.5 702 390.5 702 391.5 701 391.5 701 388.0 700 388.0 700 407.4 699 407.4 699 375.9 698 375.9 698 382.1 697 382.1 697 412.2 696 412.2 696 420.3 695 420.3 695 377.4 694 377.4 694 385.7 693 385.7 693 386.4 692 386.4 692 388.6 691 388.6 691 392.4 690 392.4 690 384.1 689 384.1 689 379.7 688 379.7 688 384.8 687 384.8 687 381.8 686 381.8 686 419.3 685 419.3 685 388.4 684 388.4 684 400.0 683 400.0 683 381.9 682 381.9 682 388.5 681 388.5 681 379.4 680 379.4 680 380.0 679 380.0 679 390.1 678 390.1 678 397.1 677 397.1 677 422.8 676 422.8 676 379.8 675 379.8 675 376.6 674 376.6 674 389.5 673 389.5 673 424.4 672 424.4 672 411.1 671 411.1 671 374.4 670 374.4 670 378.3 669 378.3 669 424.3 668 424.3 668 381.2 667 381.2 667 385.0 666 385.0 666 379.4 665 379.4 665 379.8 664 379.8 664 402.2 663 402.2 663 389.9 662 389.9 662 424.4 661 424.4 661 400.3 660 400.3 660 388.6 659 388.6 659 377.5 658 377.5 658 391.8 657 391.8 657 384.8 656 384.8 656 389.4 655 389.4 655 406.4 654 406.4 654 404.7 653 404.7 653 402.1 652 402.1 652 387.6 651 387.6 651 390.9 650 390.9 650 379.8 649 379.8 649 392.3 648 392.3 648 382.2 647 382.2 647 385.5 646 385.5 646 379.7 645 379.7 645 376.3 644 376.3 644 381.4 643 381.4 643 377.3 642 377.3 642 376.8 641 376.8 641 382.5 640 382.5 640 381.1 639 381.1 639 385.1 638 385.1 638 389.9 637 389.9 637 386.1 636 386.1 636 385.7 635 385.7 635 391.5 634 391.5 634 424.4 633 424.4 633 399.8 632 399.8 632 423.5 631 423.5 631 380.4 630 380.4 630 390.7 629 390.7 629 401.8 628 401.8 628 409.2 627 409.2 627 378.2 626 378.2 626 381.3 625 381.3 625 384.1 624 384.1 624 384.2 623 384.2 623 390.2 622 390.2 622 376.9 621 376.9 621 377.6 620 377.6 620 379.8 619 379.8 619 378.7 618 378.7 618 385.3 617 385.3 617 390.1 616 390.1 616 384.9 615 384.9 615 384.1 614 384.1 614 397.6 613 397.6 613 384.8 612 384.8 612 391.9 611 391.9 611 386.3 610 386.3 610 400.0 609 400.0 609 411.7 608 411.7 608 386.1 607 386.1 607 389.4 606 389.4 606 392.1 605 392.1 605 392.9 604 392.9 604 377.4 603 377.4 603 390.2 602 390.2 602 391.5 601 391.5 601 403.6 600 403.6 600 399.6 599 399.6 599 381.6 598 381.6 598 371.7 597 371.7 597 382.9 596 382.9 596 378.9 595 378.9 595 381.7 594 381.7 594 381.0 593 381.0 593 374.4 592 374.4 592 388.5 591 388.5 591 377.9 590 377.9 590 382.5 589 382.5 589 386.2 588 386.2 588 389.1 587 389.1 587 400.7 586 400.7 586 378.1 585 378.1 585 379.8 584 379.8 584 393.2 583 393.2 583 397.2 582 397.2 582 392.2 581 392.2 581 374.8 580 374.8 580 382.2 579 382.2 579 384.8 578 384.8 578 408.0 577 408.0 577 386.1 576 386.1 576 379.7 575 379.7 575 384.5 574 384.5 574 371.2 573 371.2 573 403.6 572 403.6 572 404.9 571 404.9 571 383.1 570 383.1 570 381.5 569 381.5 569 385.6 568 385.6 568 381.7 567 381.7 567 405.8 566 405.8 566 395.5 565 395.5 565 400.0 564 400.0 564 412.3 563 412.3 563 378.1 562 378.1 562 377.8 561 377.8 561 381.9 560 381.9 560 415.1 559 415.1 559 403.6 558 403.6 558 393.1 557 393.1 557 380.0 556 380.0 556 371.7 555 371.7 555 409.5 554 409.5 554 399.6 553 399.6 553 374.2 552 374.2 552 384.3 551 384.3 551 379.0 550 379.0 550 400.7 549 400.7 549 413.7 548 413.7 548 387.3 547 387.3 547 424.4 546 424.4 546 381.9 545 381.9 545 375.2 544 375.2 544 377.1 543 377.1 543 367.1 542 367.1 542 364.1 541 364.1 541 389.5 540 389.5 540 371.2 539 371.2 539 375.5 538 375.5 538 382.9 537 382.9 537 373.2 536 373.2 536 376.7 535 376.7 535 373.6 534 373.6 534 378.6 533 378.6 533 371.1 532 371.1 532 373.0 531 373.0 531 384.5 530 384.5 530 380.2 529 380.2 529 373.9 528 373.9 528 376.8 527 376.8 527 370.7 526 370.7 526 373.0 525 373.0 525 377.8 524 377.8 524 378.0 523 378.0 523 379.2 522 379.2 522 373.8 521 373.8 521 379.2 520 379.2 520 377.2 519 377.2 519 392.8 518 392.8 518 372.8 517 372.8 517 383.8 516 383.8 516 383.6 515 383.6 515 393.7 514 393.7 514 389.3 513 389.3 513 371.9 512 371.9 512 373.6 511 373.6 511 392.7 510 392.7 510 374.1 509 374.1 509 375.2 508 375.2 508 381.1 507 381.1 507 383.0 506 383.0 506 372.9 505 372.9 505 377.9 504 377.9 504 388.9 503 388.9 503 373.0 502 373.0 502 388.8 501 388.8 501 378.6 500 378.6 500 381.7 499 381.7 499 376.2 498 376.2 498 389.4 497 389.4 497 393.3 496 393.3 496 412.4 495 412.4 495 386.8 494 386.8 494 390.3 493 390.3 493 400.3 492 400.3 492 377.5 491 377.5 491 377.2 490 377.2 490 382.4 489 382.4 489 413.9 488 413.9 488 374.4 487 374.4 487 377.9 486 377.9 486 376.3 485 376.3 485 384.5 484 384.5 484 380.4 483 380.4 483 383.4 482 383.4 482 384.8 481 384.8 481 403.7 480 403.7 480 376.5 479 376.5 479 385.9 478 385.9 478 387.9 477 387.9 477 412.9 476 412.9 476 424.4 475 424.4 475 418.0 474 418.0 474 396.0 473 396.0 473 410.6 472 410.6 472 384.7 471 384.7 471 382.9 470 382.9 470 384.3 469 384.3 469 388.6 468 388.6 468 392.8 467 392.8 467 400.5 466 400.5 466 374.3 465 374.3 465 375.8 464 375.8 464 380.7 463 380.7 463 380.3 462 380.3 462 380.3 461 380.3 461 387.2 460 387.2 460 384.9 459 384.9 459 404.1 458 404.1 458 379.8 457 379.8 457 383.8 456 383.8 456 396.7 455 396.7 455 400.0 454 400.0 454 376.3 453 376.3 453 388.5 452 388.5 452 387.1 451 387.1 451 402.9 450 402.9 450 371.0 449 371.0 449 372.0 448 372.0 448 371.8 447 371.8 447 369.9 446 369.9 446 376.1 445 376.1 445 369.7 444 369.7 444 371.6 443 371.6 443 375.6 442 375.6 442 380.1 441 380.1 441 384.9 440 384.9 440 391.2 439 391.2 439 370.2 438 370.2 438 398.8 437 398.8 437 370.0 436 370.0 436 378.6 435 378.6 435 382.0 434 382.0 434 382.8 433 382.8 433 388.1 432 388.1 432 391.5 431 391.5 431 388.9 430 388.9 430 391.9 429 391.9 429 390.7 428 390.7 428 400.4 427 400.4 427 379.4 426 379.4 426 385.5 425 385.5 425 376.9 424 376.9 424 387.1 423 387.1 423 390.1 422 390.1 422 424.4 421 424.4 421 392.8 420 392.8 420 378.4 419 378.4 419 394.7 418 394.7 418 377.5 417 377.5 417 376.1 416 376.1 416 410.6 415 410.6 415 419.2 414 419.2 414 383.1 413 383.1 413 380.3 412 380.3 412 375.6 411 375.6 411 378.8 410 378.8 410 393.2 409 393.2 409 392.1 408 392.1 408 390.8 407 390.8 407 400.2 406 400.2 406 417.5 405 417.5 405 378.0 404 378.0 404 387.7 403 387.7 403 379.5 402 379.5 402 382.2 401 382.2 401 377.7 400 377.7 400 380.3 399 380.3 399 402.3 398 402.3 398 374.1 397 374.1 397 382.9 396 382.9 396 377.2 395 377.2 395 394.1 394 394.1 394 384.2 393 384.2 393 398.9 392 398.9 392 375.7 391 375.7 391 405.8 390 405.8 390 383.2 389 383.2 389 381.9 388 381.9 388 377.1 387 377.1 387 376.8 386 376.8 386 381.5 385 381.5 385 378.7 384 378.7 384 393.7 383 393.7 383 401.2 382 401.2 382 378.7 381 378.7 381 377.8 380 377.8 380 379.5 379 379.5 379 377.1 378 377.1 378 380.7 377 380.7 377 372.7 376 372.7 376 374.8 375 374.8 375 374.0 374 374.0 374 374.1 373 374.1 373 378.6 372 378.6 372 374.5 371 374.5 371 422.4 370 422.4 370 385.2 369 385.2 369 397.7 368 397.7 368 378.2 367 378.2 367 378.2 366 378.2 366 373.5 365 373.5 365 384.9 364 384.9 364 376.1 363 376.1 363 386.0 362 386.0 362 385.9 361 385.9 361 385.9 360 385.9 360 393.6 359 393.6 359 381.6 358 381.6 358 375.6 357 375.6 357 380.9 356 380.9 356 386.1 355 386.1 355 392.8 354 392.8 354 393.9 353 393.9 353 372.1 352 372.1 352 371.5 351 371.5 351 373.6 350 373.6 350 370.8 349 370.8 349 374.6 348 374.6 348 378.8 347 378.8 347 380.3 346 380.3 346 378.1 345 378.1 345 381.0 344 381.0 344 382.8 343 382.8 343 391.0 342 391.0 342 371.8 341 371.8 341 383.9 340 383.9 340 403.9 339 403.9 339 381.4 338 381.4 338 403.7 337 403.7 337 386.3 336 386.3 336 391.3 335 391.3 335 381.4 334 381.4 334 373.4 333 373.4 333 380.1 332 380.1 332 383.4 331 383.4 331 386.3 330 386.3 330 387.4 329 387.4 329 381.4 328 381.4 328 418.2 327 418.2 327 391.1 326 391.1 326 396.7 325 396.7 325 374.8 324 374.8 324 391.2 323 391.2 323 383.8 322 383.8 322 386.9 321 386.9 321 399.0 320 399.0 320 375.8 319 375.8 319 386.1 318 386.1 318 380.8 317 380.8 317 387.6 316 387.6 316 385.4 315 385.4 315 401.6 314 401.6 314 382.3 313 382.3 313 394.9 312 394.9 312 370.7 311 370.7 311 373.3 310 373.3 310 376.9 309 376.9 309 368.8 308 368.8 308 369.6 307 369.6 307 378.8 306 378.8 306 381.3 305 381.3 305 373.5 304 373.5 304 374.1 303 374.1 303 379.5 302 379.5 302 385.0 301 385.0 301 382.2 300 382.2 300 384.4 299 384.4 299 424.4 298 424.4 298 380.0 297 380.0 297 381.2 296 381.2 296 413.9 295 413.9 295 378.5 294 378.5 294 379.4 293 379.4 293 393.6 292 393.6 292 371.9 291 371.9 291 370.8 290 370.8 290 374.0 289 374.0 289 372.7 288 372.7 288 372.8 287 372.8 287 372.4 286 372.4 286 380.6 285 380.6 285 368.9 284 368.9 284 371.0 283 371.0 283 368.7 282 368.7 282 370.7 281 370.7 281 366.4 280 366.4 280 371.1 279 371.1 279 369.2 278 369.2 278 372.8 277 372.8 277 369.6 276 369.6 276 371.8 275 371.8 275 373.4 274 373.4 274 381.1 273 381.1 273 374.3 272 374.3 272 397.8 271 397.8 271 381.4 270 381.4 270 392.0 269 392.0 269 376.8 268 376.8 268 407.4 267 407.4 267 371.7 266 371.7 266 378.8 265 378.8 265 376.6 264 376.6 264 377.8 263 377.8 263 374.7 262 374.7 262 384.7 261 384.7 261 388.0 260 388.0 260 375.3 259 375.3 259 374.9 258 374.9 258 380.4 257 380.4 257 374.3 256 374.3 256 374.1 255 374.1 255 375.0 254 375.0 254 374.1 253 374.1 253 388.5 252 388.5 252 389.1 251 389.1 251 397.7 250 397.7 250 387.8 249 387.8 249 403.8 248 403.8 248 396.8 247 396.8 247 413.5 246 413.5 246 393.2 245 393.2 245 384.8 244 384.8 244 369.4 243 369.4 243 371.4 242 371.4 242 369.3 241 369.3 241 378.7 240 378.7 240 372.4 239 372.4 239 370.1 238 370.1 238 369.4 237 369.4 237 372.3 236 372.3 236 366.6 235 366.6 235 364.1 234 364.1 234 365.8 233 365.8 233 366.8 232 366.8 232 365.3 231 365.3 231 367.8 230 367.8 230 373.5 229 373.5 229 365.7 228 365.7 228 367.2 227 367.2 227 371.0 226 371.0 226 371.4 225 371.4 225 394.6 224 394.6 224 369.3 223 369.3 223 372.0 222 372.0 222 369.4 221 369.4 221 370.3 220 370.3 220 387.8 219 387.8 219 369.8 218 369.8 218 374.2 217 374.2 217 372.9 216 372.9 216 369.3 215 369.3 215 368.4 214 368.4 214 368.5 213 368.5 213 385.5 212 385.5 212 371.4 211 371.4 211 367.8 210 367.8 210 366.0 209 366.0 209 367.6 208 367.6 208 372.3 207 372.3 207 390.0 206 390.0 206 369.7 205 369.7 205 378.8 204 378.8 204 370.2 203 370.2 203 375.0 202 375.0 202 388.2 201 388.2 201 372.1 200 372.1 200 371.9 199 371.9 199 377.6 198 377.6 198 368.9 197 368.9 197 365.9 196 365.9 196 368.5 195 368.5 195 371.5 194 371.5 194 379.1 193 379.1 193 366.5 192 366.5 192 374.4 191 374.4 191 364.1 190 364.1 190 368.5 189 368.5 189 369.3 188 369.3 188 380.7 187 380.7 187 372.8 186 372.8 186 374.5 185 374.5 185 371.5 184 371.5 184 372.6 183 372.6 183 374.3 182 374.3 182 376.7 181 376.7 181 368.9 180 368.9 180 379.7 179 379.7 179 385.5 178 385.5 178 367.8 177 367.8 177 368.2 176 368.2 176 370.6 175 370.6 175 369.2 174 369.2 174 369.6 173 369.6 173 367.6 172 367.6 172 367.4 171 367.4 171 369.7 170 369.7 170 373.8 169 373.8 169 368.9 168 368.9 168 373.8 167 373.8 167 368.8 166 368.8 166 368.0 165 368.0 165 366.2 164 366.2 164 376.0 163 376.0 163 369.3 162 369.3 162 368.8 161 368.8 161 373.0 160 373.0 160 368.9 159 368.9 159 370.3 158 370.3 158 371.5 157 371.5 157 391.6 156 391.6 156 371.8 155 371.8 155 374.7 154 374.7 154 361.5 153 361.5 153 362.2 152 362.2 152 362.6 151 362.6 151 362.4 150 362.4 150 364.1 149 364.1 149 365.1 148 365.1 148 362.7 147 362.7 147 364.7 146 364.7 146 368.2 145 368.2 145 359.8 144 359.8 144 365.6 143 365.6 143 369.1 142 369.1 142 361.4 141 361.4 141 362.5 140 362.5 140 361.2 139 361.2 139 361.2 138 361.2 138 359.6 137 359.6 137 362.3 136 362.3 136 362.3 135 362.3 135 362.8 134 362.8 134 362.5 133 362.5 133 364.9 132 364.9Z" fill="#3232c8"/><path d="M132 349.2 133 349.2 133 349.4 134 349.4 134 349.1 135 349.1 135 349.3 136 349.3 136 349.7 137 349.7 137 349.6 138 349.6 138 349.9 139 349.9 139 349.5 140 349.5 140 349.9 141 349.9 141 349.9 142 349.9 142 349.8 143 349.8 143 350.1 144 350.1 144 350.2 145 350.2 145 350.1 146 350.1 146 349.3 147 349.3 147 349.3 148 349.3 148 349.5 149 349.5 149 349.2 150 349.2 150 349.8 151 349.8 151 349.1 152 349.1 152 348.8 153 348.8 153 348.4 154 348.4 154 348.2 155 348.2 155 347.7 156 347.7 156 346.0 157 346.0 157 346.2 158 346.2 158 348.0 159 348.0 159 346.8 160 346.8 160 346.7 161 346.7 161 346.6 162 346.6 162 346.5 163 346.5 163 348.1 164 348.1 164 348.2 165 348.2 165 348.0 166 348.0 166 347.3 167 347.3 167 346.7 168 346.7 168 346.7 169 346.7 169 347.9 170 347.9 170 347.9 171 347.9 171 347.9 172 347.9 172 346.7 173 346.7 173 347.2 174 347.2 174 347.3 175 347.3 175 347.4 176 347.4 176 347.9 177 347.9 177 347.2 178 347.2 178 346.3 179 346.3 179 346.3 180 346.3 180 347.8 181 347.8 181 346.3 182 346.3 182 347.9 183 347.9 183 346.8 184 346.8 184 346.6 185 346.6 185 346.4 186 346.4 186 347.9 187 347.9 187 348.0 188 348.0 188 347.4 189 347.4 189 346.8 190 346.8 190 346.9 191 346.9 191 346.7 192 346.7 192 347.0 193 347.0 193 346.9 194 346.9 194 347.6 195 347.6 195 346.7 196 346.7 196 346.8 197 346.8 197 347.2 198 347.2 198 346.7 199 346.7 199 347.4 200 347.4 200 348.0 201 348.0 201 347.8 202 347.8 202 347.8 203 347.8 203 348.0 204 348.0 204 347.3 205 347.3 205 347.0 206 347.0 206 348.0 207 348.0 207 347.0 208 347.0 208 346.6 209 346.6 209 347.4 210 347.4 210 347.4 211 347.4 211 347.9 212 347.9 212 346.4 213 346.4 213 347.9 214 347.9 214 346.7 215 346.7 215 347.8 216 347.8 216 346.5 217 346.5 217 346.9 218 346.9 218 346.7 219 346.7 219 347.6 220 347.6 220 347.5 221 347.5 221 346.7 222 346.7 222 346.7 223 346.7 223 348.0 224 348.0 224 346.6 225 346.6 225 347.2 226 347.2 226 347.3 227 347.3 227 347.0 228 347.0 228 347.0 229 347.0 229 347.5 230 347.5 230 346.6 231 346.6 231 347.6 232 347.6 232 347.4 233 347.4 233 347.0 234 347.0 234 347.9 235 347.9 235 347.5 236 347.5 236 346.5 237 346.5 237 347.0 238 347.0 238 346.7 239 346.7 239 346.4 240 346.4 240 346.9 241 346.9 241 346.5 242 346.5 242 346.6 243 346.6 243 346.5 244 346.5 244 346.2 245 346.2 245 343.7 246 343.7 246 341.7 247 341.7 247 341.5 248 341.5 248 343.8 249 343.8 249 343.0 250 343.0 250 342.9 251 342.9 251 341.8 252 341.8 252 342.0 253 342.0 253 343.2 254 343.2 254 344.4 255 344.4 255 343.5 256 343.5 256 343.2 257 343.2 257 344.7 258 344.7 258 343.0 259 343.0 259 343.9 260 343.9 260 342.6 261 342.6 261 343.3 262 343.3 262 342.8 263 342.8 263 344.7 264 344.7 264 344.2 265 344.2 265 345.4 266 345.4 266 345.9 267 345.9 267 345.7 268 345.7 268 347.6 269 347.6 269 346.7 270 346.7 270 346.0 271 346.0 271 346.1 272 346.1 272 347.0 273 347.0 273 346.9 274 346.9 274 345.5 275 345.5 275 346.4 276 346.4 276 347.2 277 347.2 277 345.9 278 345.9 278 346.3 279 346.3 279 346.6 280 346.6 280 347.3 281 347.3 281 347.5 282 347.5 282 347.0 283 347.0 283 346.5 284 346.5 284 347.7 285 347.7 285 346.8 286 346.8 286 347.3 287 347.3 287 347.4 288 347.4 288 346.9 289 346.9 289 346.0 290 346.0 290 345.7 291 345.7 291 344.0 292 344.0 292 344.2 293 344.2 293 344.4 294 344.4 294 344.3 295 344.3 295 344.8 296 344.8 296 343.6 297 343.6 297 344.3 298 344.3 298 343.0 299 343.0 299 344.0 300 344.0 300 345.4 301 345.4 301 343.9 302 343.9 302 344.2 303 344.2 303 344.6 304 344.6 304 344.3 305 344.3 305 344.7 306 344.7 306 344.5 307 344.5 307 343.5 308 343.5 308 344.9 309 344.9 309 343.7 310 343.7 310 344.4 311 344.4 311 343.6 312 343.6 312 343.8 313 343.8 313 344.6 314 344.6 314 344.9 315 344.9 315 343.4 316 343.4 316 344.6 317 344.6 317 344.2 318 344.2 318 344.1 319 344.1 319 345.5 320 345.5 320 344.2 321 344.2 321 345.3 322 345.3 322 345.1 323 345.1 323 343.8 324 343.8 324 345.4 325 345.4 325 343.3 326 343.3 326 343.3 327 343.3 327 345.2 328 345.2 328 344.1 329 344.1 329 345.0 330 345.0 330 344.1 331 344.1 331 343.2 332 343.2 332 344.0 333 344.0 333 345.3 334 345.3 334 342.7 335 342.7 335 344.1 336 344.1 336 343.9 337 343.9 337 342.7 338 342.7 338 344.6 339 344.6 339 345.4 340 345.4 340 344.3 341 344.3 341 343.1 342 343.1 342 343.4 343 343.4 343 345.2 344 345.2 344 345.3 345 345.3 345 343.4 346 343.4 346 344.2 347 344.2 347 343.5 348 343.5 348 344.4 349 344.4 349 343.9 350 343.9 350 345.0 351 345.0 351 343.8 352 343.8 352 343.4 353 343.4 353 342.4 354 342.4 354 343.9 355 343.9 355 344.3 356 344.3 356 344.5 357 344.5 357 345.3 358 345.3 358 344.6 359 344.6 359 344.8 360 344.8 360 343.3 361 343.3 361 344.9 362 344.9 362 344.6 363 344.6 363 344.4 364 344.4 364 344.6 365 344.6 365 343.3 366 343.3 366 344.8 367 344.8 367 343.3 368 343.3 368 344.1 369 344.1 369 343.6 370 343.6 370 344.8 371 344.8 371 344.1 372 344.1 372 343.6 373 343.6 373 343.1 374 343.1 374 344.3 375 344.3 375 345.5 376 345.5 376 344.5 377 344.5 377 344.4 378 344.4 378 345.2 379 345.2 379 343.4 380 343.4 380 343.9 381 343.9 381 344.9 382 344.9 382 342.3 383 342.3 383 343.2 384 343.2 384 344.0 385 344.0 385 343.1 386 343.1 386 344.1 387 344.1 387 343.7 388 343.7 388 345.1 389 345.1 389 343.2 390 343.2 390 343.2 391 343.2 391 342.9 392 342.9 392 344.5 393 344.5 393 342.7 394 342.7 394 344.6 395 344.6 395 345.0 396 345.0 396 342.7 397 342.7 397 343.7 398 343.7 398 344.1 399 344.1 399 345.0 400 345.0 400 344.1 401 344.1 401 343.3 402 343.3 402 343.7 403 343.7 403 344.8 404 344.8 404 344.6 405 344.6 405 342.1 406 342.1 406 342.3 407 342.3 407 342.7 408 342.7 408 344.4 409 344.4 409 343.8 410 343.8 410 344.5 411 344.5 411 342.6 412 342.6 412 345.0 413 345.0 413 343.2 414 343.2 414 344.2 415 344.2 415 345.2 416 345.2 416 344.4 417 344.4 417 343.5 418 343.5 418 344.2 419 344.2 419 343.4 420 343.4 420 342.1 421 342.1 421 344.8 422 344.8 422 342.9 423 342.9 423 342.8 424 342.8 424 343.6 425 343.6 425 345.1 426 345.1 426 345.0 427 345.0 427 343.4 428 343.4 428 344.0 429 344.0 429 343.8 430 343.8 430 343.6 431 343.6 431 342.5 432 342.5 432 345.0 433 345.0 433 343.6 434 343.6 434 343.2 435 343.2 435 343.5 436 343.5 436 345.6 437 345.6 437 344.2 438 344.2 438 344.6 439 344.6 439 343.2 440 343.2 440 344.0 441 344.0 441 343.8 442 343.8 442 343.7 443 343.7 443 344.8 444 344.8 444 344.1 445 344.1 445 345.7 446 345.7 446 343.5 447 343.5 447 344.0 448 344.0 448 345.3 449 345.3 449 343.2 450 343.2 450 342.3 451 342.3 451 344.0 452 344.0 452 343.0 453 343.0 453 343.0 454 343.0 454 343.1 455 343.1 455 343.2 456 343.2 456 344.2 457 344.2 457 342.8 458 342.8 458 343.0 459 343.0 459 341.8 460 341.8 460 343.2 461 343.2 461 344.1 462 344.1 462 343.2 463 343.2 463 343.0 464 343.0 464 344.0 465 344.0 465 342.6 466 342.6 466 342.7 467 342.7 467 342.0 468 342.0 468 344.1 469 344.1 469 343.0 470 343.0 470 344.3 471 344.3 471 343.2 472 343.2 472 343.7 473 343.7 473 343.5 474 343.5 474 343.0 475 343.0 475 344.0 476 344.0 476 342.8 477 342.8 477 344.4 478 344.4 478 344.5 479 344.5 479 344.8 480 344.8 480 344.1 481 344.1 481 344.0 482 344.0 482 343.4 483 343.4 483 343.4 484 343.4 484 344.3 485 344.3 485 342.8 486 342.8 486 343.0 487 343.0 487 342.8 488 342.8 488 343.7 489 343.7 489 343.2 490 343.2 490 343.5 491 343.5 491 344.4 492 344.4 492 342.2 493 342.2 493 344.6 494 344.6 494 345.0 495 345.0 495 343.6 496 343.6 496 345.1 497 345.1 497 343.5 498 343.5 498 345.6 499 345.6 499 344.9 500 344.9 500 343.8 501 343.8 501 345.6 502 345.6 502 345.4 503 345.4 503 344.6 504 344.6 504 345.6 505 345.6 505 344.7 506 344.7 506 345.1 507 345.1 507 344.9 508 344.9 508 344.4 509 344.4 509 343.6 510 343.6 510 344.6 511 344.6 511 344.6 512 344.6 512 343.6 513 343.6 513 343.5 514 343.5 514 343.6 515 343.6 515 343.4 516 343.4 516 344.3 517 344.3 517 345.5 518 345.5 518 344.6 519 344.6 519 344.4 520 344.4 520 343.7 521 343.7 521 343.9 522 343.9 522 345.0 523 345.0 523 344.6 524 344.6 524 345.2 525 345.2 525 344.8 526 344.8 526 344.7 527 344.7 527 345.0 528 345.0 528 345.4 529 345.4 529 344.4 530 344.4 530 343.7 531 343.7 531 345.3 532 345.3 532 345.1 533 345.1 533 345.1 534 345.1 534 345.4 535 345.4 535 343.7 536 343.7 536 344.4 537 344.4 537 344.6 538 344.6 538 346.3 539 346.3 539 347.6 540 347.6 540 346.8 541 346.8 541 347.9 542 347.9 542 347.1 543 347.1 543 345.6 544 345.6 544 344.8 545 344.8 545 345.1 546 345.1 546 341.6 547 341.6 547 343.7 548 343.7 548 343.7 549 343.7 549 343.9 550 343.9 550 344.5 551 344.5 551 344.4 552 344.4 552 343.8 553 343.8 553 344.5 554 344.5 554 342.6 555 342.6 555 343.2 556 343.2 556 343.6 557 343.6 557 341.2 558 341.2 558 344.1 559 344.1 559 343.3 560 343.3 560 344.1 561 344.1 561 344.2 562 344.2 562 342.9 563 342.9 563 342.3 564 342.3 564 341.0 565 341.0 565 342.1 566 342.1 566 342.9 567 342.9 567 343.3 568 343.3 568 343.7 569 343.7 569 342.5 570 342.5 570 342.8 571 342.8 571 342.7 572 342.7 572 341.8 573 341.8 573 343.8 574 343.8 574 341.5 575 341.5 575 342.7 576 342.7 576 343.1 577 343.1 577 343.4 578 343.4 578 343.7 579 343.7 579 343.6 580 343.6 580 342.7 581 342.7 581 342.7 582 342.7 582 342.7 583 342.7 583 343.8 584 343.8 584 343.8 585 343.8 585 343.5 586 343.5 586 341.8 587 341.8 587 342.5 588 342.5 588 341.2 589 341.2 589 341.5 590 341.5 590 341.4 591 341.4 591 343.6 592 343.6 592 341.8 593 341.8 593 342.8 594 342.8 594 342.9 595 342.9 595 344.1 596 344.1 596 343.1 597 343.1 597 342.4 598 342.4 598 341.5 599 341.5 599 341.8 600 341.8 600 342.4 601 342.4 601 342.9 602 342.9 602 343.8 603 343.8 603 341.2 604 341.2 604 341.4 605 341.4 605 342.6 606 342.6 606 343.5 607 343.5 607 342.9 608 342.9 608 340.5 609 340.5 609 342.4 610 342.4 610 343.4 611 343.4 611 342.9 612 342.9 612 342.0 613 342.0 613 342.2 614 342.2 614 343.5 615 343.5 615 341.8 616 341.8 616 342.0 617 342.0 617 340.7 618 340.7 618 340.9 619 340.9 619 341.2 620 341.2 620 341.1 621 341.1 621 343.4 622 343.4 622 341.7 623 341.7 623 341.1 624 341.1 624 343.4 625 343.4 625 342.1 626 342.1 626 340.9 627 340.9 627 342.0 628 342.0 628 341.5 629 341.5 629 340.2 630 340.2 630 341.4 631 341.4 631 340.6 632 340.6 632 342.8 633 342.8 633 341.1 634 341.1 634 340.3 635 340.3 635 342.6 636 342.6 636 341.3 637 341.3 637 342.4 638 342.4 638 341.2 639 341.2 639 341.1 640 341.1 640 340.6 641 340.6 641 342.5 642 342.5 642 343.0 643 343.0 643 341.6 644 341.6 644 341.5 645 341.5 645 342.8 646 342.8 646 342.2 647 342.2 647 340.8 648 340.8 648 340.2 649 340.2 649 343.1 650 343.1 650 343.1 651 343.1 651 341.3 652 341.3 652 340.6 653 340.6 653 342.3 654 342.3 654 341.5 655 341.5 655 339.9 656 339.9 656 342.8 657 342.8 657 343.0 658 343.0 658 340.7 659 340.7 659 341.0 660 341.0 660 341.7 661 341.7 661 340.2 662 340.2 662 341.1 663 341.1 663 340.9 664 340.9 664 343.2 665 343.2 665 343.1 666 343.1 666 343.2 667 343.2 667 343.3 668 343.3 668 343.3 669 343.3 669 343.1 670 343.1 670 342.8 671 342.8 671 342.8 672 342.8 672 340.5 673 340.5 673 342.4 674 342.4 674 342.9 675 342.9 675 341.4 676 341.4 676 341.1 677 341.1 677 339.9 678 339.9 678 339.8 679 339.8 679 342.1 680 342.1 680 340.3 681 340.3 681 341.5 682 341.5 682 342.2 683 342.2 683 341.6 684 341.6 684 341.1 685 341.1 685 340.8 686 340.8 686 341.4 687 341.4 687 342.2 688 342.2 688 340.8 689 340.8 689 340.5 690 340.5 690 341.3 691 341.3 691 339.9 692 339.9 692 340.9 693 340.9 693 341.3 694 341.3 694 340.4 695 340.4 695 341.6 696 341.6 696 342.2 697 342.2 697 341.8 698 341.8 698 343.0 699 343.0 699 340.2 700 340.2 700 342.6 701 342.6 701 341.3 702 341.3 702 341.5 703 341.5 703 341.0 704 341.0 704 341.9 705 341.9 705 341.4 706 341.4 706 343.6 707 343.6 707 342.6 708 342.6 708 342.0 709 342.0 709 343.4 710 343.4 710 341.1 711 341.1 711 341.7 712 341.7 712 344.2 713 344.2 713 343.1 714 343.1 714 342.4 715 342.4 715 342.2 716 342.2 716 344.3 717 344.3 717 344.4 718 344.4 718 343.7 719 343.7 719 342.9 720 342.9 720 342.3 721 342.3 721 343.1 722 343.1 722 343.0 723 343.0 723 342.6 724 342.6 724 344.2 725 344.2 725 344.4 726 344.4 726 342.9 727 342.9 727 341.6 728 341.6 728 343.9 729 343.9 729 343.3 730 343.3 730 343.0 731 343.0 731 344.3 732 344.3 732 343.8 733 343.8 733 343.0 734 343.0 734 342.5 735 342.5 735 342.9 736 342.9 736 343.5 737 343.5 737 342.8 738 342.8 738 342.2 739 342.2 739 341.2 740 341.2 740 342.3 741 342.3 741 343.5 742 343.5 742 344.1 743 344.1 743 343.8 744 343.8 744 343.3 745 343.3 745 342.9 746 342.9 746 343.9 747 343.9 747 341.7 748 341.7 748 343.6 749 343.6 749 342.8 750 342.8 750 343.6 751 343.6 751 342.4 752 342.4 752 342.9 753 342.9 753 344.0 754 344.0 754 343.0 755 343.0 755 342.7 756 342.7 756 342.1 757 342.1 757 342.8 758 342.8 758 343.6 759 343.6 759 343.3 760 343.3 760 342.3 761 342.3 761 342.7 762 342.7 762 344.0 763 344.0 763 342.4 764 342.4 764 342.0 765 342.0 765 341.5 766 341.5 766 344.0 767 344.0 767 341.6 768 341.6 768 342.3 769 342.3 769 341.9 770 341.9 770 341.9 771 341.9 771 341.9 772 341.9 772 342.3 773 342.3 773 343.7 774 343.7 774 343.7 775 343.7 775 342.5 776 342.5 776 342.7 777 342.7 777 342.9 778 342.9 778 342.2 779 342.2 779 342.3 780 342.3 780 344.2 781 344.2 781 343.7 782 343.7 782 343.8 783 343.8 783 342.8 784 342.8 784 342.1 785 342.1 785 343.7 786 343.7 786 343.9 787 343.9 787 342.3 788 342.3 788 341.6 789 341.6 789 342.4 790 342.4 790 343.7 791 343.7 791 344.2 792 344.2 792 342.8 793 342.8 793 343.4 794 343.4 794 341.9 795 341.9 795 343.3 796 343.3 796 343.0 797 343.0 797 343.4 798 343.4 798 342.1 799 342.1 799 341.8 800 341.8 800 342.0 801 342.0 801 343.4 802 343.4 802 343.8 803 343.8 803 343.2 804 343.2 804 341.9 805 341.9 805 341.7 806 341.7 806 341.8 807 341.8 807 342.0 808 342.0 808 343.4 809 343.4 809 344.4 810 344.4 810 343.6 811 343.6 811 342.1 812 342.1 812 342.8 813 342.8 813 341.7 814 341.7 814 342.3 815 342.3 815 343.2 816 343.2 816 342.3 817 342.3 817 343.8 818 343.8 818 343.8 819 343.8 819 344.0 820 344.0 820 342.4 821 342.4 821 343.4 822 343.4 822 342.4 823 342.4 823 343.6 824 343.6 824 343.2 825 343.2 825 342.9 826 342.9 826 342.9 827 342.9 827 342.0 828 342.0 828 343.7 829 343.7 829 342.7 830 342.7 830 344.1 831 344.1 831 343.4 832 343.4 832 342.8 833 342.8 833 342.6 834 342.6 834 342.8 835 342.8 835 343.5 836 343.5 836 343.3 837 343.3 837 344.1 838 344.1 838 342.2 839 342.2 839 343.9 840 343.9 840 343.2 841 343.2 841 343.7 842 343.7 842 344.6 843 344.6 843 342.7 844 342.7 844 342.3 845 342.3 845 342.6 846 342.6 846 343.4 847 343.4 847 342.4 848 342.4 848 342.5 849 342.5 849 344.4 850 344.4 850 342.1 851 342.1 851 342.7 852 342.7 852 344.1 853 344.1 853 343.3 854 343.3 854 343.0 855 343.0 855 342.2 856 342.2 856 343.4 857 343.4 857 342.4 858 342.4 858 342.5 859 342.5 859 342.1 860 342.1 860 342.8 861 342.8 861 342.1 862 342.1 862 343.9 863 343.9 863 344.2 864 344.2 864 344.4 865 344.4 865 342.2 866 342.2 866 343.3 867 343.3 867 342.9 868 342.9 868 343.5 869 343.5 869 344.2 870 344.2 870 343.6 871 343.6 871 342.0 872 342.0 872 342.6 873 342.6 873 341.9 874 341.9 874 342.4 875 342.4 875 344.4 876 344.4 876 343.5 877 343.5 877 343.3 878 343.3 878 344.1 879 344.1 879 343.5 880 343.5 880 343.2 881 343.2 881 342.3 882 342.3 882 342.6 883 342.6 883 344.1 884 344.1 884 343.3 885 343.3 885 343.3 886 343.3 886 343.7 887 343.7 887 342.7 888 342.7 888 344.8 889 344.8 889 343.8 890 343.8 890 343.4 891 343.4 891 342.1 892 342.1 892 342.3 893 342.3 893 343.7 894 343.7 894 341.7 895 341.7 895 342.5 896 342.5 896 341.0 897 341.0 897 343.5 898 343.5 898 341.3 899 341.3 899 342.2 900 342.2 900 340.6 901 340.6 901 342.7 902 342.7 902 341.4 903 341.4 903 340.9 904 340.9 904 341.0 905 341.0 905 342.5 906 342.5 906 340.7 907 340.7 907 342.2 908 342.2 908 340.0 909 340.0 909 342.9 910 342.9 910 342.7 911 342.7 911 342.5 912 342.5 912 342.5 913 342.5 913 342.0 914 342.0 914 342.7 915 342.7 915 341.4 916 341.4 916 341.1 917 341.1 917 340.3 918 340.3 918 340.9 919 340.9 919 340.4 920 340.4 920 341.5 921 341.5 921 342.9 922 342.9 922 340.2 923 340.2 923 342.1 924 342.1 924 340.8 925 340.8 925 340.0 926 340.0 926 339.8 927 339.8 927 341.2 928 341.2 928 340.2 929 340.2 929 340.4 930 340.4 930 340.4 931 340.4 931 342.1 932 342.1 932 341.3 933 341.3 933 341.8 934 341.8 934 342.5 935 342.5 935 343.1 936 343.1 936 341.9 937 341.9 937 342.4 938 342.4 938 340.6 939 340.6 939 340.1 940 340.1 940 342.5 941 342.5 941 342.7 942 342.7 942 340.8 943 340.8 943 341.8 944 341.8 944 340.5 945 340.5 945 343.3 946 343.3 946 341.1 947 341.1 947 340.5 948 340.5 948 339.6 949 339.6 949 340.2 950 340.2 950 340.1 951 340.1 951 342.1 952 342.1 952 341.1 953 341.1 953 342.9 954 342.9 954 341.6 955 341.6 955 342.0 956 342.0 956 342.2 957 342.2 957 340.5 958 340.5 958 343.0 959 343.0 959 341.1 960 341.1 960 342.1 961 342.1 961 343.4 962 343.4 962 341.3 963 341.3 963 340.1 964 340.1 964 342.7 965 342.7 965 342.8 966 342.8 966 341.4 967 341.4 967 341.0 968 341.0 968 342.3 969 342.3 969 343.4 970 343.4 970 341.5 971 341.5 971 342.6 972 342.6 972 342.8 973 342.8 973 343.5 974 343.5 974 345.1 975 345.1 975 344.3 976 344.3 976 343.3 977 343.3 977 343.1 978 343.1 978 344.4 979 344.4 979 342.7 980 342.7 980 344.0 981 344.0 981 344.9 982 344.9 982 344.6 983 344.6 983 343.2 984 343.2 984 343.1 985 343.1 985 342.3 986 342.3 986 342.5 987 342.5 987 344.9 988 344.9 988 344.0 989 344.0 989 343.4 990 343.4 990 342.6 991 342.6 991 344.8 992 344.8 992 343.1 993 343.1 993 342.1 994 342.1 994 343.1 995 343.1 995 343.3 996 343.3 996 343.2 997 343.2 997 343.2 998 343.2 998 343.2 999 343.2 999 343.7 1000 343.7 1000 343.7 1001 343.7 1001 343.5 1002 343.5 1002 343.0 1003 343.0 1003 344.6 1004 344.6 1004 342.0 1005 342.0 1005 341.7 1006 341.7 1006 343.3 1007 343.3 1007 340.8 1008 340.8 1008 338.9 1009 338.9 1009 339.8 1010 339.8 1010 338.7 1011 338.7 1011 339.3 1012 339.3 1012 339.1 1013 339.1 1013 339.5 1014 339.5 1014 338.6 1015 338.6 1015 339.1 1016 339.1 1016 336.7 1017 336.7 1017 340.0 1018 340.0 1018 337.2 1019 337.2 1019 338.7 1020 338.7 1020 338.5 1021 338.5 1021 339.5 1022 339.5 1022 339.2 1023 339.2 1023 337.4 1024 337.4 1024 340.6 1025 340.6 1025 340.8 1026 340.8 1026 336.0 1027 336.0 1027 338.5 1028 338.5 1028 339.7 1029 339.7 1029 338.2 1030 338.2 1030 337.6 1031 337.6 1031 340.2 1032 340.2 1032 338.0 1033 338.0 1033 338.9 1034 338.9 1034 340.4 1035 340.4 1035 337.7 1036 337.7 1036 339.8 1037 339.8 1037 337.5 1038 337.5 1038 337.8 1039 337.8 1039 336.7 1040 336.7 1040 338.1 1041 338.1 1041 338.9 1042 338.9 1042 337.4 1043 337.4 1043 338.0 1044 338.0 1044 338.6 1045 338.6 1045 337.2 1046 337.2 1046 338.3 1047 338.3 1047 339.9 1048 339.9 1048 338.1 1049 338.1 1049 339.8 1050 339.8 1050 339.3 1051 339.3 1051 339.7 1052 339.7 1052 339.8 1053 339.8 1053 339.2 1054 339.2 1054 339.8 1055 339.8 1055 338.7 1056 338.7 1056 340.6 1057 340.6 1057 337.3 1058 337.3 1058 339.7 1059 339.7 1059 337.1 1060 337.1 1060 338.7 1061 338.7 1061 336.4 1062 336.4 1062 339.2 1063 339.2 1063 336.9 1064 336.9 1064 340.5 1065 340.5 1065 339.7 1066 339.7 1066 337.6 1067 337.6 1067 338.3 1068 338.3 1068 339.2 1069 339.2 1069 337.7 1070 337.7 1070 340.0 1071 340.0 1071 339.2 1072 339.2 1072 339.8 1073 339.8 1073 339.1 1074 339.1 1074 340.0 1075 340.0 1075 337.0 1076 337.0 1076 337.5 1077 337.5 1077 337.0 1078 337.0 1078 338.7 1079 338.7 1079 340.2 1080 340.2 1080 339.0 1081 339.0 1081 338.3 1082 338.3 1082 339.5 1083 339.5 1083 338.4 1084 338.4 1084 339.4 1085 339.4 1085 339.8 1086 339.8 1086 339.0 1087 339.0 1087 340.7 1088 340.7 1088 338.1 1089 338.1 1089 339.8 1090 339.8 1090 337.1 1091 337.1 1091 337.7 1092 337.7 1092 337.4 1093 337.4 1093 338.6 1094 338.6 1094 339.4 1095 339.4 1095 337.9 1096 337.9 1096 338.1 1097 338.1 1097 340.0 1098 340.0 1098 338.0 1099 338.0 1099 340.4 1100 340.4 1100 340.1 1101 340.1 1101 339.8 1102 339.8 1102 338.2 1103 338.2 1103 338.4 1104 338.4 1104 339.1 1105 339.1 1105 340.4 1106 340.4 1106 336.1 1107 336.1 1107 336.7 1108 336.7 1108 339.3 1109 339.3 1109 337.5 1110 337.5 1110 337.8 1111 337.8 1111 337.7 1112 337.7 1112 339.6 1113 339.6 1113 337.3 1114 337.3 1114 340.8 1115 340.8 1115 337.6 1116 337.6 1116 337.2 1117 337.2 1117 340.7 1118 340.7 1118 344.5 1119 344.5 1119 346.1 1120 346.1 1120 348.8 1121 348.8 1121 351.4 1122 351.4 1122 351.2 1123 351.2 1123 351.7 1124 351.7 1124 352.2 1125 352.2 1125 349.1 1126 349.1 1126 346.6 1127 346.6 1127 344.0 1128 344.0 1128 338.3 1129 338.3 1129 341.0 1130 341.0 1130 338.3 1131 338.3 1131 339.2 1132 339.2 1132 338.2 1133 338.2 1133 340.8 1134 340.8 1134 339.7 1135 339.7 1135 341.3 1136 341.3 1136 340.4 1137 340.4 1137 338.8 1138 338.8 1138 342.2 1139 342.2 1139 339.1 1140 339.1 1140 338.5 1141 338.5 1141 340.1 1142 340.1 1142 339.7 1143 339.7 1143 341.3 1144 341.3 1144 339.7 1145 339.7 1145 341.7 1146 341.7 1146 339.4 1147 339.4 1147 340.7 1148 340.7 1148 341.2 1149 341.2 1149 339.4 1150 339.4 1150 340.4 1151 340.4 1151 339.0 1152 339.0 1152 341.2 1153 341.2 1153 339.6 1154 339.6 1154 339.6 1155 339.6 1155 340.2 1156 340.2 1156 338.5 1157 338.5 1157 341.2 1158 341.2 1158 340.9 1159 340.9 1159 341.3 1160 341.3 1160 340.1 1161 340.1 1161 340.8 1162 340.8 1162 340.8 1163 340.8 1163 341.2 1164 341.2 1164 341.8 1165 341.8 1165 338.9 1166 338.9 1166 339.0 1167 339.0 1167 339.6 1168 339.6 1168 339.1 1169 339.1 1169 340.7 1170 340.7 1170 340.3 1171 340.3 1171 340.7 1172 340.7 1172 340.9 1173 340.9 1173 339.9 1174 339.9 1174 338.5 1175 338.5 1175 339.8 1176 339.8 1176 341.7 1177 341.7 1177 341.3 1178 341.3 1178 339.2 1179 339.2 1179 340.5 1180 340.5 1180 341.7 1181 341.7 1181 341.9 1182 341.9 1182 338.2 1183 338.2 1183 338.2 1184 338.2 1184 340.6 1185 340.6 1185 340.8 1186 340.8 1186 340.9 1187 340.9 1187 340.8 1188 340.8 1188 338.8 1189 338.8 1189 341.4 1190 341.4 1190 339.7 1191 339.7 1191 341.3 1192 341.3 1192 340.3 1193 340.3 1193 340.3 1194 340.3 1194 341.5 1195 341.5 1195 341.0 1196 341.0 1196 339.6 1197 339.6 1197 340.5 1198 340.5 1198 340.7 1199 340.7 1199 340.3 1200 340.3 1200 341.0 1201 341.0 1201 338.9 1202 338.9 1202 338.8 1203 338.8 1203 339.8 1204 339.8 1204 340.1 1205 340.1 1205 339.3 1206 339.3 1206 339.9 1207 339.9 1207 340.2 1208 340.2 1208 340.3 1209 340.3 1209 340.0 1210 340.0 1210 339.7 1211 339.7 1211 340.2 1212 340.2 1212 340.3 1213 340.3 1213 340.1 1214 340.1 1214 339.6 1215 339.6 1215 341.1 1216 341.1 1216 341.4 1217 341.4 1217 341.3 1218 341.3 1218 341.5 1219 341.5 1219 339.2 1220 339.2 1220 339.7 1221 339.7 1221 340.4 1222 340.4 1222 340.6 1223 340.6 1223 341.7 1224 341.7 1224 339.1 1225 339.1 1225 342.1 1226 342.1 1226 340.1 1227 340.1 1227 338.6 1228 338.6 1228 338.8 1229 338.8 1229 338.4 1230 338.4 1230 340.5 1231 340.5 1231 338.8 1232 338.8 1232 339.1 1233 339.1 1233 340.7 1234 340.7 1234 340.1 1235 340.1 1235 339.1 1236 339.1 1236 339.5 1237 339.5 1237 339.3 1238 339.3 1238 339.5 1239 339.5 1239 340.1 1240 340.1 1240 338.8 1241 338.8 1241 341.5 1242 341.5 1242 340.0 1243 340.0 1243 340.6 1244 340.6 1244 340.3 1245 340.3 1245 341.3 1246 341.3 1246 339.3 1247 339.3 1247 340.9 1248 340.9 1248 339.9 1249 339.9 1249 339.5 1250 339.5 1250 339.1 1251 339.1 1251 339.7 1252 339.7 1252 340.9 1253 340.9 1253 340.2 1254 340.2 1254 340.6 1255 340.6 1255 340.2 1256 340.2 1256 339.0 1257 339.0 1257 341.4 1258 341.4 1258 341.3 1259 341.3 1259 341.6 1260 341.6 1260 341.2 1261 341.2 1261 340.6 1262 340.6 1262 340.7 1263 340.7 1263 338.9 1264 338.9 1264 338.8 1265 338.8 1265 338.0 1266 338.0 1266 339.1 1267 339.1 1267 340.6 1268 340.6 1268 338.6 1269 338.6 1269 340.9 1270 340.9 1270 341.5 1271 341.5 1271 340.9 1272 340.9 1272 340.6 1273 340.6 1273 341.7 1274 341.7 1274 339.9 1275 339.9 1275 340.8 1276 340.8 1276 341.9 1277 341.9 1277 341.2 1278 341.2 1278 340.4 1279 340.4 1279 339.1 1280 339.1 1280 341.7 1281 341.7 1281 340.2 1282 340.2 1282 342.1 1283 342.1 1283 339.0 1284 339.0 1284 340.0 1285 340.0 1285 339.2 1286 339.2 1286 340.8 1287 340.8 1287 338.5 1288 338.5 1288 340.4 1289 340.4 1289 340.6 1290 340.6 1290 340.6 1291 340.6 1291 338.8 1292 338.8 1292 340.7 1293 340.7 1293 338.7 1294 338.7 1294 339.6 1295 339.6 1295 341.1 1296 341.1 1296 339.0 1297 339.0 1297 341.4 1298 341.4 1298 340.5 1299 340.5 1299 340.5 1300 340.5 1300 341.7 1301 341.7 1301 340.7 1302 340.7 1302 341.5 1303 341.5 1303 342.1 1304 342.1 1304 340.9 1305 340.9 1305 340.1 1306 340.1 1306 339.0 1307 339.0 1307 341.6 1308 341.6 1308 340.3 1309 340.3 1309 338.8 1310 338.8 1310 339.1 1311 339.1 1311 341.3 1312 341.3 1312 342.0 1313 342.0 1313 342.0 1314 342.0 1314 339.4 1315 339.4 1315 341.5 1316 341.5 1316 341.4 1317 341.4 1317 340.4 1318 340.4 1318 339.3 1319 339.3 1319 341.2 1320 341.2 1320 341.4 1321 341.4 1321 340.7 1322 340.7 1322 341.0 1323 341.0 1323 340.2 1324 340.2 1324 341.5 1325 341.5 1325 341.0 1326 341.0 1326 340.1 1327 340.1 1327 341.6 1328 341.6 1328 339.7 1329 339.7 1329 342.5 1330 342.5 1330 341.7 1331 341.7 1331 342.3 1332 342.3 1332 340.2 1333 340.2 1333 340.7 1334 340.7 1334 341.4 1335 341.4 1335 339.0 1336 339.0 1336 339.3 1337 339.3 1337 340.6 1338 340.6 1338 342.4 1339 342.4 1339 340.0 1340 340.0 1340 341.5 1341 341.5 1341 342.6 1342 342.6 1342 342.7 1343 342.7 1343 340.1 1344 340.1 1344 340.7 1345 340.7 1345 341.0 1346 341.0 1346 342.1 1347 342.1 1347 341.0 1348 341.0 1348 342.1 1349 342.1 1349 341.6 1350 341.6 1350 341.4 1351 341.4 1351 339.6 1352 339.6 1352 340.6 1353 340.6 1353 341.9 1354 341.9 1354 340.1 1355 340.1 1355 340.3 1356 340.3 1356 339.7 1357 339.7 1357 340.0 1358 340.0 1358 341.4 1359 341.4 1359 342.5 1360 342.5 1360 339.5 1361 339.5 1361 340.1 1362 340.1 1362 341.1 1363 341.1 1363 340.6 1364 340.6 1364 341.6 1365 341.6 1365 340.0 1366 340.0 1366 341.9 1367 341.9 1367 340.2 1368 340.2 1368 341.9 1369 341.9 1369 342.2 1370 342.2 1370 342.4 1371 342.4 1371 342.6 1372 342.6 1372 340.3 1373 340.3 1373 340.5 1374 340.5 1374 339.7 1375 339.7 1375 340.7 1376 340.7 1376 341.4 1377 341.4 1377 339.9 1378 339.9 1378 339.5 1379 339.5 1379 340.1 1380 340.1 1380 341.9 1381 341.9 1381 341.8 1382 341.8 1382 342.3 1383 342.3 1383 339.6 1384 339.6 1384 340.5 1385 340.5 1385 340.6 1386 340.6 1386 340.0 1387 340.0 1387 341.6 1388 341.6 1388 342.5 1389 342.5 1389 341.5 1390 341.5 1390 342.4 1391 342.4 1391 341.2 1392 341.2 1392 340.5 1393 340.5 1393 341.3 1394 341.3 1394 339.5 1395 339.5 1395 342.0 1396 342.0 1396 341.1 1397 341.1 1397 340.3 1398 340.3 1398 342.2 1399 342.2 1399 341.3 1400 341.3 1400 341.2 1401 341.2 1401 339.8 1402 339.8 1402 342.1 1403 342.1 1403 340.2 1404 340.2 1404 339.5 1405 339.5 1405 340.6 1406 340.6 1406 340.0 1407 340.0 1407 340.0 1408 340.0 1408 342.4 1409 342.4 1409 339.7 1410 339.7 1410 341.3 1411 341.3 1411 341.4 1412 341.4 1412 340.7 1413 340.7 1413 341.2 1414 341.2 1414 339.4 1415 339.4 1415 341.8 1416 341.8 1416 342.5 1417 342.5 1417 341.3 1418 341.3 1418 340.0 1419 340.0 1419 339.4 1420 339.4 1420 339.2 1421 339.2 1421 342.1 1422 342.1 1422 341.2 1423 341.2 1423 340.4 1424 340.4 1424 340.0 1425 340.0 1425 339.1 1426 339.1 1426 342.4 1427 342.4 1427 341.7 1428 341.7 1428 342.3 1429 342.3 1429 341.4 1430 341.4 1430 340.4 1431 340.4 1431 340.5 1432 340.5 1432 339.1 1433 339.1 1433 342.2 1434 342.2 1434 341.3 1435 341.3 1435 338.9 1436 338.9 1436 340.0 1437 340.0 1437 340.2 1438 340.2 1438 342.6 1439 342.6 1439 340.5 1440 340.5 1440 342.3 1441 342.3 1441 340.3 1442 340.3 1442 340.2 1443 340.2 1443 339.3 1444 339.3 1444 342.2 1445 342.2 1445 339.4 1446 339.4 1446 342.1 1447 342.1 1447 339.0 1448 339.0 1448 339.7 1449 339.7 1449 340.0 1450 340.0 1450 340.6 1451 340.6 1451 341.9 1452 341.9 1452 340.4 1453 340.4 1453 340.9 1454 340.9 1454 341.2 1455 341.2 1455 341.4 1456 341.4 1456 342.5 1457 342.5 1457 341.9 1458 341.9 1458 342.2 1459 342.2 1459 339.9 1460 339.9 1460 341.7 1461 341.7 1461 340.9 1462 340.9 1462 340.1 1463 340.1 1463 342.5 1464 342.5 1464 342.4 1465 342.4 1465 341.4 1466 341.4 1466 341.5 1467 341.5 1467 341.0 1468 341.0 1468 341.3 1469 341.3 1469 340.7 1470 340.7 1470 339.4 1471 339.4 1471 339.1 1472 339.1 1472 339.6 1473 339.6 1473 340.7 1474 340.7 1474 341.3 1475 341.3 1475 341.5 1476 341.5 1476 341.0 1477 341.0 1477 341.1 1478 341.1 1478 341.6 1479 341.6 1479 340.2 1480 340.2 1480 339.1 1481 339.1 1481 339.4 1482 339.4 1482 339.0 1483 339.0 1483 340.8 1484 340.8 1484 341.2 1485 341.2 1485 340.5 1486 340.5 1486 339.5 1487 339.5 1487 340.4 1488 340.4 1488 341.8 1489 341.8 1489 341.0 1490 341.0 1490 340.4 1491 340.4 1491 338.8 1492 338.8 1492 339.2 1493 339.2 1493 340.9 1494 340.9 1494 340.7 1495 340.7 1495 341.4 1496 341.4 1496 340.8 1497 340.8 1497 339.1 1498 339.1 1498 339.4 1499 339.4 1499 339.0 1500 339.0 1500 339.7 1501 339.7 1501 338.7 1502 338.7 1502 339.0 1503 339.0 1503 340.8 1504 340.8 1504 341.4 1505 341.4 1505 339.9 1506 339.9 1506 341.0 1507 341.0 1507 339.2 1508 339.2 1508 340.3 1509 340.3 1509 337.9 1510 337.9 1510 341.6 1511 341.6 1511 338.9 1512 338.9 1512 341.7 1513 341.7 1513 341.3 1514 341.3 1514 340.3 1515 340.3 1515 339.2 1516 339.2 1516 341.5 1517 341.5 1517 339.4 1518 339.4 1518 340.8 1519 340.8 1519 339.6 1520 339.6 1520 341.3 1521 341.3 1521 341.4 1522 341.4 1522 341.7 1523 341.7 1523 338.7 1524 338.7 1524 341.5 1525 341.5 1525 341.5 1526 341.5 1526 339.7 1527 339.7 1527 339.4 1528 339.4 1528 338.6 1529 338.6 1529 339.7 1530 339.7 1530 341.2 1531 341.2 1531 339.5 1532 339.5 1532 338.5 1533 338.5 1533 341.3 1534 341.3 1534 341.3 1535 341.3 1535 338.8 1536 338.8 1536 341.2 1537 341.2 1537 339.3 1538 339.3 1538 339.0 1539 339.0 1539 341.6 1540 341.6 1540 339.4 1541 339.4 1541 341.1 1542 341.1 1542 340.7 1543 340.7 1543 340.9 1544 340.9 1544 338.9 1545 338.9 1545 339.1 1546 339.1 1546 341.2 1547 341.2 1547 340.4 1548 340.4 1548 341.8 1549 341.8 1549 341.8 1550 341.8 1550 338.1 1551 338.1 1551 340.3 1552 340.3 1552 341.1 1553 341.1 1553 341.4 1554 341.4 1554 340.4 1555 340.4 1555 341.4 1556 341.4 1556 340.1 1557 340.1 1557 340.5 1558 340.5 1558 339.2 1559 339.2 1559 338.5 1560 338.5 1560 339.0 1561 339.0 1561 341.3 1562 341.3 1562 339.9 1563 339.9 1563 339.6 1564 339.6 1564 339.5 1565 339.5 1565 340.3 1566 340.3 1566 340.5 1567 340.5 1567 340.7 1568 340.7 1568 340.6 1569 340.6 1569 339.5 1570 339.5 1570 338.3 1571 338.3 1571 338.6 1572 338.6 1572 339.3 1573 339.3 1573 339.0 1574 339.0 1574 337.4 1575 337.4 1575 337.9 1576 337.9 1576 340.0 1577 340.0 1577 340.4 1578 340.4 1578 339.9 1579 339.9 1579 336.8 1580 336.8 1580 340.5 1581 340.5 1581 338.4 1582 338.4 1582 336.3 1583 336.3 1583 336.6 1584 336.6 1584 338.1 1585 338.1 1585 339.6 1586 339.6 1586 340.4 1587 340.4 1587 340.8 1588 340.8 1588 340.3 1589 340.3 1589 340.7 1590 340.7 1590 338.2 1591 338.2 1591 337.6 1592 337.6 1592 337.7 1593 337.7 1593 337.8 1594 337.8 1594 340.4 1595 340.4 1595 338.9 1596 338.9 1596 338.8 1597 338.8 1597 337.4 1598 337.4 1598 340.4 1599 340.4 1599 339.1 1600 339.1 1600 338.6 1601 338.6 1601 337.2 1602 337.2 1602 340.5 1603 340.5 1603 339.4 1604 339.4 1604 339.3 1605 339.3 1605 339.1 1606 339.1 1606 339.0 1607 339.0 1607 340.6 1608 340.6 1608 340.7 1609 340.7 1609 339.3 1610 339.3 1610 340.0 1611 340.0 1611 338.5 1612 338.5 1612 340.0 1613 340.0 1613 338.2 1614 338.2 1614 340.8 1615 340.8 1615 340.6 1616 340.6 1616 339.6 1617 339.6 1617 336.9 1618 336.9 1618 338.4 1619 338.4 1619 337.7 1620 337.7 1620 338.1 1621 338.1 1621 337.1 1622 337.1 1622 337.0 1623 337.0 1623 339.7 1624 339.7 1624 337.9 1625 337.9 1625 337.1 1626 337.1 1626 337.4 1627 337.4 1627 337.6 1628 337.6 1628 337.9 1629 337.9 1629 337.2 1630 337.2 1630 339.6 1631 339.6 1631 339.9 1632 339.9 1632 337.2 1633 337.2 1633 340.6 1634 340.6 1634 338.9 1635 338.9 1635 339.1 1636 339.1 1636 337.7 1637 337.7 1637 336.6 1638 336.6 1638 337.6 1639 337.6 1639 337.9 1640 337.9 1640 337.1 1641 337.1 1641 340.4 1642 340.4 1642 340.4 1643 340.4 1643 339.6 1644 339.6 1644 338.8 1645 338.8 1645 336.6 1646 336.6 1646 338.5 1647 338.5 1647 338.6 1648 338.6 1648 337.2 1649 337.2 1649 339.7 1650 339.7 1650 339.2 1651 339.2 1651 337.3 1652 337.3 1652 339.5 1653 339.5 1653 340.5 1654 340.5 1654 339.1 1655 339.1 1655 339.2 1656 339.2 1656 340.6 1657 340.6 1657 336.3 1658 336.3 1658 337.3 1659 337.3 1659 337.8 1660 337.8 1660 337.1 1661 337.1 1661 337.7 1662 337.7 1662 338.9 1663 338.9 1663 338.9 1664 338.9 1664 338.9 1665 338.9 1665 340.1 1666 340.1 1666 340.9 1667 340.9 1667 338.6 1668 338.6 1668 338.1 1669 338.1 1669 338.8 1670 338.8 1670 340.0 1671 340.0 1671 338.9 1672 338.9 1672 337.3 1673 337.3 1673 341.4 1674 341.4 1674 340.4 1675 340.4 1675 341.3 1676 341.3 1676 342.7 1677 342.7 1677 344.3 1678 344.3 1678 344.3 1679 344.3 1679 343.7 1680 343.7 1680 343.9 1681 343.9 1681 344.3 1682 344.3 1682 343.9 1683 343.9 1683 343.7 1684 343.7 1684 342.5 1685 342.5 1685 343.8 1686 343.8 1686 345.1 1687 345.1 1687 343.3 1688 343.3 1688 345.1 1689 345.1 1689 344.3 1690 344.3 1690 344.0 1691 344.0 1691 344.0 1692 344.0 1692 343.5 1693 343.5 1693 343.7 1694 343.7 1694 343.7 1695 343.7 1695 343.0 1696 343.0 1696 345.0 1697 345.0 1697 344.0 1698 344.0 1698 343.2 1699 343.2 1699 344.8 1700 344.8 1700 344.3 1701 344.3 1701 344.4 1702 344.4 1702 344.7 1703 344.7 1703 344.7 1704 344.7 1704 342.9 1705 342.9 1705 343.5 1706 343.5 1706 344.3 1707 344.3 1707 343.9 1708 343.9 1708 345.3 1709 345.3 1709 344.8 1710 344.8 1710 344.6 1711 344.6 1711 343.6 1712 343.6 1712 343.5 1713 343.5 1713 344.7 1714 344.7 1714 344.5 1715 344.5 1715 345.0 1716 345.0 1716 344.1 1717 344.1 1717 344.7 1718 344.7 1718 343.2 1719 343.2 1719 344.4 1720 344.4 1720 345.1 1721 345.1 1721 343.8 1722 343.8 1722 344.1 1723 344.1 1723 345.0 1724 345.0 1724 344.9 1725 344.9 1725 343.1 1726 343.1 1726 344.4 1727 344.4 1727 344.9 1728 344.9 1728 344.2 1729 344.2 1729 343.4 1730 343.4 1730 344.0 1731 344.0 1731 344.7 1732 344.7 1732 343.3 1733 343.3 1733 344.2 1734 344.2 1734 343.0 1735 343.0 1735 343.9 1736 343.9 1736 345.3 1737 345.3 1737 344.5 1738 344.5 1738 343.2 1739 343.2 1739 343.5 1740 343.5 1740 343.5 1741 343.5 1741 343.9 1742 343.9 1742 345.1 1743 345.1 1743 344.2 1744 344.2 1744 344.5 1745 344.5 1745 345.1 1746 345.1 1746 343.3 1747 343.3 1747 344.3 1748 344.3 1748 343.1 1749 343.1 1749 345.4 1750 345.4 1750 343.6 1751 343.6 1751 343.1 1752 343.1 1752 343.3 1753 343.3 1753 342.8 1754 342.8 1754 345.1 1755 345.1 1755 343.6 1756 343.6 1756 343.4 1757 343.4 1757 343.0 1758 343.0 1758 343.9 1759 343.9 1759 343.4 1760 343.4 1760 343.3 1761 343.3 1761 344.7 1762 344.7 1762 343.4 1763 343.4 1763 343.2 1764 343.2 1764 344.4 1765 344.4 1765 344.9 1766 344.9 1766 343.7 1767 343.7 1767 344.4 1768 344.4 1768 345.2 1769 345.2 1769 343.7 1770 343.7 1770 343.2 1771 343.2 1771 344.8 1772 344.8 1772 343.6 1773 343.6 1773 344.8 1774 344.8 1774 343.6 1775 343.6 1775 343.8 1776 343.8 1776 343.5 1777 343.5 1777 343.9 1778 343.9 1778 343.3 1779 343.3 1779 343.2 1780 343.2 1780 343.7 1781 343.7 1781 344.4 1782 344.4 1782 345.2 1783 345.2 1783 344.7 1784 344.7 1784 343.3 1785 343.3 1785 344.1 1786 344.1 1786 344.2 1787 344.2 1787 344.5 1788 344.5 1788 344.8 1789 344.8 1789 343.9 1790 343.9 1790 343.2 1791 343.2 1791 343.3 1792 343.3 1792 343.5 1793 343.5 1793 343.8 1794 343.8 1794 343.8 1795 343.8 1795 343.6 1796 343.6 1796 345.0 1797 345.0 1797 345.1 1798 345.1 1798 344.6 1799 344.6 1799 345.1 1800 345.1 1800 344.6 1801 344.6 1801 345.0 1802 345.0 1802 344.8 1803 344.8 1803 344.6 1804 344.6 1804 344.5 1805 344.5 1805 344.1 1806 344.1 1806 345.7 1807 345.7 1807 343.5 1808 343.5 1808 345.2 1809 345.2 1809 346.2 1810 346.2 1810 347.8 1811 347.8 1811 347.4 1812 347.4 1812 348.4 1813 348.4 1813 347.4 1814 347.4 1814 348.1 1815 348.1 1815 347.5 1816 347.5 1816 347.4 1817 347.4 1817 348.3 1818 348.3 1818 347.9 1819 347.9 1819 348.2 1820 348.2 1820 349.5 1821 349.5 1821 349.7 1822 349.7 1822 349.7 1823 349.7 1823 350.0 1824 350.0 1824 350.0 1825 350.0 1825 350.2 1826 350.2 1826 350.4 1827 350.4 1827 350.2 1828 350.2 1828 350.9 1829 350.9 1829 351.0 1830 351.0 1830 351.1 1831 351.1 1831 351.4 1832 351.4 1832 351.8 1833 351.8 1833 351.6 1834 351.6 1834 351.6 1835 351.6 1835 352.1 1836 352.1 1836 352.6 1837 352.6 1837 352.5 1838 352.5 1838 352.5 1839 352.5 1839 352.8 1840 352.8 1840 352.9 1841 352.9 1841 353.2 1842 353.2 1842 353.4 1843 353.4 1843 353.3 1844 353.3 1844 353.5 1845 353.5 1845 353.6 1846 353.6 1846 353.8 1847 353.8 1847 353.9 1848 353.9 1848 354.1 1849 354.1 1849 354.2 1850 354.2 1850 354.2 1851 354.2 1851 354.2 1852 354.2 1852 354.2 1853 354.2 1853 354.2 1854 354.2 1854 354.3 1855 354.3 1855 354.3 1856 354.3 1856 354.3 1857 354.3 1857 354.3 1858 354.3 1858 354.3 1859 354.3 1859 354.3 1860 354.3 1860 354.3 1861 354.3 1861 354.3 1862 354.3 1862 354.3 1863 354.3 1863 354.3 1864 354.3 1864 354.3 1865 354.3 1865 354.3 1866 354.3 1866 354.3 1867 354.3 1867 354.3 1868 354.3 1868 354.4 1869 354.4 1869 354.4 1870 354.4 1870 354.4 1871 354.4 1871 354.4 1872 354.4 1872 354.4 1873 354.4 1873 354.4 1874 354.4 1874 354.4 1875 354.4 1875 354.4 1876 354.4 1876 354.4 1877 354.4 1877 354.4 1878 354.4 1878 354.4 1879 354.4 1879 354.4 1880 354.4 1880 354.4 1881 354.4 1881 354.4 1882 354.4 1882 354.5 1883 354.5 1883 354.5 1884 354.5 1884 354.5 1885 354.5 1885 354.5 1886 354.5 1886 354.5 1887 354.5 1887 354.5 1888 354.5 1888 354.5 1889 354.5 1889 354.5 1888 354.5 1888 354.5 1887 354.5 1887 354.5 1886 354.5 1886 354.5 1885 354.5 1885 354.5 1884 354.5 1884 354.5 1883 354.5 1883 354.5 1882 354.5 1882 354.6 1881 354.6 1881 354.6 1880 354.6 1880 354.6 1879 354.6 1879 354.6 1878 354.6 1878 354.6 1877 354.6 1877 354.6 1876 354.6 1876 354.6 1875 354.6 1875 354.6 1874 354.6 1874 354.6 1873 354.6 1873 354.6 1872 354.6 1872 354.6 1871 354.6 1871 354.6 1870 354.6 1870 354.6 1869 354.6 1869 354.6 1868 354.6 1868 354.7 1867 354.7 1867 354.7 1866 354.7 1866 354.7 1865 354.7 1865 354.7 1864 354.7 1864 354.7 1863 354.7 1863 354.7 1862 354.7 1862 354.7 1861 354.7 1861 354.7 1860 354.7 1860 354.7 1859 354.7 1859 354.7 1858 354.7 1858 354.7 1857 354.7 1857 354.7 1856 354.7 1856 354.7 1855 354.7 1855 354.7 1854 354.7 1854 354.8 1853 354.8 1853 354.8 1852 354.8 1852 354.8 1851 354.8 1851 354.8 1850 354.8 1850 354.8 1849 354.8 1849 354.9 1848 354.9 1848 355.1 1847 355.1 1847 355.2 1846 355.2 1846 355.4 1845 355.4 1845 355.5 1844 355.5 1844 355.7 1843 355.7 1843 355.6 1842 355.6 1842 355.8 1841 355.8 1841 356.1 1840 356.1 1840 356.2 1839 356.2 1839 356.5 1838 356.5 1838 356.5 1837 356.5 1837 356.4 1836 356.4 1836 356.9 1835 356.9 1835 357.4 1834 357.4 1834 357.4 1833 357.4 1833 357.2 1832 357.2 1832 357.6 1831 357.6 1831 357.9 1830 357.9 1830 358.0 1829 358.0 1829 358.1 1828 358.1 1828 358.8 1827 358.8 1827 358.6 1826 358.6 1826 358.8 1825 358.8 1825 359.0 1824 359.0 1824 359.0 1823 359.0 1823 359.3 1822 359.3 1822 359.3 1821 359.3 1821 359.5 1820 359.5 1820 360.8 1819 360.8 1819 361.1 1818 361.1 1818 360.7 1817 360.7 1817 361.6 1816 361.6 1816 361.5 1815 361.5 1815 360.9 1814 360.9 1814 361.6 1813 361.6 1813 360.6 1812 360.6 1812 361.6 1811 361.6 1811 361.2 1810 361.2 1810 362.8 1809 362.8 1809 363.8 1808 363.8 1808 365.5 1807 365.5 1807 363.3 1806 363.3 1806 364.9 1805 364.9 1805 364.5 1804 364.5 1804 364.4 1803 364.4 1803 364.2 1802 364.2 1802 364.0 1801 364.0 1801 364.4 1800 364.4 1800 363.9 1799 363.9 1799 364.4 1798 364.4 1798 363.9 1797 363.9 1797 364.0 1796 364.0 1796 365.4 1795 365.4 1795 365.2 1794 365.2 1794 365.2 1793 365.2 1793 365.5 1792 365.5 1792 365.7 1791 365.7 1791 365.8 1790 365.8 1790 365.1 1789 365.1 1789 364.2 1788 364.2 1788 364.5 1787 364.5 1787 364.8 1786 364.8 1786 364.9 1785 364.9 1785 365.7 1784 365.7 1784 364.3 1783 364.3 1783 363.8 1782 363.8 1782 364.6 1781 364.6 1781 365.3 1780 365.3 1780 365.8 1779 365.8 1779 365.7 1778 365.7 1778 365.1 1777 365.1 1777 365.5 1776 365.5 1776 365.2 1775 365.2 1775 365.4 1774 365.4 1774 364.2 1773 364.2 1773 365.4 1772 365.4 1772 364.2 1771 364.2 1771 365.8 1770 365.8 1770 365.3 1769 365.3 1769 363.8 1768 363.8 1768 364.6 1767 364.6 1767 365.3 1766 365.3 1766 364.1 1765 364.1 1765 364.6 1764 364.6 1764 365.8 1763 365.8 1763 365.6 1762 365.6 1762 364.3 1761 364.3 1761 365.7 1760 365.7 1760 365.6 1759 365.6 1759 365.1 1758 365.1 1758 366.0 1757 366.0 1757 365.6 1756 365.6 1756 365.4 1755 365.4 1755 363.9 1754 363.9 1754 366.2 1753 366.2 1753 365.7 1752 365.7 1752 365.9 1751 365.9 1751 365.4 1750 365.4 1750 363.6 1749 363.6 1749 365.9 1748 365.9 1748 364.7 1747 364.7 1747 365.7 1746 365.7 1746 363.9 1745 363.9 1745 364.5 1744 364.5 1744 364.8 1743 364.8 1743 363.9 1742 363.9 1742 365.1 1741 365.1 1741 365.5 1740 365.5 1740 365.5 1739 365.5 1739 365.8 1738 365.8 1738 364.5 1737 364.5 1737 363.7 1736 363.7 1736 365.1 1735 365.1 1735 366.0 1734 366.0 1734 364.8 1733 364.8 1733 365.7 1732 365.7 1732 364.3 1731 364.3 1731 365.0 1730 365.0 1730 365.6 1729 365.6 1729 364.8 1728 364.8 1728 364.1 1727 364.1 1727 364.6 1726 364.6 1726 365.9 1725 365.9 1725 364.1 1724 364.1 1724 364.0 1723 364.0 1723 364.9 1722 364.9 1722 365.2 1721 365.2 1721 363.9 1720 363.9 1720 364.6 1719 364.6 1719 365.8 1718 365.8 1718 364.3 1717 364.3 1717 364.9 1716 364.9 1716 364.0 1715 364.0 1715 364.5 1714 364.5 1714 364.3 1713 364.3 1713 365.5 1712 365.5 1712 365.4 1711 365.4 1711 364.4 1710 364.4 1710 364.2 1709 364.2 1709 363.7 1708 363.7 1708 365.1 1707 365.1 1707 364.7 1706 364.7 1706 365.5 1705 365.5 1705 366.1 1704 366.1 1704 364.3 1703 364.3 1703 364.3 1702 364.3 1702 364.6 1701 364.6 1701 364.7 1700 364.7 1700 364.2 1699 364.2 1699 365.8 1698 365.8 1698 365.0 1697 365.0 1697 364.0 1696 364.0 1696 366.0 1695 366.0 1695 365.3 1694 365.3 1694 365.3 1693 365.3 1693 365.5 1692 365.5 1692 365.0 1691 365.0 1691 365.0 1690 365.0 1690 364.7 1689 364.7 1689 363.9 1688 363.9 1688 365.7 1687 365.7 1687 363.9 1686 363.9 1686 365.2 1685 365.2 1685 366.5 1684 366.5 1684 365.3 1683 365.3 1683 365.1 1682 365.1 1682 364.7 1681 364.7 1681 365.1 1680 365.1 1680 365.3 1679 365.3 1679 364.7 1678 364.7 1678 364.7 1677 364.7 1677 366.3 1676 366.3 1676 367.7 1675 367.7 1675 368.6 1674 368.6 1674 367.6 1673 367.6 1673 371.7 1672 371.7 1672 370.1 1671 370.1 1671 369.0 1670 369.0 1670 370.2 1669 370.2 1669 370.9 1668 370.9 1668 370.4 1667 370.4 1667 368.1 1666 368.1 1666 368.9 1665 368.9 1665 370.1 1664 370.1 1664 370.1 1663 370.1 1663 370.1 1662 370.1 1662 371.3 1661 371.3 1661 371.9 1660 371.9 1660 371.2 1659 371.2 1659 371.7 1658 371.7 1658 372.7 1657 372.7 1657 368.4 1656 368.4 1656 369.8 1655 369.8 1655 369.9 1654 369.9 1654 368.5 1653 368.5 1653 369.5 1652 369.5 1652 371.7 1651 371.7 1651 369.8 1650 369.8 1650 369.3 1649 369.3 1649 371.8 1648 371.8 1648 370.4 1647 370.4 1647 370.5 1646 370.5 1646 372.4 1645 372.4 1645 370.2 1644 370.2 1644 369.4 1643 369.4 1643 368.6 1642 368.6 1642 368.6 1641 368.6 1641 371.9 1640 371.9 1640 371.1 1639 371.1 1639 371.4 1638 371.4 1638 372.4 1637 372.4 1637 371.3 1636 371.3 1636 369.9 1635 369.9 1635 370.1 1634 370.1 1634 368.4 1633 368.4 1633 371.8 1632 371.8 1632 369.1 1631 369.1 1631 369.4 1630 369.4 1630 371.8 1629 371.8 1629 371.1 1628 371.1 1628 371.4 1627 371.4 1627 371.6 1626 371.6 1626 371.9 1625 371.9 1625 371.1 1624 371.1 1624 369.3 1623 369.3 1623 372.0 1622 372.0 1622 371.9 1621 371.9 1621 370.9 1620 370.9 1620 371.3 1619 371.3 1619 370.6 1618 370.6 1618 372.1 1617 372.1 1617 369.4 1616 369.4 1616 368.4 1615 368.4 1615 368.2 1614 368.2 1614 370.8 1613 370.8 1613 369.0 1612 369.0 1612 370.5 1611 370.5 1611 369.0 1610 369.0 1610 369.7 1609 369.7 1609 368.3 1608 368.3 1608 368.4 1607 368.4 1607 370.0 1606 370.0 1606 369.9 1605 369.9 1605 369.7 1604 369.7 1604 369.6 1603 369.6 1603 368.5 1602 368.5 1602 371.8 1601 371.8 1601 370.4 1600 370.4 1600 369.9 1599 369.9 1599 368.6 1598 368.6 1598 371.6 1597 371.6 1597 370.2 1596 370.2 1596 370.1 1595 370.1 1595 368.6 1594 368.6 1594 371.2 1593 371.2 1593 371.3 1592 371.3 1592 371.4 1591 371.4 1591 370.8 1590 370.8 1590 368.3 1589 368.3 1589 368.7 1588 368.7 1588 368.2 1587 368.2 1587 368.6 1586 368.6 1586 369.4 1585 369.4 1585 370.9 1584 370.9 1584 372.4 1583 372.4 1583 372.7 1582 372.7 1582 370.6 1581 370.6 1581 368.5 1580 368.5 1580 372.2 1579 372.2 1579 369.1 1578 369.1 1578 368.6 1577 368.6 1577 369.0 1576 369.0 1576 371.1 1575 371.1 1575 371.6 1574 371.6 1574 370.0 1573 370.0 1573 369.7 1572 369.7 1572 370.4 1571 370.4 1571 370.7 1570 370.7 1570 369.5 1569 369.5 1569 368.4 1568 368.4 1568 368.3 1567 368.3 1567 368.5 1566 368.5 1566 368.7 1565 368.7 1565 369.5 1564 369.5 1564 369.4 1563 369.4 1563 369.1 1562 369.1 1562 367.7 1561 367.7 1561 370.0 1560 370.0 1560 370.5 1559 370.5 1559 369.8 1558 369.8 1558 368.5 1557 368.5 1557 368.9 1556 368.9 1556 367.6 1555 367.6 1555 368.6 1554 368.6 1554 367.6 1553 367.6 1553 367.9 1552 367.9 1552 368.7 1551 368.7 1551 370.9 1550 370.9 1550 367.2 1549 367.2 1549 367.2 1548 367.2 1548 368.6 1547 368.6 1547 367.8 1546 367.8 1546 369.9 1545 369.9 1545 370.1 1544 370.1 1544 368.1 1543 368.1 1543 368.3 1542 368.3 1542 367.9 1541 367.9 1541 369.6 1540 369.6 1540 367.4 1539 367.4 1539 370.0 1538 370.0 1538 369.7 1537 369.7 1537 367.8 1536 367.8 1536 370.2 1535 370.2 1535 367.7 1534 367.7 1534 367.7 1533 367.7 1533 370.5 1532 370.5 1532 369.5 1531 369.5 1531 367.8 1530 367.8 1530 369.3 1529 369.3 1529 370.4 1528 370.4 1528 369.6 1527 369.6 1527 369.3 1526 369.3 1526 367.5 1525 367.5 1525 367.5 1524 367.5 1524 370.3 1523 370.3 1523 367.3 1522 367.3 1522 367.6 1521 367.6 1521 367.7 1520 367.7 1520 369.4 1519 369.4 1519 368.2 1518 368.2 1518 369.6 1517 369.6 1517 367.5 1516 367.5 1516 369.8 1515 369.8 1515 368.7 1514 368.7 1514 367.7 1513 367.7 1513 367.3 1512 367.3 1512 370.1 1511 370.1 1511 367.4 1510 367.4 1510 371.1 1509 371.1 1509 368.7 1508 368.7 1508 369.8 1507 369.8 1507 368.0 1506 368.0 1506 369.1 1505 369.1 1505 367.6 1504 367.6 1504 368.2 1503 368.2 1503 370.0 1502 370.0 1502 370.3 1501 370.3 1501 369.3 1500 369.3 1500 370.0 1499 370.0 1499 369.6 1498 369.6 1498 369.9 1497 369.9 1497 368.2 1496 368.2 1496 367.6 1495 367.6 1495 368.3 1494 368.3 1494 368.1 1493 368.1 1493 369.8 1492 369.8 1492 370.2 1491 370.2 1491 368.6 1490 368.6 1490 368.0 1489 368.0 1489 367.2 1488 367.2 1488 368.6 1487 368.6 1487 369.5 1486 369.5 1486 368.5 1485 368.5 1485 367.8 1484 367.8 1484 368.2 1483 368.2 1483 370.0 1482 370.0 1482 369.6 1481 369.6 1481 369.9 1480 369.9 1480 368.8 1479 368.8 1479 367.4 1478 367.4 1478 367.9 1477 367.9 1477 368.0 1476 368.0 1476 367.5 1475 367.5 1475 367.7 1474 367.7 1474 368.3 1473 368.3 1473 369.4 1472 369.4 1472 369.9 1471 369.9 1471 369.6 1470 369.6 1470 368.3 1469 368.3 1469 367.7 1468 367.7 1468 368.0 1467 368.0 1467 367.5 1466 367.5 1466 367.6 1465 367.6 1465 366.6 1464 366.6 1464 366.5 1463 366.5 1463 368.9 1462 368.9 1462 368.1 1461 368.1 1461 367.3 1460 367.3 1460 369.1 1459 369.1 1459 366.8 1458 366.8 1458 367.1 1457 367.1 1457 366.5 1456 366.5 1456 367.6 1455 367.6 1455 367.8 1454 367.8 1454 368.1 1453 368.1 1453 368.6 1452 368.6 1452 367.1 1451 367.1 1451 368.4 1450 368.4 1450 369.0 1449 369.0 1449 369.3 1448 369.3 1448 370.0 1447 370.0 1447 366.9 1446 366.9 1446 369.6 1445 369.6 1445 366.8 1444 366.8 1444 369.7 1443 369.7 1443 368.8 1442 368.8 1442 368.7 1441 368.7 1441 366.7 1440 366.7 1440 368.5 1439 368.5 1439 366.4 1438 366.4 1438 368.8 1437 368.8 1437 369.0 1436 369.0 1436 370.1 1435 370.1 1435 367.7 1434 367.7 1434 366.8 1433 366.8 1433 369.9 1432 369.9 1432 368.5 1431 368.5 1431 368.6 1430 368.6 1430 367.6 1429 367.6 1429 366.7 1428 366.7 1428 367.3 1427 367.3 1427 366.6 1426 366.6 1426 369.9 1425 369.9 1425 369.0 1424 369.0 1424 368.6 1423 368.6 1423 367.8 1422 367.8 1422 366.9 1421 366.9 1421 369.8 1420 369.8 1420 369.6 1419 369.6 1419 369.0 1418 369.0 1418 367.7 1417 367.7 1417 366.5 1416 366.5 1416 367.2 1415 367.2 1415 369.6 1414 369.6 1414 367.8 1413 367.8 1413 368.3 1412 368.3 1412 367.6 1411 367.6 1411 367.7 1410 367.7 1410 369.3 1409 369.3 1409 366.6 1408 366.6 1408 369.0 1407 369.0 1407 369.0 1406 369.0 1406 368.4 1405 368.4 1405 369.5 1404 369.5 1404 368.8 1403 368.8 1403 366.9 1402 366.9 1402 369.2 1401 369.2 1401 367.8 1400 367.8 1400 367.7 1399 367.7 1399 366.8 1398 366.8 1398 368.7 1397 368.7 1397 367.9 1396 367.9 1396 367.0 1395 367.0 1395 369.5 1394 369.5 1394 367.7 1393 367.7 1393 368.5 1392 368.5 1392 367.8 1391 367.8 1391 366.6 1390 366.6 1390 367.5 1389 367.5 1389 366.5 1388 366.5 1388 367.4 1387 367.4 1387 369.0 1386 369.0 1386 368.4 1385 368.4 1385 368.5 1384 368.5 1384 369.4 1383 369.4 1383 366.7 1382 366.7 1382 367.2 1381 367.2 1381 367.1 1380 367.1 1380 368.9 1379 368.9 1379 369.5 1378 369.5 1378 369.1 1377 369.1 1377 367.6 1376 367.6 1376 368.3 1375 368.3 1375 369.3 1374 369.3 1374 368.5 1373 368.5 1373 368.7 1372 368.7 1372 366.4 1371 366.4 1371 366.6 1370 366.6 1370 366.8 1369 366.8 1369 367.1 1368 367.1 1368 368.8 1367 368.8 1367 367.1 1366 367.1 1366 369.0 1365 369.0 1365 367.4 1364 367.4 1364 368.4 1363 368.4 1363 367.9 1362 367.9 1362 368.9 1361 368.9 1361 369.5 1360 369.5 1360 366.5 1359 366.5 1359 367.6 1358 367.6 1358 369.0 1357 369.0 1357 369.3 1356 369.3 1356 368.7 1355 368.7 1355 368.9 1354 368.9 1354 367.1 1353 367.1 1353 368.4 1352 368.4 1352 369.4 1351 369.4 1351 367.6 1350 367.6 1350 367.4 1349 367.4 1349 366.9 1348 366.9 1348 368.0 1347 368.0 1347 366.9 1346 366.9 1346 368.0 1345 368.0 1345 368.3 1344 368.3 1344 368.9 1343 368.9 1343 366.3 1342 366.3 1342 366.4 1341 366.4 1341 367.5 1340 367.5 1340 369.0 1339 369.0 1339 366.6 1338 366.6 1338 368.4 1337 368.4 1337 369.7 1336 369.7 1336 370.0 1335 370.0 1335 367.6 1334 367.6 1334 368.3 1333 368.3 1333 368.8 1332 368.8 1332 366.7 1331 366.7 1331 367.3 1330 367.3 1330 366.5 1329 366.5 1329 369.3 1328 369.3 1328 367.4 1327 367.4 1327 368.9 1326 368.9 1326 368.0 1325 368.0 1325 367.5 1324 367.5 1324 368.8 1323 368.8 1323 368.0 1322 368.0 1322 368.3 1321 368.3 1321 367.6 1320 367.6 1320 367.8 1319 367.8 1319 369.7 1318 369.7 1318 368.6 1317 368.6 1317 367.6 1316 367.6 1316 367.5 1315 367.5 1315 369.6 1314 369.6 1314 367.0 1313 367.0 1313 367.0 1312 367.0 1312 367.7 1311 367.7 1311 369.9 1310 369.9 1310 370.2 1309 370.2 1309 368.7 1308 368.7 1308 367.4 1307 367.4 1307 370.0 1306 370.0 1306 368.9 1305 368.9 1305 368.1 1304 368.1 1304 366.9 1303 366.9 1303 367.5 1302 367.5 1302 368.3 1301 368.3 1301 367.3 1300 367.3 1300 368.5 1299 368.5 1299 368.5 1298 368.5 1298 367.6 1297 367.6 1297 370.0 1296 370.0 1296 367.9 1295 367.9 1295 369.4 1294 369.4 1294 370.3 1293 370.3 1293 368.3 1292 368.3 1292 370.2 1291 370.2 1291 368.4 1290 368.4 1290 368.4 1289 368.4 1289 368.6 1288 368.6 1288 370.5 1287 370.5 1287 368.2 1286 368.2 1286 369.8 1285 369.8 1285 369.0 1284 369.0 1284 370.0 1283 370.0 1283 366.9 1282 366.9 1282 368.8 1281 368.8 1281 367.3 1280 367.3 1280 369.9 1279 369.9 1279 368.6 1278 368.6 1278 367.8 1277 367.8 1277 367.1 1276 367.1 1276 368.2 1275 368.2 1275 369.1 1274 369.1 1274 367.3 1273 367.3 1273 368.4 1272 368.4 1272 368.1 1271 368.1 1271 367.5 1270 367.5 1270 368.1 1269 368.1 1269 370.4 1268 370.4 1268 368.4 1267 368.4 1267 369.9 1266 369.9 1266 371.0 1265 371.0 1265 370.2 1264 370.2 1264 370.1 1263 370.1 1263 368.3 1262 368.3 1262 368.4 1261 368.4 1261 367.8 1260 367.8 1260 367.4 1259 367.4 1259 367.7 1258 367.7 1258 367.6 1257 367.6 1257 370.0 1256 370.0 1256 368.8 1255 368.8 1255 368.4 1254 368.4 1254 368.8 1253 368.8 1253 368.1 1252 368.1 1252 369.3 1251 369.3 1251 369.9 1250 369.9 1250 369.5 1249 369.5 1249 369.1 1248 369.1 1248 368.1 1247 368.1 1247 369.7 1246 369.7 1246 367.7 1245 367.7 1245 368.7 1244 368.7 1244 368.4 1243 368.4 1243 369.0 1242 369.0 1242 367.5 1241 367.5 1241 370.2 1240 370.2 1240 368.9 1239 368.9 1239 369.5 1238 369.5 1238 369.7 1237 369.7 1237 369.5 1236 369.5 1236 369.9 1235 369.9 1235 368.9 1234 368.9 1234 368.3 1233 368.3 1233 369.9 1232 369.9 1232 370.2 1231 370.2 1231 368.5 1230 368.5 1230 370.6 1229 370.6 1229 370.2 1228 370.2 1228 370.4 1227 370.4 1227 368.9 1226 368.9 1226 366.9 1225 366.9 1225 369.9 1224 369.9 1224 367.3 1223 367.3 1223 368.4 1222 368.4 1222 368.6 1221 368.6 1221 369.3 1220 369.3 1220 369.8 1219 369.8 1219 367.5 1218 367.5 1218 367.7 1217 367.7 1217 367.6 1216 367.6 1216 367.9 1215 367.9 1215 369.4 1214 369.4 1214 368.9 1213 368.9 1213 368.7 1212 368.7 1212 368.8 1211 368.8 1211 369.3 1210 369.3 1210 369.0 1209 369.0 1209 368.7 1208 368.7 1208 368.8 1207 368.8 1207 369.1 1206 369.1 1206 369.7 1205 369.7 1205 368.9 1204 368.9 1204 369.2 1203 369.2 1203 370.2 1202 370.2 1202 370.1 1201 370.1 1201 368.0 1200 368.0 1200 368.7 1199 368.7 1199 368.3 1198 368.3 1198 368.5 1197 368.5 1197 369.4 1196 369.4 1196 368.0 1195 368.0 1195 367.5 1194 367.5 1194 368.7 1193 368.7 1193 368.7 1192 368.7 1192 367.7 1191 367.7 1191 369.3 1190 369.3 1190 367.6 1189 367.6 1189 370.2 1188 370.2 1188 368.2 1187 368.2 1187 368.1 1186 368.1 1186 368.2 1185 368.2 1185 368.4 1184 368.4 1184 370.8 1183 370.8 1183 370.8 1182 370.8 1182 367.1 1181 367.1 1181 367.3 1180 367.3 1180 368.5 1179 368.5 1179 369.8 1178 369.8 1178 367.7 1177 367.7 1177 367.3 1176 367.3 1176 369.2 1175 369.2 1175 370.5 1174 370.5 1174 369.1 1173 369.1 1173 368.1 1172 368.1 1172 368.3 1171 368.3 1171 368.7 1170 368.7 1170 368.3 1169 368.3 1169 369.9 1168 369.9 1168 369.4 1167 369.4 1167 370.0 1166 370.0 1166 370.1 1165 370.1 1165 367.2 1164 367.2 1164 367.8 1163 367.8 1163 368.2 1162 368.2 1162 368.2 1161 368.2 1161 368.9 1160 368.9 1160 367.7 1159 367.7 1159 368.1 1158 368.1 1158 367.8 1157 367.8 1157 370.5 1156 370.5 1156 368.8 1155 368.8 1155 369.4 1154 369.4 1154 369.4 1153 369.4 1153 367.8 1152 367.8 1152 370.0 1151 370.0 1151 368.6 1150 368.6 1150 369.6 1149 369.6 1149 367.8 1148 367.8 1148 368.3 1147 368.3 1147 369.6 1146 369.6 1146 367.3 1145 367.3 1145 369.3 1144 369.3 1144 367.7 1143 367.7 1143 369.3 1142 369.3 1142 368.9 1141 368.9 1141 370.5 1140 370.5 1140 369.9 1139 369.9 1139 366.8 1138 366.8 1138 370.2 1137 370.2 1137 368.6 1136 368.6 1136 367.7 1135 367.7 1135 369.3 1134 369.3 1134 368.2 1133 368.2 1133 370.8 1132 370.8 1132 369.8 1131 369.8 1131 370.7 1130 370.7 1130 368.0 1129 368.0 1129 370.7 1128 370.7 1128 365.0 1127 365.0 1127 362.4 1126 362.4 1126 359.9 1125 359.9 1125 356.8 1124 356.8 1124 357.3 1123 357.3 1123 357.8 1122 357.8 1122 357.6 1121 357.6 1121 360.2 1120 360.2 1120 362.9 1119 362.9 1119 364.5 1118 364.5 1118 368.3 1117 368.3 1117 371.8 1116 371.8 1116 371.4 1115 371.4 1115 368.2 1114 368.2 1114 371.7 1113 371.7 1113 369.4 1112 369.4 1112 371.3 1111 371.3 1111 371.2 1110 371.2 1110 371.5 1109 371.5 1109 369.7 1108 369.7 1108 372.3 1107 372.3 1107 372.9 1106 372.9 1106 368.6 1105 368.6 1105 369.9 1104 369.9 1104 370.6 1103 370.6 1103 370.8 1102 370.8 1102 369.2 1101 369.2 1101 368.9 1100 368.9 1100 368.6 1099 368.6 1099 371.0 1098 371.0 1098 369.0 1097 369.0 1097 370.9 1096 370.9 1096 371.1 1095 371.1 1095 369.6 1094 369.6 1094 370.4 1093 370.4 1093 371.6 1092 371.6 1092 371.3 1091 371.3 1091 371.9 1090 371.9 1090 369.2 1089 369.2 1089 370.9 1088 370.9 1088 368.3 1087 368.3 1087 370.0 1086 370.0 1086 369.2 1085 369.2 1085 369.6 1084 369.6 1084 370.6 1083 370.6 1083 369.5 1082 369.5 1082 370.7 1081 370.7 1081 370.0 1080 370.0 1080 368.8 1079 368.8 1079 370.3 1078 370.3 1078 372.0 1077 372.0 1077 371.5 1076 371.5 1076 372.0 1075 372.0 1075 369.0 1074 369.0 1074 369.9 1073 369.9 1073 369.2 1072 369.2 1072 369.8 1071 369.8 1071 369.0 1070 369.0 1070 371.3 1069 371.3 1069 369.8 1068 369.8 1068 370.7 1067 370.7 1067 371.4 1066 371.4 1066 369.3 1065 369.3 1065 368.5 1064 368.5 1064 372.1 1063 372.1 1063 369.8 1062 369.8 1062 372.6 1061 372.6 1061 370.3 1060 370.3 1060 371.9 1059 371.9 1059 369.3 1058 369.3 1058 371.7 1057 371.7 1057 368.4 1056 368.4 1056 370.3 1055 370.3 1055 369.2 1054 369.2 1054 369.8 1053 369.8 1053 369.2 1052 369.2 1052 369.3 1051 369.3 1051 369.7 1050 369.7 1050 369.2 1049 369.2 1049 370.9 1048 370.9 1048 369.1 1047 369.1 1047 370.7 1046 370.7 1046 371.8 1045 371.8 1045 370.4 1044 370.4 1044 371.0 1043 371.0 1043 371.6 1042 371.6 1042 370.1 1041 370.1 1041 370.9 1040 370.9 1040 372.3 1039 372.3 1039 371.2 1038 371.2 1038 371.5 1037 371.5 1037 369.2 1036 369.2 1036 371.3 1035 371.3 1035 368.6 1034 368.6 1034 370.1 1033 370.1 1033 371.0 1032 371.0 1032 368.8 1031 368.8 1031 371.4 1030 371.4 1030 370.8 1029 370.8 1029 369.3 1028 369.3 1028 370.5 1027 370.5 1027 373.0 1026 373.0 1026 368.2 1025 368.2 1025 368.4 1024 368.4 1024 371.6 1023 371.6 1023 369.8 1022 369.8 1022 369.5 1021 369.5 1021 370.5 1020 370.5 1020 370.3 1019 370.3 1019 371.8 1018 371.8 1018 369.0 1017 369.0 1017 372.3 1016 372.3 1016 369.9 1015 369.9 1015 370.4 1014 370.4 1014 369.5 1013 369.5 1013 369.9 1012 369.9 1012 369.7 1011 369.7 1011 370.3 1010 370.3 1010 369.2 1009 369.2 1009 370.1 1008 370.1 1008 368.2 1007 368.2 1007 365.7 1006 365.7 1006 367.3 1005 367.3 1005 367.0 1004 367.0 1004 364.4 1003 364.4 1003 366.0 1002 366.0 1002 365.5 1001 365.5 1001 365.3 1000 365.3 1000 365.3 999 365.3 999 365.8 998 365.8 998 365.8 997 365.8 997 365.8 996 365.8 996 365.7 995 365.7 995 365.9 994 365.9 994 366.9 993 366.9 993 365.9 992 365.9 992 364.2 991 364.2 991 366.4 990 366.4 990 365.6 989 365.6 989 365.0 988 365.0 988 364.1 987 364.1 987 366.5 986 366.5 986 366.7 985 366.7 985 365.9 984 365.9 984 365.8 983 365.8 983 364.4 982 364.4 982 364.1 981 364.1 981 365.0 980 365.0 980 366.3 979 366.3 979 364.6 978 364.6 978 365.9 977 365.9 977 365.7 976 365.7 976 364.7 975 364.7 975 363.9 974 363.9 974 365.5 973 365.5 973 366.2 972 366.2 972 366.4 971 366.4 971 367.5 970 367.5 970 365.6 969 365.6 969 366.7 968 366.7 968 368.0 967 368.0 967 367.6 966 367.6 966 366.2 965 366.2 965 366.3 964 366.3 964 368.9 963 368.9 963 367.7 962 367.7 962 365.6 961 365.6 961 366.9 960 366.9 960 367.9 959 367.9 959 366.0 958 366.0 958 368.5 957 368.5 957 366.8 956 366.8 956 367.0 955 367.0 955 367.4 954 367.4 954 366.1 953 366.1 953 367.9 952 367.9 952 366.9 951 366.9 951 368.9 950 368.9 950 368.8 949 368.8 949 369.4 948 369.4 948 368.5 947 368.5 947 367.9 946 367.9 946 365.7 945 365.7 945 368.5 944 368.5 944 367.2 943 367.2 943 368.2 942 368.2 942 366.3 941 366.3 941 366.5 940 366.5 940 368.9 939 368.9 939 368.4 938 368.4 938 366.6 937 366.6 937 367.1 936 367.1 936 365.9 935 365.9 935 366.5 934 366.5 934 367.2 933 367.2 933 367.7 932 367.7 932 366.9 931 366.9 931 368.6 930 368.6 930 368.6 929 368.6 929 368.8 928 368.8 928 367.8 927 367.8 927 369.2 926 369.2 926 369.0 925 369.0 925 368.2 924 368.2 924 366.9 923 366.9 923 368.8 922 368.8 922 366.1 921 366.1 921 367.5 920 367.5 920 368.6 919 368.6 919 368.1 918 368.1 918 368.7 917 368.7 917 367.9 916 367.9 916 367.6 915 367.6 915 366.3 914 366.3 914 367.0 913 367.0 913 366.5 912 366.5 912 366.5 911 366.5 911 366.3 910 366.3 910 366.1 909 366.1 909 369.0 908 369.0 908 366.8 907 366.8 907 368.3 906 368.3 906 366.5 905 366.5 905 368.0 904 368.0 904 368.1 903 368.1 903 367.6 902 367.6 902 366.3 901 366.3 901 368.4 900 368.4 900 366.8 899 366.8 899 367.7 898 367.7 898 365.5 897 365.5 897 368.0 896 368.0 896 366.5 895 366.5 895 367.3 894 367.3 894 365.3 893 365.3 893 366.7 892 366.7 892 366.9 891 366.9 891 365.6 890 365.6 890 365.2 889 365.2 889 364.2 888 364.2 888 366.3 887 366.3 887 365.3 886 365.3 886 365.7 885 365.7 885 365.7 884 365.7 884 364.9 883 364.9 883 366.4 882 366.4 882 366.7 881 366.7 881 365.8 880 365.8 880 365.5 879 365.5 879 364.9 878 364.9 878 365.7 877 365.7 877 365.5 876 365.5 876 364.6 875 364.6 875 366.6 874 366.6 874 367.1 873 367.1 873 366.4 872 366.4 872 367.0 871 367.0 871 365.4 870 365.4 870 364.8 869 364.8 869 365.5 868 365.5 868 366.1 867 366.1 867 365.7 866 365.7 866 366.8 865 366.8 865 364.6 864 364.6 864 364.8 863 364.8 863 365.1 862 365.1 862 366.9 861 366.9 861 366.2 860 366.2 860 366.9 859 366.9 859 366.5 858 366.5 858 366.6 857 366.6 857 365.6 856 365.6 856 366.8 855 366.8 855 366.0 854 366.0 854 365.7 853 365.7 853 364.9 852 364.9 852 366.3 851 366.3 851 366.9 850 366.9 850 364.6 849 364.6 849 366.5 848 366.5 848 366.6 847 366.6 847 365.6 846 365.6 846 366.4 845 366.4 845 366.7 844 366.7 844 366.3 843 366.3 843 364.4 842 364.4 842 365.3 841 365.3 841 365.8 840 365.8 840 365.1 839 365.1 839 366.8 838 366.8 838 364.9 837 364.9 837 365.7 836 365.7 836 365.5 835 365.5 835 366.2 834 366.2 834 366.4 833 366.4 833 366.2 832 366.2 832 365.6 831 365.6 831 364.9 830 364.9 830 366.3 829 366.3 829 365.3 828 365.3 828 367.0 827 367.0 827 366.1 826 366.1 826 366.1 825 366.1 825 365.8 824 365.8 824 365.4 823 365.4 823 366.6 822 366.6 822 365.6 821 365.6 821 366.6 820 366.6 820 365.0 819 365.0 819 365.2 818 365.2 818 365.2 817 365.2 817 366.7 816 366.7 816 365.8 815 365.8 815 366.7 814 366.7 814 367.3 813 367.3 813 366.2 812 366.2 812 366.9 811 366.9 811 365.4 810 365.4 810 364.6 809 364.6 809 365.6 808 365.6 808 367.0 807 367.0 807 367.2 806 367.2 806 367.3 805 367.3 805 367.1 804 367.1 804 365.8 803 365.8 803 365.2 802 365.2 802 365.6 801 365.6 801 367.0 800 367.0 800 367.2 799 367.2 799 366.9 798 366.9 798 365.6 797 365.6 797 366.0 796 366.0 796 365.7 795 365.7 795 367.1 794 367.1 794 365.6 793 365.6 793 366.2 792 366.2 792 364.8 791 364.8 791 365.3 790 365.3 790 366.6 789 366.6 789 367.4 788 367.4 788 366.7 787 366.7 787 365.1 786 365.1 786 365.3 785 365.3 785 366.9 784 366.9 784 366.2 783 366.2 783 365.2 782 365.2 782 365.3 781 365.3 781 364.8 780 364.8 780 366.7 779 366.7 779 366.8 778 366.8 778 366.1 777 366.1 777 366.3 776 366.3 776 366.5 775 366.5 775 365.3 774 365.3 774 365.3 773 365.3 773 366.7 772 366.7 772 367.1 771 367.1 771 367.1 770 367.1 770 367.1 769 367.1 769 366.7 768 366.7 768 367.4 767 367.4 767 365.0 766 365.0 766 367.5 765 367.5 765 367.0 764 367.0 764 366.6 763 366.6 763 365.0 762 365.0 762 366.3 761 366.3 761 366.7 760 366.7 760 365.7 759 365.7 759 365.4 758 365.4 758 366.2 757 366.2 757 366.9 756 366.9 756 366.3 755 366.3 755 366.0 754 366.0 754 365.0 753 365.0 753 366.1 752 366.1 752 366.6 751 366.6 751 365.4 750 365.4 750 366.2 749 366.2 749 365.4 748 365.4 748 367.3 747 367.3 747 365.1 746 365.1 746 366.1 745 366.1 745 365.7 744 365.7 744 365.2 743 365.2 743 364.9 742 364.9 742 365.5 741 365.5 741 366.7 740 366.7 740 367.8 739 367.8 739 366.8 738 366.8 738 366.2 737 366.2 737 365.5 736 365.5 736 366.1 735 366.1 735 366.5 734 366.5 734 366.0 733 366.0 733 365.2 732 365.2 732 364.7 731 364.7 731 366.0 730 366.0 730 365.7 729 365.7 729 365.1 728 365.1 728 367.4 727 367.4 727 366.1 726 366.1 726 364.6 725 364.6 725 364.8 724 364.8 724 366.4 723 366.4 723 366.0 722 366.0 722 365.9 721 365.9 721 366.7 720 366.7 720 366.1 719 366.1 719 365.3 718 365.3 718 364.6 717 364.6 717 364.7 716 364.7 716 366.8 715 366.8 715 366.6 714 366.6 714 365.9 713 365.9 713 364.8 712 364.8 712 367.3 711 367.3 711 367.9 710 367.9 710 365.6 709 365.6 709 367.0 708 367.0 708 366.4 707 366.4 707 365.4 706 365.4 706 367.6 705 367.6 705 367.1 704 367.1 704 368.0 703 368.0 703 367.5 702 367.5 702 367.7 701 367.7 701 366.4 700 366.4 700 368.8 699 368.8 699 366.0 698 366.0 698 367.2 697 367.2 697 366.8 696 366.8 696 367.4 695 367.4 695 368.6 694 368.6 694 367.7 693 367.7 693 368.1 692 368.1 692 369.1 691 369.1 691 367.7 690 367.7 690 368.5 689 368.5 689 368.2 688 368.2 688 366.8 687 366.8 687 367.6 686 367.6 686 368.2 685 368.2 685 367.9 684 367.9 684 367.4 683 367.4 683 366.8 682 366.8 682 367.5 681 367.5 681 368.7 680 368.7 680 366.9 679 366.9 679 369.2 678 369.2 678 369.1 677 369.1 677 367.9 676 367.9 676 367.6 675 367.6 675 366.1 674 366.1 674 366.6 673 366.6 673 368.5 672 368.5 672 366.2 671 366.2 671 366.2 670 366.2 670 365.9 669 365.9 669 365.7 668 365.7 668 365.7 667 365.7 667 365.8 666 365.8 666 365.9 665 365.9 665 365.8 664 365.8 664 368.1 663 368.1 663 367.9 662 367.9 662 368.8 661 368.8 661 367.3 660 367.3 660 368.0 659 368.0 659 368.3 658 368.3 658 366.0 657 366.0 657 366.2 656 366.2 656 369.1 655 369.1 655 367.5 654 367.5 654 366.7 653 366.7 653 368.4 652 368.4 652 367.7 651 367.7 651 365.9 650 365.9 650 365.9 649 365.9 649 368.8 648 368.8 648 368.2 647 368.2 647 366.8 646 366.8 646 366.2 645 366.2 645 367.5 644 367.5 644 367.4 643 367.4 643 366.0 642 366.0 642 366.5 641 366.5 641 368.4 640 368.4 640 367.9 639 367.9 639 367.8 638 367.8 638 366.6 637 366.6 637 367.7 636 367.7 636 366.4 635 366.4 635 368.7 634 368.7 634 367.9 633 367.9 633 366.2 632 366.2 632 368.4 631 368.4 631 367.6 630 367.6 630 368.8 629 368.8 629 367.5 628 367.5 628 367.0 627 367.0 627 368.1 626 368.1 626 366.9 625 366.9 625 365.6 624 365.6 624 367.9 623 367.9 623 367.3 622 367.3 622 365.6 621 365.6 621 367.9 620 367.9 620 367.8 619 367.8 619 368.1 618 368.1 618 368.3 617 368.3 617 367.0 616 367.0 616 367.2 615 367.2 615 365.5 614 365.5 614 366.8 613 366.8 613 367.0 612 367.0 612 366.1 611 366.1 611 365.6 610 365.6 610 366.6 609 366.6 609 368.5 608 368.5 608 366.1 607 366.1 607 365.5 606 365.5 606 366.4 605 366.4 605 367.6 604 367.6 604 367.8 603 367.8 603 365.2 602 365.2 602 366.1 601 366.1 601 366.6 600 366.6 600 367.2 599 367.2 599 367.5 598 367.5 598 366.6 597 366.6 597 365.9 596 365.9 596 364.9 595 364.9 595 366.1 594 366.1 594 366.2 593 366.2 593 367.2 592 367.2 592 365.4 591 365.4 591 367.6 590 367.6 590 367.5 589 367.5 589 367.8 588 367.8 588 366.5 587 366.5 587 367.2 586 367.2 586 365.5 585 365.5 585 365.2 584 365.2 584 365.2 583 365.2 583 366.3 582 366.3 582 366.3 581 366.3 581 366.3 580 366.3 580 365.4 579 365.4 579 365.3 578 365.3 578 365.6 577 365.6 577 365.9 576 365.9 576 366.3 575 366.3 575 367.5 574 367.5 574 365.2 573 365.2 573 367.2 572 367.2 572 366.3 571 366.3 571 366.2 570 366.2 570 366.5 569 366.5 569 365.3 568 365.3 568 365.7 567 365.7 567 366.1 566 366.1 566 366.9 565 366.9 565 368.0 564 368.0 564 366.7 563 366.7 563 366.1 562 366.1 562 364.8 561 364.8 561 364.9 560 364.9 560 365.7 559 365.7 559 364.9 558 364.9 558 367.8 557 367.8 557 365.4 556 365.4 556 365.8 555 365.8 555 366.4 554 366.4 554 364.5 553 364.5 553 365.2 552 365.2 552 364.6 551 364.6 551 364.5 550 364.5 550 365.1 549 365.1 549 365.3 548 365.3 548 365.3 547 365.3 547 367.4 546 367.4 546 363.9 545 363.9 545 364.2 544 364.2 544 363.4 543 363.4 543 361.9 542 361.9 542 361.1 541 361.1 541 362.2 540 362.2 540 361.4 539 361.4 539 362.7 538 362.7 538 364.4 537 364.4 537 364.6 536 364.6 536 365.3 535 365.3 535 363.6 534 363.6 534 363.9 533 363.9 533 363.9 532 363.9 532 363.7 531 363.7 531 365.3 530 365.3 530 364.6 529 364.6 529 363.6 528 363.6 528 364.0 527 364.0 527 364.3 526 364.3 526 364.2 525 364.2 525 363.8 524 363.8 524 364.4 523 364.4 523 364.0 522 364.0 522 365.1 521 365.1 521 365.3 520 365.3 520 364.6 519 364.6 519 364.4 518 364.4 518 363.5 517 363.5 517 364.7 516 364.7 516 365.6 515 365.6 515 365.4 514 365.4 514 365.5 513 365.5 513 365.4 512 365.4 512 364.4 511 364.4 511 364.4 510 364.4 510 365.4 509 365.4 509 364.6 508 364.6 508 364.1 507 364.1 507 363.9 506 363.9 506 364.3 505 364.3 505 363.4 504 363.4 504 364.4 503 364.4 503 363.6 502 363.6 502 363.4 501 363.4 501 365.2 500 365.2 500 364.1 499 364.1 499 363.4 498 363.4 498 365.5 497 365.5 497 363.9 496 363.9 496 365.4 495 365.4 495 364.0 494 364.0 494 364.4 493 364.4 493 366.8 492 366.8 492 364.6 491 364.6 491 365.5 490 365.5 490 365.8 489 365.8 489 365.3 488 365.3 488 366.2 487 366.2 487 366.0 486 366.0 486 366.2 485 366.2 485 364.7 484 364.7 484 365.6 483 365.6 483 365.6 482 365.6 482 365.0 481 365.0 481 364.9 480 364.9 480 364.2 479 364.2 479 364.5 478 364.5 478 364.6 477 364.6 477 366.2 476 366.2 476 365.0 475 365.0 475 366.0 474 366.0 474 365.5 473 365.5 473 365.3 472 365.3 472 365.8 471 365.8 471 364.7 470 364.7 470 366.0 469 366.0 469 364.9 468 364.9 468 367.0 467 367.0 467 366.3 466 366.3 466 366.4 465 366.4 465 365.0 464 365.0 464 366.0 463 366.0 463 365.8 462 365.8 462 364.9 461 364.9 461 365.8 460 365.8 460 367.2 459 367.2 459 366.0 458 366.0 458 366.2 457 366.2 457 364.8 456 364.8 456 365.8 455 365.8 455 365.9 454 365.9 454 366.0 453 366.0 453 366.0 452 366.0 452 365.0 451 365.0 451 366.7 450 366.7 450 365.8 449 365.8 449 363.7 448 363.7 448 365.0 447 365.0 447 365.5 446 365.5 446 363.3 445 363.3 445 364.9 444 364.9 444 364.2 443 364.2 443 365.3 442 365.3 442 365.2 441 365.2 441 365.0 440 365.0 440 365.8 439 365.8 439 364.4 438 364.4 438 364.8 437 364.8 437 363.4 436 363.4 436 365.5 435 365.5 435 365.8 434 365.8 434 365.4 433 365.4 433 364.0 432 364.0 432 366.5 431 366.5 431 365.4 430 365.4 430 365.2 429 365.2 429 365.0 428 365.0 428 365.6 427 365.6 427 364.0 426 364.0 426 363.9 425 363.9 425 365.4 424 365.4 424 366.2 423 366.2 423 366.1 422 366.1 422 364.2 421 364.2 421 366.9 420 366.9 420 365.6 419 365.6 419 364.8 418 364.8 418 365.5 417 365.5 417 364.6 416 364.6 416 363.8 415 363.8 415 364.8 414 364.8 414 365.8 413 365.8 413 364.0 412 364.0 412 366.4 411 366.4 411 364.5 410 364.5 410 365.2 409 365.2 409 364.6 408 364.6 408 366.3 407 366.3 407 366.7 406 366.7 406 366.9 405 366.9 405 364.4 404 364.4 404 364.2 403 364.2 403 365.3 402 365.3 402 365.7 401 365.7 401 364.9 400 364.9 400 364.0 399 364.0 399 364.9 398 364.9 398 365.3 397 365.3 397 366.3 396 366.3 396 364.0 395 364.0 395 364.4 394 364.4 394 366.3 393 366.3 393 364.5 392 364.5 392 366.1 391 366.1 391 365.8 390 365.8 390 365.8 389 365.8 389 363.9 388 363.9 388 365.3 387 365.3 387 364.9 386 364.9 386 365.9 385 365.9 385 365.0 384 365.0 384 365.8 383 365.8 383 366.7 382 366.7 382 364.1 381 364.1 381 365.1 380 365.1 380 365.6 379 365.6 379 363.8 378 363.8 378 364.6 377 364.6 377 364.5 376 364.5 376 363.5 375 363.5 375 364.7 374 364.7 374 365.9 373 365.9 373 365.4 372 365.4 372 364.9 371 364.9 371 364.2 370 364.2 370 365.4 369 365.4 369 364.9 368 364.9 368 365.7 367 365.7 367 364.2 366 364.2 366 365.7 365 365.7 365 364.4 364 364.4 364 364.6 363 364.6 363 364.4 362 364.4 362 364.1 361 364.1 361 365.7 360 365.7 360 364.2 359 364.2 359 364.4 358 364.4 358 363.7 357 363.7 357 364.5 356 364.5 356 364.7 355 364.7 355 365.1 354 365.1 354 366.6 353 366.6 353 365.6 352 365.6 352 365.2 351 365.2 351 364.0 350 364.0 350 365.1 349 365.1 349 364.6 348 364.6 348 365.5 347 365.5 347 364.8 346 364.8 346 365.6 345 365.6 345 363.7 344 363.7 344 363.8 343 363.8 343 365.6 342 365.6 342 365.9 341 365.9 341 364.7 340 364.7 340 363.6 339 363.6 339 364.4 338 364.4 338 366.3 337 366.3 337 365.1 336 365.1 336 364.9 335 364.9 335 366.3 334 366.3 334 363.7 333 363.7 333 365.0 332 365.0 332 365.8 331 365.8 331 364.9 330 364.9 330 364.0 329 364.0 329 364.9 328 364.9 328 363.8 327 363.8 327 365.7 326 365.7 326 365.7 325 365.7 325 363.6 324 363.6 324 365.2 323 365.2 323 363.9 322 363.9 322 363.7 321 363.7 321 364.8 320 364.8 320 363.5 319 363.5 319 364.9 318 364.9 318 364.8 317 364.8 317 364.4 316 364.4 316 365.6 315 365.6 315 364.1 314 364.1 314 364.4 313 364.4 313 365.2 312 365.2 312 365.4 311 365.4 311 364.6 310 364.6 310 365.3 309 365.3 309 364.1 308 364.1 308 365.5 307 365.5 307 364.5 306 364.5 306 364.3 305 364.3 305 364.7 304 364.7 304 364.4 303 364.4 303 364.8 302 364.8 302 365.1 301 365.1 301 363.6 300 363.6 300 365.0 299 365.0 299 366.0 298 366.0 298 364.7 297 364.7 297 365.4 296 365.4 296 364.2 295 364.2 295 364.7 294 364.7 294 364.6 293 364.6 293 364.8 292 364.8 292 365.0 291 365.0 291 363.3 290 363.3 290 363.0 289 363.0 289 362.1 288 362.1 288 361.6 287 361.6 287 361.7 286 361.7 286 362.2 285 362.2 285 361.3 284 361.3 284 362.5 283 362.5 283 362.0 282 362.0 282 361.5 281 361.5 281 361.7 280 361.7 280 362.4 279 362.4 279 362.7 278 362.7 278 363.1 277 363.1 277 361.8 276 361.8 276 362.6 275 362.6 275 363.5 274 363.5 274 362.1 273 362.1 273 362.0 272 362.0 272 362.9 271 362.9 271 363.0 270 363.0 270 362.3 269 362.3 269 361.4 268 361.4 268 363.3 267 363.3 267 363.1 266 363.1 266 363.6 265 363.6 265 364.8 264 364.8 264 364.3 263 364.3 263 366.2 262 366.2 262 365.7 261 365.7 261 366.4 260 366.4 260 365.1 259 365.1 259 366.0 258 366.0 258 364.3 257 364.3 257 365.8 256 365.8 256 365.5 255 365.5 255 364.6 254 364.6 254 365.8 253 365.8 253 367.0 252 367.0 252 367.2 251 367.2 251 366.1 250 366.1 250 366.0 249 366.0 249 365.2 248 365.2 248 367.5 247 367.5 247 367.3 246 367.3 246 365.3 245 365.3 245 362.8 244 362.8 244 362.5 243 362.5 243 362.4 242 362.4 242 362.5 241 362.5 241 362.1 240 362.1 240 362.6 239 362.6 239 362.3 238 362.3 238 362.0 237 362.0 237 362.5 236 362.5 236 361.5 235 361.5 235 361.1 234 361.1 234 362.0 233 362.0 233 361.6 232 361.6 232 361.4 231 361.4 231 362.4 230 362.4 230 361.5 229 361.5 229 362.0 228 362.0 228 362.0 227 362.0 227 361.7 226 361.7 226 361.8 225 361.8 225 362.4 224 362.4 224 361.0 223 361.0 223 362.3 222 362.3 222 362.3 221 362.3 221 361.5 220 361.5 220 361.4 219 361.4 219 362.3 218 362.3 218 362.1 217 362.1 217 362.5 216 362.5 216 361.2 215 361.2 215 362.3 214 362.3 214 361.1 213 361.1 213 362.6 212 362.6 212 361.1 211 361.1 211 361.6 210 361.6 210 361.6 209 361.6 209 362.4 208 362.4 208 362.0 207 362.0 207 361.0 206 361.0 206 362.0 205 362.0 205 361.7 204 361.7 204 361.0 203 361.0 203 361.2 202 361.2 202 361.2 201 361.2 201 361.0 200 361.0 200 361.6 199 361.6 199 362.3 198 362.3 198 361.8 197 361.8 197 362.2 196 362.2 196 362.3 195 362.3 195 361.4 194 361.4 194 362.1 193 362.1 193 362.0 192 362.0 192 362.3 191 362.3 191 362.1 190 362.1 190 362.2 189 362.2 189 361.6 188 361.6 188 361.0 187 361.0 187 361.1 186 361.1 186 362.6 185 362.6 185 362.4 184 362.4 184 362.2 183 362.2 183 361.1 182 361.1 182 362.7 181 362.7 181 361.2 180 361.2 180 362.7 179 362.7 179 362.7 178 362.7 178 361.8 177 361.8 177 361.1 176 361.1 176 361.6 175 361.6 175 361.7 174 361.7 174 361.8 173 361.8 173 362.3 172 362.3 172 361.1 171 361.1 171 361.1 170 361.1 170 361.1 169 361.1 169 362.3 168 362.3 168 362.3 167 362.3 167 361.7 166 361.7 166 361.0 165 361.0 165 360.8 164 360.8 164 360.9 163 360.9 163 362.5 162 362.5 162 362.4 161 362.4 161 362.3 160 362.3 160 362.2 159 362.2 159 361.0 158 361.0 158 362.8 157 362.8 157 363.0 156 363.0 156 361.3 155 361.3 155 360.8 154 360.8 154 360.6 153 360.6 153 360.2 152 360.2 152 359.9 151 359.9 151 359.2 150 359.2 150 359.8 149 359.8 149 359.5 148 359.5 148 359.7 147 359.7 147 359.7 146 359.7 146 358.9 145 358.9 145 358.8 144 358.8 144 358.9 143 358.9 143 359.2 142 359.2 142 359.1 141 359.1 141 359.1 140 359.1 140 359.5 139 359.5 139 359.1 138 359.1 138 359.4 137 359.4 137 359.3 136 359.3 136 359.7 135 359.7 135 359.9 134 359.9 134 359.6 133 359.6 133 359.8 132 359.8Z" fill="#6464dc"/></svg>
<div class="r" style="left:1848px;top:354px;width:41px;height:1px;background:#3232c8"></div>
<div class="r" style="left:1653px;top:283px;width:1px;height:143px;background:#e02020"></div>
<div class="r" style="left:1901px;top:128px;width:19px;height:825px;background:#f0f0f0"></div>
<div class="r" style="left:1904px;top:145px;width:13px;height:795px;background:#cdcdcd"></div>
<svg class="r" style="left:1905px;top:131px" width="11" height="8" viewBox="0 0 11 8"><path d="M1 6 L5.5 1.5 L10 6" fill="none" stroke="#606060" stroke-width="1.3"/></svg>
<svg class="r" style="left:1905px;top:940px" width="11" height="8" viewBox="0 0 11 8"><path d="M1 2 L5.5 6.5 L10 2" fill="none" stroke="#606060" stroke-width="1.3"/></svg>
<div class="r" style="left:129px;top:429px;width:586px;height:511px;background:#ebebeb"></div>
<div class="t" style="left:360.00px;top:437.30px;font-size:15px;color:#222;font-weight:normal;transform:scaleX(0.9534);transform-origin:0 0;">Frequency Analysis</div>
<div class="r" style="left:619px;top:442px;width:8px;height:2px;background:#777"></div>
<div class="r" style="left:645px;top:436px;width:10px;height:8px;border:1.5px solid #111;border-top-width:2.5px;box-sizing:border-box"></div>
<div class="r" style="left:663px;top:430px;width:45px;height:20px;background:#bababa"></div>
<svg class="r" style="left:681px;top:435px" width="10" height="10" viewBox="0 0 10 10"><path d="M1 1 L9 9 M9 1 L1 9" stroke="#fff" stroke-width="1.6"/></svg>
<div class="r" style="left:136px;top:459px;width:572px;height:474px;background:#f0f0f0;border:1px solid #dadada;box-sizing:border-box"></div>
<div class="r" style="left:137px;top:909px;width:570px;height:1px;background:#d8d8d8"></div>
<div class="r" style="left:185px;top:465px;width:517px;height:329px;background:#fff"></div>
<svg class="r" style="left:185px;top:465px" width="517" height="329" viewBox="0 0 517 329"><path d="M15.5 0 V329" stroke="#a8a8a8" stroke-width="1.3"/><path d="M55.5 0 V329" stroke="#a8a8a8" stroke-width="1.3"/><path d="M108.5 0 V329" stroke="#a8a8a8" stroke-width="1.3"/><path d="M162.5 0 V329" stroke="#a8a8a8" stroke-width="1.3"/><path d="M216.5 0 V329" stroke="#a8a8a8" stroke-width="1.3"/><path d="M269.5 0 V329" stroke="#a8a8a8" stroke-width="1.3"/><path d="M323.5 0 V329" stroke="#a8a8a8" stroke-width="1.3"/><path d="M377.5 0 V329" stroke="#a8a8a8" stroke-width="1.3"/><path d="M430.5 0 V329" stroke="#a8a8a8" stroke-width="1.3"/><path d="M484.5 0 V329" stroke="#a8a8a8" stroke-width="1.3"/><path d="M0 25.5 H517" stroke="#a8a8a8" stroke-width="1.3"/><path d="M0 53 H517" stroke="#a8a8a8" stroke-width="1.3"/><path d="M0 80.5 H517" stroke="#a8a8a8" stroke-width="1.3"/><path d="M0 108 H517" stroke="#a8a8a8" stroke-width="1.3"/><path d="M0 135.5 H517" stroke="#a8a8a8" stroke-width="1.3"/><path d="M0 163 H517" stroke="#a8a8a8" stroke-width="1.3"/><path d="M0 190.5 H517" stroke="#a8a8a8" stroke-width="1.3"/><path d="M0 218 H517" stroke="#a8a8a8" stroke-width="1.3"/><path d="M0 245.5 H517" stroke="#a8a8a8" stroke-width="1.3"/><path d="M0 273 H517" stroke="#a8a8a8" stroke-width="1.3"/><path d="M0 300.5 H517" stroke="#a8a8a8" stroke-width="1.3"/><path d="M1 329 L1.0 66.5 L1.5 61.5 L2.0 56.2 L2.5 50.8 L3.0 44.0 L3.5 46.7 L4.0 45.1 L4.5 43.9 L5.0 42.8 L5.5 45.6 L6.0 50.6 L6.5 50.0 L7.0 53.9 L7.5 56.0 L8.0 60.2 L8.5 64.0 L9.0 65.6 L9.5 70.1 L10.0 74.1 L10.5 80.2 L11.0 83.1 L11.5 81.9 L12.0 85.7 L12.5 84.3 L13.0 87.5 L13.5 89.0 L14.0 92.0 L14.5 99.0 L15.0 99.8 L15.5 102.6 L16.0 108.4 L16.5 110.7 L17.0 111.2 L17.5 118.8 L18.0 122.2 L18.5 123.5 L19.0 122.3 L19.5 126.0 L20.0 125.8 L20.5 127.9 L21.0 128.6 L21.5 127.2 L22.0 128.4 L22.5 128.7 L23.0 131.2 L23.5 133.6 L24.0 137.2 L24.5 139.3 L25.0 137.9 L25.5 141.5 L26.0 139.4 L26.5 138.0 L27.0 138.8 L27.5 136.2 L28.0 134.3 L28.5 135.4 L29.0 136.8 L29.5 134.7 L30.0 138.9 L30.5 135.6 L31.0 139.0 L31.5 138.4 L32.0 134.1 L32.5 136.2 L33.0 133.5 L33.5 133.3 L34.0 130.0 L34.5 130.0 L35.0 130.3 L35.5 133.2 L36.0 130.0 L36.5 132.1 L37.0 136.7 L37.5 141.8 L38.0 144.4 L38.5 148.8 L39.0 153.9 L39.5 159.3 L40.0 158.0 L40.5 160.0 L41.0 159.5 L41.5 159.1 L42.0 155.1 L42.5 157.3 L43.0 152.4 L43.5 151.9 L44.0 151.4 L44.5 151.7 L45.0 148.4 L45.5 149.7 L46.0 147.2 L46.5 147.7 L47.0 149.3 L47.5 150.2 L48.0 151.3 L48.5 154.1 L49.0 158.8 L49.5 162.5 L50.0 161.6 L50.5 163.7 L51.0 168.8 L51.5 168.0 L52.0 168.5 L52.5 168.9 L53.0 171.4 L53.5 172.8 L54.0 171.8 L54.5 172.2 L55.0 171.2 L55.5 175.2 L56.0 172.1 L56.5 174.5 L57.0 176.4 L57.5 173.8 L58.0 176.5 L58.5 177.7 L59.0 176.7 L59.5 177.7 L60.0 175.2 L60.5 176.8 L61.0 176.0 L61.5 179.1 L62.0 177.2 L62.5 177.7 L63.0 179.9 L63.5 179.2 L64.0 179.6 L64.5 177.5 L65.0 177.5 L65.5 178.4 L66.0 177.3 L66.5 176.5 L67.0 176.9 L67.5 175.8 L68.0 176.7 L68.5 179.0 L69.0 178.8 L69.5 177.3 L70.0 176.5 L70.5 175.6 L71.0 174.4 L71.5 174.8 L72.0 176.6 L72.5 176.7 L73.0 174.4 L73.5 176.1 L74.0 175.9 L74.5 175.5 L75.0 175.3 L75.5 175.6 L76.0 173.9 L76.5 175.2 L77.0 173.4 L77.5 174.2 L78.0 175.2 L78.5 174.8 L79.0 173.3 L79.5 176.1 L80.0 175.2 L80.5 175.2 L81.0 173.1 L81.5 175.5 L82.0 174.6 L82.5 176.5 L83.0 175.9 L83.5 177.5 L84.0 177.1 L84.5 178.0 L85.0 176.4 L85.5 177.7 L86.0 178.1 L86.5 178.6 L87.0 176.7 L87.5 178.8 L88.0 179.0 L88.5 178.3 L89.0 179.6 L89.5 179.6 L90.0 177.9 L90.5 178.0 L91.0 176.7 L91.5 179.5 L92.0 180.1 L92.5 178.4 L93.0 179.4 L93.5 179.6 L94.0 179.8 L94.5 177.8 L95.0 180.4 L95.5 179.7 L96.0 180.2 L96.5 179.4 L97.0 180.3 L97.5 181.1 L98.0 181.1 L98.5 182.0 L99.0 179.8 L99.5 180.9 L100.0 182.6 L100.5 184.0 L101.0 182.9 L101.5 185.4 L102.0 185.9 L102.5 184.3 L103.0 186.7 L103.5 186.4 L104.0 186.4 L104.5 187.4 L105.0 188.9 L105.5 188.9 L106.0 189.5 L106.5 189.4 L107.0 191.7 L107.5 191.9 L108.0 193.3 L108.5 193.8 L109.0 192.9 L109.5 196.1 L110.0 193.0 L110.5 195.3 L111.0 195.4 L111.5 196.6 L112.0 196.1 L112.5 199.7 L113.0 198.5 L113.5 197.8 L114.0 200.8 L114.5 199.4 L115.0 201.8 L115.5 201.7 L116.0 203.3 L116.5 205.4 L117.0 205.4 L117.5 204.4 L118.0 206.6 L118.5 206.5 L119.0 206.0 L119.5 205.7 L120.0 208.1 L120.5 208.5 L121.0 210.7 L121.5 211.3 L122.0 210.4 L122.5 210.0 L123.0 212.8 L123.5 209.8 L124.0 210.8 L124.5 213.2 L125.0 214.0 L125.5 212.7 L126.0 215.3 L126.5 216.9 L127.0 215.4 L127.5 216.2 L128.0 216.0 L128.5 216.9 L129.0 220.1 L129.5 218.1 L130.0 220.8 L130.5 221.1 L131.0 220.2 L131.5 219.2 L132.0 222.5 L132.5 221.0 L133.0 221.1 L133.5 221.1 L134.0 224.1 L134.5 222.6 L135.0 222.1 L135.5 223.3 L136.0 222.2 L136.5 224.5 L137.0 224.2 L137.5 223.9 L138.0 226.2 L138.5 226.8 L139.0 223.9 L139.5 226.3 L140.0 225.6 L140.5 228.6 L141.0 228.3 L141.5 226.5 L142.0 227.0 L142.5 226.9 L143.0 230.6 L143.5 228.1 L144.0 229.7 L144.5 229.5 L145.0 230.6 L145.5 230.6 L146.0 231.4 L146.5 229.1 L147.0 231.8 L147.5 230.2 L148.0 231.3 L148.5 230.7 L149.0 230.8 L149.5 231.9 L150.0 231.9 L150.5 231.6 L151.0 233.4 L151.5 233.0 L152.0 230.9 L152.5 232.0 L153.0 233.0 L153.5 235.1 L154.0 235.2 L154.5 234.0 L155.0 232.1 L155.5 235.3 L156.0 234.1 L156.5 234.9 L157.0 235.6 L157.5 235.5 L158.0 235.1 L158.5 237.0 L159.0 235.1 L159.5 235.4 L160.0 237.4 L160.5 234.9 L161.0 235.5 L161.5 237.7 L162.0 234.8 L162.5 238.1 L163.0 237.6 L163.5 236.7 L164.0 236.3 L164.5 238.4 L165.0 239.1 L165.5 236.1 L166.0 237.6 L166.5 238.1 L167.0 238.0 L167.5 237.3 L168.0 236.5 L168.5 238.2 L169.0 239.0 L169.5 236.0 L170.0 236.5 L170.5 238.8 L171.0 238.7 L171.5 238.1 L172.0 235.5 L172.5 238.2 L173.0 239.2 L173.5 239.2 L174.0 237.9 L174.5 235.3 L175.0 238.4 L175.5 236.0 L176.0 237.9 L176.5 239.3 L177.0 238.5 L177.5 236.4 L178.0 237.2 L178.5 239.8 L179.0 236.9 L179.5 238.9 L180.0 238.3 L180.5 237.5 L181.0 239.5 L181.5 237.1 L182.0 237.4 L182.5 238.4 L183.0 237.2 L183.5 237.1 L184.0 239.1 L184.5 239.8 L185.0 240.3 L185.5 237.6 L186.0 239.2 L186.5 239.0 L187.0 240.5 L187.5 240.4 L188.0 242.6 L188.5 240.7 L189.0 239.7 L189.5 242.7 L190.0 241.2 L190.5 244.0 L191.0 244.5 L191.5 247.0 L192.0 246.6 L192.5 247.8 L193.0 247.3 L193.5 249.4 L194.0 249.1 L194.5 252.1 L195.0 252.1 L195.5 251.1 L196.0 252.1 L196.5 253.3 L197.0 255.3 L197.5 253.7 L198.0 256.5 L198.5 256.8 L199.0 255.1 L199.5 258.1 L200.0 256.4 L200.5 256.9 L201.0 259.2 L201.5 258.2 L202.0 261.1 L202.5 259.9 L203.0 259.7 L203.5 262.0 L204.0 259.7 L204.5 263.5 L205.0 261.9 L205.5 263.4 L206.0 267.7 L206.5 267.6 L207.0 266.9 L207.5 267.3 L208.0 271.6 L208.5 271.2 L209.0 272.6 L209.5 270.7 L210.0 273.5 L210.5 272.3 L211.0 271.6 L211.5 271.8 L212.0 272.8 L212.5 271.6 L213.0 271.5 L213.5 271.2 L214.0 274.7 L214.5 274.6 L215.0 275.9 L215.5 275.1 L216.0 277.4 L216.5 277.6 L217.0 279.4 L217.5 280.8 L218.0 283.0 L218.5 283.1 L219.0 283.4 L219.5 284.5 L220.0 286.5 L220.5 287.2 L221.0 291.9 L221.5 291.6 L222.0 294.0 L222.5 292.3 L223.0 295.4 L223.5 298.3 L224.0 298.5 L224.5 298.5 L225.0 299.4 L225.5 298.6 L226.0 299.6 L226.5 300.6 L227.0 302.5 L227.5 302.5 L227.5 329 Z" fill="#8a3cbf"/><rect x="0.5" y="0.5" width="516" height="328" fill="none" stroke="#000" stroke-width="1.5"/></svg>
<div class="t" style="left:147.50px;top:484.94px;font-size:12px;color:#000;font-weight:bold;transform:scaleX(0.9899);transform-origin:0 0;">-24dB</div>
<div class="r" style="left:181px;top:490px;width:3px;height:1px;background:#000"></div>
<div class="t" style="left:147.50px;top:512.44px;font-size:12px;color:#000;font-weight:normal;transform:scaleX(1.0089);transform-origin:0 0;">-30dB</div>
<div class="r" style="left:181px;top:518px;width:3px;height:1px;background:#000"></div>
<div class="t" style="left:147.50px;top:539.94px;font-size:12px;color:#000;font-weight:normal;transform:scaleX(1.0089);transform-origin:0 0;">-36dB</div>
<div class="r" style="left:181px;top:545px;width:3px;height:1px;background:#000"></div>
<div class="t" style="left:147.50px;top:567.44px;font-size:12px;color:#000;font-weight:normal;transform:scaleX(1.0089);transform-origin:0 0;">-42dB</div>
<div class="r" style="left:181px;top:573px;width:3px;height:1px;background:#000"></div>
<div class="t" style="left:147.50px;top:594.94px;font-size:12px;color:#000;font-weight:bold;transform:scaleX(0.9899);transform-origin:0 0;">-48dB</div>
<div class="r" style="left:181px;top:600px;width:3px;height:1px;background:#000"></div>
<div class="t" style="left:147.50px;top:622.44px;font-size:12px;color:#000;font-weight:normal;transform:scaleX(1.0089);transform-origin:0 0;">-54dB</div>
<div class="r" style="left:181px;top:628px;width:3px;height:1px;background:#000"></div>
<div class="t" style="left:147.50px;top:649.94px;font-size:12px;color:#000;font-weight:normal;transform:scaleX(1.0089);transform-origin:0 0;">-60dB</div>
<div class="r" style="left:181px;top:655px;width:3px;height:1px;background:#000"></div>
<div class="t" style="left:147.50px;top:677.44px;font-size:12px;color:#000;font-weight:normal;transform:scaleX(1.0089);transform-origin:0 0;">-66dB</div>
<div class="r" style="left:181px;top:683px;width:3px;height:1px;background:#000"></div>
<div class="t" style="left:147.50px;top:704.94px;font-size:12px;color:#000;font-weight:bold;transform:scaleX(0.9899);transform-origin:0 0;">-72dB</div>
<div class="r" style="left:181px;top:710px;width:3px;height:1px;background:#000"></div>
<div class="t" style="left:147.50px;top:732.44px;font-size:12px;color:#000;font-weight:normal;transform:scaleX(1.0089);transform-origin:0 0;">-78dB</div>
<div class="r" style="left:181px;top:738px;width:3px;height:1px;background:#000"></div>
<div class="t" style="left:147.50px;top:759.94px;font-size:12px;color:#000;font-weight:normal;transform:scaleX(1.0089);transform-origin:0 0;">-84dB</div>
<div class="r" style="left:181px;top:765px;width:3px;height:1px;background:#000"></div>
<div class="t" style="left:147.50px;top:779.94px;font-size:12px;color:#000;font-weight:normal;transform:scaleX(1.0089);transform-origin:0 0;">-90dB</div>
<div class="r" style="left:181px;top:785px;width:3px;height:1px;background:#000"></div>
<div class="r" style="left:181px;top:793px;width:3px;height:1px;background:#000"></div>
<div class="r" style="left:240px;top:794px;width:1px;height:3px;background:#000"></div>
<div class="r" style="left:293px;top:794px;width:1px;height:4px;background:#000"></div>
<div class="r" style="left:347px;top:794px;width:1px;height:3px;background:#000"></div>
<div class="r" style="left:401px;top:794px;width:1px;height:4px;background:#000"></div>
<div class="r" style="left:454px;top:794px;width:1px;height:3px;background:#000"></div>
<div class="r" style="left:508px;top:794px;width:1px;height:4px;background:#000"></div>
<div class="r" style="left:562px;top:794px;width:1px;height:3px;background:#000"></div>
<div class="r" style="left:615px;top:794px;width:1px;height:4px;background:#000"></div>
<div class="r" style="left:669px;top:794px;width:1px;height:3px;background:#000"></div>
<div class="t" style="left:186.00px;top:801.27px;font-size:11.5px;color:#000;font-weight:bold;transform:scaleX(1.0026);transform-origin:0 0;">0Hz</div>
<div class="t" style="left:219.00px;top:801.27px;font-size:11.5px;color:#000;font-weight:normal;transform:scaleX(1.0494);transform-origin:0 0;">5000Hz</div>
<div class="t" style="left:269.40px;top:801.27px;font-size:11.5px;color:#000;font-weight:bold;transform:scaleX(1.0449);transform-origin:0 0;">10000Hz</div>
<div class="t" style="left:377.00px;top:801.27px;font-size:11.5px;color:#000;font-weight:bold;transform:scaleX(1.0557);transform-origin:0 0;">20000Hz</div>
<div class="t" style="left:484.00px;top:801.27px;font-size:11.5px;color:#000;font-weight:bold;transform:scaleX(1.0536);transform-origin:0 0;">30000Hz</div>
<div class="t" style="left:591.00px;top:801.27px;font-size:11.5px;color:#000;font-weight:bold;transform:scaleX(1.0514);transform-origin:0 0;">40000Hz</div>
<div class="t" style="left:189.50px;top:826.27px;font-size:11.5px;color:#000;font-weight:normal;transform:scaleX(0.9407);transform-origin:0 0;">Cursor: 1404 Hz (F6) = -46 dB</div>
<div class="t" style="left:347.00px;top:826.27px;font-size:11.5px;color:#000;font-weight:normal;transform:scaleX(0.9406);transform-origin:0 0;">Peak: 1385 Hz (F6) = -43.9 dB</div>
<div class="t" style="left:146.50px;top:859.07px;font-size:11.5px;color:#000;font-weight:normal;transform:scaleX(0.9368);transform-origin:0 0;">Algorithm:</div>
<div class="r" style="left:207px;top:854px;width:154px;height:21px;background:linear-gradient(#f3f3f3,#e3e3e3);border:1px solid #acacac;box-sizing:border-box"></div>
<div class="t" style="left:210.60px;top:859.27px;font-size:11.5px;color:#000;font-weight:normal;transform:scaleX(0.9023);transform-origin:0 0;">Spectrum</div>
<svg class="r" style="left:347px;top:862px" width="9" height="6" viewBox="0 0 9 6"><path d="M0.5 0.5 L4.5 4.5 L8.5 0.5" fill="none" stroke="#444" stroke-width="1.5"/></svg>
<div class="t" style="left:370.00px;top:859.07px;font-size:11.5px;color:#000;font-weight:normal;transform:scaleX(0.8919);transform-origin:0 0;">Size:</div>
<div class="r" style="left:406px;top:854px;width:112px;height:21px;background:linear-gradient(#f3f3f3,#e3e3e3);border:1px solid #acacac;box-sizing:border-box"></div>
<div class="t" style="left:410.60px;top:859.27px;font-size:11.5px;color:#000;font-weight:normal;transform:scaleX(0.9099);transform-origin:0 0;">16384</div>
<svg class="r" style="left:504px;top:862px" width="9" height="6" viewBox="0 0 9 6"><path d="M0.5 0.5 L4.5 4.5 L8.5 0.5" fill="none" stroke="#444" stroke-width="1.5"/></svg>
<div class="r" style="left:538px;top:854px;width:73px;height:21px;background:linear-gradient(#f3f3f3,#e3e3e3);border:1px solid #acacac;box-sizing:border-box"></div>
<div class="t" style="left:551.30px;top:859.27px;font-size:11.5px;color:#000;font-weight:normal;transform:scaleX(1.0204);transform-origin:0 0;">Export...</div>
<div class="r" style="left:628px;top:854px;width:74px;height:21px;background:linear-gradient(#f3f3f3,#e3e3e3);border:1px solid #acacac;box-sizing:border-box"></div>
<div class="t" style="left:648.00px;top:859.27px;font-size:11.5px;color:#000;font-weight:normal;transform:scaleX(0.9445);transform-origin:0 0;">Replot</div>
<div class="t" style="left:146.50px;top:887.17px;font-size:11.5px;color:#000;font-weight:normal;transform:scaleX(0.9472);transform-origin:0 0;">Function:</div>
<div class="r" style="left:207px;top:882px;width:154px;height:21px;background:linear-gradient(#f3f3f3,#e3e3e3);border:1px solid #acacac;box-sizing:border-box"></div>
<div class="t" style="left:210.60px;top:887.27px;font-size:11.5px;color:#000;font-weight:normal;transform:scaleX(0.9263);transform-origin:0 0;">Hanning window</div>
<svg class="r" style="left:347px;top:890px" width="9" height="6" viewBox="0 0 9 6"><path d="M0.5 0.5 L4.5 4.5 L8.5 0.5" fill="none" stroke="#444" stroke-width="1.5"/></svg>
<div class="t" style="left:370.60px;top:887.17px;font-size:11.5px;color:#000;font-weight:normal;transform:scaleX(0.9390);transform-origin:0 0;">Axis:</div>
<div class="r" style="left:406px;top:882px;width:112px;height:21px;background:linear-gradient(#f3f3f3,#e3e3e3);border:1px solid #acacac;box-sizing:border-box"></div>
<div class="t" style="left:409.00px;top:887.27px;font-size:11.5px;color:#000;font-weight:normal;transform:scaleX(0.9456);transform-origin:0 0;">Linear frequency</div>
<svg class="r" style="left:504px;top:890px" width="9" height="6" viewBox="0 0 9 6"><path d="M0.5 0.5 L4.5 4.5 L8.5 0.5" fill="none" stroke="#444" stroke-width="1.5"/></svg>
<div class="r" style="left:538px;top:882px;width:73px;height:21px;background:linear-gradient(#f3f3f3,#e3e3e3);border:1px solid #3c7fb1;box-shadow:inset 0 0 0 1px #a8d2f0;box-sizing:border-box"></div>
<div class="t" style="left:560.60px;top:887.27px;font-size:11.5px;color:#000;font-weight:normal;transform:scaleX(0.8740);transform-origin:0 0;">Close</div>
<div class="t" style="left:645.60px;top:889.27px;font-size:11.5px;color:#000;font-weight:normal;transform:scaleX(0.8517);transform-origin:0 0;">Grids</div>
<div class="r" style="left:673px;top:888px;width:13px;height:13px;background:#fff;border:1px solid #333;box-sizing:border-box"></div>
<svg class="r" style="left:674.5px;top:889.5px" width="10" height="10" viewBox="0 0 10 10"><path d="M1 5 L4 8.5 L9 1" fill="none" stroke="#000" stroke-width="1.6"/></svg>
<svg class="r" style="left:695px;top:921px" width="10" height="10" viewBox="0 0 10 10"><rect x="7" y="1" width="1.5" height="1.5" fill="#a0a0a0"/><rect x="4" y="4" width="1.5" height="1.5" fill="#a0a0a0"/><rect x="7" y="4" width="1.5" height="1.5" fill="#a0a0a0"/><rect x="1" y="7" width="1.5" height="1.5" fill="#a0a0a0"/><rect x="4" y="7" width="1.5" height="1.5" fill="#a0a0a0"/><rect x="7" y="7" width="1.5" height="1.5" fill="#a0a0a0"/></svg>
<div class="r" style="left:0px;top:953px;width:1920px;height:18px;background:#f0f0f0"></div>
<div class="r" style="left:0px;top:953px;width:1920px;height:1px;background:#fff"></div>
<div class="r" style="left:153px;top:954px;width:1393px;height:15px;background:#cdcdcd"></div>
<svg class="r" style="left:140px;top:957px" width="8" height="10" viewBox="0 0 8 10"><path d="M6 1 L2 5 L6 9" fill="none" stroke="#444" stroke-width="1.6"/></svg>
<svg class="r" style="left:1890px;top:957px" width="8" height="10" viewBox="0 0 8 10"><path d="M2 1 L6 5 L2 9" fill="none" stroke="#444" stroke-width="1.6"/></svg>
<div class="r" style="left:0px;top:970px;width:1920px;height:57px;background:#f0f0f0"></div>
<div class="r" style="left:0px;top:970px;width:1920px;height:1px;background:#c3c3c3"></div>
<div class="r" style="left:0px;top:1026px;width:1920px;height:1px;background:#c3c3c3"></div>
<div class="r" style="left:1px;top:971px;width:10px;height:55px;border-left:1px solid #fff;border-top:1px solid #fff;border-right:1px solid #c0c0c0;border-bottom:1px solid #c0c0c0;box-sizing:border-box"></div>
<svg class="r" style="left:1px;top:971px" width="10" height="55" viewBox="0 0 10 55"><rect x="3" y="5" width="4" height="1" fill="#a8a8a8"/><rect x="3" y="9" width="4" height="1" fill="#a8a8a8"/><rect x="3" y="13" width="4" height="1" fill="#a8a8a8"/><rect x="3" y="17" width="4" height="1" fill="#a8a8a8"/><rect x="3" y="21" width="4" height="1" fill="#a8a8a8"/><rect x="3" y="25" width="4" height="1" fill="#a8a8a8"/><rect x="3" y="29" width="4" height="1" fill="#a8a8a8"/><rect x="3" y="33" width="4" height="1" fill="#a8a8a8"/><rect x="3" y="37" width="4" height="1" fill="#a8a8a8"/><rect x="3" y="41" width="4" height="1" fill="#a8a8a8"/><rect x="3" y="45" width="4" height="1" fill="#a8a8a8"/><rect x="3" y="49" width="4" height="1" fill="#a8a8a8"/></svg>
<div class="t" style="left:12.30px;top:978.00px;font-size:13px;color:#000;font-weight:normal;transform:scaleX(0.9110);transform-origin:0 0;">Project Rate (Hz):</div>
<div class="r" style="left:12px;top:995px;width:80px;height:23px;background:#fff;border:1px solid #acacac;box-sizing:border-box"></div>
<div class="t" style="left:18.40px;top:999.00px;font-size:13px;color:#000;font-weight:normal;transform:scaleX(0.9349);transform-origin:0 0;">96000</div>
<svg class="r" style="left:79px;top:1004px" width="9" height="6" viewBox="0 0 9 6"><path d="M0.5 0.5 L4.5 4.5 L8.5 0.5" fill="none" stroke="#444" stroke-width="1.5"/></svg>
<div class="r" style="left:113px;top:993px;width:1px;height:26px;background:#a0a0a0"></div>
<div class="t" style="left:124.20px;top:999.60px;font-size:13px;color:#000;font-weight:normal;transform:scaleX(0.9291);transform-origin:0 0;">Snap To</div>
<div class="r" style="left:172px;top:1000px;width:13px;height:13px;background:#fff;border:1px solid #333;box-sizing:border-box"></div>
<div class="t" style="left:191.30px;top:977.70px;font-size:13px;color:#000;font-weight:normal;transform:scaleX(0.9211);transform-origin:0 0;">Selection Start:</div>
<div class="r" style="left:191px;top:996px;width:150px;height:20px;background:#c4c4c4;border-left:2px solid #7a7a7a;border-top:2px solid #7a7a7a;border-right:1px solid #fff;border-bottom:1px solid #fff;box-sizing:border-box"></div>
<div class="r" style="left:330px;top:997px;width:10px;height:18px;background:#d6d6d6;border-left:1px solid #fff;box-sizing:border-box"></div>
<svg class="r" style="left:331px;top:1003px" width="9" height="6" viewBox="0 0 9 6"><path d="M0 0 H9 L4.5 5 Z" fill="#000"/></svg>
<div class="r" style="left:348px;top:996px;width:150px;height:20px;background:#c4c4c4;border-left:2px solid #7a7a7a;border-top:2px solid #7a7a7a;border-right:1px solid #fff;border-bottom:1px solid #fff;box-sizing:border-box"></div>
<div class="r" style="left:487px;top:997px;width:10px;height:18px;background:#d6d6d6;border-left:1px solid #fff;box-sizing:border-box"></div>
<svg class="r" style="left:488px;top:1003px" width="9" height="6" viewBox="0 0 9 6"><path d="M0 0 H9 L4.5 5 Z" fill="#000"/></svg>
<div class="r" style="left:505px;top:993px;width:1px;height:26px;background:#a0a0a0"></div>
<div class="r" style="left:512px;top:996px;width:150px;height:20px;background:#c4c4c4;border-left:2px solid #7a7a7a;border-top:2px solid #7a7a7a;border-right:1px solid #fff;border-bottom:1px solid #fff;box-sizing:border-box"></div>
<div class="r" style="left:651px;top:997px;width:10px;height:18px;background:#d6d6d6;border-left:1px solid #fff;box-sizing:border-box"></div>
<svg class="r" style="left:652px;top:1003px" width="9" height="6" viewBox="0 0 9 6"><path d="M0 0 H9 L4.5 5 Z" fill="#000"/></svg>
<div class="t" style="left:195.20000000000002px;top:1000.00px;font-size:13px;color:#2323c8;font-weight:normal;">0</div>
<div class="t" style="left:205.20000000000002px;top:1000.00px;font-size:13px;color:#2323c8;font-weight:normal;">0</div>
<div class="t" style="left:218.3px;top:1000.00px;font-size:13px;color:#000;font-weight:normal;">h</div>
<div class="t" style="left:229.60000000000002px;top:1000.00px;font-size:13px;color:#2323c8;font-weight:normal;">0</div>
<div class="t" style="left:239.70000000000002px;top:1000.00px;font-size:13px;color:#2323c8;font-weight:normal;">0</div>
<div class="t" style="left:253.3px;top:1000.00px;font-size:13px;color:#000;font-weight:normal;">m</div>
<div class="t" style="left:267.7px;top:1000.00px;font-size:13px;color:#2323c8;font-weight:normal;">0</div>
<div class="t" style="left:277.9px;top:1000.00px;font-size:13px;color:#2323c8;font-weight:normal;">0</div>
<div class="t" style="left:287.7px;top:1000.00px;font-size:13px;color:#2323c8;font-weight:normal;">.</div>
<div class="t" style="left:291.7px;top:1000.00px;font-size:13px;color:#2323c8;font-weight:normal;">0</div>
<div class="t" style="left:301.9px;top:1000.00px;font-size:13px;color:#2323c8;font-weight:normal;">0</div>
<div class="t" style="left:311.9px;top:1000.00px;font-size:13px;color:#2323c8;font-weight:normal;">0</div>
<div class="t" style="left:324.9px;top:1000.00px;font-size:13px;color:#000;font-weight:normal;">s</div>
<div class="t" style="left:352.2px;top:1000.00px;font-size:13px;color:#2323c8;font-weight:normal;">0</div>
<div class="t" style="left:362.2px;top:1000.00px;font-size:13px;color:#2323c8;font-weight:normal;">0</div>
<div class="t" style="left:375.3px;top:1000.00px;font-size:13px;color:#000;font-weight:normal;">h</div>
<div class="t" style="left:386.59999999999997px;top:1000.00px;font-size:13px;color:#2323c8;font-weight:normal;">0</div>
<div class="t" style="left:396.7px;top:1000.00px;font-size:13px;color:#2323c8;font-weight:normal;">3</div>
<div class="t" style="left:410.3px;top:1000.00px;font-size:13px;color:#000;font-weight:normal;">m</div>
<div class="t" style="left:424.7px;top:1000.00px;font-size:13px;color:#2323c8;font-weight:normal;">4</div>
<div class="t" style="left:434.9px;top:1000.00px;font-size:13px;color:#2323c8;font-weight:normal;">4</div>
<div class="t" style="left:444.7px;top:1000.00px;font-size:13px;color:#2323c8;font-weight:normal;">.</div>
<div class="t" style="left:448.7px;top:1000.00px;font-size:13px;color:#2323c8;font-weight:normal;">2</div>
<div class="t" style="left:458.9px;top:1000.00px;font-size:13px;color:#2323c8;font-weight:normal;">4</div>
<div class="t" style="left:468.9px;top:1000.00px;font-size:13px;color:#2323c8;font-weight:normal;">6</div>
<div class="t" style="left:481.9px;top:1000.00px;font-size:13px;color:#000;font-weight:normal;">s</div>
<div class="t" style="left:516.1999999999999px;top:1000.00px;font-size:13px;color:#2323c8;font-weight:normal;">0</div>
<div class="t" style="left:526.1999999999999px;top:1000.00px;font-size:13px;color:#2323c8;font-weight:normal;">0</div>
<div class="t" style="left:539.3px;top:1000.00px;font-size:13px;color:#000;font-weight:normal;">h</div>
<div class="t" style="left:550.5999999999999px;top:1000.00px;font-size:13px;color:#2323c8;font-weight:normal;">0</div>
<div class="t" style="left:560.6999999999999px;top:1000.00px;font-size:13px;color:#2323c8;font-weight:normal;">0</div>
<div class="t" style="left:574.3px;top:1000.00px;font-size:13px;color:#000;font-weight:normal;">m</div>
<div class="t" style="left:588.6999999999999px;top:1000.00px;font-size:13px;color:#2323c8;font-weight:normal;">0</div>
<div class="t" style="left:598.9px;top:1000.00px;font-size:13px;color:#2323c8;font-weight:normal;">0</div>
<div class="t" style="left:608.6999999999999px;top:1000.00px;font-size:13px;color:#2323c8;font-weight:normal;">.</div>
<div class="t" style="left:612.6999999999999px;top:1000.00px;font-size:13px;color:#2323c8;font-weight:normal;">0</div>
<div class="t" style="left:622.9px;top:1000.00px;font-size:13px;color:#2323c8;font-weight:normal;">0</div>
<div class="t" style="left:632.9px;top:1000.00px;font-size:13px;color:#2323c8;font-weight:normal;">0</div>
<div class="t" style="left:645.9px;top:1000.00px;font-size:13px;color:#000;font-weight:normal;">s</div>
<div class="r" style="left:348px;top:978px;width:13px;height:13px;border-radius:50%;border:1px solid #333;box-sizing:border-box;background:#fff"></div>
<div class="r" style="left:351.5px;top:981.5px;width:6px;height:6px;border-radius:50%;background:#111"></div>
<div class="t" style="left:364.20px;top:977.70px;font-size:13px;color:#000;font-weight:normal;transform:scaleX(0.9340);transform-origin:0 0;">End</div>
<div class="r" style="left:393.5px;top:978px;width:13px;height:13px;border-radius:50%;border:1px solid #333;box-sizing:border-box;background:#fff"></div>
<div class="t" style="left:410.80px;top:977.70px;font-size:13px;color:#000;font-weight:normal;transform:scaleX(0.9229);transform-origin:0 0;">Length</div>
<div class="t" style="left:512.00px;top:977.70px;font-size:13px;color:#000;font-weight:normal;transform:scaleX(0.9409);transform-origin:0 0;">Audio Position:</div>
<div class="r" style="left:0px;top:1027px;width:1920px;height:23px;background:#f0f0f0"></div>
<div class="r" style="left:1280px;top:1028px;width:1px;height:22px;background:#d0d0d0"></div>
<div class="r" style="left:0px;top:1050px;width:1920px;height:30px;background:linear-gradient(90deg,#7b8184 0%,#858280 3%,#80736a 8%,#8c786a 13%,#7a6050 21%,#8a6a58 29%,#7e6050 36%,#866656 44%,#7a5a4c 52%,#7a5548 57%,#6c5c5a 60%,#665a58 64%,#5e5a58 67.7%,#4e3c36 70.3%,#55403a 75.5%,#4a3c38 80.2%,#40464f 82.3%,#3e4752 100%)"></div>
<div class="r" style="left:42px;top:1051px;width:42px;height:29px;background:rgba(255,255,255,0.22);border:1px solid rgba(255,255,255,0.35);box-sizing:border-box"></div>
<div class="r" style="left:88px;top:1051px;width:42px;height:29px;background:rgba(255,255,255,0.22);border:1px solid rgba(255,255,255,0.35);box-sizing:border-box"></div>
<div class="r" style="left:180px;top:1051px;width:42px;height:29px;background:rgba(255,255,255,0.22);border:1px solid rgba(255,255,255,0.35);box-sizing:border-box"></div>
<div class="r" style="left:226px;top:1051px;width:42px;height:29px;background:rgba(255,255,255,0.22);border:1px solid rgba(255,255,255,0.35);box-sizing:border-box"></div>
<div class="r" style="left:1237px;top:1050px;width:44px;height:30px;background:#a9a9a9;border:1px solid #2a2a2a;box-shadow:inset 0 0 0 1px #f4f4f4;box-sizing:border-box"></div>
<svg class="r" style="left:13px;top:1058.5px" width="13" height="13" viewBox="0 0 15 15"><path d="M0 2 L6.5 1 V7 H0Z M7.5 0.9 L15 0 V7 H7.5Z M0 8 H6.5 V14 L0 13Z M7.5 8 H15 V15 L7.5 14.1Z" fill="#fff"/></svg>
<svg class="r" style="left:53px;top:1055.5px" width="19" height="19" viewBox="0 0 22 22"><ellipse cx="11" cy="11" rx="10" ry="4" fill="none" stroke="#f2b01e" stroke-width="1.6" transform="rotate(-25 11 11)"/><path d="M16 12 H6 Q6 6 11 6 Q16 6 16 11 M16 14 Q14 17 11 17 Q6 17 6 12" fill="none" stroke="#2a8ee0" stroke-width="2.6"/></svg>
<svg class="r" style="left:99.5px;top:1056.5px" width="17" height="17" viewBox="0 0 22 22"><rect x="1" y="5" width="20" height="14" fill="#f3c54a"/><rect x="3" y="9" width="16" height="8" fill="#7ec7f0"/><rect x="1" y="3" width="9" height="3" fill="#e6b030"/></svg>
<svg class="r" style="left:145.5px;top:1056.5px" width="17" height="17" viewBox="0 0 22 22"><rect x="1" y="1" width="20" height="20" rx="2" fill="#6fb4e8"/><circle cx="11" cy="11" r="7" fill="#f7a21b"/><path d="M9 7 L15 11 L9 15Z" fill="#fff"/></svg>
<svg class="r" style="left:191.5px;top:1056.5px" width="17" height="17" viewBox="0 0 22 22"><rect x="8" y="3" width="13" height="16" fill="#4aa0e0"/><rect x="1" y="5" width="12" height="13" fill="#0a6cc0"/><circle cx="7" cy="11.5" r="3.5" fill="none" stroke="#fff" stroke-width="2"/></svg>
<svg class="r" style="left:237.5px;top:1056.5px" width="17" height="17" viewBox="0 0 22 22"><circle cx="11" cy="11" r="9.5" fill="#1fa0e6"/><text x="11" y="16.5" font-size="15" font-weight="bold" text-anchor="middle" fill="#fff" font-family="Liberation Sans">S</text></svg>
<svg class="r" style="left:283.5px;top:1056.5px" width="17" height="17" viewBox="0 0 22 22"><rect x="1" y="5" width="12" height="13" fill="#0a6cc0"/><circle cx="7" cy="11.5" r="3.5" fill="none" stroke="#fff" stroke-width="2"/><path d="M14 11 L16.5 14 L21 7" fill="none" stroke="#0a6cc0" stroke-width="2"/></svg>
<svg class="r" style="left:329.5px;top:1056.5px" width="17" height="17" viewBox="0 0 22 22"><circle cx="7" cy="8" r="3.5" fill="#e0482a"/><circle cx="15" cy="8" r="3.5" fill="#e0482a"/><path d="M1 19 Q1 12 7 12 Q13 12 13 19Z M9 19 Q9 12 15 12 Q21 12 21 19Z" fill="#e0482a"/></svg>
<svg class="r" style="left:375.5px;top:1056.5px" width="17" height="17" viewBox="0 0 22 22"><rect x="2" y="2" width="18" height="18" fill="#6a3fb8"/><rect x="4" y="6" width="14" height="12" fill="#8a63d0"/><rect x="5.0" y="8" width="2" height="2" fill="#5030a0"/><rect x="5.0" y="11" width="2" height="2" fill="#5030a0"/><rect x="5.0" y="14" width="2" height="2" fill="#5030a0"/><rect x="8.2" y="8" width="2" height="2" fill="#5030a0"/><rect x="8.2" y="11" width="2" height="2" fill="#5030a0"/><rect x="8.2" y="14" width="2" height="2" fill="#5030a0"/><rect x="11.4" y="8" width="2" height="2" fill="#5030a0"/><rect x="11.4" y="11" width="2" height="2" fill="#5030a0"/><rect x="11.4" y="14" width="2" height="2" fill="#5030a0"/><rect x="14.600000000000001" y="8" width="2" height="2" fill="#5030a0"/><rect x="14.600000000000001" y="11" width="2" height="2" fill="#5030a0"/><rect x="14.600000000000001" y="14" width="2" height="2" fill="#5030a0"/></svg>
<div class="r" style="left:422px;top:1057px;width:16px;height:16px;background:#f4f4f4"></div>
<svg class="r" style="left:423px;top:1058px" width="14" height="14" viewBox="0 0 22 22"><ellipse cx="11" cy="11" rx="10" ry="4" fill="none" stroke="#f2b01e" stroke-width="1.6" transform="rotate(-25 11 11)"/><path d="M16 12 H6 Q6 6 11 6 Q16 6 16 11 M16 14 Q14 17 11 17 Q6 17 6 12" fill="none" stroke="#2a8ee0" stroke-width="2.6"/></svg>
<svg class="r" style="left:467.5px;top:1056.5px" width="17" height="17" viewBox="0 0 22 22"><path d="M2 4 L10 3 V10 H2Z M11 3 L20 2 V10 H11Z M2 11 H10 V18 L2 17Z M11 11 H20 V19 L11 18Z" fill="#8e2cae"/></svg>
<svg class="r" style="left:513.5px;top:1056.5px" width="17" height="17" viewBox="0 0 22 22"><circle cx="11" cy="11" r="10" fill="#2e8b2e"/><path d="M5 6 Q11 11 17 6 M5 16 Q11 11 17 16" stroke="#ffd23f" stroke-width="2" fill="none"/><circle cx="11" cy="11" r="4" fill="#e03030"/></svg>
<svg class="r" style="left:559.5px;top:1056.5px" width="17" height="17" viewBox="0 0 22 22"><rect x="2" y="2" width="18" height="18" fill="#3b5998"/><path d="M12.5 20 V11 H15 L15.5 8.5 H12.5 V7 Q12.5 6 13.5 6 H15.5 V3.5 H13 Q10 3.5 10 6.5 V8.5 H8 V11 H10 V20Z" fill="#fff"/></svg>
<svg class="r" style="left:605.5px;top:1056.5px" width="17" height="17" viewBox="0 0 22 22"><path d="M2 16 Q8 18 13 14 Q18 10 18 5 L21 3 L18.5 4 Q17 2 14.5 3 Q12 4 12.5 7 Q7 7 3 3 Q2 7 5 9 L3.5 9 Q4 12 7 12.5 Q5 14 2 16Z" fill="#1da1f2"/></svg>
<svg class="r" style="left:651.5px;top:1056.5px" width="17" height="17" viewBox="0 0 22 22"><rect x="2" y="2" width="18" height="18" fill="#f6b516"/><path d="M7 4 V16 L15 12 L10 10" fill="none" stroke="#1a1a1a" stroke-width="2"/></svg>
<svg class="r" style="left:697.5px;top:1056.5px" width="17" height="17" viewBox="0 0 22 22"><path d="M3 2 H8 V9 H14 V13 H8 V20 H3Z M14 12 H19 V20 H14Z" fill="#7ac142"/></svg>
<svg class="r" style="left:743.5px;top:1056.5px" width="17" height="17" viewBox="0 0 22 22"><rect x="1" y="2" width="20" height="18" fill="#1a3a8a"/><text x="11" y="14.5" font-size="8" font-weight="bold" text-anchor="middle" fill="#fff" font-family="Liberation Sans">TWC</text></svg>
<svg class="r" style="left:789.5px;top:1056.5px" width="17" height="17" viewBox="0 0 22 22"><path d="M4 14 Q11 10 18 14 Q11 19 4 14" fill="none" stroke="#e8a020" stroke-width="1.8"/><path d="M11 2 V17" stroke="#2a7ad0" stroke-width="2.2"/></svg>
<div class="r" style="left:836px;top:1057px;width:16px;height:16px;background:#f4f4f4"></div>
<svg class="r" style="left:837px;top:1058px" width="14" height="14" viewBox="0 0 22 22"><ellipse cx="11" cy="11" rx="10" ry="4" fill="none" stroke="#f2b01e" stroke-width="1.6" transform="rotate(-25 11 11)"/><path d="M16 12 H6 Q6 6 11 6 Q16 6 16 11 M16 14 Q14 17 11 17 Q6 17 6 12" fill="none" stroke="#2a8ee0" stroke-width="2.6"/></svg>
<svg class="r" style="left:881.5px;top:1056.5px" width="17" height="17" viewBox="0 0 22 22"><circle cx="11" cy="11" r="10" fill="#1e5fcf"/><rect x="6" y="7" width="10" height="8" fill="none" stroke="#fff" stroke-width="1.5"/></svg>
<div class="r" style="left:928px;top:1057px;width:16px;height:16px;background:#f4f4f4"></div>
<svg class="r" style="left:929px;top:1058px" width="14" height="14" viewBox="0 0 22 22"><ellipse cx="11" cy="11" rx="10" ry="4" fill="none" stroke="#f2b01e" stroke-width="1.6" transform="rotate(-25 11 11)"/><path d="M16 12 H6 Q6 6 11 6 Q16 6 16 11 M16 14 Q14 17 11 17 Q6 17 6 12" fill="none" stroke="#2a8ee0" stroke-width="2.6"/></svg>
<svg class="r" style="left:973.5px;top:1056.5px" width="17" height="17" viewBox="0 0 22 22"><rect x="1" y="1" width="20" height="20" rx="4" fill="#222"/><circle cx="11" cy="11" r="7" fill="#444" stroke="#aaa" stroke-width="1"/><rect x="8" y="10" width="6" height="5" fill="#ddd"/></svg>
<svg class="r" style="left:1019.5px;top:1056.5px" width="17" height="17" viewBox="0 0 22 22"><path d="M5 3 H20 L18 8 H9 L8.5 10 H17 L15.5 14 H7 L6 17 H15 L14 20 H1Z" fill="#d81818"/></svg>
<div class="r" style="left:1066px;top:1057px;width:16px;height:16px;background:#f4f4f4"></div>
<svg class="r" style="left:1067px;top:1058px" width="14" height="14" viewBox="0 0 22 22"><ellipse cx="11" cy="11" rx="10" ry="4" fill="none" stroke="#f2b01e" stroke-width="1.6" transform="rotate(-25 11 11)"/><path d="M16 12 H6 Q6 6 11 6 Q16 6 16 11 M16 14 Q14 17 11 17 Q6 17 6 12" fill="none" stroke="#2a8ee0" stroke-width="2.6"/></svg>
<svg class="r" style="left:1111.5px;top:1056.5px" width="17" height="17" viewBox="0 0 22 22"><rect x="2" y="2" width="18" height="18" fill="#1e88e5"/><rect x="4" y="5" width="14" height="13" fill="#fff"/><rect x="4" y="5" width="14" height="3" fill="#1e88e5"/><rect x="10" y="8" width="1.5" height="10" fill="#1e88e5"/></svg>
<svg class="r" style="left:1157.5px;top:1056.5px" width="17" height="17" viewBox="0 0 22 22"><rect x="1" y="1" width="20" height="20" fill="#f4f4f4"/><path d="M6 3 V15 Q6 19 11 19 Q16 19 16 15 V3" fill="none" stroke="#b01820" stroke-width="2.5"/></svg>
<svg class="r" style="left:1203.5px;top:1056.5px" width="17" height="17" viewBox="0 0 22 22"><rect x="1" y="1" width="20" height="20" fill="#f8f8f8"/><path d="M11 3 V19" stroke="#1a4a9a" stroke-width="1.6"/><path d="M8 6 Q14 8 8 11 Q14 13 8 16" fill="none" stroke="#1a4a9a" stroke-width="1.5"/></svg>
<svg class="r" style="left:1250px;top:1056px" width="18" height="17" viewBox="0 0 22 20"><path d="M4 12 Q4 2.5 11 2.5 Q18 2.5 18 12" fill="none" stroke="#1c2c90" stroke-width="2.6"/><rect x="2" y="10" width="4" height="8" rx="1.5" fill="#1c2c90"/><rect x="16" y="10" width="4" height="8" rx="1.5" fill="#1c2c90"/><rect x="7" y="9" width="8" height="9" rx="1" fill="#f5c20c"/><rect x="7" y="13" width="8" height="1.8" fill="#e22"/></svg>
<svg class="r" style="left:1724px;top:1061px" width="10" height="6" viewBox="0 0 10 6"><path d="M0 6 L5 1 L10 6Z" fill="#fff"/></svg>
<svg class="r" style="left:1746px;top:1057px" width="16" height="16" viewBox="0 0 16 16"><path d="M2 1 V16" stroke="#fff" stroke-width="1.5"/><path d="M3 2 H9 L10 4 H15 L13 7 L15 10 H9 L8 8 H3Z" fill="#fff"/></svg>
<svg class="r" style="left:1770px;top:1058px" width="18" height="14" viewBox="0 0 18 14"><path d="M3 13 Q0 13 0 10 Q0 7 3.5 7.5 Q4 3 8.5 3 Q12 3 13 6 Q17.5 5.5 17.5 9.5 Q17.5 13 14 13Z" fill="#fff"/></svg>
<svg class="r" style="left:1795px;top:1057px" width="18" height="17" viewBox="0 0 18 17"><circle cx="4" cy="4" r="3" fill="none" stroke="#fff" stroke-width="1.3"/><rect x="7" y="3" width="10" height="8" fill="none" stroke="#fff" stroke-width="1.3"/><path d="M4 7 V15 M9 15 H15 M12 11 V15" stroke="#fff" stroke-width="1.3"/></svg>
<svg class="r" style="left:1820px;top:1057px" width="16" height="16" viewBox="0 0 16 16"><path d="M1 5 H4 L8 1 V15 L4 11 H1Z" fill="#fff"/><path d="M10 5 Q12 8 10 11 M12 3 Q15 8 12 13" fill="none" stroke="#fff" stroke-width="1.2"/></svg>
<div class="t" style="left:1858.00px;top:1059.00px;font-size:13px;color:#fff;font-weight:normal;transform:scaleX(0.8262);transform-origin:0 0;">5:15 PM</div>
</body></html>
